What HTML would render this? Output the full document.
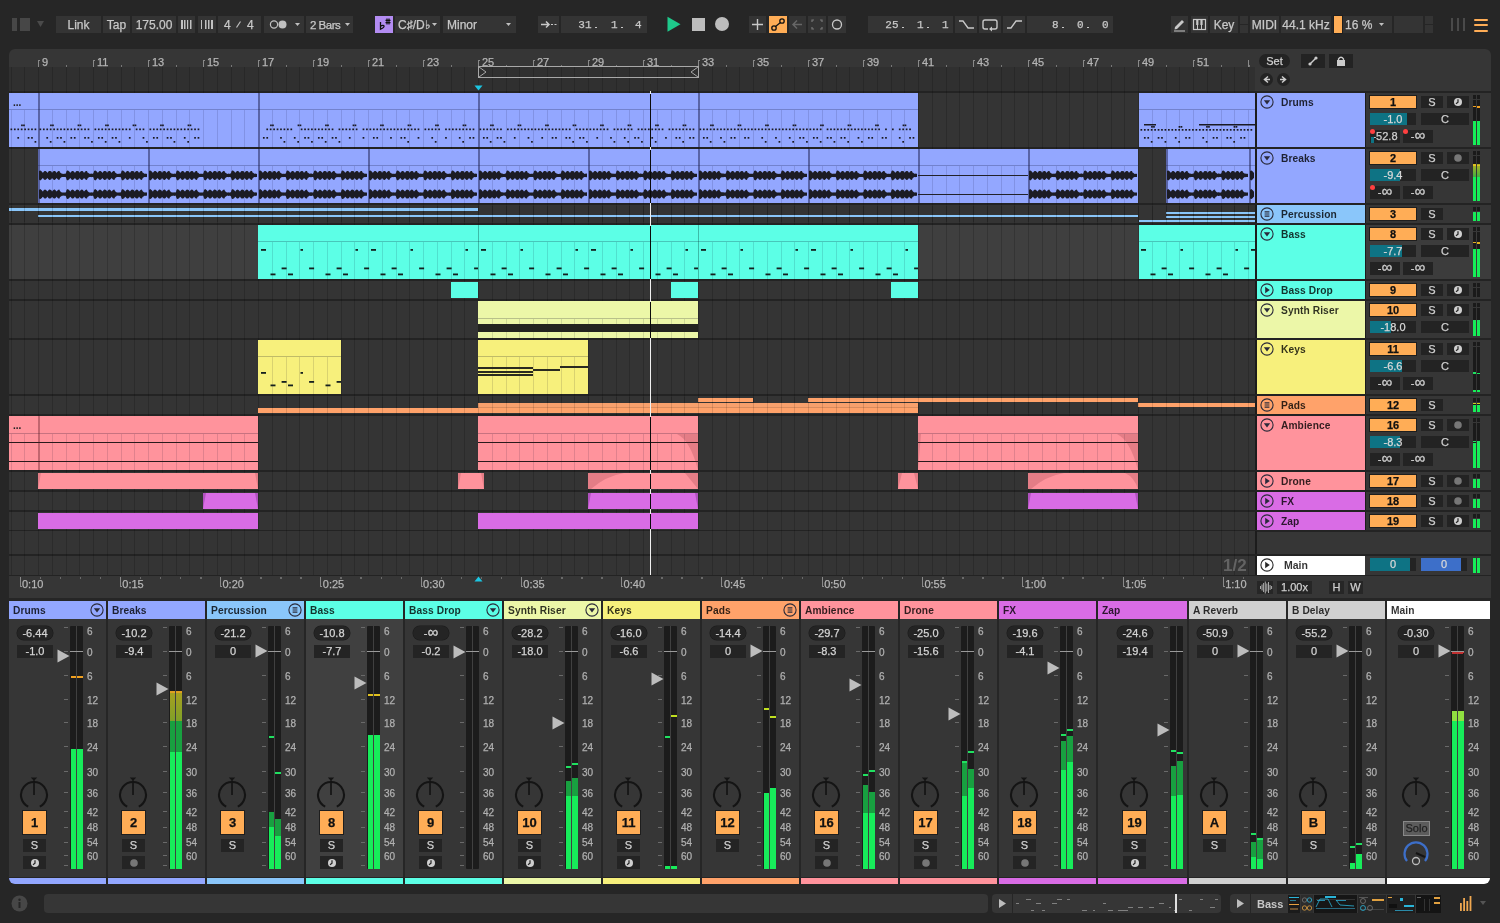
<!DOCTYPE html>
<html><head><meta charset="utf-8"><style>
html,body{margin:0;padding:0;}
body{width:1500px;height:923px;overflow:hidden;background:#262626;position:relative;font-family:"Liberation Sans",sans-serif;}
div{position:absolute;box-sizing:border-box;}
.t{white-space:nowrap;-webkit-text-stroke:0.25px currentColor;}
.b{-webkit-text-stroke:0;}
sup{vertical-align:top;}
#root{left:0;top:0;width:1500px;height:923px;will-change:transform;}
</style></head><body><div id="root">
<div style="left:12px;top:18px;width:5px;height:13px;background:#474747;"></div><div style="left:20px;top:18px;width:10px;height:13px;background:#474747;"></div><svg style="position:absolute;left:36px;top:20px;" width="9" height="8" viewBox="0 0 9 8"><path d="M1 1 L8 1 L4.5 7 Z" fill="#4a4a4a"/></svg><div style="left:56px;top:16px;width:45px;height:17px;background:#343434;"></div><div class="t" style="left:56px;top:17px;width:45px;height:17px;line-height:17px;text-align:center;font-size:12px;color:#c8c8c8;">Link</div><div style="left:103px;top:16px;width:27px;height:17px;background:#343434;"></div><div class="t" style="left:103px;top:17px;width:27px;height:17px;line-height:17px;text-align:center;font-size:12px;color:#c8c8c8;">Tap</div><div style="left:132px;top:16px;width:44px;height:17px;background:#343434;"></div><div class="t" style="left:132px;top:17px;width:44px;height:17px;line-height:17px;text-align:center;font-size:12px;color:#c8c8c8;">175.00</div><div style="left:178px;top:16px;width:17px;height:17px;background:#343434;"></div><svg style="position:absolute;left:178px;top:16px;" width="17" height="17" viewBox="0 0 17 17"><rect x="3" y="4" width="2" height="9" fill="#c0c0c0"/><rect x="6" y="4" width="1.5" height="9" fill="#c0c0c0"/><rect x="9" y="4" width="1.2" height="9" fill="#c0c0c0"/><rect x="12" y="4" width="1.5" height="9" fill="#c0c0c0"/></svg><div style="left:198px;top:16px;width:18px;height:17px;background:#343434;"></div><svg style="position:absolute;left:198px;top:16px;" width="18" height="17" viewBox="0 0 18 17"><rect x="3" y="4" width="1" height="9" fill="#c0c0c0"/><rect x="7" y="4" width="1.5" height="9" fill="#c0c0c0"/><rect x="10" y="4" width="1.5" height="9" fill="#c0c0c0"/><rect x="13" y="4" width="2" height="9" fill="#c0c0c0"/></svg><div style="left:218px;top:16px;width:43px;height:17px;background:#343434;"></div><div class="t" style="left:224px;top:17px;font-size:12px;line-height:17px;color:#c8c8c8;">4</div><div class="t" style="left:247px;top:17px;font-size:12px;line-height:17px;color:#c8c8c8;">4</div><svg style="position:absolute;left:218px;top:16px;" width="43" height="17" viewBox="0 0 43 17"><path d="M18.5 11.5 L22.5 5.5" stroke="#c0c0c0" stroke-width="1.2"/></svg><div style="left:264px;top:16px;width:40px;height:17px;background:#343434;"></div><svg style="position:absolute;left:264px;top:16px;" width="40" height="17" viewBox="0 0 40 17"><circle cx="10" cy="8.5" r="3.6" fill="none" stroke="#c0c0c0" stroke-width="1.2"/><circle cx="18.5" cy="8.5" r="4" fill="#c0c0c0"/><path d="M31 7 L36 7 L33.5 10 Z" fill="#c0c0c0"/></svg><div style="left:306px;top:16px;width:47px;height:17px;background:#343434;"></div><div class="t" style="left:310px;top:17px;width:43px;height:17px;line-height:17px;text-align:left;font-size:11.5px;color:#c8c8c8;"><span style="letter-spacing:-0.5px">2 Bars</span></div><svg style="position:absolute;left:306px;top:16px;" width="47" height="17" viewBox="0 0 47 17"><path d="M39 7 L44 7 L41.5 10 Z" fill="#c0c0c0"/></svg><div style="left:375px;top:16px;width:18px;height:17px;background:#b38cf2;"></div><svg style="position:absolute;left:375px;top:16px;" width="18" height="17" viewBox="0 0 18 17"><path d="M5.5 6 V13.2 Q9.5 11.5 9 10 Q8.5 8.6 5.5 10.2" stroke="#111" stroke-width="1.3" fill="none"/><path d="M10.5 4.3 H15.5 M10.5 6.6 H15.5 M12 2.5 V8.5 M14 2.5 V8.5" stroke="#111" stroke-width="1.2"/></svg><div style="left:395px;top:16px;width:45px;height:17px;background:#343434;"></div><div class="t" style="left:398px;top:17px;width:42px;height:17px;line-height:17px;text-align:left;font-size:12px;color:#c8c8c8;">C&#9839;/D&#9837;</div><svg style="position:absolute;left:395px;top:16px;" width="45" height="17" viewBox="0 0 45 17"><path d="M37 7 L42 7 L39.5 10 Z" fill="#c0c0c0"/></svg><div style="left:443px;top:16px;width:73px;height:17px;background:#343434;"></div><div class="t" style="left:447px;top:17px;width:69px;height:17px;line-height:17px;text-align:left;font-size:12px;color:#c8c8c8;">Minor</div><svg style="position:absolute;left:443px;top:16px;" width="73" height="17" viewBox="0 0 73 17"><path d="M63 7 L68 7 L65.5 10 Z" fill="#c0c0c0"/></svg><div style="left:538px;top:16px;width:21px;height:17px;background:#343434;"></div><svg style="position:absolute;left:538px;top:16px;" width="21" height="17" viewBox="0 0 21 17"><path d="M3 8.5 L11 8.5 M8 5.5 L11 8.5 L8 11.5" stroke="#c8c8c8" stroke-width="1.5" fill="none"/><path d="M13 8.5 L15 8.5 M16.5 8.5 L18.5 8.5" stroke="#c8c8c8" stroke-width="1.2"/></svg><div style="left:561px;top:16px;width:86px;height:17px;background:#343434;"></div><div class="t" style="left:531.5px;top:17px;width:60px;text-align:right;font-family:&quot;Liberation Mono&quot;,monospace;font-size:11px;line-height:17px;color:#c8c8c8;">31</div><div style="left:595.0px;top:26.5px;width:1.6px;height:1.6px;background:#c8c8c8;"></div><div class="t" style="left:557.5px;top:17px;width:60px;text-align:right;font-family:&quot;Liberation Mono&quot;,monospace;font-size:11px;line-height:17px;color:#c8c8c8;">1</div><div style="left:621.0px;top:26.5px;width:1.6px;height:1.6px;background:#c8c8c8;"></div><div class="t" style="left:581.5px;top:17px;width:60px;text-align:right;font-family:&quot;Liberation Mono&quot;,monospace;font-size:11px;line-height:17px;color:#c8c8c8;">4</div><div style="left:749px;top:16px;width:17px;height:17px;background:#343434;"></div><svg style="position:absolute;left:749px;top:16px;" width="17" height="17" viewBox="0 0 17 17"><path d="M8.5 3 V14 M3 8.5 H14" stroke="#c8c8c8" stroke-width="1.4"/></svg><div style="left:769px;top:16px;width:18px;height:17px;background:#ffad56;"></div><svg style="position:absolute;left:769px;top:16px;" width="18" height="17" viewBox="0 0 18 17"><circle cx="5" cy="12" r="2.2" fill="none" stroke="#111" stroke-width="1.3"/><circle cx="13" cy="5" r="2.2" fill="none" stroke="#111" stroke-width="1.3"/><path d="M6.5 10.5 L11.5 6.5" stroke="#111" stroke-width="1.3"/></svg><div style="left:789px;top:16px;width:17px;height:17px;background:#343434;"></div><svg style="position:absolute;left:789px;top:16px;" width="17" height="17" viewBox="0 0 17 17"><path d="M4 8.5 H13 M8 4.5 L4 8.5 L8 12.5" stroke="#666" stroke-width="1.5" fill="none"/></svg><div style="left:808px;top:16px;width:18px;height:17px;background:#343434;"></div><svg style="position:absolute;left:808px;top:16px;" width="18" height="17" viewBox="0 0 18 17"><path d="M4 6 V4 H6 M12 4 H14 V6 M14 11 V13 H12 M6 13 H4 V11" stroke="#777" stroke-width="1.2" fill="none"/></svg><div style="left:828px;top:16px;width:18px;height:17px;background:#343434;"></div><svg style="position:absolute;left:828px;top:16px;" width="18" height="17" viewBox="0 0 18 17"><circle cx="9" cy="8.5" r="4.5" fill="none" stroke="#c8c8c8" stroke-width="1.3"/></svg><div style="left:868px;top:16px;width:85px;height:17px;background:#343434;"></div><div class="t" style="left:838.5px;top:17px;width:60px;text-align:right;font-family:&quot;Liberation Mono&quot;,monospace;font-size:11px;line-height:17px;color:#c8c8c8;">25</div><div style="left:902.0px;top:26.5px;width:1.6px;height:1.6px;background:#c8c8c8;"></div><div class="t" style="left:863.5px;top:17px;width:60px;text-align:right;font-family:&quot;Liberation Mono&quot;,monospace;font-size:11px;line-height:17px;color:#c8c8c8;">1</div><div style="left:927.0px;top:26.5px;width:1.6px;height:1.6px;background:#c8c8c8;"></div><div class="t" style="left:888.5px;top:17px;width:60px;text-align:right;font-family:&quot;Liberation Mono&quot;,monospace;font-size:11px;line-height:17px;color:#c8c8c8;">1</div><div style="left:955px;top:16px;width:22px;height:17px;background:#343434;"></div><svg style="position:absolute;left:955px;top:16px;" width="22" height="17" viewBox="0 0 22 17"><path d="M4 5 H8 L13 12 H19" stroke="#c8c8c8" stroke-width="1.3" fill="none"/></svg><div style="left:979px;top:16px;width:22px;height:17px;background:#343434;"></div><svg style="position:absolute;left:979px;top:16px;" width="22" height="17" viewBox="0 0 22 17"><path d="M9 13 H6 Q4 13 4 11 V6 Q4 4 6 4 H16 Q18 4 18 6 V11 Q18 13 16 13 H11" stroke="#c8c8c8" stroke-width="1.4" fill="none"/><path d="M13 10.5 L10 13 L13 15.5 Z" fill="#c8c8c8"/></svg><div style="left:1003px;top:16px;width:22px;height:17px;background:#343434;"></div><svg style="position:absolute;left:1003px;top:16px;" width="22" height="17" viewBox="0 0 22 17"><path d="M4 12 H8 L13 5 H19" stroke="#c8c8c8" stroke-width="1.3" fill="none"/></svg><div style="left:1027px;top:16px;width:86px;height:17px;background:#343434;"></div><div class="t" style="left:998.5px;top:17px;width:60px;text-align:right;font-family:&quot;Liberation Mono&quot;,monospace;font-size:11px;line-height:17px;color:#c8c8c8;">8</div><div style="left:1062.0px;top:26.5px;width:1.6px;height:1.6px;background:#c8c8c8;"></div><div class="t" style="left:1023.5px;top:17px;width:60px;text-align:right;font-family:&quot;Liberation Mono&quot;,monospace;font-size:11px;line-height:17px;color:#c8c8c8;">0</div><div style="left:1087.0px;top:26.5px;width:1.6px;height:1.6px;background:#c8c8c8;"></div><div class="t" style="left:1048.5px;top:17px;width:60px;text-align:right;font-family:&quot;Liberation Mono&quot;,monospace;font-size:11px;line-height:17px;color:#c8c8c8;">0</div><div style="left:1171px;top:16px;width:17px;height:17px;background:#343434;"></div><svg style="position:absolute;left:1171px;top:16px;" width="17" height="17" viewBox="0 0 17 17"><path d="M4 11 L11 4 L13 6 L6 13 L3.5 13.5 Z" fill="#c8c8c8"/><path d="M3 15 H14" stroke="#c8c8c8" stroke-width="1"/></svg><div style="left:1191px;top:16px;width:17px;height:17px;background:#343434;"></div><svg style="position:absolute;left:1191px;top:16px;" width="17" height="17" viewBox="0 0 17 17"><rect x="2.5" y="3.5" width="12" height="10" fill="none" stroke="#c8c8c8" stroke-width="1.2"/><path d="M6.5 3.5 V13.5 M10.5 3.5 V13.5" stroke="#c8c8c8" stroke-width="1"/><rect x="5.2" y="3.5" width="2.2" height="5.5" fill="#c8c8c8"/><rect x="9.4" y="3.5" width="2.2" height="5.5" fill="#c8c8c8"/></svg><div style="left:1210px;top:16px;width:28px;height:17px;background:#343434;"></div><div class="t" style="left:1210px;top:17px;width:28px;height:17px;line-height:17px;text-align:center;font-size:12px;color:#c8c8c8;">Key</div><div style="left:1240px;top:16px;width:8px;height:8px;background:#343434;"></div><div style="left:1240px;top:25px;width:8px;height:8px;background:#343434;"></div><div style="left:1250px;top:16px;width:29px;height:17px;background:#343434;"></div><div class="t" style="left:1250px;top:17px;width:29px;height:17px;line-height:17px;text-align:center;font-size:12px;color:#c8c8c8;">MIDI</div><div style="left:1281px;top:16px;width:50px;height:17px;background:#343434;"></div><div class="t" style="left:1281px;top:17px;width:50px;height:17px;line-height:17px;text-align:center;font-size:12px;color:#c8c8c8;">44.1 kHz</div><div style="left:1334px;top:16px;width:58px;height:17px;background:#343434;"></div><div style="left:1334px;top:16px;width:8px;height:17px;background:#ffad56;box-shadow:0 0 0 1px #1e1e1e;"></div><div class="t" style="left:1345px;top:17px;font-size:12px;color:#c8c8c8;line-height:17px;">16 %</div><svg style="position:absolute;left:1334px;top:16px;" width="58" height="17" viewBox="0 0 58 17"><path d="M45 7 L50 7 L47.5 10 Z" fill="#c0c0c0"/></svg><div style="left:1394px;top:16px;width:29px;height:17px;background:#343434;"></div><div style="left:1425px;top:16px;width:8px;height:8px;background:#343434;"></div><div style="left:1425px;top:25px;width:8px;height:8px;background:#343434;"></div><div style="left:1451px;top:18px;width:1.6px;height:13px;background:#4a4a4a;"></div><div style="left:1457px;top:18px;width:1.6px;height:13px;background:#4a4a4a;"></div><div style="left:1463px;top:18px;width:1.6px;height:13px;background:#4a4a4a;"></div><div style="left:1474px;top:18.5px;width:14px;height:2.2px;background:#ffad56;border-radius:1px;"></div><div style="left:1474px;top:24px;width:14px;height:2.2px;background:#ffad56;border-radius:1px;"></div><div style="left:1474px;top:29.5px;width:14px;height:2.2px;background:#ffad56;border-radius:1px;"></div><svg style="position:absolute;left:666px;top:16px;" width="16" height="17" viewBox="0 0 16 17"><path d="M1.5 0.8 L14.5 8.2 L1.5 15.8 Z" fill="#1ec98b"/></svg><div style="left:692px;top:18px;width:13px;height:13px;background:#bdbdbd;"></div><div style="left:715px;top:17px;width:14px;height:14px;background:#bdbdbd;border-radius:50%;"></div><div style="left:9px;top:49px;width:1482px;height:549px;background:#363636;border-radius:6px 6px 0 0;"></div><div style="left:9px;top:67px;width:1246px;height:24px;background:#303030;"></div><div style="left:9px;top:91px;width:1482px;height:2px;background:#232323;"></div><div style="left:9px;top:93px;width:1246px;height:54px;background:#343434;"></div><div style="left:9px;top:147px;width:1482px;height:2px;background:#232323;"></div><div style="left:9px;top:149px;width:1246px;height:54px;background:#343434;"></div><div style="left:9px;top:203px;width:1482px;height:2px;background:#232323;"></div><div style="left:9px;top:205px;width:1246px;height:18px;background:#343434;"></div><div style="left:9px;top:223px;width:1482px;height:2px;background:#232323;"></div><div style="left:9px;top:225px;width:1246px;height:54px;background:#3f3f3f;"></div><div style="left:9px;top:279px;width:1482px;height:2px;background:#232323;"></div><div style="left:9px;top:281px;width:1246px;height:18px;background:#343434;"></div><div style="left:9px;top:299px;width:1482px;height:2px;background:#232323;"></div><div style="left:9px;top:301px;width:1246px;height:37px;background:#343434;"></div><div style="left:9px;top:338px;width:1482px;height:2px;background:#232323;"></div><div style="left:9px;top:340px;width:1246px;height:54px;background:#343434;"></div><div style="left:9px;top:394px;width:1482px;height:2px;background:#232323;"></div><div style="left:9px;top:396px;width:1246px;height:18px;background:#343434;"></div><div style="left:9px;top:414px;width:1482px;height:2px;background:#232323;"></div><div style="left:9px;top:416px;width:1246px;height:54px;background:#343434;"></div><div style="left:9px;top:470px;width:1482px;height:2px;background:#232323;"></div><div style="left:9px;top:472px;width:1246px;height:18px;background:#343434;"></div><div style="left:9px;top:490px;width:1482px;height:2px;background:#232323;"></div><div style="left:9px;top:492px;width:1246px;height:18px;background:#343434;"></div><div style="left:9px;top:510px;width:1482px;height:2px;background:#232323;"></div><div style="left:9px;top:512px;width:1246px;height:18px;background:#343434;"></div><div style="left:9px;top:530px;width:1482px;height:2px;background:#232323;"></div><div style="left:9px;top:531px;width:1246px;height:23px;background:#343434;"></div><div style="left:1255px;top:531px;width:2px;height:23px;background:#1c1c1c;"></div><div style="left:9px;top:554px;width:1482px;height:2px;background:#232323;"></div><div style="left:9px;top:556px;width:1246px;height:19px;background:#343434;"></div><div style="left:9px;top:575px;width:1482px;height:1px;background:#232323;"></div><div style="left:10.50px;top:67px;width:1px;height:508px;background:rgba(0,0,0,0.16);"></div><div style="left:24.25px;top:67px;width:1px;height:508px;background:rgba(0,0,0,0.16);"></div><div style="left:38.00px;top:67px;width:1px;height:508px;background:rgba(0,0,0,0.16);"></div><div style="left:51.75px;top:67px;width:1px;height:508px;background:rgba(0,0,0,0.16);"></div><div style="left:65.50px;top:67px;width:1px;height:508px;background:rgba(0,0,0,0.16);"></div><div style="left:79.25px;top:67px;width:1px;height:508px;background:rgba(0,0,0,0.16);"></div><div style="left:93.00px;top:67px;width:1px;height:508px;background:rgba(0,0,0,0.16);"></div><div style="left:106.75px;top:67px;width:1px;height:508px;background:rgba(0,0,0,0.16);"></div><div style="left:120.50px;top:67px;width:1px;height:508px;background:rgba(0,0,0,0.16);"></div><div style="left:134.25px;top:67px;width:1px;height:508px;background:rgba(0,0,0,0.16);"></div><div style="left:148.00px;top:67px;width:1px;height:508px;background:rgba(0,0,0,0.16);"></div><div style="left:161.75px;top:67px;width:1px;height:508px;background:rgba(0,0,0,0.16);"></div><div style="left:175.50px;top:67px;width:1px;height:508px;background:rgba(0,0,0,0.16);"></div><div style="left:189.25px;top:67px;width:1px;height:508px;background:rgba(0,0,0,0.16);"></div><div style="left:203.00px;top:67px;width:1px;height:508px;background:rgba(0,0,0,0.16);"></div><div style="left:216.75px;top:67px;width:1px;height:508px;background:rgba(0,0,0,0.16);"></div><div style="left:230.50px;top:67px;width:1px;height:508px;background:rgba(0,0,0,0.16);"></div><div style="left:244.25px;top:67px;width:1px;height:508px;background:rgba(0,0,0,0.16);"></div><div style="left:258.00px;top:67px;width:1px;height:508px;background:rgba(0,0,0,0.16);"></div><div style="left:271.75px;top:67px;width:1px;height:508px;background:rgba(0,0,0,0.16);"></div><div style="left:285.50px;top:67px;width:1px;height:508px;background:rgba(0,0,0,0.16);"></div><div style="left:299.25px;top:67px;width:1px;height:508px;background:rgba(0,0,0,0.16);"></div><div style="left:313.00px;top:67px;width:1px;height:508px;background:rgba(0,0,0,0.16);"></div><div style="left:326.75px;top:67px;width:1px;height:508px;background:rgba(0,0,0,0.16);"></div><div style="left:340.50px;top:67px;width:1px;height:508px;background:rgba(0,0,0,0.16);"></div><div style="left:354.25px;top:67px;width:1px;height:508px;background:rgba(0,0,0,0.16);"></div><div style="left:368.00px;top:67px;width:1px;height:508px;background:rgba(0,0,0,0.16);"></div><div style="left:381.75px;top:67px;width:1px;height:508px;background:rgba(0,0,0,0.16);"></div><div style="left:395.50px;top:67px;width:1px;height:508px;background:rgba(0,0,0,0.16);"></div><div style="left:409.25px;top:67px;width:1px;height:508px;background:rgba(0,0,0,0.16);"></div><div style="left:423.00px;top:67px;width:1px;height:508px;background:rgba(0,0,0,0.16);"></div><div style="left:436.75px;top:67px;width:1px;height:508px;background:rgba(0,0,0,0.16);"></div><div style="left:450.50px;top:67px;width:1px;height:508px;background:rgba(0,0,0,0.16);"></div><div style="left:464.25px;top:67px;width:1px;height:508px;background:rgba(0,0,0,0.16);"></div><div style="left:478.00px;top:67px;width:1px;height:508px;background:rgba(0,0,0,0.16);"></div><div style="left:491.75px;top:67px;width:1px;height:508px;background:rgba(0,0,0,0.16);"></div><div style="left:505.50px;top:67px;width:1px;height:508px;background:rgba(0,0,0,0.16);"></div><div style="left:519.25px;top:67px;width:1px;height:508px;background:rgba(0,0,0,0.16);"></div><div style="left:533.00px;top:67px;width:1px;height:508px;background:rgba(0,0,0,0.16);"></div><div style="left:546.75px;top:67px;width:1px;height:508px;background:rgba(0,0,0,0.16);"></div><div style="left:560.50px;top:67px;width:1px;height:508px;background:rgba(0,0,0,0.16);"></div><div style="left:574.25px;top:67px;width:1px;height:508px;background:rgba(0,0,0,0.16);"></div><div style="left:588.00px;top:67px;width:1px;height:508px;background:rgba(0,0,0,0.16);"></div><div style="left:601.75px;top:67px;width:1px;height:508px;background:rgba(0,0,0,0.16);"></div><div style="left:615.50px;top:67px;width:1px;height:508px;background:rgba(0,0,0,0.16);"></div><div style="left:629.25px;top:67px;width:1px;height:508px;background:rgba(0,0,0,0.16);"></div><div style="left:643.00px;top:67px;width:1px;height:508px;background:rgba(0,0,0,0.16);"></div><div style="left:656.75px;top:67px;width:1px;height:508px;background:rgba(0,0,0,0.16);"></div><div style="left:670.50px;top:67px;width:1px;height:508px;background:rgba(0,0,0,0.16);"></div><div style="left:684.25px;top:67px;width:1px;height:508px;background:rgba(0,0,0,0.16);"></div><div style="left:698.00px;top:67px;width:1px;height:508px;background:rgba(0,0,0,0.16);"></div><div style="left:711.75px;top:67px;width:1px;height:508px;background:rgba(0,0,0,0.16);"></div><div style="left:725.50px;top:67px;width:1px;height:508px;background:rgba(0,0,0,0.16);"></div><div style="left:739.25px;top:67px;width:1px;height:508px;background:rgba(0,0,0,0.16);"></div><div style="left:753.00px;top:67px;width:1px;height:508px;background:rgba(0,0,0,0.16);"></div><div style="left:766.75px;top:67px;width:1px;height:508px;background:rgba(0,0,0,0.16);"></div><div style="left:780.50px;top:67px;width:1px;height:508px;background:rgba(0,0,0,0.16);"></div><div style="left:794.25px;top:67px;width:1px;height:508px;background:rgba(0,0,0,0.16);"></div><div style="left:808.00px;top:67px;width:1px;height:508px;background:rgba(0,0,0,0.16);"></div><div style="left:821.75px;top:67px;width:1px;height:508px;background:rgba(0,0,0,0.16);"></div><div style="left:835.50px;top:67px;width:1px;height:508px;background:rgba(0,0,0,0.16);"></div><div style="left:849.25px;top:67px;width:1px;height:508px;background:rgba(0,0,0,0.16);"></div><div style="left:863.00px;top:67px;width:1px;height:508px;background:rgba(0,0,0,0.16);"></div><div style="left:876.75px;top:67px;width:1px;height:508px;background:rgba(0,0,0,0.16);"></div><div style="left:890.50px;top:67px;width:1px;height:508px;background:rgba(0,0,0,0.16);"></div><div style="left:904.25px;top:67px;width:1px;height:508px;background:rgba(0,0,0,0.16);"></div><div style="left:918.00px;top:67px;width:1px;height:508px;background:rgba(0,0,0,0.16);"></div><div style="left:931.75px;top:67px;width:1px;height:508px;background:rgba(0,0,0,0.16);"></div><div style="left:945.50px;top:67px;width:1px;height:508px;background:rgba(0,0,0,0.16);"></div><div style="left:959.25px;top:67px;width:1px;height:508px;background:rgba(0,0,0,0.16);"></div><div style="left:973.00px;top:67px;width:1px;height:508px;background:rgba(0,0,0,0.16);"></div><div style="left:986.75px;top:67px;width:1px;height:508px;background:rgba(0,0,0,0.16);"></div><div style="left:1000.50px;top:67px;width:1px;height:508px;background:rgba(0,0,0,0.16);"></div><div style="left:1014.25px;top:67px;width:1px;height:508px;background:rgba(0,0,0,0.16);"></div><div style="left:1028.00px;top:67px;width:1px;height:508px;background:rgba(0,0,0,0.16);"></div><div style="left:1041.75px;top:67px;width:1px;height:508px;background:rgba(0,0,0,0.16);"></div><div style="left:1055.50px;top:67px;width:1px;height:508px;background:rgba(0,0,0,0.16);"></div><div style="left:1069.25px;top:67px;width:1px;height:508px;background:rgba(0,0,0,0.16);"></div><div style="left:1083.00px;top:67px;width:1px;height:508px;background:rgba(0,0,0,0.16);"></div><div style="left:1096.75px;top:67px;width:1px;height:508px;background:rgba(0,0,0,0.16);"></div><div style="left:1110.50px;top:67px;width:1px;height:508px;background:rgba(0,0,0,0.16);"></div><div style="left:1124.25px;top:67px;width:1px;height:508px;background:rgba(0,0,0,0.16);"></div><div style="left:1138.00px;top:67px;width:1px;height:508px;background:rgba(0,0,0,0.16);"></div><div style="left:1151.75px;top:67px;width:1px;height:508px;background:rgba(0,0,0,0.16);"></div><div style="left:1165.50px;top:67px;width:1px;height:508px;background:rgba(0,0,0,0.16);"></div><div style="left:1179.25px;top:67px;width:1px;height:508px;background:rgba(0,0,0,0.16);"></div><div style="left:1193.00px;top:67px;width:1px;height:508px;background:rgba(0,0,0,0.16);"></div><div style="left:1206.75px;top:67px;width:1px;height:508px;background:rgba(0,0,0,0.16);"></div><div style="left:1220.50px;top:67px;width:1px;height:508px;background:rgba(0,0,0,0.16);"></div><div style="left:1234.25px;top:67px;width:1px;height:508px;background:rgba(0,0,0,0.16);"></div><div style="left:1248.00px;top:67px;width:1px;height:508px;background:rgba(0,0,0,0.16);"></div><div style="left:9px;top:93px;width:29px;height:54px;background:#93a7ff;"></div><div style="left:9px;top:109px;width:29px;height:1px;background:rgba(0,0,30,0.22);"></div><div style="left:10.50px;top:110px;width:1px;height:37px;background:rgba(0,0,30,0.12);"></div><div style="left:24.25px;top:110px;width:1px;height:37px;background:rgba(0,0,30,0.12);"></div><div style="left:38px;top:93px;width:220px;height:54px;background:#93a7ff;"></div><div style="left:38px;top:109px;width:220px;height:1px;background:rgba(0,0,30,0.22);"></div><div style="left:51.75px;top:110px;width:1px;height:37px;background:rgba(0,0,30,0.12);"></div><div style="left:65.50px;top:110px;width:1px;height:37px;background:rgba(0,0,30,0.12);"></div><div style="left:79.25px;top:110px;width:1px;height:37px;background:rgba(0,0,30,0.12);"></div><div style="left:93.00px;top:110px;width:1px;height:37px;background:rgba(0,0,30,0.12);"></div><div style="left:106.75px;top:110px;width:1px;height:37px;background:rgba(0,0,30,0.12);"></div><div style="left:120.50px;top:110px;width:1px;height:37px;background:rgba(0,0,30,0.12);"></div><div style="left:134.25px;top:110px;width:1px;height:37px;background:rgba(0,0,30,0.12);"></div><div style="left:148.00px;top:110px;width:1px;height:37px;background:rgba(0,0,30,0.12);"></div><div style="left:161.75px;top:110px;width:1px;height:37px;background:rgba(0,0,30,0.12);"></div><div style="left:175.50px;top:110px;width:1px;height:37px;background:rgba(0,0,30,0.12);"></div><div style="left:189.25px;top:110px;width:1px;height:37px;background:rgba(0,0,30,0.12);"></div><div style="left:203.00px;top:110px;width:1px;height:37px;background:rgba(0,0,30,0.12);"></div><div style="left:216.75px;top:110px;width:1px;height:37px;background:rgba(0,0,30,0.12);"></div><div style="left:230.50px;top:110px;width:1px;height:37px;background:rgba(0,0,30,0.12);"></div><div style="left:244.25px;top:110px;width:1px;height:37px;background:rgba(0,0,30,0.12);"></div><div style="left:258px;top:93px;width:220px;height:54px;background:#93a7ff;"></div><div style="left:258px;top:109px;width:220px;height:1px;background:rgba(0,0,30,0.22);"></div><div style="left:271.75px;top:110px;width:1px;height:37px;background:rgba(0,0,30,0.12);"></div><div style="left:285.50px;top:110px;width:1px;height:37px;background:rgba(0,0,30,0.12);"></div><div style="left:299.25px;top:110px;width:1px;height:37px;background:rgba(0,0,30,0.12);"></div><div style="left:313.00px;top:110px;width:1px;height:37px;background:rgba(0,0,30,0.12);"></div><div style="left:326.75px;top:110px;width:1px;height:37px;background:rgba(0,0,30,0.12);"></div><div style="left:340.50px;top:110px;width:1px;height:37px;background:rgba(0,0,30,0.12);"></div><div style="left:354.25px;top:110px;width:1px;height:37px;background:rgba(0,0,30,0.12);"></div><div style="left:368.00px;top:110px;width:1px;height:37px;background:rgba(0,0,30,0.12);"></div><div style="left:381.75px;top:110px;width:1px;height:37px;background:rgba(0,0,30,0.12);"></div><div style="left:395.50px;top:110px;width:1px;height:37px;background:rgba(0,0,30,0.12);"></div><div style="left:409.25px;top:110px;width:1px;height:37px;background:rgba(0,0,30,0.12);"></div><div style="left:423.00px;top:110px;width:1px;height:37px;background:rgba(0,0,30,0.12);"></div><div style="left:436.75px;top:110px;width:1px;height:37px;background:rgba(0,0,30,0.12);"></div><div style="left:450.50px;top:110px;width:1px;height:37px;background:rgba(0,0,30,0.12);"></div><div style="left:464.25px;top:110px;width:1px;height:37px;background:rgba(0,0,30,0.12);"></div><div style="left:478px;top:93px;width:220px;height:54px;background:#93a7ff;"></div><div style="left:478px;top:109px;width:220px;height:1px;background:rgba(0,0,30,0.22);"></div><div style="left:491.75px;top:110px;width:1px;height:37px;background:rgba(0,0,30,0.12);"></div><div style="left:505.50px;top:110px;width:1px;height:37px;background:rgba(0,0,30,0.12);"></div><div style="left:519.25px;top:110px;width:1px;height:37px;background:rgba(0,0,30,0.12);"></div><div style="left:533.00px;top:110px;width:1px;height:37px;background:rgba(0,0,30,0.12);"></div><div style="left:546.75px;top:110px;width:1px;height:37px;background:rgba(0,0,30,0.12);"></div><div style="left:560.50px;top:110px;width:1px;height:37px;background:rgba(0,0,30,0.12);"></div><div style="left:574.25px;top:110px;width:1px;height:37px;background:rgba(0,0,30,0.12);"></div><div style="left:588.00px;top:110px;width:1px;height:37px;background:rgba(0,0,30,0.12);"></div><div style="left:601.75px;top:110px;width:1px;height:37px;background:rgba(0,0,30,0.12);"></div><div style="left:615.50px;top:110px;width:1px;height:37px;background:rgba(0,0,30,0.12);"></div><div style="left:629.25px;top:110px;width:1px;height:37px;background:rgba(0,0,30,0.12);"></div><div style="left:643.00px;top:110px;width:1px;height:37px;background:rgba(0,0,30,0.12);"></div><div style="left:656.75px;top:110px;width:1px;height:37px;background:rgba(0,0,30,0.12);"></div><div style="left:670.50px;top:110px;width:1px;height:37px;background:rgba(0,0,30,0.12);"></div><div style="left:684.25px;top:110px;width:1px;height:37px;background:rgba(0,0,30,0.12);"></div><div style="left:698px;top:93px;width:220px;height:54px;background:#93a7ff;"></div><div style="left:698px;top:109px;width:220px;height:1px;background:rgba(0,0,30,0.22);"></div><div style="left:711.75px;top:110px;width:1px;height:37px;background:rgba(0,0,30,0.12);"></div><div style="left:725.50px;top:110px;width:1px;height:37px;background:rgba(0,0,30,0.12);"></div><div style="left:739.25px;top:110px;width:1px;height:37px;background:rgba(0,0,30,0.12);"></div><div style="left:753.00px;top:110px;width:1px;height:37px;background:rgba(0,0,30,0.12);"></div><div style="left:766.75px;top:110px;width:1px;height:37px;background:rgba(0,0,30,0.12);"></div><div style="left:780.50px;top:110px;width:1px;height:37px;background:rgba(0,0,30,0.12);"></div><div style="left:794.25px;top:110px;width:1px;height:37px;background:rgba(0,0,30,0.12);"></div><div style="left:808.00px;top:110px;width:1px;height:37px;background:rgba(0,0,30,0.12);"></div><div style="left:821.75px;top:110px;width:1px;height:37px;background:rgba(0,0,30,0.12);"></div><div style="left:835.50px;top:110px;width:1px;height:37px;background:rgba(0,0,30,0.12);"></div><div style="left:849.25px;top:110px;width:1px;height:37px;background:rgba(0,0,30,0.12);"></div><div style="left:863.00px;top:110px;width:1px;height:37px;background:rgba(0,0,30,0.12);"></div><div style="left:876.75px;top:110px;width:1px;height:37px;background:rgba(0,0,30,0.12);"></div><div style="left:890.50px;top:110px;width:1px;height:37px;background:rgba(0,0,30,0.12);"></div><div style="left:904.25px;top:110px;width:1px;height:37px;background:rgba(0,0,30,0.12);"></div><div style="left:1139px;top:93px;width:116px;height:54px;background:#93a7ff;"></div><div style="left:1139px;top:109px;width:116px;height:1px;background:rgba(0,0,30,0.22);"></div><div style="left:1151.75px;top:110px;width:1px;height:37px;background:rgba(0,0,30,0.12);"></div><div style="left:1165.50px;top:110px;width:1px;height:37px;background:rgba(0,0,30,0.12);"></div><div style="left:1179.25px;top:110px;width:1px;height:37px;background:rgba(0,0,30,0.12);"></div><div style="left:1193.00px;top:110px;width:1px;height:37px;background:rgba(0,0,30,0.12);"></div><div style="left:1206.75px;top:110px;width:1px;height:37px;background:rgba(0,0,30,0.12);"></div><div style="left:1220.50px;top:110px;width:1px;height:37px;background:rgba(0,0,30,0.12);"></div><div style="left:1234.25px;top:110px;width:1px;height:37px;background:rgba(0,0,30,0.12);"></div><div style="left:1248.00px;top:110px;width:1px;height:37px;background:rgba(0,0,30,0.12);"></div><div style="left:38px;top:93px;width:1.5px;height:54px;background:rgba(20,20,60,0.45);"></div><div style="left:258px;top:93px;width:1.5px;height:54px;background:rgba(20,20,60,0.45);"></div><div style="left:478px;top:93px;width:1.5px;height:54px;background:rgba(20,20,60,0.45);"></div><div style="left:698px;top:93px;width:1.5px;height:54px;background:rgba(20,20,60,0.45);"></div><div class="t b" style="left:13px;top:97.5px;font-size:10px;color:#222;line-height:10px;font-weight:bold;letter-spacing:0px;">...</div><svg style="position:absolute;left:38px;top:93px;" width="220" height="54" viewBox="0 0 220 54"><rect x="1.50" y="35.5" width="1.7" height="1.7" fill="#1a1a22"/><rect x="4.94" y="35.5" width="1.7" height="1.7" fill="#1a1a22"/><rect x="8.38" y="35.5" width="1.7" height="1.7" fill="#1a1a22"/><rect x="8.38" y="44.0" width="1.7" height="1.7" fill="#1a1a22"/><rect x="11.81" y="35.5" width="1.7" height="1.7" fill="#1a1a22"/><rect x="12.11" y="31.5" width="1.7" height="1.7" fill="#1a1a22"/><rect x="14.11" y="31.5" width="1.7" height="1.7" fill="#1a1a22"/><rect x="11.81" y="48.0" width="1.7" height="1.7" fill="#1a1a22"/><rect x="15.25" y="35.5" width="1.7" height="1.7" fill="#1a1a22"/><rect x="18.69" y="35.5" width="1.7" height="1.7" fill="#1a1a22"/><rect x="18.69" y="44.0" width="1.7" height="1.7" fill="#1a1a22"/><rect x="22.12" y="35.5" width="1.7" height="1.7" fill="#1a1a22"/><rect x="22.12" y="44.0" width="1.7" height="1.7" fill="#1a1a22"/><rect x="25.56" y="35.5" width="1.7" height="1.7" fill="#1a1a22"/><rect x="25.56" y="48.0" width="1.7" height="1.7" fill="#1a1a22"/><rect x="29.00" y="35.5" width="1.7" height="1.7" fill="#1a1a22"/><rect x="32.44" y="35.5" width="1.7" height="1.7" fill="#1a1a22"/><rect x="32.44" y="44.0" width="1.7" height="1.7" fill="#1a1a22"/><rect x="35.88" y="35.5" width="1.7" height="1.7" fill="#1a1a22"/><rect x="35.88" y="44.0" width="1.7" height="1.7" fill="#1a1a22"/><rect x="39.31" y="35.5" width="1.7" height="1.7" fill="#1a1a22"/><rect x="39.61" y="31.5" width="1.7" height="1.7" fill="#1a1a22"/><rect x="41.61" y="31.5" width="1.7" height="1.7" fill="#1a1a22"/><rect x="42.75" y="35.5" width="1.7" height="1.7" fill="#1a1a22"/><rect x="46.19" y="35.5" width="1.7" height="1.7" fill="#1a1a22"/><rect x="46.19" y="44.0" width="1.7" height="1.7" fill="#1a1a22"/><rect x="49.62" y="35.5" width="1.7" height="1.7" fill="#1a1a22"/><rect x="49.62" y="44.0" width="1.7" height="1.7" fill="#1a1a22"/><rect x="53.06" y="48.0" width="1.7" height="1.7" fill="#1a1a22"/><rect x="56.50" y="35.5" width="1.7" height="1.7" fill="#1a1a22"/><rect x="59.94" y="35.5" width="1.7" height="1.7" fill="#1a1a22"/><rect x="59.94" y="44.0" width="1.7" height="1.7" fill="#1a1a22"/><rect x="63.38" y="35.5" width="1.7" height="1.7" fill="#1a1a22"/><rect x="63.38" y="44.0" width="1.7" height="1.7" fill="#1a1a22"/><rect x="66.81" y="35.5" width="1.7" height="1.7" fill="#1a1a22"/><rect x="67.11" y="31.5" width="1.7" height="1.7" fill="#1a1a22"/><rect x="69.11" y="31.5" width="1.7" height="1.7" fill="#1a1a22"/><rect x="66.81" y="48.0" width="1.7" height="1.7" fill="#1a1a22"/><rect x="70.25" y="35.5" width="1.7" height="1.7" fill="#1a1a22"/><rect x="73.69" y="35.5" width="1.7" height="1.7" fill="#1a1a22"/><rect x="73.69" y="44.0" width="1.7" height="1.7" fill="#1a1a22"/><rect x="77.12" y="35.5" width="1.7" height="1.7" fill="#1a1a22"/><rect x="77.12" y="44.0" width="1.7" height="1.7" fill="#1a1a22"/><rect x="80.56" y="35.5" width="1.7" height="1.7" fill="#1a1a22"/><rect x="80.56" y="48.0" width="1.7" height="1.7" fill="#1a1a22"/><rect x="84.00" y="35.5" width="1.7" height="1.7" fill="#1a1a22"/><rect x="87.44" y="35.5" width="1.7" height="1.7" fill="#1a1a22"/><rect x="90.88" y="35.5" width="1.7" height="1.7" fill="#1a1a22"/><rect x="90.88" y="44.0" width="1.7" height="1.7" fill="#1a1a22"/><rect x="94.61" y="31.5" width="1.7" height="1.7" fill="#1a1a22"/><rect x="96.61" y="31.5" width="1.7" height="1.7" fill="#1a1a22"/><rect x="97.75" y="35.5" width="1.7" height="1.7" fill="#1a1a22"/><rect x="101.19" y="35.5" width="1.7" height="1.7" fill="#1a1a22"/><rect x="104.62" y="35.5" width="1.7" height="1.7" fill="#1a1a22"/><rect x="104.62" y="44.0" width="1.7" height="1.7" fill="#1a1a22"/><rect x="108.06" y="48.0" width="1.7" height="1.7" fill="#1a1a22"/><rect x="111.50" y="35.5" width="1.7" height="1.7" fill="#1a1a22"/><rect x="114.94" y="35.5" width="1.7" height="1.7" fill="#1a1a22"/><rect x="114.94" y="44.0" width="1.7" height="1.7" fill="#1a1a22"/><rect x="118.38" y="35.5" width="1.7" height="1.7" fill="#1a1a22"/><rect x="118.38" y="44.0" width="1.7" height="1.7" fill="#1a1a22"/><rect x="121.81" y="35.5" width="1.7" height="1.7" fill="#1a1a22"/><rect x="122.11" y="31.5" width="1.7" height="1.7" fill="#1a1a22"/><rect x="124.11" y="31.5" width="1.7" height="1.7" fill="#1a1a22"/><rect x="125.25" y="35.5" width="1.7" height="1.7" fill="#1a1a22"/><rect x="128.69" y="35.5" width="1.7" height="1.7" fill="#1a1a22"/><rect x="128.69" y="44.0" width="1.7" height="1.7" fill="#1a1a22"/><rect x="132.12" y="35.5" width="1.7" height="1.7" fill="#1a1a22"/><rect x="132.12" y="44.0" width="1.7" height="1.7" fill="#1a1a22"/><rect x="135.56" y="35.5" width="1.7" height="1.7" fill="#1a1a22"/><rect x="135.56" y="48.0" width="1.7" height="1.7" fill="#1a1a22"/><rect x="139.00" y="35.5" width="1.7" height="1.7" fill="#1a1a22"/><rect x="142.44" y="35.5" width="1.7" height="1.7" fill="#1a1a22"/><rect x="145.88" y="35.5" width="1.7" height="1.7" fill="#1a1a22"/><rect x="145.88" y="44.0" width="1.7" height="1.7" fill="#1a1a22"/><rect x="149.31" y="35.5" width="1.7" height="1.7" fill="#1a1a22"/><rect x="149.61" y="31.5" width="1.7" height="1.7" fill="#1a1a22"/><rect x="151.61" y="31.5" width="1.7" height="1.7" fill="#1a1a22"/><rect x="149.31" y="48.0" width="1.7" height="1.7" fill="#1a1a22"/><rect x="152.75" y="35.5" width="1.7" height="1.7" fill="#1a1a22"/><rect x="156.19" y="35.5" width="1.7" height="1.7" fill="#1a1a22"/><rect x="156.19" y="44.0" width="1.7" height="1.7" fill="#1a1a22"/><rect x="159.62" y="35.5" width="1.7" height="1.7" fill="#1a1a22"/><rect x="159.62" y="44.0" width="1.7" height="1.7" fill="#1a1a22"/></svg><svg style="position:absolute;left:258px;top:93px;" width="220" height="54" viewBox="0 0 220 54"><rect x="4.94" y="44.0" width="1.7" height="1.7" fill="#1a1a22"/><rect x="8.38" y="35.5" width="1.7" height="1.7" fill="#1a1a22"/><rect x="8.38" y="44.0" width="1.7" height="1.7" fill="#1a1a22"/><rect x="11.81" y="35.5" width="1.7" height="1.7" fill="#1a1a22"/><rect x="12.11" y="31.5" width="1.7" height="1.7" fill="#1a1a22"/><rect x="14.11" y="31.5" width="1.7" height="1.7" fill="#1a1a22"/><rect x="15.25" y="35.5" width="1.7" height="1.7" fill="#1a1a22"/><rect x="18.69" y="35.5" width="1.7" height="1.7" fill="#1a1a22"/><rect x="22.12" y="35.5" width="1.7" height="1.7" fill="#1a1a22"/><rect x="22.12" y="44.0" width="1.7" height="1.7" fill="#1a1a22"/><rect x="25.56" y="35.5" width="1.7" height="1.7" fill="#1a1a22"/><rect x="25.56" y="48.0" width="1.7" height="1.7" fill="#1a1a22"/><rect x="29.00" y="35.5" width="1.7" height="1.7" fill="#1a1a22"/><rect x="32.44" y="35.5" width="1.7" height="1.7" fill="#1a1a22"/><rect x="35.88" y="44.0" width="1.7" height="1.7" fill="#1a1a22"/><rect x="39.61" y="31.5" width="1.7" height="1.7" fill="#1a1a22"/><rect x="41.61" y="31.5" width="1.7" height="1.7" fill="#1a1a22"/><rect x="39.31" y="48.0" width="1.7" height="1.7" fill="#1a1a22"/><rect x="42.75" y="35.5" width="1.7" height="1.7" fill="#1a1a22"/><rect x="46.19" y="35.5" width="1.7" height="1.7" fill="#1a1a22"/><rect x="46.19" y="44.0" width="1.7" height="1.7" fill="#1a1a22"/><rect x="49.62" y="35.5" width="1.7" height="1.7" fill="#1a1a22"/><rect x="49.62" y="44.0" width="1.7" height="1.7" fill="#1a1a22"/><rect x="53.06" y="35.5" width="1.7" height="1.7" fill="#1a1a22"/><rect x="53.06" y="48.0" width="1.7" height="1.7" fill="#1a1a22"/><rect x="56.50" y="35.5" width="1.7" height="1.7" fill="#1a1a22"/><rect x="59.94" y="35.5" width="1.7" height="1.7" fill="#1a1a22"/><rect x="59.94" y="44.0" width="1.7" height="1.7" fill="#1a1a22"/><rect x="63.38" y="35.5" width="1.7" height="1.7" fill="#1a1a22"/><rect x="63.38" y="44.0" width="1.7" height="1.7" fill="#1a1a22"/><rect x="66.81" y="35.5" width="1.7" height="1.7" fill="#1a1a22"/><rect x="67.11" y="31.5" width="1.7" height="1.7" fill="#1a1a22"/><rect x="69.11" y="31.5" width="1.7" height="1.7" fill="#1a1a22"/><rect x="66.81" y="48.0" width="1.7" height="1.7" fill="#1a1a22"/><rect x="70.25" y="35.5" width="1.7" height="1.7" fill="#1a1a22"/><rect x="73.69" y="35.5" width="1.7" height="1.7" fill="#1a1a22"/><rect x="73.69" y="44.0" width="1.7" height="1.7" fill="#1a1a22"/><rect x="77.12" y="44.0" width="1.7" height="1.7" fill="#1a1a22"/><rect x="80.56" y="35.5" width="1.7" height="1.7" fill="#1a1a22"/><rect x="80.56" y="48.0" width="1.7" height="1.7" fill="#1a1a22"/><rect x="84.00" y="35.5" width="1.7" height="1.7" fill="#1a1a22"/><rect x="87.44" y="35.5" width="1.7" height="1.7" fill="#1a1a22"/><rect x="90.88" y="35.5" width="1.7" height="1.7" fill="#1a1a22"/><rect x="90.88" y="44.0" width="1.7" height="1.7" fill="#1a1a22"/><rect x="94.31" y="35.5" width="1.7" height="1.7" fill="#1a1a22"/><rect x="94.61" y="31.5" width="1.7" height="1.7" fill="#1a1a22"/><rect x="96.61" y="31.5" width="1.7" height="1.7" fill="#1a1a22"/><rect x="97.75" y="35.5" width="1.7" height="1.7" fill="#1a1a22"/><rect x="104.62" y="35.5" width="1.7" height="1.7" fill="#1a1a22"/><rect x="104.62" y="44.0" width="1.7" height="1.7" fill="#1a1a22"/><rect x="108.06" y="35.5" width="1.7" height="1.7" fill="#1a1a22"/><rect x="111.50" y="35.5" width="1.7" height="1.7" fill="#1a1a22"/><rect x="114.94" y="35.5" width="1.7" height="1.7" fill="#1a1a22"/><rect x="114.94" y="44.0" width="1.7" height="1.7" fill="#1a1a22"/><rect x="118.38" y="35.5" width="1.7" height="1.7" fill="#1a1a22"/><rect x="118.38" y="44.0" width="1.7" height="1.7" fill="#1a1a22"/><rect x="121.81" y="35.5" width="1.7" height="1.7" fill="#1a1a22"/><rect x="122.11" y="31.5" width="1.7" height="1.7" fill="#1a1a22"/><rect x="124.11" y="31.5" width="1.7" height="1.7" fill="#1a1a22"/><rect x="125.25" y="35.5" width="1.7" height="1.7" fill="#1a1a22"/><rect x="128.69" y="35.5" width="1.7" height="1.7" fill="#1a1a22"/><rect x="132.12" y="35.5" width="1.7" height="1.7" fill="#1a1a22"/><rect x="132.12" y="44.0" width="1.7" height="1.7" fill="#1a1a22"/><rect x="135.56" y="35.5" width="1.7" height="1.7" fill="#1a1a22"/><rect x="139.00" y="35.5" width="1.7" height="1.7" fill="#1a1a22"/><rect x="142.44" y="35.5" width="1.7" height="1.7" fill="#1a1a22"/><rect x="142.44" y="44.0" width="1.7" height="1.7" fill="#1a1a22"/><rect x="145.88" y="35.5" width="1.7" height="1.7" fill="#1a1a22"/><rect x="145.88" y="44.0" width="1.7" height="1.7" fill="#1a1a22"/><rect x="149.31" y="35.5" width="1.7" height="1.7" fill="#1a1a22"/><rect x="149.61" y="31.5" width="1.7" height="1.7" fill="#1a1a22"/><rect x="151.61" y="31.5" width="1.7" height="1.7" fill="#1a1a22"/><rect x="149.31" y="48.0" width="1.7" height="1.7" fill="#1a1a22"/><rect x="152.75" y="35.5" width="1.7" height="1.7" fill="#1a1a22"/><rect x="156.19" y="35.5" width="1.7" height="1.7" fill="#1a1a22"/><rect x="159.62" y="35.5" width="1.7" height="1.7" fill="#1a1a22"/><rect x="159.62" y="44.0" width="1.7" height="1.7" fill="#1a1a22"/><rect x="166.50" y="35.5" width="1.7" height="1.7" fill="#1a1a22"/><rect x="169.94" y="35.5" width="1.7" height="1.7" fill="#1a1a22"/><rect x="173.38" y="35.5" width="1.7" height="1.7" fill="#1a1a22"/><rect x="173.38" y="44.0" width="1.7" height="1.7" fill="#1a1a22"/><rect x="176.81" y="35.5" width="1.7" height="1.7" fill="#1a1a22"/><rect x="177.11" y="31.5" width="1.7" height="1.7" fill="#1a1a22"/><rect x="179.11" y="31.5" width="1.7" height="1.7" fill="#1a1a22"/><rect x="176.81" y="48.0" width="1.7" height="1.7" fill="#1a1a22"/><rect x="180.25" y="35.5" width="1.7" height="1.7" fill="#1a1a22"/><rect x="187.12" y="35.5" width="1.7" height="1.7" fill="#1a1a22"/><rect x="187.12" y="44.0" width="1.7" height="1.7" fill="#1a1a22"/><rect x="190.56" y="35.5" width="1.7" height="1.7" fill="#1a1a22"/><rect x="194.00" y="35.5" width="1.7" height="1.7" fill="#1a1a22"/><rect x="197.44" y="35.5" width="1.7" height="1.7" fill="#1a1a22"/><rect x="200.88" y="35.5" width="1.7" height="1.7" fill="#1a1a22"/><rect x="200.88" y="44.0" width="1.7" height="1.7" fill="#1a1a22"/><rect x="204.31" y="35.5" width="1.7" height="1.7" fill="#1a1a22"/><rect x="204.61" y="31.5" width="1.7" height="1.7" fill="#1a1a22"/><rect x="206.61" y="31.5" width="1.7" height="1.7" fill="#1a1a22"/><rect x="204.31" y="48.0" width="1.7" height="1.7" fill="#1a1a22"/><rect x="207.75" y="35.5" width="1.7" height="1.7" fill="#1a1a22"/><rect x="211.19" y="35.5" width="1.7" height="1.7" fill="#1a1a22"/><rect x="211.19" y="44.0" width="1.7" height="1.7" fill="#1a1a22"/><rect x="214.62" y="35.5" width="1.7" height="1.7" fill="#1a1a22"/><rect x="214.62" y="44.0" width="1.7" height="1.7" fill="#1a1a22"/></svg><svg style="position:absolute;left:478px;top:93px;" width="220" height="54" viewBox="0 0 220 54"><rect x="1.50" y="35.5" width="1.7" height="1.7" fill="#1a1a22"/><rect x="4.94" y="35.5" width="1.7" height="1.7" fill="#1a1a22"/><rect x="4.94" y="44.0" width="1.7" height="1.7" fill="#1a1a22"/><rect x="8.38" y="35.5" width="1.7" height="1.7" fill="#1a1a22"/><rect x="8.38" y="44.0" width="1.7" height="1.7" fill="#1a1a22"/><rect x="11.81" y="35.5" width="1.7" height="1.7" fill="#1a1a22"/><rect x="12.11" y="31.5" width="1.7" height="1.7" fill="#1a1a22"/><rect x="14.11" y="31.5" width="1.7" height="1.7" fill="#1a1a22"/><rect x="11.81" y="48.0" width="1.7" height="1.7" fill="#1a1a22"/><rect x="15.25" y="35.5" width="1.7" height="1.7" fill="#1a1a22"/><rect x="18.69" y="35.5" width="1.7" height="1.7" fill="#1a1a22"/><rect x="18.69" y="44.0" width="1.7" height="1.7" fill="#1a1a22"/><rect x="22.12" y="35.5" width="1.7" height="1.7" fill="#1a1a22"/><rect x="22.12" y="44.0" width="1.7" height="1.7" fill="#1a1a22"/><rect x="25.56" y="48.0" width="1.7" height="1.7" fill="#1a1a22"/><rect x="29.00" y="35.5" width="1.7" height="1.7" fill="#1a1a22"/><rect x="32.44" y="35.5" width="1.7" height="1.7" fill="#1a1a22"/><rect x="35.88" y="35.5" width="1.7" height="1.7" fill="#1a1a22"/><rect x="35.88" y="44.0" width="1.7" height="1.7" fill="#1a1a22"/><rect x="39.31" y="35.5" width="1.7" height="1.7" fill="#1a1a22"/><rect x="39.61" y="31.5" width="1.7" height="1.7" fill="#1a1a22"/><rect x="41.61" y="31.5" width="1.7" height="1.7" fill="#1a1a22"/><rect x="42.75" y="35.5" width="1.7" height="1.7" fill="#1a1a22"/><rect x="46.19" y="35.5" width="1.7" height="1.7" fill="#1a1a22"/><rect x="49.62" y="35.5" width="1.7" height="1.7" fill="#1a1a22"/><rect x="49.62" y="44.0" width="1.7" height="1.7" fill="#1a1a22"/><rect x="53.06" y="35.5" width="1.7" height="1.7" fill="#1a1a22"/><rect x="53.06" y="48.0" width="1.7" height="1.7" fill="#1a1a22"/><rect x="56.50" y="35.5" width="1.7" height="1.7" fill="#1a1a22"/><rect x="59.94" y="35.5" width="1.7" height="1.7" fill="#1a1a22"/><rect x="63.38" y="35.5" width="1.7" height="1.7" fill="#1a1a22"/><rect x="63.38" y="44.0" width="1.7" height="1.7" fill="#1a1a22"/><rect x="66.81" y="35.5" width="1.7" height="1.7" fill="#1a1a22"/><rect x="67.11" y="31.5" width="1.7" height="1.7" fill="#1a1a22"/><rect x="69.11" y="31.5" width="1.7" height="1.7" fill="#1a1a22"/><rect x="70.25" y="35.5" width="1.7" height="1.7" fill="#1a1a22"/><rect x="73.69" y="35.5" width="1.7" height="1.7" fill="#1a1a22"/><rect x="73.69" y="44.0" width="1.7" height="1.7" fill="#1a1a22"/><rect x="77.12" y="35.5" width="1.7" height="1.7" fill="#1a1a22"/><rect x="77.12" y="44.0" width="1.7" height="1.7" fill="#1a1a22"/><rect x="80.56" y="35.5" width="1.7" height="1.7" fill="#1a1a22"/><rect x="84.00" y="35.5" width="1.7" height="1.7" fill="#1a1a22"/><rect x="87.44" y="35.5" width="1.7" height="1.7" fill="#1a1a22"/><rect x="87.44" y="44.0" width="1.7" height="1.7" fill="#1a1a22"/><rect x="90.88" y="35.5" width="1.7" height="1.7" fill="#1a1a22"/><rect x="90.88" y="44.0" width="1.7" height="1.7" fill="#1a1a22"/><rect x="94.61" y="31.5" width="1.7" height="1.7" fill="#1a1a22"/><rect x="96.61" y="31.5" width="1.7" height="1.7" fill="#1a1a22"/><rect x="94.31" y="48.0" width="1.7" height="1.7" fill="#1a1a22"/><rect x="97.75" y="35.5" width="1.7" height="1.7" fill="#1a1a22"/><rect x="101.19" y="35.5" width="1.7" height="1.7" fill="#1a1a22"/><rect x="101.19" y="44.0" width="1.7" height="1.7" fill="#1a1a22"/><rect x="104.62" y="35.5" width="1.7" height="1.7" fill="#1a1a22"/><rect x="104.62" y="44.0" width="1.7" height="1.7" fill="#1a1a22"/><rect x="108.06" y="35.5" width="1.7" height="1.7" fill="#1a1a22"/><rect x="108.06" y="48.0" width="1.7" height="1.7" fill="#1a1a22"/><rect x="111.50" y="35.5" width="1.7" height="1.7" fill="#1a1a22"/><rect x="114.94" y="35.5" width="1.7" height="1.7" fill="#1a1a22"/><rect x="118.38" y="35.5" width="1.7" height="1.7" fill="#1a1a22"/><rect x="118.38" y="44.0" width="1.7" height="1.7" fill="#1a1a22"/><rect x="121.81" y="35.5" width="1.7" height="1.7" fill="#1a1a22"/><rect x="122.11" y="31.5" width="1.7" height="1.7" fill="#1a1a22"/><rect x="124.11" y="31.5" width="1.7" height="1.7" fill="#1a1a22"/><rect x="125.25" y="35.5" width="1.7" height="1.7" fill="#1a1a22"/><rect x="128.69" y="35.5" width="1.7" height="1.7" fill="#1a1a22"/><rect x="132.12" y="44.0" width="1.7" height="1.7" fill="#1a1a22"/><rect x="135.56" y="35.5" width="1.7" height="1.7" fill="#1a1a22"/><rect x="135.56" y="48.0" width="1.7" height="1.7" fill="#1a1a22"/><rect x="139.00" y="35.5" width="1.7" height="1.7" fill="#1a1a22"/><rect x="142.44" y="35.5" width="1.7" height="1.7" fill="#1a1a22"/><rect x="145.88" y="35.5" width="1.7" height="1.7" fill="#1a1a22"/><rect x="145.88" y="44.0" width="1.7" height="1.7" fill="#1a1a22"/><rect x="149.31" y="35.5" width="1.7" height="1.7" fill="#1a1a22"/><rect x="149.61" y="31.5" width="1.7" height="1.7" fill="#1a1a22"/><rect x="151.61" y="31.5" width="1.7" height="1.7" fill="#1a1a22"/><rect x="149.31" y="48.0" width="1.7" height="1.7" fill="#1a1a22"/><rect x="152.75" y="35.5" width="1.7" height="1.7" fill="#1a1a22"/><rect x="156.19" y="44.0" width="1.7" height="1.7" fill="#1a1a22"/><rect x="159.62" y="35.5" width="1.7" height="1.7" fill="#1a1a22"/><rect x="159.62" y="44.0" width="1.7" height="1.7" fill="#1a1a22"/><rect x="163.06" y="35.5" width="1.7" height="1.7" fill="#1a1a22"/><rect x="163.06" y="48.0" width="1.7" height="1.7" fill="#1a1a22"/><rect x="166.50" y="35.5" width="1.7" height="1.7" fill="#1a1a22"/><rect x="169.94" y="35.5" width="1.7" height="1.7" fill="#1a1a22"/><rect x="173.38" y="35.5" width="1.7" height="1.7" fill="#1a1a22"/><rect x="173.38" y="44.0" width="1.7" height="1.7" fill="#1a1a22"/><rect x="176.81" y="35.5" width="1.7" height="1.7" fill="#1a1a22"/><rect x="177.11" y="31.5" width="1.7" height="1.7" fill="#1a1a22"/><rect x="179.11" y="31.5" width="1.7" height="1.7" fill="#1a1a22"/><rect x="176.81" y="48.0" width="1.7" height="1.7" fill="#1a1a22"/><rect x="180.25" y="35.5" width="1.7" height="1.7" fill="#1a1a22"/><rect x="183.69" y="35.5" width="1.7" height="1.7" fill="#1a1a22"/><rect x="187.12" y="44.0" width="1.7" height="1.7" fill="#1a1a22"/><rect x="190.56" y="35.5" width="1.7" height="1.7" fill="#1a1a22"/><rect x="194.00" y="35.5" width="1.7" height="1.7" fill="#1a1a22"/><rect x="197.44" y="35.5" width="1.7" height="1.7" fill="#1a1a22"/><rect x="197.44" y="44.0" width="1.7" height="1.7" fill="#1a1a22"/><rect x="200.88" y="35.5" width="1.7" height="1.7" fill="#1a1a22"/><rect x="200.88" y="44.0" width="1.7" height="1.7" fill="#1a1a22"/><rect x="204.31" y="35.5" width="1.7" height="1.7" fill="#1a1a22"/><rect x="204.61" y="31.5" width="1.7" height="1.7" fill="#1a1a22"/><rect x="206.61" y="31.5" width="1.7" height="1.7" fill="#1a1a22"/><rect x="204.31" y="48.0" width="1.7" height="1.7" fill="#1a1a22"/><rect x="207.75" y="35.5" width="1.7" height="1.7" fill="#1a1a22"/><rect x="211.19" y="35.5" width="1.7" height="1.7" fill="#1a1a22"/><rect x="211.19" y="44.0" width="1.7" height="1.7" fill="#1a1a22"/><rect x="214.62" y="35.5" width="1.7" height="1.7" fill="#1a1a22"/><rect x="214.62" y="44.0" width="1.7" height="1.7" fill="#1a1a22"/></svg><svg style="position:absolute;left:698px;top:93px;" width="220" height="54" viewBox="0 0 220 54"><rect x="1.50" y="35.5" width="1.7" height="1.7" fill="#1a1a22"/><rect x="4.94" y="35.5" width="1.7" height="1.7" fill="#1a1a22"/><rect x="4.94" y="44.0" width="1.7" height="1.7" fill="#1a1a22"/><rect x="8.38" y="35.5" width="1.7" height="1.7" fill="#1a1a22"/><rect x="8.38" y="44.0" width="1.7" height="1.7" fill="#1a1a22"/><rect x="11.81" y="35.5" width="1.7" height="1.7" fill="#1a1a22"/><rect x="12.11" y="31.5" width="1.7" height="1.7" fill="#1a1a22"/><rect x="14.11" y="31.5" width="1.7" height="1.7" fill="#1a1a22"/><rect x="11.81" y="48.0" width="1.7" height="1.7" fill="#1a1a22"/><rect x="15.25" y="35.5" width="1.7" height="1.7" fill="#1a1a22"/><rect x="18.69" y="35.5" width="1.7" height="1.7" fill="#1a1a22"/><rect x="22.12" y="35.5" width="1.7" height="1.7" fill="#1a1a22"/><rect x="22.12" y="44.0" width="1.7" height="1.7" fill="#1a1a22"/><rect x="25.56" y="35.5" width="1.7" height="1.7" fill="#1a1a22"/><rect x="25.56" y="48.0" width="1.7" height="1.7" fill="#1a1a22"/><rect x="29.00" y="35.5" width="1.7" height="1.7" fill="#1a1a22"/><rect x="32.44" y="35.5" width="1.7" height="1.7" fill="#1a1a22"/><rect x="32.44" y="44.0" width="1.7" height="1.7" fill="#1a1a22"/><rect x="35.88" y="35.5" width="1.7" height="1.7" fill="#1a1a22"/><rect x="35.88" y="44.0" width="1.7" height="1.7" fill="#1a1a22"/><rect x="39.31" y="35.5" width="1.7" height="1.7" fill="#1a1a22"/><rect x="39.61" y="31.5" width="1.7" height="1.7" fill="#1a1a22"/><rect x="41.61" y="31.5" width="1.7" height="1.7" fill="#1a1a22"/><rect x="42.75" y="35.5" width="1.7" height="1.7" fill="#1a1a22"/><rect x="46.19" y="35.5" width="1.7" height="1.7" fill="#1a1a22"/><rect x="46.19" y="44.0" width="1.7" height="1.7" fill="#1a1a22"/><rect x="49.62" y="35.5" width="1.7" height="1.7" fill="#1a1a22"/><rect x="49.62" y="44.0" width="1.7" height="1.7" fill="#1a1a22"/><rect x="53.06" y="35.5" width="1.7" height="1.7" fill="#1a1a22"/><rect x="56.50" y="35.5" width="1.7" height="1.7" fill="#1a1a22"/><rect x="59.94" y="35.5" width="1.7" height="1.7" fill="#1a1a22"/><rect x="63.38" y="35.5" width="1.7" height="1.7" fill="#1a1a22"/><rect x="63.38" y="44.0" width="1.7" height="1.7" fill="#1a1a22"/><rect x="66.81" y="35.5" width="1.7" height="1.7" fill="#1a1a22"/><rect x="67.11" y="31.5" width="1.7" height="1.7" fill="#1a1a22"/><rect x="69.11" y="31.5" width="1.7" height="1.7" fill="#1a1a22"/><rect x="66.81" y="48.0" width="1.7" height="1.7" fill="#1a1a22"/><rect x="70.25" y="35.5" width="1.7" height="1.7" fill="#1a1a22"/><rect x="73.69" y="35.5" width="1.7" height="1.7" fill="#1a1a22"/><rect x="77.12" y="35.5" width="1.7" height="1.7" fill="#1a1a22"/><rect x="77.12" y="44.0" width="1.7" height="1.7" fill="#1a1a22"/><rect x="80.56" y="35.5" width="1.7" height="1.7" fill="#1a1a22"/><rect x="80.56" y="48.0" width="1.7" height="1.7" fill="#1a1a22"/><rect x="84.00" y="35.5" width="1.7" height="1.7" fill="#1a1a22"/><rect x="87.44" y="35.5" width="1.7" height="1.7" fill="#1a1a22"/><rect x="90.88" y="35.5" width="1.7" height="1.7" fill="#1a1a22"/><rect x="90.88" y="44.0" width="1.7" height="1.7" fill="#1a1a22"/><rect x="94.31" y="35.5" width="1.7" height="1.7" fill="#1a1a22"/><rect x="94.61" y="31.5" width="1.7" height="1.7" fill="#1a1a22"/><rect x="96.61" y="31.5" width="1.7" height="1.7" fill="#1a1a22"/><rect x="94.31" y="48.0" width="1.7" height="1.7" fill="#1a1a22"/><rect x="97.75" y="35.5" width="1.7" height="1.7" fill="#1a1a22"/><rect x="101.19" y="35.5" width="1.7" height="1.7" fill="#1a1a22"/><rect x="101.19" y="44.0" width="1.7" height="1.7" fill="#1a1a22"/><rect x="104.62" y="35.5" width="1.7" height="1.7" fill="#1a1a22"/><rect x="104.62" y="44.0" width="1.7" height="1.7" fill="#1a1a22"/><rect x="108.06" y="35.5" width="1.7" height="1.7" fill="#1a1a22"/><rect x="108.06" y="48.0" width="1.7" height="1.7" fill="#1a1a22"/><rect x="111.50" y="35.5" width="1.7" height="1.7" fill="#1a1a22"/><rect x="114.94" y="35.5" width="1.7" height="1.7" fill="#1a1a22"/><rect x="114.94" y="44.0" width="1.7" height="1.7" fill="#1a1a22"/><rect x="118.38" y="35.5" width="1.7" height="1.7" fill="#1a1a22"/><rect x="118.38" y="44.0" width="1.7" height="1.7" fill="#1a1a22"/><rect x="121.81" y="35.5" width="1.7" height="1.7" fill="#1a1a22"/><rect x="122.11" y="31.5" width="1.7" height="1.7" fill="#1a1a22"/><rect x="124.11" y="31.5" width="1.7" height="1.7" fill="#1a1a22"/><rect x="121.81" y="48.0" width="1.7" height="1.7" fill="#1a1a22"/><rect x="128.69" y="35.5" width="1.7" height="1.7" fill="#1a1a22"/><rect x="128.69" y="44.0" width="1.7" height="1.7" fill="#1a1a22"/><rect x="132.12" y="35.5" width="1.7" height="1.7" fill="#1a1a22"/><rect x="132.12" y="44.0" width="1.7" height="1.7" fill="#1a1a22"/><rect x="135.56" y="35.5" width="1.7" height="1.7" fill="#1a1a22"/><rect x="135.56" y="48.0" width="1.7" height="1.7" fill="#1a1a22"/><rect x="139.00" y="35.5" width="1.7" height="1.7" fill="#1a1a22"/><rect x="142.44" y="35.5" width="1.7" height="1.7" fill="#1a1a22"/><rect x="142.44" y="44.0" width="1.7" height="1.7" fill="#1a1a22"/><rect x="145.88" y="35.5" width="1.7" height="1.7" fill="#1a1a22"/><rect x="145.88" y="44.0" width="1.7" height="1.7" fill="#1a1a22"/><rect x="149.31" y="35.5" width="1.7" height="1.7" fill="#1a1a22"/><rect x="149.61" y="31.5" width="1.7" height="1.7" fill="#1a1a22"/><rect x="151.61" y="31.5" width="1.7" height="1.7" fill="#1a1a22"/><rect x="149.31" y="48.0" width="1.7" height="1.7" fill="#1a1a22"/><rect x="152.75" y="35.5" width="1.7" height="1.7" fill="#1a1a22"/><rect x="156.19" y="35.5" width="1.7" height="1.7" fill="#1a1a22"/><rect x="159.62" y="35.5" width="1.7" height="1.7" fill="#1a1a22"/><rect x="159.62" y="44.0" width="1.7" height="1.7" fill="#1a1a22"/><rect x="163.06" y="35.5" width="1.7" height="1.7" fill="#1a1a22"/><rect x="163.06" y="48.0" width="1.7" height="1.7" fill="#1a1a22"/><rect x="166.50" y="35.5" width="1.7" height="1.7" fill="#1a1a22"/><rect x="169.94" y="35.5" width="1.7" height="1.7" fill="#1a1a22"/><rect x="169.94" y="44.0" width="1.7" height="1.7" fill="#1a1a22"/><rect x="173.38" y="35.5" width="1.7" height="1.7" fill="#1a1a22"/><rect x="173.38" y="44.0" width="1.7" height="1.7" fill="#1a1a22"/><rect x="176.81" y="35.5" width="1.7" height="1.7" fill="#1a1a22"/><rect x="177.11" y="31.5" width="1.7" height="1.7" fill="#1a1a22"/><rect x="179.11" y="31.5" width="1.7" height="1.7" fill="#1a1a22"/><rect x="180.25" y="35.5" width="1.7" height="1.7" fill="#1a1a22"/><rect x="183.69" y="44.0" width="1.7" height="1.7" fill="#1a1a22"/><rect x="187.12" y="35.5" width="1.7" height="1.7" fill="#1a1a22"/><rect x="187.12" y="44.0" width="1.7" height="1.7" fill="#1a1a22"/><rect x="194.00" y="35.5" width="1.7" height="1.7" fill="#1a1a22"/><rect x="200.88" y="35.5" width="1.7" height="1.7" fill="#1a1a22"/><rect x="200.88" y="44.0" width="1.7" height="1.7" fill="#1a1a22"/><rect x="204.31" y="35.5" width="1.7" height="1.7" fill="#1a1a22"/><rect x="204.61" y="31.5" width="1.7" height="1.7" fill="#1a1a22"/><rect x="206.61" y="31.5" width="1.7" height="1.7" fill="#1a1a22"/><rect x="204.31" y="48.0" width="1.7" height="1.7" fill="#1a1a22"/><rect x="207.75" y="35.5" width="1.7" height="1.7" fill="#1a1a22"/><rect x="211.19" y="35.5" width="1.7" height="1.7" fill="#1a1a22"/><rect x="211.19" y="44.0" width="1.7" height="1.7" fill="#1a1a22"/><rect x="214.62" y="44.0" width="1.7" height="1.7" fill="#1a1a22"/></svg><svg style="position:absolute;left:9px;top:93px;" width="29" height="54" viewBox="0 0 29 54"><rect x="1.50" y="35.5" width="1.7" height="1.7" fill="#1a1a22"/><rect x="4.94" y="35.5" width="1.7" height="1.7" fill="#1a1a22"/><rect x="8.38" y="35.5" width="1.7" height="1.7" fill="#1a1a22"/><rect x="8.38" y="44.0" width="1.7" height="1.7" fill="#1a1a22"/><rect x="11.81" y="35.5" width="1.7" height="1.7" fill="#1a1a22"/><rect x="12.11" y="31.5" width="1.7" height="1.7" fill="#1a1a22"/><rect x="14.11" y="31.5" width="1.7" height="1.7" fill="#1a1a22"/><rect x="15.25" y="35.5" width="1.7" height="1.7" fill="#1a1a22"/><rect x="18.69" y="35.5" width="1.7" height="1.7" fill="#1a1a22"/><rect x="18.69" y="44.0" width="1.7" height="1.7" fill="#1a1a22"/><rect x="22.12" y="35.5" width="1.7" height="1.7" fill="#1a1a22"/><rect x="22.12" y="44.0" width="1.7" height="1.7" fill="#1a1a22"/><rect x="25.56" y="35.5" width="1.7" height="1.7" fill="#1a1a22"/><rect x="25.56" y="48.0" width="1.7" height="1.7" fill="#1a1a22"/></svg><svg style="position:absolute;left:1139px;top:93px;" width="116" height="54" viewBox="0 0 116 54"><rect x="1.50" y="36.0" width="1.7" height="1.7" fill="#1a1a22"/><rect x="4.94" y="36.0" width="1.7" height="1.7" fill="#1a1a22"/><rect x="4.94" y="44.0" width="1.7" height="1.7" fill="#1a1a22"/><rect x="8.38" y="36.0" width="1.7" height="1.7" fill="#1a1a22"/><rect x="8.38" y="44.0" width="1.7" height="1.7" fill="#1a1a22"/><rect x="11.81" y="36.0" width="1.7" height="1.7" fill="#1a1a22"/><rect x="12.11" y="33.0" width="1.7" height="1.7" fill="#1a1a22"/><rect x="14.11" y="33.0" width="1.7" height="1.7" fill="#1a1a22"/><rect x="11.81" y="48.0" width="1.7" height="1.7" fill="#1a1a22"/><rect x="15.25" y="36.0" width="1.7" height="1.7" fill="#1a1a22"/><rect x="18.69" y="36.0" width="1.7" height="1.7" fill="#1a1a22"/><rect x="18.69" y="44.0" width="1.7" height="1.7" fill="#1a1a22"/><rect x="22.12" y="36.0" width="1.7" height="1.7" fill="#1a1a22"/><rect x="22.12" y="44.0" width="1.7" height="1.7" fill="#1a1a22"/><rect x="25.56" y="36.0" width="1.7" height="1.7" fill="#1a1a22"/><rect x="25.56" y="48.0" width="1.7" height="1.7" fill="#1a1a22"/><rect x="29.00" y="36.0" width="1.7" height="1.7" fill="#1a1a22"/><rect x="32.44" y="36.0" width="1.7" height="1.7" fill="#1a1a22"/><rect x="35.88" y="36.0" width="1.7" height="1.7" fill="#1a1a22"/><rect x="35.88" y="44.0" width="1.7" height="1.7" fill="#1a1a22"/><rect x="39.31" y="36.0" width="1.7" height="1.7" fill="#1a1a22"/><rect x="39.61" y="33.0" width="1.7" height="1.7" fill="#1a1a22"/><rect x="41.61" y="33.0" width="1.7" height="1.7" fill="#1a1a22"/><rect x="39.31" y="48.0" width="1.7" height="1.7" fill="#1a1a22"/><rect x="42.75" y="36.0" width="1.7" height="1.7" fill="#1a1a22"/><rect x="46.19" y="36.0" width="1.7" height="1.7" fill="#1a1a22"/><rect x="46.19" y="44.0" width="1.7" height="1.7" fill="#1a1a22"/><rect x="49.62" y="36.0" width="1.7" height="1.7" fill="#1a1a22"/><rect x="49.62" y="44.0" width="1.7" height="1.7" fill="#1a1a22"/><rect x="53.06" y="36.0" width="1.7" height="1.7" fill="#1a1a22"/><rect x="56.50" y="36.0" width="1.7" height="1.7" fill="#1a1a22"/><rect x="59.94" y="36.0" width="1.7" height="1.7" fill="#1a1a22"/><rect x="63.38" y="36.0" width="1.7" height="1.7" fill="#1a1a22"/><rect x="63.38" y="44.0" width="1.7" height="1.7" fill="#1a1a22"/><rect x="66.81" y="36.0" width="1.7" height="1.7" fill="#1a1a22"/><rect x="67.11" y="33.0" width="1.7" height="1.7" fill="#1a1a22"/><rect x="69.11" y="33.0" width="1.7" height="1.7" fill="#1a1a22"/><rect x="66.81" y="48.0" width="1.7" height="1.7" fill="#1a1a22"/><rect x="70.25" y="36.0" width="1.7" height="1.7" fill="#1a1a22"/><rect x="73.69" y="36.0" width="1.7" height="1.7" fill="#1a1a22"/><rect x="73.69" y="44.0" width="1.7" height="1.7" fill="#1a1a22"/><rect x="77.12" y="36.0" width="1.7" height="1.7" fill="#1a1a22"/><rect x="77.12" y="44.0" width="1.7" height="1.7" fill="#1a1a22"/><rect x="80.56" y="36.0" width="1.7" height="1.7" fill="#1a1a22"/><rect x="84.00" y="36.0" width="1.7" height="1.7" fill="#1a1a22"/><rect x="87.44" y="36.0" width="1.7" height="1.7" fill="#1a1a22"/><rect x="87.44" y="44.0" width="1.7" height="1.7" fill="#1a1a22"/><rect x="90.88" y="36.0" width="1.7" height="1.7" fill="#1a1a22"/><rect x="90.88" y="44.0" width="1.7" height="1.7" fill="#1a1a22"/><rect x="94.31" y="36.0" width="1.7" height="1.7" fill="#1a1a22"/><rect x="94.61" y="33.0" width="1.7" height="1.7" fill="#1a1a22"/><rect x="96.61" y="33.0" width="1.7" height="1.7" fill="#1a1a22"/><rect x="94.31" y="48.0" width="1.7" height="1.7" fill="#1a1a22"/><rect x="97.75" y="36.0" width="1.7" height="1.7" fill="#1a1a22"/><rect x="101.19" y="36.0" width="1.7" height="1.7" fill="#1a1a22"/><rect x="101.19" y="44.0" width="1.7" height="1.7" fill="#1a1a22"/><rect x="104.62" y="36.0" width="1.7" height="1.7" fill="#1a1a22"/><rect x="104.62" y="44.0" width="1.7" height="1.7" fill="#1a1a22"/><rect x="108.06" y="36.0" width="1.7" height="1.7" fill="#1a1a22"/><rect x="111.50" y="36.0" width="1.7" height="1.7" fill="#1a1a22"/><rect x="5" y="31" width="12" height="1.5" fill="#1a1a22"/><rect x="60" y="31" width="56" height="1.5" fill="#1a1a22"/></svg><div style="left:38px;top:149px;width:110px;height:54px;background:#93a7ff;"></div><div style="left:38px;top:165px;width:110px;height:1px;background:rgba(0,0,30,0.22);"></div><div style="left:51.75px;top:166px;width:1px;height:37px;background:rgba(0,0,30,0.12);"></div><div style="left:65.50px;top:166px;width:1px;height:37px;background:rgba(0,0,30,0.12);"></div><div style="left:79.25px;top:166px;width:1px;height:37px;background:rgba(0,0,30,0.12);"></div><div style="left:93.00px;top:166px;width:1px;height:37px;background:rgba(0,0,30,0.12);"></div><div style="left:106.75px;top:166px;width:1px;height:37px;background:rgba(0,0,30,0.12);"></div><div style="left:120.50px;top:166px;width:1px;height:37px;background:rgba(0,0,30,0.12);"></div><div style="left:134.25px;top:166px;width:1px;height:37px;background:rgba(0,0,30,0.12);"></div><div style="left:38px;top:149px;width:1.5px;height:54px;background:rgba(20,20,60,0.45);"></div><svg style="position:absolute;left:39px;top:149px;" width="109" height="54" viewBox="0 0 109 54"><polygon points="0.0,22.3 0.5,21.8 1.0,21.5 1.5,21.4 2.0,22.0 2.5,22.3 3.0,22.8 3.5,23.5 4.0,23.7 4.5,22.9 5.0,22.4 5.5,22.0 6.0,21.9 6.5,22.0 7.0,22.2 7.5,22.7 8.0,23.3 8.5,23.9 9.0,23.0 9.5,22.5 10.0,22.1 10.5,21.9 11.0,21.9 11.5,22.2 12.0,22.1 12.5,22.7 13.0,23.8 13.5,23.2 14.0,22.6 14.5,22.2 15.0,21.9 15.5,21.9 16.0,22.1 16.5,22.5 17.0,23.0 17.5,23.9 18.0,23.3 18.5,22.7 19.0,22.2 19.5,22.0 20.0,21.9 20.5,22.0 21.0,23.4 21.5,23.8 22.0,24.1 22.5,24.5 23.0,24.7 23.5,24.8 24.0,24.7 24.5,24.9 25.0,24.7 25.5,24.8 26.0,24.7 26.5,24.8 27.0,24.1 27.5,22.3 28.0,21.8 28.5,21.5 29.0,21.4 29.5,22.0 30.0,22.3 30.5,22.8 31.0,23.5 31.5,23.7 32.0,22.9 32.5,22.4 33.0,22.0 33.5,21.9 34.0,22.0 34.5,22.2 35.0,22.7 35.5,23.3 36.0,23.9 36.5,23.0 37.0,22.5 37.5,22.1 38.0,21.9 38.5,21.9 39.0,22.2 39.5,22.1 40.0,22.7 40.5,23.8 41.0,23.2 41.5,22.6 42.0,22.2 42.5,21.9 43.0,21.9 43.5,22.1 44.0,22.5 44.5,23.0 45.0,23.9 45.5,23.3 46.0,22.7 46.5,22.2 47.0,22.0 47.5,21.9 48.0,22.0 48.5,23.4 49.0,23.8 49.5,24.1 50.0,24.5 50.5,24.8 51.0,24.8 51.5,24.7 52.0,24.8 52.5,24.6 53.0,24.7 53.5,24.8 54.0,24.7 54.5,24.1 55.0,22.3 55.5,21.8 56.0,21.5 56.5,21.4 57.0,22.0 57.5,22.3 58.0,22.8 58.5,23.5 59.0,23.7 59.5,22.9 60.0,22.4 60.5,22.0 61.0,21.9 61.5,22.0 62.0,22.2 62.5,22.7 63.0,23.3 63.5,23.9 64.0,23.0 64.5,22.5 65.0,22.1 65.5,21.9 66.0,21.9 66.5,22.2 67.0,22.1 67.5,22.7 68.0,23.8 68.5,23.2 69.0,22.6 69.5,22.2 70.0,21.9 70.5,21.9 71.0,22.1 71.5,22.5 72.0,23.0 72.5,23.9 73.0,23.3 73.5,22.7 74.0,22.2 74.5,22.0 75.0,21.9 75.5,22.0 76.0,23.4 76.5,23.8 77.0,24.1 77.5,24.5 78.0,24.9 78.5,24.7 79.0,24.9 79.5,24.8 80.0,24.7 80.5,24.7 81.0,24.6 81.5,24.7 82.0,24.1 82.5,22.3 83.0,21.8 83.5,21.5 84.0,21.4 84.5,22.0 85.0,22.3 85.5,22.8 86.0,23.5 86.5,23.7 87.0,22.9 87.5,22.4 88.0,22.0 88.5,21.9 89.0,22.0 89.5,22.2 90.0,22.7 90.5,23.3 91.0,23.9 91.5,23.0 92.0,22.5 92.5,22.1 93.0,21.9 93.5,21.9 94.0,22.2 94.5,22.1 95.0,22.7 95.5,23.8 96.0,23.2 96.5,22.6 97.0,22.2 97.5,21.9 98.0,21.9 98.5,22.1 99.0,22.5 99.5,23.0 100.0,23.9 100.5,23.3 101.0,22.7 101.5,22.2 102.0,22.0 102.5,21.9 103.0,22.0 103.5,23.4 104.0,23.8 104.5,24.1 105.0,24.5 105.5,24.8 106.0,24.8 106.5,24.7 107.0,24.6 107.5,24.9 108.0,24.7 108.0,28.1 107.5,27.9 107.0,28.2 106.5,28.1 106.0,28.0 105.5,28.0 105.0,28.3 104.5,28.6 104.0,29.0 103.5,29.4 103.0,30.8 102.5,30.9 102.0,30.8 101.5,30.6 101.0,30.1 100.5,29.5 100.0,28.9 99.5,29.8 99.0,30.3 98.5,30.7 98.0,30.9 97.5,30.9 97.0,30.6 96.5,30.2 96.0,29.6 95.5,29.0 95.0,30.1 94.5,30.7 94.0,30.6 93.5,30.9 93.0,30.9 92.5,30.7 92.0,30.3 91.5,29.8 91.0,28.9 90.5,29.5 90.0,30.1 89.5,30.6 89.0,30.8 88.5,30.9 88.0,30.8 87.5,30.4 87.0,29.9 86.5,29.1 86.0,29.3 85.5,30.0 85.0,30.5 84.5,30.8 84.0,31.4 83.5,31.3 83.0,31.0 82.5,30.5 82.0,28.6 81.5,28.1 81.0,28.2 80.5,28.1 80.0,28.1 79.5,28.0 79.0,27.9 78.5,28.1 78.0,27.9 77.5,28.3 77.0,28.6 76.5,29.0 76.0,29.4 75.5,30.8 75.0,30.9 74.5,30.8 74.0,30.6 73.5,30.1 73.0,29.5 72.5,28.9 72.0,29.8 71.5,30.3 71.0,30.7 70.5,30.9 70.0,30.9 69.5,30.6 69.0,30.2 68.5,29.6 68.0,29.0 67.5,30.1 67.0,30.7 66.5,30.6 66.0,30.9 65.5,30.9 65.0,30.7 64.5,30.3 64.0,29.8 63.5,28.9 63.0,29.5 62.5,30.1 62.0,30.6 61.5,30.8 61.0,30.9 60.5,30.8 60.0,30.4 59.5,29.9 59.0,29.1 58.5,29.3 58.0,30.0 57.5,30.5 57.0,30.8 56.5,31.4 56.0,31.3 55.5,31.0 55.0,30.5 54.5,28.6 54.0,28.1 53.5,28.0 53.0,28.1 52.5,28.2 52.0,28.0 51.5,28.1 51.0,28.0 50.5,28.0 50.0,28.3 49.5,28.6 49.0,29.0 48.5,29.4 48.0,30.8 47.5,30.9 47.0,30.8 46.5,30.6 46.0,30.1 45.5,29.5 45.0,28.9 44.5,29.8 44.0,30.3 43.5,30.7 43.0,30.9 42.5,30.9 42.0,30.6 41.5,30.2 41.0,29.6 40.5,29.0 40.0,30.1 39.5,30.7 39.0,30.6 38.5,30.9 38.0,30.9 37.5,30.7 37.0,30.3 36.5,29.8 36.0,28.9 35.5,29.5 35.0,30.1 34.5,30.6 34.0,30.8 33.5,30.9 33.0,30.8 32.5,30.4 32.0,29.9 31.5,29.1 31.0,29.3 30.5,30.0 30.0,30.5 29.5,30.8 29.0,31.4 28.5,31.3 28.0,31.0 27.5,30.5 27.0,28.6 26.5,28.0 26.0,28.1 25.5,28.0 25.0,28.1 24.5,27.9 24.0,28.1 23.5,28.0 23.0,28.1 22.5,28.3 22.0,28.6 21.5,29.0 21.0,29.4 20.5,30.8 20.0,30.9 19.5,30.8 19.0,30.6 18.5,30.1 18.0,29.5 17.5,28.9 17.0,29.8 16.5,30.3 16.0,30.7 15.5,30.9 15.0,30.9 14.5,30.6 14.0,30.2 13.5,29.6 13.0,29.0 12.5,30.1 12.0,30.7 11.5,30.6 11.0,30.9 10.5,30.9 10.0,30.7 9.5,30.3 9.0,29.8 8.5,28.9 8.0,29.5 7.5,30.1 7.0,30.6 6.5,30.8 6.0,30.9 5.5,30.8 5.0,30.4 4.5,29.9 4.0,29.1 3.5,29.3 3.0,30.0 2.5,30.5 2.0,30.8 1.5,31.4 1.0,31.3 0.5,31.0 0.0,30.5" fill="#1c1c24"/><polygon points="0.0,41.0 0.5,40.5 1.0,40.2 1.5,40.1 2.0,40.7 2.5,41.0 3.0,41.5 3.5,42.2 4.0,42.4 4.5,41.6 5.0,41.1 5.5,40.7 6.0,40.6 6.5,40.7 7.0,40.9 7.5,41.4 8.0,42.0 8.5,42.6 9.0,41.7 9.5,41.2 10.0,40.8 10.5,40.6 11.0,40.6 11.5,40.9 12.0,40.8 12.5,41.4 13.0,42.5 13.5,41.9 14.0,41.3 14.5,40.9 15.0,40.6 15.5,40.6 16.0,40.8 16.5,41.2 17.0,41.7 17.5,42.6 18.0,42.0 18.5,41.4 19.0,40.9 19.5,40.7 20.0,40.6 20.5,40.7 21.0,42.1 21.5,42.5 22.0,42.9 22.5,43.2 23.0,43.4 23.5,43.5 24.0,43.4 24.5,43.6 25.0,43.4 25.5,43.5 26.0,43.4 26.5,43.5 27.0,42.9 27.5,41.0 28.0,40.5 28.5,40.2 29.0,40.1 29.5,40.7 30.0,41.0 30.5,41.5 31.0,42.2 31.5,42.4 32.0,41.6 32.5,41.1 33.0,40.7 33.5,40.6 34.0,40.7 34.5,40.9 35.0,41.4 35.5,42.0 36.0,42.6 36.5,41.7 37.0,41.2 37.5,40.8 38.0,40.6 38.5,40.6 39.0,40.9 39.5,40.8 40.0,41.4 40.5,42.5 41.0,41.9 41.5,41.3 42.0,40.9 42.5,40.6 43.0,40.6 43.5,40.8 44.0,41.2 44.5,41.7 45.0,42.6 45.5,42.0 46.0,41.4 46.5,40.9 47.0,40.7 47.5,40.6 48.0,40.7 48.5,42.1 49.0,42.5 49.5,42.9 50.0,43.2 50.5,43.5 51.0,43.5 51.5,43.4 52.0,43.5 52.5,43.3 53.0,43.4 53.5,43.5 54.0,43.4 54.5,42.9 55.0,41.0 55.5,40.5 56.0,40.2 56.5,40.1 57.0,40.7 57.5,41.0 58.0,41.5 58.5,42.2 59.0,42.4 59.5,41.6 60.0,41.1 60.5,40.7 61.0,40.6 61.5,40.7 62.0,40.9 62.5,41.4 63.0,42.0 63.5,42.6 64.0,41.7 64.5,41.2 65.0,40.8 65.5,40.6 66.0,40.6 66.5,40.9 67.0,40.8 67.5,41.4 68.0,42.5 68.5,41.9 69.0,41.3 69.5,40.9 70.0,40.6 70.5,40.6 71.0,40.8 71.5,41.2 72.0,41.7 72.5,42.6 73.0,42.0 73.5,41.4 74.0,40.9 74.5,40.7 75.0,40.6 75.5,40.7 76.0,42.1 76.5,42.5 77.0,42.9 77.5,43.2 78.0,43.6 78.5,43.4 79.0,43.6 79.5,43.5 80.0,43.4 80.5,43.4 81.0,43.3 81.5,43.4 82.0,42.9 82.5,41.0 83.0,40.5 83.5,40.2 84.0,40.1 84.5,40.7 85.0,41.0 85.5,41.5 86.0,42.2 86.5,42.4 87.0,41.6 87.5,41.1 88.0,40.7 88.5,40.6 89.0,40.7 89.5,40.9 90.0,41.4 90.5,42.0 91.0,42.6 91.5,41.7 92.0,41.2 92.5,40.8 93.0,40.6 93.5,40.6 94.0,40.9 94.5,40.8 95.0,41.4 95.5,42.5 96.0,41.9 96.5,41.3 97.0,40.9 97.5,40.6 98.0,40.6 98.5,40.8 99.0,41.2 99.5,41.7 100.0,42.6 100.5,42.0 101.0,41.4 101.5,40.9 102.0,40.7 102.5,40.6 103.0,40.7 103.5,42.1 104.0,42.5 104.5,42.9 105.0,43.2 105.5,43.5 106.0,43.5 106.5,43.4 107.0,43.3 107.5,43.6 108.0,43.4 108.0,46.8 107.5,46.6 107.0,46.9 106.5,46.8 106.0,46.7 105.5,46.7 105.0,47.0 104.5,47.4 104.0,47.7 103.5,48.1 103.0,49.5 102.5,49.6 102.0,49.5 101.5,49.3 101.0,48.8 100.5,48.2 100.0,47.6 99.5,48.5 99.0,49.0 98.5,49.4 98.0,49.6 97.5,49.6 97.0,49.3 96.5,48.9 96.0,48.3 95.5,47.7 95.0,48.8 94.5,49.4 94.0,49.3 93.5,49.6 93.0,49.6 92.5,49.4 92.0,49.0 91.5,48.5 91.0,47.6 90.5,48.2 90.0,48.8 89.5,49.3 89.0,49.5 88.5,49.6 88.0,49.5 87.5,49.1 87.0,48.6 86.5,47.8 86.0,48.0 85.5,48.7 85.0,49.2 84.5,49.5 84.0,50.1 83.5,50.0 83.0,49.7 82.5,49.2 82.0,47.4 81.5,46.8 81.0,46.9 80.5,46.8 80.0,46.8 79.5,46.7 79.0,46.6 78.5,46.8 78.0,46.6 77.5,47.0 77.0,47.4 76.5,47.7 76.0,48.1 75.5,49.5 75.0,49.6 74.5,49.5 74.0,49.3 73.5,48.8 73.0,48.2 72.5,47.6 72.0,48.5 71.5,49.0 71.0,49.4 70.5,49.6 70.0,49.6 69.5,49.3 69.0,48.9 68.5,48.3 68.0,47.7 67.5,48.8 67.0,49.4 66.5,49.3 66.0,49.6 65.5,49.6 65.0,49.4 64.5,49.0 64.0,48.5 63.5,47.6 63.0,48.2 62.5,48.8 62.0,49.3 61.5,49.5 61.0,49.6 60.5,49.5 60.0,49.1 59.5,48.6 59.0,47.8 58.5,48.0 58.0,48.7 57.5,49.2 57.0,49.5 56.5,50.1 56.0,50.0 55.5,49.7 55.0,49.2 54.5,47.4 54.0,46.8 53.5,46.7 53.0,46.8 52.5,46.9 52.0,46.7 51.5,46.8 51.0,46.7 50.5,46.7 50.0,47.0 49.5,47.4 49.0,47.7 48.5,48.1 48.0,49.5 47.5,49.6 47.0,49.5 46.5,49.3 46.0,48.8 45.5,48.2 45.0,47.6 44.5,48.5 44.0,49.0 43.5,49.4 43.0,49.6 42.5,49.6 42.0,49.3 41.5,48.9 41.0,48.3 40.5,47.7 40.0,48.8 39.5,49.4 39.0,49.3 38.5,49.6 38.0,49.6 37.5,49.4 37.0,49.0 36.5,48.5 36.0,47.6 35.5,48.2 35.0,48.8 34.5,49.3 34.0,49.5 33.5,49.6 33.0,49.5 32.5,49.1 32.0,48.6 31.5,47.8 31.0,48.0 30.5,48.7 30.0,49.2 29.5,49.5 29.0,50.1 28.5,50.0 28.0,49.7 27.5,49.2 27.0,47.4 26.5,46.7 26.0,46.8 25.5,46.7 25.0,46.8 24.5,46.6 24.0,46.8 23.5,46.7 23.0,46.8 22.5,47.0 22.0,47.4 21.5,47.7 21.0,48.1 20.5,49.5 20.0,49.6 19.5,49.5 19.0,49.3 18.5,48.8 18.0,48.2 17.5,47.6 17.0,48.5 16.5,49.0 16.0,49.4 15.5,49.6 15.0,49.6 14.5,49.3 14.0,48.9 13.5,48.3 13.0,47.7 12.5,48.8 12.0,49.4 11.5,49.3 11.0,49.6 10.5,49.6 10.0,49.4 9.5,49.0 9.0,48.5 8.5,47.6 8.0,48.2 7.5,48.8 7.0,49.3 6.5,49.5 6.0,49.6 5.5,49.5 5.0,49.1 4.5,48.6 4.0,47.8 3.5,48.0 3.0,48.7 2.5,49.2 2.0,49.5 1.5,50.1 1.0,50.0 0.5,49.7 0.0,49.2" fill="#1c1c24"/></svg><div style="left:148px;top:149px;width:110px;height:54px;background:#93a7ff;"></div><div style="left:148px;top:165px;width:110px;height:1px;background:rgba(0,0,30,0.22);"></div><div style="left:161.75px;top:166px;width:1px;height:37px;background:rgba(0,0,30,0.12);"></div><div style="left:175.50px;top:166px;width:1px;height:37px;background:rgba(0,0,30,0.12);"></div><div style="left:189.25px;top:166px;width:1px;height:37px;background:rgba(0,0,30,0.12);"></div><div style="left:203.00px;top:166px;width:1px;height:37px;background:rgba(0,0,30,0.12);"></div><div style="left:216.75px;top:166px;width:1px;height:37px;background:rgba(0,0,30,0.12);"></div><div style="left:230.50px;top:166px;width:1px;height:37px;background:rgba(0,0,30,0.12);"></div><div style="left:244.25px;top:166px;width:1px;height:37px;background:rgba(0,0,30,0.12);"></div><div style="left:148px;top:149px;width:1.5px;height:54px;background:rgba(20,20,60,0.45);"></div><svg style="position:absolute;left:149px;top:149px;" width="109" height="54" viewBox="0 0 109 54"><polygon points="0.0,22.3 0.5,21.8 1.0,21.5 1.5,21.4 2.0,22.0 2.5,22.3 3.0,22.8 3.5,23.5 4.0,23.7 4.5,22.9 5.0,22.4 5.5,22.0 6.0,21.9 6.5,22.0 7.0,22.2 7.5,22.7 8.0,23.3 8.5,23.9 9.0,23.0 9.5,22.5 10.0,22.1 10.5,21.9 11.0,21.9 11.5,22.2 12.0,22.1 12.5,22.7 13.0,23.8 13.5,23.2 14.0,22.6 14.5,22.2 15.0,21.9 15.5,21.9 16.0,22.1 16.5,22.5 17.0,23.0 17.5,23.9 18.0,23.3 18.5,22.7 19.0,22.2 19.5,22.0 20.0,21.9 20.5,22.0 21.0,23.4 21.5,23.8 22.0,24.1 22.5,24.5 23.0,24.8 23.5,24.7 24.0,24.6 24.5,24.9 25.0,24.7 25.5,24.6 26.0,24.8 26.5,24.9 27.0,24.1 27.5,22.3 28.0,21.8 28.5,21.5 29.0,21.4 29.5,22.0 30.0,22.3 30.5,22.8 31.0,23.5 31.5,23.7 32.0,22.9 32.5,22.4 33.0,22.0 33.5,21.9 34.0,22.0 34.5,22.2 35.0,22.7 35.5,23.3 36.0,23.9 36.5,23.0 37.0,22.5 37.5,22.1 38.0,21.9 38.5,21.9 39.0,22.2 39.5,22.1 40.0,22.7 40.5,23.8 41.0,23.2 41.5,22.6 42.0,22.2 42.5,21.9 43.0,21.9 43.5,22.1 44.0,22.5 44.5,23.0 45.0,23.9 45.5,23.3 46.0,22.7 46.5,22.2 47.0,22.0 47.5,21.9 48.0,22.0 48.5,23.4 49.0,23.8 49.5,24.1 50.0,24.5 50.5,24.9 51.0,24.8 51.5,24.7 52.0,24.7 52.5,24.7 53.0,24.8 53.5,24.8 54.0,24.9 54.5,24.1 55.0,22.3 55.5,21.8 56.0,21.5 56.5,21.4 57.0,22.0 57.5,22.3 58.0,22.8 58.5,23.5 59.0,23.7 59.5,22.9 60.0,22.4 60.5,22.0 61.0,21.9 61.5,22.0 62.0,22.2 62.5,22.7 63.0,23.3 63.5,23.9 64.0,23.0 64.5,22.5 65.0,22.1 65.5,21.9 66.0,21.9 66.5,22.2 67.0,22.1 67.5,22.7 68.0,23.8 68.5,23.2 69.0,22.6 69.5,22.2 70.0,21.9 70.5,21.9 71.0,22.1 71.5,22.5 72.0,23.0 72.5,23.9 73.0,23.3 73.5,22.7 74.0,22.2 74.5,22.0 75.0,21.9 75.5,22.0 76.0,23.4 76.5,23.8 77.0,24.1 77.5,24.5 78.0,24.7 78.5,24.9 79.0,24.7 79.5,24.6 80.0,24.7 80.5,24.7 81.0,24.7 81.5,24.6 82.0,24.1 82.5,22.3 83.0,21.8 83.5,21.5 84.0,21.4 84.5,22.0 85.0,22.3 85.5,22.8 86.0,23.5 86.5,23.7 87.0,22.9 87.5,22.4 88.0,22.0 88.5,21.9 89.0,22.0 89.5,22.2 90.0,22.7 90.5,23.3 91.0,23.9 91.5,23.0 92.0,22.5 92.5,22.1 93.0,21.9 93.5,21.9 94.0,22.2 94.5,22.1 95.0,22.7 95.5,23.8 96.0,23.2 96.5,22.6 97.0,22.2 97.5,21.9 98.0,21.9 98.5,22.1 99.0,22.5 99.5,23.0 100.0,23.9 100.5,23.3 101.0,22.7 101.5,22.2 102.0,22.0 102.5,21.9 103.0,22.0 103.5,23.4 104.0,23.8 104.5,24.1 105.0,24.5 105.5,24.8 106.0,24.8 106.5,24.6 107.0,24.8 107.5,24.9 108.0,24.7 108.0,28.1 107.5,27.9 107.0,28.0 106.5,28.2 106.0,28.0 105.5,28.0 105.0,28.3 104.5,28.6 104.0,29.0 103.5,29.4 103.0,30.8 102.5,30.9 102.0,30.8 101.5,30.6 101.0,30.1 100.5,29.5 100.0,28.9 99.5,29.8 99.0,30.3 98.5,30.7 98.0,30.9 97.5,30.9 97.0,30.6 96.5,30.2 96.0,29.6 95.5,29.0 95.0,30.1 94.5,30.7 94.0,30.6 93.5,30.9 93.0,30.9 92.5,30.7 92.0,30.3 91.5,29.8 91.0,28.9 90.5,29.5 90.0,30.1 89.5,30.6 89.0,30.8 88.5,30.9 88.0,30.8 87.5,30.4 87.0,29.9 86.5,29.1 86.0,29.3 85.5,30.0 85.0,30.5 84.5,30.8 84.0,31.4 83.5,31.3 83.0,31.0 82.5,30.5 82.0,28.6 81.5,28.2 81.0,28.1 80.5,28.1 80.0,28.1 79.5,28.2 79.0,28.1 78.5,27.9 78.0,28.1 77.5,28.3 77.0,28.6 76.5,29.0 76.0,29.4 75.5,30.8 75.0,30.9 74.5,30.8 74.0,30.6 73.5,30.1 73.0,29.5 72.5,28.9 72.0,29.8 71.5,30.3 71.0,30.7 70.5,30.9 70.0,30.9 69.5,30.6 69.0,30.2 68.5,29.6 68.0,29.0 67.5,30.1 67.0,30.7 66.5,30.6 66.0,30.9 65.5,30.9 65.0,30.7 64.5,30.3 64.0,29.8 63.5,28.9 63.0,29.5 62.5,30.1 62.0,30.6 61.5,30.8 61.0,30.9 60.5,30.8 60.0,30.4 59.5,29.9 59.0,29.1 58.5,29.3 58.0,30.0 57.5,30.5 57.0,30.8 56.5,31.4 56.0,31.3 55.5,31.0 55.0,30.5 54.5,28.6 54.0,27.9 53.5,28.0 53.0,28.0 52.5,28.1 52.0,28.1 51.5,28.1 51.0,28.0 50.5,27.9 50.0,28.3 49.5,28.6 49.0,29.0 48.5,29.4 48.0,30.8 47.5,30.9 47.0,30.8 46.5,30.6 46.0,30.1 45.5,29.5 45.0,28.9 44.5,29.8 44.0,30.3 43.5,30.7 43.0,30.9 42.5,30.9 42.0,30.6 41.5,30.2 41.0,29.6 40.5,29.0 40.0,30.1 39.5,30.7 39.0,30.6 38.5,30.9 38.0,30.9 37.5,30.7 37.0,30.3 36.5,29.8 36.0,28.9 35.5,29.5 35.0,30.1 34.5,30.6 34.0,30.8 33.5,30.9 33.0,30.8 32.5,30.4 32.0,29.9 31.5,29.1 31.0,29.3 30.5,30.0 30.0,30.5 29.5,30.8 29.0,31.4 28.5,31.3 28.0,31.0 27.5,30.5 27.0,28.6 26.5,27.9 26.0,28.0 25.5,28.2 25.0,28.1 24.5,27.9 24.0,28.2 23.5,28.1 23.0,28.0 22.5,28.3 22.0,28.6 21.5,29.0 21.0,29.4 20.5,30.8 20.0,30.9 19.5,30.8 19.0,30.6 18.5,30.1 18.0,29.5 17.5,28.9 17.0,29.8 16.5,30.3 16.0,30.7 15.5,30.9 15.0,30.9 14.5,30.6 14.0,30.2 13.5,29.6 13.0,29.0 12.5,30.1 12.0,30.7 11.5,30.6 11.0,30.9 10.5,30.9 10.0,30.7 9.5,30.3 9.0,29.8 8.5,28.9 8.0,29.5 7.5,30.1 7.0,30.6 6.5,30.8 6.0,30.9 5.5,30.8 5.0,30.4 4.5,29.9 4.0,29.1 3.5,29.3 3.0,30.0 2.5,30.5 2.0,30.8 1.5,31.4 1.0,31.3 0.5,31.0 0.0,30.5" fill="#1c1c24"/><polygon points="0.0,41.0 0.5,40.5 1.0,40.2 1.5,40.1 2.0,40.7 2.5,41.0 3.0,41.5 3.5,42.2 4.0,42.4 4.5,41.6 5.0,41.1 5.5,40.7 6.0,40.6 6.5,40.7 7.0,40.9 7.5,41.4 8.0,42.0 8.5,42.6 9.0,41.7 9.5,41.2 10.0,40.8 10.5,40.6 11.0,40.6 11.5,40.9 12.0,40.8 12.5,41.4 13.0,42.5 13.5,41.9 14.0,41.3 14.5,40.9 15.0,40.6 15.5,40.6 16.0,40.8 16.5,41.2 17.0,41.7 17.5,42.6 18.0,42.0 18.5,41.4 19.0,40.9 19.5,40.7 20.0,40.6 20.5,40.7 21.0,42.1 21.5,42.5 22.0,42.9 22.5,43.2 23.0,43.5 23.5,43.4 24.0,43.3 24.5,43.6 25.0,43.4 25.5,43.3 26.0,43.5 26.5,43.6 27.0,42.9 27.5,41.0 28.0,40.5 28.5,40.2 29.0,40.1 29.5,40.7 30.0,41.0 30.5,41.5 31.0,42.2 31.5,42.4 32.0,41.6 32.5,41.1 33.0,40.7 33.5,40.6 34.0,40.7 34.5,40.9 35.0,41.4 35.5,42.0 36.0,42.6 36.5,41.7 37.0,41.2 37.5,40.8 38.0,40.6 38.5,40.6 39.0,40.9 39.5,40.8 40.0,41.4 40.5,42.5 41.0,41.9 41.5,41.3 42.0,40.9 42.5,40.6 43.0,40.6 43.5,40.8 44.0,41.2 44.5,41.7 45.0,42.6 45.5,42.0 46.0,41.4 46.5,40.9 47.0,40.7 47.5,40.6 48.0,40.7 48.5,42.1 49.0,42.5 49.5,42.9 50.0,43.2 50.5,43.6 51.0,43.5 51.5,43.4 52.0,43.4 52.5,43.4 53.0,43.5 53.5,43.5 54.0,43.6 54.5,42.9 55.0,41.0 55.5,40.5 56.0,40.2 56.5,40.1 57.0,40.7 57.5,41.0 58.0,41.5 58.5,42.2 59.0,42.4 59.5,41.6 60.0,41.1 60.5,40.7 61.0,40.6 61.5,40.7 62.0,40.9 62.5,41.4 63.0,42.0 63.5,42.6 64.0,41.7 64.5,41.2 65.0,40.8 65.5,40.6 66.0,40.6 66.5,40.9 67.0,40.8 67.5,41.4 68.0,42.5 68.5,41.9 69.0,41.3 69.5,40.9 70.0,40.6 70.5,40.6 71.0,40.8 71.5,41.2 72.0,41.7 72.5,42.6 73.0,42.0 73.5,41.4 74.0,40.9 74.5,40.7 75.0,40.6 75.5,40.7 76.0,42.1 76.5,42.5 77.0,42.9 77.5,43.2 78.0,43.4 78.5,43.6 79.0,43.4 79.5,43.3 80.0,43.4 80.5,43.4 81.0,43.4 81.5,43.3 82.0,42.9 82.5,41.0 83.0,40.5 83.5,40.2 84.0,40.1 84.5,40.7 85.0,41.0 85.5,41.5 86.0,42.2 86.5,42.4 87.0,41.6 87.5,41.1 88.0,40.7 88.5,40.6 89.0,40.7 89.5,40.9 90.0,41.4 90.5,42.0 91.0,42.6 91.5,41.7 92.0,41.2 92.5,40.8 93.0,40.6 93.5,40.6 94.0,40.9 94.5,40.8 95.0,41.4 95.5,42.5 96.0,41.9 96.5,41.3 97.0,40.9 97.5,40.6 98.0,40.6 98.5,40.8 99.0,41.2 99.5,41.7 100.0,42.6 100.5,42.0 101.0,41.4 101.5,40.9 102.0,40.7 102.5,40.6 103.0,40.7 103.5,42.1 104.0,42.5 104.5,42.9 105.0,43.2 105.5,43.5 106.0,43.5 106.5,43.3 107.0,43.5 107.5,43.6 108.0,43.4 108.0,46.8 107.5,46.6 107.0,46.7 106.5,46.9 106.0,46.7 105.5,46.7 105.0,47.0 104.5,47.4 104.0,47.7 103.5,48.1 103.0,49.5 102.5,49.6 102.0,49.5 101.5,49.3 101.0,48.8 100.5,48.2 100.0,47.6 99.5,48.5 99.0,49.0 98.5,49.4 98.0,49.6 97.5,49.6 97.0,49.3 96.5,48.9 96.0,48.3 95.5,47.7 95.0,48.8 94.5,49.4 94.0,49.3 93.5,49.6 93.0,49.6 92.5,49.4 92.0,49.0 91.5,48.5 91.0,47.6 90.5,48.2 90.0,48.8 89.5,49.3 89.0,49.5 88.5,49.6 88.0,49.5 87.5,49.1 87.0,48.6 86.5,47.8 86.0,48.0 85.5,48.7 85.0,49.2 84.5,49.5 84.0,50.1 83.5,50.0 83.0,49.7 82.5,49.2 82.0,47.4 81.5,46.9 81.0,46.8 80.5,46.8 80.0,46.8 79.5,46.9 79.0,46.8 78.5,46.6 78.0,46.8 77.5,47.0 77.0,47.4 76.5,47.7 76.0,48.1 75.5,49.5 75.0,49.6 74.5,49.5 74.0,49.3 73.5,48.8 73.0,48.2 72.5,47.6 72.0,48.5 71.5,49.0 71.0,49.4 70.5,49.6 70.0,49.6 69.5,49.3 69.0,48.9 68.5,48.3 68.0,47.7 67.5,48.8 67.0,49.4 66.5,49.3 66.0,49.6 65.5,49.6 65.0,49.4 64.5,49.0 64.0,48.5 63.5,47.6 63.0,48.2 62.5,48.8 62.0,49.3 61.5,49.5 61.0,49.6 60.5,49.5 60.0,49.1 59.5,48.6 59.0,47.8 58.5,48.0 58.0,48.7 57.5,49.2 57.0,49.5 56.5,50.1 56.0,50.0 55.5,49.7 55.0,49.2 54.5,47.4 54.0,46.6 53.5,46.7 53.0,46.7 52.5,46.8 52.0,46.8 51.5,46.8 51.0,46.7 50.5,46.6 50.0,47.0 49.5,47.4 49.0,47.7 48.5,48.1 48.0,49.5 47.5,49.6 47.0,49.5 46.5,49.3 46.0,48.8 45.5,48.2 45.0,47.6 44.5,48.5 44.0,49.0 43.5,49.4 43.0,49.6 42.5,49.6 42.0,49.3 41.5,48.9 41.0,48.3 40.5,47.7 40.0,48.8 39.5,49.4 39.0,49.3 38.5,49.6 38.0,49.6 37.5,49.4 37.0,49.0 36.5,48.5 36.0,47.6 35.5,48.2 35.0,48.8 34.5,49.3 34.0,49.5 33.5,49.6 33.0,49.5 32.5,49.1 32.0,48.6 31.5,47.8 31.0,48.0 30.5,48.7 30.0,49.2 29.5,49.5 29.0,50.1 28.5,50.0 28.0,49.7 27.5,49.2 27.0,47.4 26.5,46.6 26.0,46.7 25.5,46.9 25.0,46.8 24.5,46.6 24.0,46.9 23.5,46.8 23.0,46.7 22.5,47.0 22.0,47.4 21.5,47.7 21.0,48.1 20.5,49.5 20.0,49.6 19.5,49.5 19.0,49.3 18.5,48.8 18.0,48.2 17.5,47.6 17.0,48.5 16.5,49.0 16.0,49.4 15.5,49.6 15.0,49.6 14.5,49.3 14.0,48.9 13.5,48.3 13.0,47.7 12.5,48.8 12.0,49.4 11.5,49.3 11.0,49.6 10.5,49.6 10.0,49.4 9.5,49.0 9.0,48.5 8.5,47.6 8.0,48.2 7.5,48.8 7.0,49.3 6.5,49.5 6.0,49.6 5.5,49.5 5.0,49.1 4.5,48.6 4.0,47.8 3.5,48.0 3.0,48.7 2.5,49.2 2.0,49.5 1.5,50.1 1.0,50.0 0.5,49.7 0.0,49.2" fill="#1c1c24"/></svg><div style="left:258px;top:149px;width:110px;height:54px;background:#93a7ff;"></div><div style="left:258px;top:165px;width:110px;height:1px;background:rgba(0,0,30,0.22);"></div><div style="left:271.75px;top:166px;width:1px;height:37px;background:rgba(0,0,30,0.12);"></div><div style="left:285.50px;top:166px;width:1px;height:37px;background:rgba(0,0,30,0.12);"></div><div style="left:299.25px;top:166px;width:1px;height:37px;background:rgba(0,0,30,0.12);"></div><div style="left:313.00px;top:166px;width:1px;height:37px;background:rgba(0,0,30,0.12);"></div><div style="left:326.75px;top:166px;width:1px;height:37px;background:rgba(0,0,30,0.12);"></div><div style="left:340.50px;top:166px;width:1px;height:37px;background:rgba(0,0,30,0.12);"></div><div style="left:354.25px;top:166px;width:1px;height:37px;background:rgba(0,0,30,0.12);"></div><div style="left:258px;top:149px;width:1.5px;height:54px;background:rgba(20,20,60,0.45);"></div><svg style="position:absolute;left:259px;top:149px;" width="109" height="54" viewBox="0 0 109 54"><polygon points="0.0,22.3 0.5,21.8 1.0,21.5 1.5,21.4 2.0,22.0 2.5,22.3 3.0,22.8 3.5,23.5 4.0,23.7 4.5,22.9 5.0,22.4 5.5,22.0 6.0,21.9 6.5,22.0 7.0,22.2 7.5,22.7 8.0,23.3 8.5,23.9 9.0,23.0 9.5,22.5 10.0,22.1 10.5,21.9 11.0,21.9 11.5,22.2 12.0,22.1 12.5,22.7 13.0,23.8 13.5,23.2 14.0,22.6 14.5,22.2 15.0,21.9 15.5,21.9 16.0,22.1 16.5,22.5 17.0,23.0 17.5,23.9 18.0,23.3 18.5,22.7 19.0,22.2 19.5,22.0 20.0,21.9 20.5,22.0 21.0,23.4 21.5,23.8 22.0,24.1 22.5,24.5 23.0,24.7 23.5,24.9 24.0,24.6 24.5,24.8 25.0,24.9 25.5,24.8 26.0,24.7 26.5,24.8 27.0,24.1 27.5,22.3 28.0,21.8 28.5,21.5 29.0,21.4 29.5,22.0 30.0,22.3 30.5,22.8 31.0,23.5 31.5,23.7 32.0,22.9 32.5,22.4 33.0,22.0 33.5,21.9 34.0,22.0 34.5,22.2 35.0,22.7 35.5,23.3 36.0,23.9 36.5,23.0 37.0,22.5 37.5,22.1 38.0,21.9 38.5,21.9 39.0,22.2 39.5,22.1 40.0,22.7 40.5,23.8 41.0,23.2 41.5,22.6 42.0,22.2 42.5,21.9 43.0,21.9 43.5,22.1 44.0,22.5 44.5,23.0 45.0,23.9 45.5,23.3 46.0,22.7 46.5,22.2 47.0,22.0 47.5,21.9 48.0,22.0 48.5,23.4 49.0,23.8 49.5,24.1 50.0,24.5 50.5,24.8 51.0,24.8 51.5,24.6 52.0,24.6 52.5,24.6 53.0,24.7 53.5,24.9 54.0,24.7 54.5,24.1 55.0,22.3 55.5,21.8 56.0,21.5 56.5,21.4 57.0,22.0 57.5,22.3 58.0,22.8 58.5,23.5 59.0,23.7 59.5,22.9 60.0,22.4 60.5,22.0 61.0,21.9 61.5,22.0 62.0,22.2 62.5,22.7 63.0,23.3 63.5,23.9 64.0,23.0 64.5,22.5 65.0,22.1 65.5,21.9 66.0,21.9 66.5,22.2 67.0,22.1 67.5,22.7 68.0,23.8 68.5,23.2 69.0,22.6 69.5,22.2 70.0,21.9 70.5,21.9 71.0,22.1 71.5,22.5 72.0,23.0 72.5,23.9 73.0,23.3 73.5,22.7 74.0,22.2 74.5,22.0 75.0,21.9 75.5,22.0 76.0,23.4 76.5,23.8 77.0,24.1 77.5,24.5 78.0,24.7 78.5,24.6 79.0,24.7 79.5,24.6 80.0,24.7 80.5,24.6 81.0,24.6 81.5,24.7 82.0,24.1 82.5,22.3 83.0,21.8 83.5,21.5 84.0,21.4 84.5,22.0 85.0,22.3 85.5,22.8 86.0,23.5 86.5,23.7 87.0,22.9 87.5,22.4 88.0,22.0 88.5,21.9 89.0,22.0 89.5,22.2 90.0,22.7 90.5,23.3 91.0,23.9 91.5,23.0 92.0,22.5 92.5,22.1 93.0,21.9 93.5,21.9 94.0,22.2 94.5,22.1 95.0,22.7 95.5,23.8 96.0,23.2 96.5,22.6 97.0,22.2 97.5,21.9 98.0,21.9 98.5,22.1 99.0,22.5 99.5,23.0 100.0,23.9 100.5,23.3 101.0,22.7 101.5,22.2 102.0,22.0 102.5,21.9 103.0,22.0 103.5,23.4 104.0,23.8 104.5,24.1 105.0,24.5 105.5,24.7 106.0,24.6 106.5,24.8 107.0,24.7 107.5,24.7 108.0,24.8 108.0,28.0 107.5,28.1 107.0,28.1 106.5,28.0 106.0,28.2 105.5,28.1 105.0,28.3 104.5,28.6 104.0,29.0 103.5,29.4 103.0,30.8 102.5,30.9 102.0,30.8 101.5,30.6 101.0,30.1 100.5,29.5 100.0,28.9 99.5,29.8 99.0,30.3 98.5,30.7 98.0,30.9 97.5,30.9 97.0,30.6 96.5,30.2 96.0,29.6 95.5,29.0 95.0,30.1 94.5,30.7 94.0,30.6 93.5,30.9 93.0,30.9 92.5,30.7 92.0,30.3 91.5,29.8 91.0,28.9 90.5,29.5 90.0,30.1 89.5,30.6 89.0,30.8 88.5,30.9 88.0,30.8 87.5,30.4 87.0,29.9 86.5,29.1 86.0,29.3 85.5,30.0 85.0,30.5 84.5,30.8 84.0,31.4 83.5,31.3 83.0,31.0 82.5,30.5 82.0,28.6 81.5,28.1 81.0,28.2 80.5,28.2 80.0,28.1 79.5,28.2 79.0,28.1 78.5,28.2 78.0,28.1 77.5,28.3 77.0,28.6 76.5,29.0 76.0,29.4 75.5,30.8 75.0,30.9 74.5,30.8 74.0,30.6 73.5,30.1 73.0,29.5 72.5,28.9 72.0,29.8 71.5,30.3 71.0,30.7 70.5,30.9 70.0,30.9 69.5,30.6 69.0,30.2 68.5,29.6 68.0,29.0 67.5,30.1 67.0,30.7 66.5,30.6 66.0,30.9 65.5,30.9 65.0,30.7 64.5,30.3 64.0,29.8 63.5,28.9 63.0,29.5 62.5,30.1 62.0,30.6 61.5,30.8 61.0,30.9 60.5,30.8 60.0,30.4 59.5,29.9 59.0,29.1 58.5,29.3 58.0,30.0 57.5,30.5 57.0,30.8 56.5,31.4 56.0,31.3 55.5,31.0 55.0,30.5 54.5,28.6 54.0,28.1 53.5,27.9 53.0,28.1 52.5,28.2 52.0,28.2 51.5,28.2 51.0,28.0 50.5,28.0 50.0,28.3 49.5,28.6 49.0,29.0 48.5,29.4 48.0,30.8 47.5,30.9 47.0,30.8 46.5,30.6 46.0,30.1 45.5,29.5 45.0,28.9 44.5,29.8 44.0,30.3 43.5,30.7 43.0,30.9 42.5,30.9 42.0,30.6 41.5,30.2 41.0,29.6 40.5,29.0 40.0,30.1 39.5,30.7 39.0,30.6 38.5,30.9 38.0,30.9 37.5,30.7 37.0,30.3 36.5,29.8 36.0,28.9 35.5,29.5 35.0,30.1 34.5,30.6 34.0,30.8 33.5,30.9 33.0,30.8 32.5,30.4 32.0,29.9 31.5,29.1 31.0,29.3 30.5,30.0 30.0,30.5 29.5,30.8 29.0,31.4 28.5,31.3 28.0,31.0 27.5,30.5 27.0,28.6 26.5,28.0 26.0,28.1 25.5,28.0 25.0,27.9 24.5,28.0 24.0,28.2 23.5,27.9 23.0,28.1 22.5,28.3 22.0,28.6 21.5,29.0 21.0,29.4 20.5,30.8 20.0,30.9 19.5,30.8 19.0,30.6 18.5,30.1 18.0,29.5 17.5,28.9 17.0,29.8 16.5,30.3 16.0,30.7 15.5,30.9 15.0,30.9 14.5,30.6 14.0,30.2 13.5,29.6 13.0,29.0 12.5,30.1 12.0,30.7 11.5,30.6 11.0,30.9 10.5,30.9 10.0,30.7 9.5,30.3 9.0,29.8 8.5,28.9 8.0,29.5 7.5,30.1 7.0,30.6 6.5,30.8 6.0,30.9 5.5,30.8 5.0,30.4 4.5,29.9 4.0,29.1 3.5,29.3 3.0,30.0 2.5,30.5 2.0,30.8 1.5,31.4 1.0,31.3 0.5,31.0 0.0,30.5" fill="#1c1c24"/><polygon points="0.0,41.0 0.5,40.5 1.0,40.2 1.5,40.1 2.0,40.7 2.5,41.0 3.0,41.5 3.5,42.2 4.0,42.4 4.5,41.6 5.0,41.1 5.5,40.7 6.0,40.6 6.5,40.7 7.0,40.9 7.5,41.4 8.0,42.0 8.5,42.6 9.0,41.7 9.5,41.2 10.0,40.8 10.5,40.6 11.0,40.6 11.5,40.9 12.0,40.8 12.5,41.4 13.0,42.5 13.5,41.9 14.0,41.3 14.5,40.9 15.0,40.6 15.5,40.6 16.0,40.8 16.5,41.2 17.0,41.7 17.5,42.6 18.0,42.0 18.5,41.4 19.0,40.9 19.5,40.7 20.0,40.6 20.5,40.7 21.0,42.1 21.5,42.5 22.0,42.9 22.5,43.2 23.0,43.4 23.5,43.6 24.0,43.3 24.5,43.5 25.0,43.6 25.5,43.5 26.0,43.4 26.5,43.5 27.0,42.9 27.5,41.0 28.0,40.5 28.5,40.2 29.0,40.1 29.5,40.7 30.0,41.0 30.5,41.5 31.0,42.2 31.5,42.4 32.0,41.6 32.5,41.1 33.0,40.7 33.5,40.6 34.0,40.7 34.5,40.9 35.0,41.4 35.5,42.0 36.0,42.6 36.5,41.7 37.0,41.2 37.5,40.8 38.0,40.6 38.5,40.6 39.0,40.9 39.5,40.8 40.0,41.4 40.5,42.5 41.0,41.9 41.5,41.3 42.0,40.9 42.5,40.6 43.0,40.6 43.5,40.8 44.0,41.2 44.5,41.7 45.0,42.6 45.5,42.0 46.0,41.4 46.5,40.9 47.0,40.7 47.5,40.6 48.0,40.7 48.5,42.1 49.0,42.5 49.5,42.9 50.0,43.2 50.5,43.5 51.0,43.5 51.5,43.3 52.0,43.3 52.5,43.3 53.0,43.4 53.5,43.6 54.0,43.4 54.5,42.9 55.0,41.0 55.5,40.5 56.0,40.2 56.5,40.1 57.0,40.7 57.5,41.0 58.0,41.5 58.5,42.2 59.0,42.4 59.5,41.6 60.0,41.1 60.5,40.7 61.0,40.6 61.5,40.7 62.0,40.9 62.5,41.4 63.0,42.0 63.5,42.6 64.0,41.7 64.5,41.2 65.0,40.8 65.5,40.6 66.0,40.6 66.5,40.9 67.0,40.8 67.5,41.4 68.0,42.5 68.5,41.9 69.0,41.3 69.5,40.9 70.0,40.6 70.5,40.6 71.0,40.8 71.5,41.2 72.0,41.7 72.5,42.6 73.0,42.0 73.5,41.4 74.0,40.9 74.5,40.7 75.0,40.6 75.5,40.7 76.0,42.1 76.5,42.5 77.0,42.9 77.5,43.2 78.0,43.4 78.5,43.3 79.0,43.4 79.5,43.3 80.0,43.4 80.5,43.3 81.0,43.3 81.5,43.4 82.0,42.9 82.5,41.0 83.0,40.5 83.5,40.2 84.0,40.1 84.5,40.7 85.0,41.0 85.5,41.5 86.0,42.2 86.5,42.4 87.0,41.6 87.5,41.1 88.0,40.7 88.5,40.6 89.0,40.7 89.5,40.9 90.0,41.4 90.5,42.0 91.0,42.6 91.5,41.7 92.0,41.2 92.5,40.8 93.0,40.6 93.5,40.6 94.0,40.9 94.5,40.8 95.0,41.4 95.5,42.5 96.0,41.9 96.5,41.3 97.0,40.9 97.5,40.6 98.0,40.6 98.5,40.8 99.0,41.2 99.5,41.7 100.0,42.6 100.5,42.0 101.0,41.4 101.5,40.9 102.0,40.7 102.5,40.6 103.0,40.7 103.5,42.1 104.0,42.5 104.5,42.9 105.0,43.2 105.5,43.4 106.0,43.3 106.5,43.5 107.0,43.4 107.5,43.4 108.0,43.5 108.0,46.7 107.5,46.8 107.0,46.8 106.5,46.7 106.0,46.9 105.5,46.8 105.0,47.0 104.5,47.4 104.0,47.7 103.5,48.1 103.0,49.5 102.5,49.6 102.0,49.5 101.5,49.3 101.0,48.8 100.5,48.2 100.0,47.6 99.5,48.5 99.0,49.0 98.5,49.4 98.0,49.6 97.5,49.6 97.0,49.3 96.5,48.9 96.0,48.3 95.5,47.7 95.0,48.8 94.5,49.4 94.0,49.3 93.5,49.6 93.0,49.6 92.5,49.4 92.0,49.0 91.5,48.5 91.0,47.6 90.5,48.2 90.0,48.8 89.5,49.3 89.0,49.5 88.5,49.6 88.0,49.5 87.5,49.1 87.0,48.6 86.5,47.8 86.0,48.0 85.5,48.7 85.0,49.2 84.5,49.5 84.0,50.1 83.5,50.0 83.0,49.7 82.5,49.2 82.0,47.4 81.5,46.8 81.0,46.9 80.5,46.9 80.0,46.8 79.5,46.9 79.0,46.8 78.5,46.9 78.0,46.8 77.5,47.0 77.0,47.4 76.5,47.7 76.0,48.1 75.5,49.5 75.0,49.6 74.5,49.5 74.0,49.3 73.5,48.8 73.0,48.2 72.5,47.6 72.0,48.5 71.5,49.0 71.0,49.4 70.5,49.6 70.0,49.6 69.5,49.3 69.0,48.9 68.5,48.3 68.0,47.7 67.5,48.8 67.0,49.4 66.5,49.3 66.0,49.6 65.5,49.6 65.0,49.4 64.5,49.0 64.0,48.5 63.5,47.6 63.0,48.2 62.5,48.8 62.0,49.3 61.5,49.5 61.0,49.6 60.5,49.5 60.0,49.1 59.5,48.6 59.0,47.8 58.5,48.0 58.0,48.7 57.5,49.2 57.0,49.5 56.5,50.1 56.0,50.0 55.5,49.7 55.0,49.2 54.5,47.4 54.0,46.8 53.5,46.6 53.0,46.8 52.5,46.9 52.0,46.9 51.5,46.9 51.0,46.7 50.5,46.7 50.0,47.0 49.5,47.4 49.0,47.7 48.5,48.1 48.0,49.5 47.5,49.6 47.0,49.5 46.5,49.3 46.0,48.8 45.5,48.2 45.0,47.6 44.5,48.5 44.0,49.0 43.5,49.4 43.0,49.6 42.5,49.6 42.0,49.3 41.5,48.9 41.0,48.3 40.5,47.7 40.0,48.8 39.5,49.4 39.0,49.3 38.5,49.6 38.0,49.6 37.5,49.4 37.0,49.0 36.5,48.5 36.0,47.6 35.5,48.2 35.0,48.8 34.5,49.3 34.0,49.5 33.5,49.6 33.0,49.5 32.5,49.1 32.0,48.6 31.5,47.8 31.0,48.0 30.5,48.7 30.0,49.2 29.5,49.5 29.0,50.1 28.5,50.0 28.0,49.7 27.5,49.2 27.0,47.4 26.5,46.7 26.0,46.8 25.5,46.7 25.0,46.6 24.5,46.7 24.0,46.9 23.5,46.6 23.0,46.8 22.5,47.0 22.0,47.4 21.5,47.7 21.0,48.1 20.5,49.5 20.0,49.6 19.5,49.5 19.0,49.3 18.5,48.8 18.0,48.2 17.5,47.6 17.0,48.5 16.5,49.0 16.0,49.4 15.5,49.6 15.0,49.6 14.5,49.3 14.0,48.9 13.5,48.3 13.0,47.7 12.5,48.8 12.0,49.4 11.5,49.3 11.0,49.6 10.5,49.6 10.0,49.4 9.5,49.0 9.0,48.5 8.5,47.6 8.0,48.2 7.5,48.8 7.0,49.3 6.5,49.5 6.0,49.6 5.5,49.5 5.0,49.1 4.5,48.6 4.0,47.8 3.5,48.0 3.0,48.7 2.5,49.2 2.0,49.5 1.5,50.1 1.0,50.0 0.5,49.7 0.0,49.2" fill="#1c1c24"/></svg><div style="left:368px;top:149px;width:110px;height:54px;background:#93a7ff;"></div><div style="left:368px;top:165px;width:110px;height:1px;background:rgba(0,0,30,0.22);"></div><div style="left:381.75px;top:166px;width:1px;height:37px;background:rgba(0,0,30,0.12);"></div><div style="left:395.50px;top:166px;width:1px;height:37px;background:rgba(0,0,30,0.12);"></div><div style="left:409.25px;top:166px;width:1px;height:37px;background:rgba(0,0,30,0.12);"></div><div style="left:423.00px;top:166px;width:1px;height:37px;background:rgba(0,0,30,0.12);"></div><div style="left:436.75px;top:166px;width:1px;height:37px;background:rgba(0,0,30,0.12);"></div><div style="left:450.50px;top:166px;width:1px;height:37px;background:rgba(0,0,30,0.12);"></div><div style="left:464.25px;top:166px;width:1px;height:37px;background:rgba(0,0,30,0.12);"></div><div style="left:368px;top:149px;width:1.5px;height:54px;background:rgba(20,20,60,0.45);"></div><svg style="position:absolute;left:369px;top:149px;" width="109" height="54" viewBox="0 0 109 54"><polygon points="0.0,22.3 0.5,21.8 1.0,21.5 1.5,21.4 2.0,22.0 2.5,22.3 3.0,22.8 3.5,23.5 4.0,23.7 4.5,22.9 5.0,22.4 5.5,22.0 6.0,21.9 6.5,22.0 7.0,22.2 7.5,22.7 8.0,23.3 8.5,23.9 9.0,23.0 9.5,22.5 10.0,22.1 10.5,21.9 11.0,21.9 11.5,22.2 12.0,22.1 12.5,22.7 13.0,23.8 13.5,23.2 14.0,22.6 14.5,22.2 15.0,21.9 15.5,21.9 16.0,22.1 16.5,22.5 17.0,23.0 17.5,23.9 18.0,23.3 18.5,22.7 19.0,22.2 19.5,22.0 20.0,21.9 20.5,22.0 21.0,23.4 21.5,23.8 22.0,24.1 22.5,24.5 23.0,24.6 23.5,24.7 24.0,24.9 24.5,24.6 25.0,24.9 25.5,24.7 26.0,24.7 26.5,24.8 27.0,24.1 27.5,22.3 28.0,21.8 28.5,21.5 29.0,21.4 29.5,22.0 30.0,22.3 30.5,22.8 31.0,23.5 31.5,23.7 32.0,22.9 32.5,22.4 33.0,22.0 33.5,21.9 34.0,22.0 34.5,22.2 35.0,22.7 35.5,23.3 36.0,23.9 36.5,23.0 37.0,22.5 37.5,22.1 38.0,21.9 38.5,21.9 39.0,22.2 39.5,22.1 40.0,22.7 40.5,23.8 41.0,23.2 41.5,22.6 42.0,22.2 42.5,21.9 43.0,21.9 43.5,22.1 44.0,22.5 44.5,23.0 45.0,23.9 45.5,23.3 46.0,22.7 46.5,22.2 47.0,22.0 47.5,21.9 48.0,22.0 48.5,23.4 49.0,23.8 49.5,24.1 50.0,24.5 50.5,24.8 51.0,24.8 51.5,24.6 52.0,24.7 52.5,24.8 53.0,24.7 53.5,24.7 54.0,24.8 54.5,24.1 55.0,22.3 55.5,21.8 56.0,21.5 56.5,21.4 57.0,22.0 57.5,22.3 58.0,22.8 58.5,23.5 59.0,23.7 59.5,22.9 60.0,22.4 60.5,22.0 61.0,21.9 61.5,22.0 62.0,22.2 62.5,22.7 63.0,23.3 63.5,23.9 64.0,23.0 64.5,22.5 65.0,22.1 65.5,21.9 66.0,21.9 66.5,22.2 67.0,22.1 67.5,22.7 68.0,23.8 68.5,23.2 69.0,22.6 69.5,22.2 70.0,21.9 70.5,21.9 71.0,22.1 71.5,22.5 72.0,23.0 72.5,23.9 73.0,23.3 73.5,22.7 74.0,22.2 74.5,22.0 75.0,21.9 75.5,22.0 76.0,23.4 76.5,23.8 77.0,24.1 77.5,24.5 78.0,24.8 78.5,24.8 79.0,24.9 79.5,24.8 80.0,24.7 80.5,24.6 81.0,24.8 81.5,24.8 82.0,24.1 82.5,22.3 83.0,21.8 83.5,21.5 84.0,21.4 84.5,22.0 85.0,22.3 85.5,22.8 86.0,23.5 86.5,23.7 87.0,22.9 87.5,22.4 88.0,22.0 88.5,21.9 89.0,22.0 89.5,22.2 90.0,22.7 90.5,23.3 91.0,23.9 91.5,23.0 92.0,22.5 92.5,22.1 93.0,21.9 93.5,21.9 94.0,22.2 94.5,22.1 95.0,22.7 95.5,23.8 96.0,23.2 96.5,22.6 97.0,22.2 97.5,21.9 98.0,21.9 98.5,22.1 99.0,22.5 99.5,23.0 100.0,23.9 100.5,23.3 101.0,22.7 101.5,22.2 102.0,22.0 102.5,21.9 103.0,22.0 103.5,23.4 104.0,23.8 104.5,24.1 105.0,24.5 105.5,24.7 106.0,24.8 106.5,24.6 107.0,24.7 107.5,24.7 108.0,24.7 108.0,28.1 107.5,28.1 107.0,28.1 106.5,28.2 106.0,28.0 105.5,28.1 105.0,28.3 104.5,28.6 104.0,29.0 103.5,29.4 103.0,30.8 102.5,30.9 102.0,30.8 101.5,30.6 101.0,30.1 100.5,29.5 100.0,28.9 99.5,29.8 99.0,30.3 98.5,30.7 98.0,30.9 97.5,30.9 97.0,30.6 96.5,30.2 96.0,29.6 95.5,29.0 95.0,30.1 94.5,30.7 94.0,30.6 93.5,30.9 93.0,30.9 92.5,30.7 92.0,30.3 91.5,29.8 91.0,28.9 90.5,29.5 90.0,30.1 89.5,30.6 89.0,30.8 88.5,30.9 88.0,30.8 87.5,30.4 87.0,29.9 86.5,29.1 86.0,29.3 85.5,30.0 85.0,30.5 84.5,30.8 84.0,31.4 83.5,31.3 83.0,31.0 82.5,30.5 82.0,28.6 81.5,28.0 81.0,28.0 80.5,28.2 80.0,28.1 79.5,28.0 79.0,27.9 78.5,28.0 78.0,28.0 77.5,28.3 77.0,28.6 76.5,29.0 76.0,29.4 75.5,30.8 75.0,30.9 74.5,30.8 74.0,30.6 73.5,30.1 73.0,29.5 72.5,28.9 72.0,29.8 71.5,30.3 71.0,30.7 70.5,30.9 70.0,30.9 69.5,30.6 69.0,30.2 68.5,29.6 68.0,29.0 67.5,30.1 67.0,30.7 66.5,30.6 66.0,30.9 65.5,30.9 65.0,30.7 64.5,30.3 64.0,29.8 63.5,28.9 63.0,29.5 62.5,30.1 62.0,30.6 61.5,30.8 61.0,30.9 60.5,30.8 60.0,30.4 59.5,29.9 59.0,29.1 58.5,29.3 58.0,30.0 57.5,30.5 57.0,30.8 56.5,31.4 56.0,31.3 55.5,31.0 55.0,30.5 54.5,28.6 54.0,28.0 53.5,28.1 53.0,28.1 52.5,28.0 52.0,28.1 51.5,28.2 51.0,28.0 50.5,28.0 50.0,28.3 49.5,28.6 49.0,29.0 48.5,29.4 48.0,30.8 47.5,30.9 47.0,30.8 46.5,30.6 46.0,30.1 45.5,29.5 45.0,28.9 44.5,29.8 44.0,30.3 43.5,30.7 43.0,30.9 42.5,30.9 42.0,30.6 41.5,30.2 41.0,29.6 40.5,29.0 40.0,30.1 39.5,30.7 39.0,30.6 38.5,30.9 38.0,30.9 37.5,30.7 37.0,30.3 36.5,29.8 36.0,28.9 35.5,29.5 35.0,30.1 34.5,30.6 34.0,30.8 33.5,30.9 33.0,30.8 32.5,30.4 32.0,29.9 31.5,29.1 31.0,29.3 30.5,30.0 30.0,30.5 29.5,30.8 29.0,31.4 28.5,31.3 28.0,31.0 27.5,30.5 27.0,28.6 26.5,28.0 26.0,28.1 25.5,28.1 25.0,27.9 24.5,28.2 24.0,27.9 23.5,28.1 23.0,28.2 22.5,28.3 22.0,28.6 21.5,29.0 21.0,29.4 20.5,30.8 20.0,30.9 19.5,30.8 19.0,30.6 18.5,30.1 18.0,29.5 17.5,28.9 17.0,29.8 16.5,30.3 16.0,30.7 15.5,30.9 15.0,30.9 14.5,30.6 14.0,30.2 13.5,29.6 13.0,29.0 12.5,30.1 12.0,30.7 11.5,30.6 11.0,30.9 10.5,30.9 10.0,30.7 9.5,30.3 9.0,29.8 8.5,28.9 8.0,29.5 7.5,30.1 7.0,30.6 6.5,30.8 6.0,30.9 5.5,30.8 5.0,30.4 4.5,29.9 4.0,29.1 3.5,29.3 3.0,30.0 2.5,30.5 2.0,30.8 1.5,31.4 1.0,31.3 0.5,31.0 0.0,30.5" fill="#1c1c24"/><polygon points="0.0,41.0 0.5,40.5 1.0,40.2 1.5,40.1 2.0,40.7 2.5,41.0 3.0,41.5 3.5,42.2 4.0,42.4 4.5,41.6 5.0,41.1 5.5,40.7 6.0,40.6 6.5,40.7 7.0,40.9 7.5,41.4 8.0,42.0 8.5,42.6 9.0,41.7 9.5,41.2 10.0,40.8 10.5,40.6 11.0,40.6 11.5,40.9 12.0,40.8 12.5,41.4 13.0,42.5 13.5,41.9 14.0,41.3 14.5,40.9 15.0,40.6 15.5,40.6 16.0,40.8 16.5,41.2 17.0,41.7 17.5,42.6 18.0,42.0 18.5,41.4 19.0,40.9 19.5,40.7 20.0,40.6 20.5,40.7 21.0,42.1 21.5,42.5 22.0,42.9 22.5,43.2 23.0,43.3 23.5,43.4 24.0,43.6 24.5,43.3 25.0,43.6 25.5,43.4 26.0,43.4 26.5,43.5 27.0,42.9 27.5,41.0 28.0,40.5 28.5,40.2 29.0,40.1 29.5,40.7 30.0,41.0 30.5,41.5 31.0,42.2 31.5,42.4 32.0,41.6 32.5,41.1 33.0,40.7 33.5,40.6 34.0,40.7 34.5,40.9 35.0,41.4 35.5,42.0 36.0,42.6 36.5,41.7 37.0,41.2 37.5,40.8 38.0,40.6 38.5,40.6 39.0,40.9 39.5,40.8 40.0,41.4 40.5,42.5 41.0,41.9 41.5,41.3 42.0,40.9 42.5,40.6 43.0,40.6 43.5,40.8 44.0,41.2 44.5,41.7 45.0,42.6 45.5,42.0 46.0,41.4 46.5,40.9 47.0,40.7 47.5,40.6 48.0,40.7 48.5,42.1 49.0,42.5 49.5,42.9 50.0,43.2 50.5,43.5 51.0,43.5 51.5,43.3 52.0,43.4 52.5,43.5 53.0,43.4 53.5,43.4 54.0,43.5 54.5,42.9 55.0,41.0 55.5,40.5 56.0,40.2 56.5,40.1 57.0,40.7 57.5,41.0 58.0,41.5 58.5,42.2 59.0,42.4 59.5,41.6 60.0,41.1 60.5,40.7 61.0,40.6 61.5,40.7 62.0,40.9 62.5,41.4 63.0,42.0 63.5,42.6 64.0,41.7 64.5,41.2 65.0,40.8 65.5,40.6 66.0,40.6 66.5,40.9 67.0,40.8 67.5,41.4 68.0,42.5 68.5,41.9 69.0,41.3 69.5,40.9 70.0,40.6 70.5,40.6 71.0,40.8 71.5,41.2 72.0,41.7 72.5,42.6 73.0,42.0 73.5,41.4 74.0,40.9 74.5,40.7 75.0,40.6 75.5,40.7 76.0,42.1 76.5,42.5 77.0,42.9 77.5,43.2 78.0,43.5 78.5,43.5 79.0,43.6 79.5,43.5 80.0,43.4 80.5,43.3 81.0,43.5 81.5,43.5 82.0,42.9 82.5,41.0 83.0,40.5 83.5,40.2 84.0,40.1 84.5,40.7 85.0,41.0 85.5,41.5 86.0,42.2 86.5,42.4 87.0,41.6 87.5,41.1 88.0,40.7 88.5,40.6 89.0,40.7 89.5,40.9 90.0,41.4 90.5,42.0 91.0,42.6 91.5,41.7 92.0,41.2 92.5,40.8 93.0,40.6 93.5,40.6 94.0,40.9 94.5,40.8 95.0,41.4 95.5,42.5 96.0,41.9 96.5,41.3 97.0,40.9 97.5,40.6 98.0,40.6 98.5,40.8 99.0,41.2 99.5,41.7 100.0,42.6 100.5,42.0 101.0,41.4 101.5,40.9 102.0,40.7 102.5,40.6 103.0,40.7 103.5,42.1 104.0,42.5 104.5,42.9 105.0,43.2 105.5,43.4 106.0,43.5 106.5,43.3 107.0,43.4 107.5,43.4 108.0,43.4 108.0,46.8 107.5,46.8 107.0,46.8 106.5,46.9 106.0,46.7 105.5,46.8 105.0,47.0 104.5,47.4 104.0,47.7 103.5,48.1 103.0,49.5 102.5,49.6 102.0,49.5 101.5,49.3 101.0,48.8 100.5,48.2 100.0,47.6 99.5,48.5 99.0,49.0 98.5,49.4 98.0,49.6 97.5,49.6 97.0,49.3 96.5,48.9 96.0,48.3 95.5,47.7 95.0,48.8 94.5,49.4 94.0,49.3 93.5,49.6 93.0,49.6 92.5,49.4 92.0,49.0 91.5,48.5 91.0,47.6 90.5,48.2 90.0,48.8 89.5,49.3 89.0,49.5 88.5,49.6 88.0,49.5 87.5,49.1 87.0,48.6 86.5,47.8 86.0,48.0 85.5,48.7 85.0,49.2 84.5,49.5 84.0,50.1 83.5,50.0 83.0,49.7 82.5,49.2 82.0,47.4 81.5,46.7 81.0,46.7 80.5,46.9 80.0,46.8 79.5,46.7 79.0,46.6 78.5,46.7 78.0,46.7 77.5,47.0 77.0,47.4 76.5,47.7 76.0,48.1 75.5,49.5 75.0,49.6 74.5,49.5 74.0,49.3 73.5,48.8 73.0,48.2 72.5,47.6 72.0,48.5 71.5,49.0 71.0,49.4 70.5,49.6 70.0,49.6 69.5,49.3 69.0,48.9 68.5,48.3 68.0,47.7 67.5,48.8 67.0,49.4 66.5,49.3 66.0,49.6 65.5,49.6 65.0,49.4 64.5,49.0 64.0,48.5 63.5,47.6 63.0,48.2 62.5,48.8 62.0,49.3 61.5,49.5 61.0,49.6 60.5,49.5 60.0,49.1 59.5,48.6 59.0,47.8 58.5,48.0 58.0,48.7 57.5,49.2 57.0,49.5 56.5,50.1 56.0,50.0 55.5,49.7 55.0,49.2 54.5,47.4 54.0,46.7 53.5,46.8 53.0,46.8 52.5,46.7 52.0,46.8 51.5,46.9 51.0,46.7 50.5,46.7 50.0,47.0 49.5,47.4 49.0,47.7 48.5,48.1 48.0,49.5 47.5,49.6 47.0,49.5 46.5,49.3 46.0,48.8 45.5,48.2 45.0,47.6 44.5,48.5 44.0,49.0 43.5,49.4 43.0,49.6 42.5,49.6 42.0,49.3 41.5,48.9 41.0,48.3 40.5,47.7 40.0,48.8 39.5,49.4 39.0,49.3 38.5,49.6 38.0,49.6 37.5,49.4 37.0,49.0 36.5,48.5 36.0,47.6 35.5,48.2 35.0,48.8 34.5,49.3 34.0,49.5 33.5,49.6 33.0,49.5 32.5,49.1 32.0,48.6 31.5,47.8 31.0,48.0 30.5,48.7 30.0,49.2 29.5,49.5 29.0,50.1 28.5,50.0 28.0,49.7 27.5,49.2 27.0,47.4 26.5,46.7 26.0,46.8 25.5,46.8 25.0,46.6 24.5,46.9 24.0,46.6 23.5,46.8 23.0,46.9 22.5,47.0 22.0,47.4 21.5,47.7 21.0,48.1 20.5,49.5 20.0,49.6 19.5,49.5 19.0,49.3 18.5,48.8 18.0,48.2 17.5,47.6 17.0,48.5 16.5,49.0 16.0,49.4 15.5,49.6 15.0,49.6 14.5,49.3 14.0,48.9 13.5,48.3 13.0,47.7 12.5,48.8 12.0,49.4 11.5,49.3 11.0,49.6 10.5,49.6 10.0,49.4 9.5,49.0 9.0,48.5 8.5,47.6 8.0,48.2 7.5,48.8 7.0,49.3 6.5,49.5 6.0,49.6 5.5,49.5 5.0,49.1 4.5,48.6 4.0,47.8 3.5,48.0 3.0,48.7 2.5,49.2 2.0,49.5 1.5,50.1 1.0,50.0 0.5,49.7 0.0,49.2" fill="#1c1c24"/></svg><div style="left:478px;top:149px;width:110px;height:54px;background:#93a7ff;"></div><div style="left:478px;top:165px;width:110px;height:1px;background:rgba(0,0,30,0.22);"></div><div style="left:491.75px;top:166px;width:1px;height:37px;background:rgba(0,0,30,0.12);"></div><div style="left:505.50px;top:166px;width:1px;height:37px;background:rgba(0,0,30,0.12);"></div><div style="left:519.25px;top:166px;width:1px;height:37px;background:rgba(0,0,30,0.12);"></div><div style="left:533.00px;top:166px;width:1px;height:37px;background:rgba(0,0,30,0.12);"></div><div style="left:546.75px;top:166px;width:1px;height:37px;background:rgba(0,0,30,0.12);"></div><div style="left:560.50px;top:166px;width:1px;height:37px;background:rgba(0,0,30,0.12);"></div><div style="left:574.25px;top:166px;width:1px;height:37px;background:rgba(0,0,30,0.12);"></div><div style="left:478px;top:149px;width:1.5px;height:54px;background:rgba(20,20,60,0.45);"></div><svg style="position:absolute;left:479px;top:149px;" width="109" height="54" viewBox="0 0 109 54"><polygon points="0.0,22.3 0.5,21.8 1.0,21.5 1.5,21.4 2.0,22.0 2.5,22.3 3.0,22.8 3.5,23.5 4.0,23.7 4.5,22.9 5.0,22.4 5.5,22.0 6.0,21.9 6.5,22.0 7.0,22.2 7.5,22.7 8.0,23.3 8.5,23.9 9.0,23.0 9.5,22.5 10.0,22.1 10.5,21.9 11.0,21.9 11.5,22.2 12.0,22.1 12.5,22.7 13.0,23.8 13.5,23.2 14.0,22.6 14.5,22.2 15.0,21.9 15.5,21.9 16.0,22.1 16.5,22.5 17.0,23.0 17.5,23.9 18.0,23.3 18.5,22.7 19.0,22.2 19.5,22.0 20.0,21.9 20.5,22.0 21.0,23.4 21.5,23.8 22.0,24.1 22.5,24.5 23.0,24.6 23.5,24.6 24.0,24.9 24.5,24.9 25.0,24.8 25.5,24.9 26.0,24.7 26.5,24.6 27.0,24.1 27.5,22.3 28.0,21.8 28.5,21.5 29.0,21.4 29.5,22.0 30.0,22.3 30.5,22.8 31.0,23.5 31.5,23.7 32.0,22.9 32.5,22.4 33.0,22.0 33.5,21.9 34.0,22.0 34.5,22.2 35.0,22.7 35.5,23.3 36.0,23.9 36.5,23.0 37.0,22.5 37.5,22.1 38.0,21.9 38.5,21.9 39.0,22.2 39.5,22.1 40.0,22.7 40.5,23.8 41.0,23.2 41.5,22.6 42.0,22.2 42.5,21.9 43.0,21.9 43.5,22.1 44.0,22.5 44.5,23.0 45.0,23.9 45.5,23.3 46.0,22.7 46.5,22.2 47.0,22.0 47.5,21.9 48.0,22.0 48.5,23.4 49.0,23.8 49.5,24.1 50.0,24.5 50.5,24.7 51.0,24.7 51.5,24.9 52.0,24.8 52.5,24.8 53.0,24.7 53.5,24.8 54.0,24.8 54.5,24.1 55.0,22.3 55.5,21.8 56.0,21.5 56.5,21.4 57.0,22.0 57.5,22.3 58.0,22.8 58.5,23.5 59.0,23.7 59.5,22.9 60.0,22.4 60.5,22.0 61.0,21.9 61.5,22.0 62.0,22.2 62.5,22.7 63.0,23.3 63.5,23.9 64.0,23.0 64.5,22.5 65.0,22.1 65.5,21.9 66.0,21.9 66.5,22.2 67.0,22.1 67.5,22.7 68.0,23.8 68.5,23.2 69.0,22.6 69.5,22.2 70.0,21.9 70.5,21.9 71.0,22.1 71.5,22.5 72.0,23.0 72.5,23.9 73.0,23.3 73.5,22.7 74.0,22.2 74.5,22.0 75.0,21.9 75.5,22.0 76.0,23.4 76.5,23.8 77.0,24.1 77.5,24.5 78.0,24.7 78.5,24.7 79.0,24.9 79.5,24.9 80.0,24.9 80.5,24.7 81.0,24.8 81.5,24.7 82.0,24.1 82.5,22.3 83.0,21.8 83.5,21.5 84.0,21.4 84.5,22.0 85.0,22.3 85.5,22.8 86.0,23.5 86.5,23.7 87.0,22.9 87.5,22.4 88.0,22.0 88.5,21.9 89.0,22.0 89.5,22.2 90.0,22.7 90.5,23.3 91.0,23.9 91.5,23.0 92.0,22.5 92.5,22.1 93.0,21.9 93.5,21.9 94.0,22.2 94.5,22.1 95.0,22.7 95.5,23.8 96.0,23.2 96.5,22.6 97.0,22.2 97.5,21.9 98.0,21.9 98.5,22.1 99.0,22.5 99.5,23.0 100.0,23.9 100.5,23.3 101.0,22.7 101.5,22.2 102.0,22.0 102.5,21.9 103.0,22.0 103.5,23.4 104.0,23.8 104.5,24.1 105.0,24.5 105.5,24.9 106.0,24.8 106.5,24.8 107.0,24.6 107.5,24.6 108.0,24.8 108.0,28.0 107.5,28.2 107.0,28.2 106.5,28.0 106.0,28.0 105.5,27.9 105.0,28.3 104.5,28.6 104.0,29.0 103.5,29.4 103.0,30.8 102.5,30.9 102.0,30.8 101.5,30.6 101.0,30.1 100.5,29.5 100.0,28.9 99.5,29.8 99.0,30.3 98.5,30.7 98.0,30.9 97.5,30.9 97.0,30.6 96.5,30.2 96.0,29.6 95.5,29.0 95.0,30.1 94.5,30.7 94.0,30.6 93.5,30.9 93.0,30.9 92.5,30.7 92.0,30.3 91.5,29.8 91.0,28.9 90.5,29.5 90.0,30.1 89.5,30.6 89.0,30.8 88.5,30.9 88.0,30.8 87.5,30.4 87.0,29.9 86.5,29.1 86.0,29.3 85.5,30.0 85.0,30.5 84.5,30.8 84.0,31.4 83.5,31.3 83.0,31.0 82.5,30.5 82.0,28.6 81.5,28.1 81.0,28.0 80.5,28.1 80.0,27.9 79.5,27.9 79.0,27.9 78.5,28.1 78.0,28.1 77.5,28.3 77.0,28.6 76.5,29.0 76.0,29.4 75.5,30.8 75.0,30.9 74.5,30.8 74.0,30.6 73.5,30.1 73.0,29.5 72.5,28.9 72.0,29.8 71.5,30.3 71.0,30.7 70.5,30.9 70.0,30.9 69.5,30.6 69.0,30.2 68.5,29.6 68.0,29.0 67.5,30.1 67.0,30.7 66.5,30.6 66.0,30.9 65.5,30.9 65.0,30.7 64.5,30.3 64.0,29.8 63.5,28.9 63.0,29.5 62.5,30.1 62.0,30.6 61.5,30.8 61.0,30.9 60.5,30.8 60.0,30.4 59.5,29.9 59.0,29.1 58.5,29.3 58.0,30.0 57.5,30.5 57.0,30.8 56.5,31.4 56.0,31.3 55.5,31.0 55.0,30.5 54.5,28.6 54.0,28.0 53.5,28.0 53.0,28.1 52.5,28.0 52.0,28.0 51.5,27.9 51.0,28.1 50.5,28.1 50.0,28.3 49.5,28.6 49.0,29.0 48.5,29.4 48.0,30.8 47.5,30.9 47.0,30.8 46.5,30.6 46.0,30.1 45.5,29.5 45.0,28.9 44.5,29.8 44.0,30.3 43.5,30.7 43.0,30.9 42.5,30.9 42.0,30.6 41.5,30.2 41.0,29.6 40.5,29.0 40.0,30.1 39.5,30.7 39.0,30.6 38.5,30.9 38.0,30.9 37.5,30.7 37.0,30.3 36.5,29.8 36.0,28.9 35.5,29.5 35.0,30.1 34.5,30.6 34.0,30.8 33.5,30.9 33.0,30.8 32.5,30.4 32.0,29.9 31.5,29.1 31.0,29.3 30.5,30.0 30.0,30.5 29.5,30.8 29.0,31.4 28.5,31.3 28.0,31.0 27.5,30.5 27.0,28.6 26.5,28.2 26.0,28.1 25.5,27.9 25.0,28.0 24.5,27.9 24.0,27.9 23.5,28.2 23.0,28.2 22.5,28.3 22.0,28.6 21.5,29.0 21.0,29.4 20.5,30.8 20.0,30.9 19.5,30.8 19.0,30.6 18.5,30.1 18.0,29.5 17.5,28.9 17.0,29.8 16.5,30.3 16.0,30.7 15.5,30.9 15.0,30.9 14.5,30.6 14.0,30.2 13.5,29.6 13.0,29.0 12.5,30.1 12.0,30.7 11.5,30.6 11.0,30.9 10.5,30.9 10.0,30.7 9.5,30.3 9.0,29.8 8.5,28.9 8.0,29.5 7.5,30.1 7.0,30.6 6.5,30.8 6.0,30.9 5.5,30.8 5.0,30.4 4.5,29.9 4.0,29.1 3.5,29.3 3.0,30.0 2.5,30.5 2.0,30.8 1.5,31.4 1.0,31.3 0.5,31.0 0.0,30.5" fill="#1c1c24"/><polygon points="0.0,41.0 0.5,40.5 1.0,40.2 1.5,40.1 2.0,40.7 2.5,41.0 3.0,41.5 3.5,42.2 4.0,42.4 4.5,41.6 5.0,41.1 5.5,40.7 6.0,40.6 6.5,40.7 7.0,40.9 7.5,41.4 8.0,42.0 8.5,42.6 9.0,41.7 9.5,41.2 10.0,40.8 10.5,40.6 11.0,40.6 11.5,40.9 12.0,40.8 12.5,41.4 13.0,42.5 13.5,41.9 14.0,41.3 14.5,40.9 15.0,40.6 15.5,40.6 16.0,40.8 16.5,41.2 17.0,41.7 17.5,42.6 18.0,42.0 18.5,41.4 19.0,40.9 19.5,40.7 20.0,40.6 20.5,40.7 21.0,42.1 21.5,42.5 22.0,42.9 22.5,43.2 23.0,43.3 23.5,43.3 24.0,43.6 24.5,43.6 25.0,43.5 25.5,43.6 26.0,43.4 26.5,43.3 27.0,42.9 27.5,41.0 28.0,40.5 28.5,40.2 29.0,40.1 29.5,40.7 30.0,41.0 30.5,41.5 31.0,42.2 31.5,42.4 32.0,41.6 32.5,41.1 33.0,40.7 33.5,40.6 34.0,40.7 34.5,40.9 35.0,41.4 35.5,42.0 36.0,42.6 36.5,41.7 37.0,41.2 37.5,40.8 38.0,40.6 38.5,40.6 39.0,40.9 39.5,40.8 40.0,41.4 40.5,42.5 41.0,41.9 41.5,41.3 42.0,40.9 42.5,40.6 43.0,40.6 43.5,40.8 44.0,41.2 44.5,41.7 45.0,42.6 45.5,42.0 46.0,41.4 46.5,40.9 47.0,40.7 47.5,40.6 48.0,40.7 48.5,42.1 49.0,42.5 49.5,42.9 50.0,43.2 50.5,43.4 51.0,43.4 51.5,43.6 52.0,43.5 52.5,43.5 53.0,43.4 53.5,43.5 54.0,43.5 54.5,42.9 55.0,41.0 55.5,40.5 56.0,40.2 56.5,40.1 57.0,40.7 57.5,41.0 58.0,41.5 58.5,42.2 59.0,42.4 59.5,41.6 60.0,41.1 60.5,40.7 61.0,40.6 61.5,40.7 62.0,40.9 62.5,41.4 63.0,42.0 63.5,42.6 64.0,41.7 64.5,41.2 65.0,40.8 65.5,40.6 66.0,40.6 66.5,40.9 67.0,40.8 67.5,41.4 68.0,42.5 68.5,41.9 69.0,41.3 69.5,40.9 70.0,40.6 70.5,40.6 71.0,40.8 71.5,41.2 72.0,41.7 72.5,42.6 73.0,42.0 73.5,41.4 74.0,40.9 74.5,40.7 75.0,40.6 75.5,40.7 76.0,42.1 76.5,42.5 77.0,42.9 77.5,43.2 78.0,43.4 78.5,43.4 79.0,43.6 79.5,43.6 80.0,43.6 80.5,43.4 81.0,43.5 81.5,43.4 82.0,42.9 82.5,41.0 83.0,40.5 83.5,40.2 84.0,40.1 84.5,40.7 85.0,41.0 85.5,41.5 86.0,42.2 86.5,42.4 87.0,41.6 87.5,41.1 88.0,40.7 88.5,40.6 89.0,40.7 89.5,40.9 90.0,41.4 90.5,42.0 91.0,42.6 91.5,41.7 92.0,41.2 92.5,40.8 93.0,40.6 93.5,40.6 94.0,40.9 94.5,40.8 95.0,41.4 95.5,42.5 96.0,41.9 96.5,41.3 97.0,40.9 97.5,40.6 98.0,40.6 98.5,40.8 99.0,41.2 99.5,41.7 100.0,42.6 100.5,42.0 101.0,41.4 101.5,40.9 102.0,40.7 102.5,40.6 103.0,40.7 103.5,42.1 104.0,42.5 104.5,42.9 105.0,43.2 105.5,43.6 106.0,43.5 106.5,43.5 107.0,43.3 107.5,43.3 108.0,43.5 108.0,46.7 107.5,46.9 107.0,46.9 106.5,46.7 106.0,46.7 105.5,46.6 105.0,47.0 104.5,47.4 104.0,47.7 103.5,48.1 103.0,49.5 102.5,49.6 102.0,49.5 101.5,49.3 101.0,48.8 100.5,48.2 100.0,47.6 99.5,48.5 99.0,49.0 98.5,49.4 98.0,49.6 97.5,49.6 97.0,49.3 96.5,48.9 96.0,48.3 95.5,47.7 95.0,48.8 94.5,49.4 94.0,49.3 93.5,49.6 93.0,49.6 92.5,49.4 92.0,49.0 91.5,48.5 91.0,47.6 90.5,48.2 90.0,48.8 89.5,49.3 89.0,49.5 88.5,49.6 88.0,49.5 87.5,49.1 87.0,48.6 86.5,47.8 86.0,48.0 85.5,48.7 85.0,49.2 84.5,49.5 84.0,50.1 83.5,50.0 83.0,49.7 82.5,49.2 82.0,47.4 81.5,46.8 81.0,46.7 80.5,46.8 80.0,46.6 79.5,46.6 79.0,46.6 78.5,46.8 78.0,46.8 77.5,47.0 77.0,47.4 76.5,47.7 76.0,48.1 75.5,49.5 75.0,49.6 74.5,49.5 74.0,49.3 73.5,48.8 73.0,48.2 72.5,47.6 72.0,48.5 71.5,49.0 71.0,49.4 70.5,49.6 70.0,49.6 69.5,49.3 69.0,48.9 68.5,48.3 68.0,47.7 67.5,48.8 67.0,49.4 66.5,49.3 66.0,49.6 65.5,49.6 65.0,49.4 64.5,49.0 64.0,48.5 63.5,47.6 63.0,48.2 62.5,48.8 62.0,49.3 61.5,49.5 61.0,49.6 60.5,49.5 60.0,49.1 59.5,48.6 59.0,47.8 58.5,48.0 58.0,48.7 57.5,49.2 57.0,49.5 56.5,50.1 56.0,50.0 55.5,49.7 55.0,49.2 54.5,47.4 54.0,46.7 53.5,46.7 53.0,46.8 52.5,46.7 52.0,46.7 51.5,46.6 51.0,46.8 50.5,46.8 50.0,47.0 49.5,47.4 49.0,47.7 48.5,48.1 48.0,49.5 47.5,49.6 47.0,49.5 46.5,49.3 46.0,48.8 45.5,48.2 45.0,47.6 44.5,48.5 44.0,49.0 43.5,49.4 43.0,49.6 42.5,49.6 42.0,49.3 41.5,48.9 41.0,48.3 40.5,47.7 40.0,48.8 39.5,49.4 39.0,49.3 38.5,49.6 38.0,49.6 37.5,49.4 37.0,49.0 36.5,48.5 36.0,47.6 35.5,48.2 35.0,48.8 34.5,49.3 34.0,49.5 33.5,49.6 33.0,49.5 32.5,49.1 32.0,48.6 31.5,47.8 31.0,48.0 30.5,48.7 30.0,49.2 29.5,49.5 29.0,50.1 28.5,50.0 28.0,49.7 27.5,49.2 27.0,47.4 26.5,46.9 26.0,46.8 25.5,46.6 25.0,46.7 24.5,46.6 24.0,46.6 23.5,46.9 23.0,46.9 22.5,47.0 22.0,47.4 21.5,47.7 21.0,48.1 20.5,49.5 20.0,49.6 19.5,49.5 19.0,49.3 18.5,48.8 18.0,48.2 17.5,47.6 17.0,48.5 16.5,49.0 16.0,49.4 15.5,49.6 15.0,49.6 14.5,49.3 14.0,48.9 13.5,48.3 13.0,47.7 12.5,48.8 12.0,49.4 11.5,49.3 11.0,49.6 10.5,49.6 10.0,49.4 9.5,49.0 9.0,48.5 8.5,47.6 8.0,48.2 7.5,48.8 7.0,49.3 6.5,49.5 6.0,49.6 5.5,49.5 5.0,49.1 4.5,48.6 4.0,47.8 3.5,48.0 3.0,48.7 2.5,49.2 2.0,49.5 1.5,50.1 1.0,50.0 0.5,49.7 0.0,49.2" fill="#1c1c24"/></svg><div style="left:588px;top:149px;width:110px;height:54px;background:#93a7ff;"></div><div style="left:588px;top:165px;width:110px;height:1px;background:rgba(0,0,30,0.22);"></div><div style="left:601.75px;top:166px;width:1px;height:37px;background:rgba(0,0,30,0.12);"></div><div style="left:615.50px;top:166px;width:1px;height:37px;background:rgba(0,0,30,0.12);"></div><div style="left:629.25px;top:166px;width:1px;height:37px;background:rgba(0,0,30,0.12);"></div><div style="left:643.00px;top:166px;width:1px;height:37px;background:rgba(0,0,30,0.12);"></div><div style="left:656.75px;top:166px;width:1px;height:37px;background:rgba(0,0,30,0.12);"></div><div style="left:670.50px;top:166px;width:1px;height:37px;background:rgba(0,0,30,0.12);"></div><div style="left:684.25px;top:166px;width:1px;height:37px;background:rgba(0,0,30,0.12);"></div><div style="left:588px;top:149px;width:1.5px;height:54px;background:rgba(20,20,60,0.45);"></div><svg style="position:absolute;left:589px;top:149px;" width="109" height="54" viewBox="0 0 109 54"><polygon points="0.0,22.3 0.5,21.8 1.0,21.5 1.5,21.4 2.0,22.0 2.5,22.3 3.0,22.8 3.5,23.5 4.0,23.7 4.5,22.9 5.0,22.4 5.5,22.0 6.0,21.9 6.5,22.0 7.0,22.2 7.5,22.7 8.0,23.3 8.5,23.9 9.0,23.0 9.5,22.5 10.0,22.1 10.5,21.9 11.0,21.9 11.5,22.2 12.0,22.1 12.5,22.7 13.0,23.8 13.5,23.2 14.0,22.6 14.5,22.2 15.0,21.9 15.5,21.9 16.0,22.1 16.5,22.5 17.0,23.0 17.5,23.9 18.0,23.3 18.5,22.7 19.0,22.2 19.5,22.0 20.0,21.9 20.5,22.0 21.0,23.4 21.5,23.8 22.0,24.1 22.5,24.5 23.0,24.7 23.5,24.6 24.0,24.8 24.5,24.8 25.0,24.6 25.5,24.8 26.0,24.9 26.5,24.8 27.0,24.1 27.5,22.3 28.0,21.8 28.5,21.5 29.0,21.4 29.5,22.0 30.0,22.3 30.5,22.8 31.0,23.5 31.5,23.7 32.0,22.9 32.5,22.4 33.0,22.0 33.5,21.9 34.0,22.0 34.5,22.2 35.0,22.7 35.5,23.3 36.0,23.9 36.5,23.0 37.0,22.5 37.5,22.1 38.0,21.9 38.5,21.9 39.0,22.2 39.5,22.1 40.0,22.7 40.5,23.8 41.0,23.2 41.5,22.6 42.0,22.2 42.5,21.9 43.0,21.9 43.5,22.1 44.0,22.5 44.5,23.0 45.0,23.9 45.5,23.3 46.0,22.7 46.5,22.2 47.0,22.0 47.5,21.9 48.0,22.0 48.5,23.4 49.0,23.8 49.5,24.1 50.0,24.5 50.5,24.9 51.0,24.6 51.5,24.6 52.0,24.8 52.5,24.8 53.0,24.7 53.5,24.9 54.0,24.6 54.5,24.1 55.0,22.3 55.5,21.8 56.0,21.5 56.5,21.4 57.0,22.0 57.5,22.3 58.0,22.8 58.5,23.5 59.0,23.7 59.5,22.9 60.0,22.4 60.5,22.0 61.0,21.9 61.5,22.0 62.0,22.2 62.5,22.7 63.0,23.3 63.5,23.9 64.0,23.0 64.5,22.5 65.0,22.1 65.5,21.9 66.0,21.9 66.5,22.2 67.0,22.1 67.5,22.7 68.0,23.8 68.5,23.2 69.0,22.6 69.5,22.2 70.0,21.9 70.5,21.9 71.0,22.1 71.5,22.5 72.0,23.0 72.5,23.9 73.0,23.3 73.5,22.7 74.0,22.2 74.5,22.0 75.0,21.9 75.5,22.0 76.0,23.4 76.5,23.8 77.0,24.1 77.5,24.5 78.0,24.8 78.5,24.6 79.0,24.9 79.5,24.9 80.0,24.8 80.5,24.8 81.0,24.9 81.5,24.9 82.0,24.1 82.5,22.3 83.0,21.8 83.5,21.5 84.0,21.4 84.5,22.0 85.0,22.3 85.5,22.8 86.0,23.5 86.5,23.7 87.0,22.9 87.5,22.4 88.0,22.0 88.5,21.9 89.0,22.0 89.5,22.2 90.0,22.7 90.5,23.3 91.0,23.9 91.5,23.0 92.0,22.5 92.5,22.1 93.0,21.9 93.5,21.9 94.0,22.2 94.5,22.1 95.0,22.7 95.5,23.8 96.0,23.2 96.5,22.6 97.0,22.2 97.5,21.9 98.0,21.9 98.5,22.1 99.0,22.5 99.5,23.0 100.0,23.9 100.5,23.3 101.0,22.7 101.5,22.2 102.0,22.0 102.5,21.9 103.0,22.0 103.5,23.4 104.0,23.8 104.5,24.1 105.0,24.5 105.5,24.7 106.0,24.8 106.5,24.8 107.0,24.8 107.5,24.7 108.0,24.7 108.0,28.1 107.5,28.1 107.0,28.0 106.5,28.0 106.0,28.0 105.5,28.1 105.0,28.3 104.5,28.6 104.0,29.0 103.5,29.4 103.0,30.8 102.5,30.9 102.0,30.8 101.5,30.6 101.0,30.1 100.5,29.5 100.0,28.9 99.5,29.8 99.0,30.3 98.5,30.7 98.0,30.9 97.5,30.9 97.0,30.6 96.5,30.2 96.0,29.6 95.5,29.0 95.0,30.1 94.5,30.7 94.0,30.6 93.5,30.9 93.0,30.9 92.5,30.7 92.0,30.3 91.5,29.8 91.0,28.9 90.5,29.5 90.0,30.1 89.5,30.6 89.0,30.8 88.5,30.9 88.0,30.8 87.5,30.4 87.0,29.9 86.5,29.1 86.0,29.3 85.5,30.0 85.0,30.5 84.5,30.8 84.0,31.4 83.5,31.3 83.0,31.0 82.5,30.5 82.0,28.6 81.5,27.9 81.0,27.9 80.5,28.0 80.0,28.0 79.5,27.9 79.0,27.9 78.5,28.2 78.0,28.0 77.5,28.3 77.0,28.6 76.5,29.0 76.0,29.4 75.5,30.8 75.0,30.9 74.5,30.8 74.0,30.6 73.5,30.1 73.0,29.5 72.5,28.9 72.0,29.8 71.5,30.3 71.0,30.7 70.5,30.9 70.0,30.9 69.5,30.6 69.0,30.2 68.5,29.6 68.0,29.0 67.5,30.1 67.0,30.7 66.5,30.6 66.0,30.9 65.5,30.9 65.0,30.7 64.5,30.3 64.0,29.8 63.5,28.9 63.0,29.5 62.5,30.1 62.0,30.6 61.5,30.8 61.0,30.9 60.5,30.8 60.0,30.4 59.5,29.9 59.0,29.1 58.5,29.3 58.0,30.0 57.5,30.5 57.0,30.8 56.5,31.4 56.0,31.3 55.5,31.0 55.0,30.5 54.5,28.6 54.0,28.2 53.5,27.9 53.0,28.1 52.5,28.0 52.0,28.0 51.5,28.2 51.0,28.2 50.5,27.9 50.0,28.3 49.5,28.6 49.0,29.0 48.5,29.4 48.0,30.8 47.5,30.9 47.0,30.8 46.5,30.6 46.0,30.1 45.5,29.5 45.0,28.9 44.5,29.8 44.0,30.3 43.5,30.7 43.0,30.9 42.5,30.9 42.0,30.6 41.5,30.2 41.0,29.6 40.5,29.0 40.0,30.1 39.5,30.7 39.0,30.6 38.5,30.9 38.0,30.9 37.5,30.7 37.0,30.3 36.5,29.8 36.0,28.9 35.5,29.5 35.0,30.1 34.5,30.6 34.0,30.8 33.5,30.9 33.0,30.8 32.5,30.4 32.0,29.9 31.5,29.1 31.0,29.3 30.5,30.0 30.0,30.5 29.5,30.8 29.0,31.4 28.5,31.3 28.0,31.0 27.5,30.5 27.0,28.6 26.5,28.0 26.0,27.9 25.5,28.0 25.0,28.2 24.5,28.0 24.0,28.0 23.5,28.2 23.0,28.1 22.5,28.3 22.0,28.6 21.5,29.0 21.0,29.4 20.5,30.8 20.0,30.9 19.5,30.8 19.0,30.6 18.5,30.1 18.0,29.5 17.5,28.9 17.0,29.8 16.5,30.3 16.0,30.7 15.5,30.9 15.0,30.9 14.5,30.6 14.0,30.2 13.5,29.6 13.0,29.0 12.5,30.1 12.0,30.7 11.5,30.6 11.0,30.9 10.5,30.9 10.0,30.7 9.5,30.3 9.0,29.8 8.5,28.9 8.0,29.5 7.5,30.1 7.0,30.6 6.5,30.8 6.0,30.9 5.5,30.8 5.0,30.4 4.5,29.9 4.0,29.1 3.5,29.3 3.0,30.0 2.5,30.5 2.0,30.8 1.5,31.4 1.0,31.3 0.5,31.0 0.0,30.5" fill="#1c1c24"/><polygon points="0.0,41.0 0.5,40.5 1.0,40.2 1.5,40.1 2.0,40.7 2.5,41.0 3.0,41.5 3.5,42.2 4.0,42.4 4.5,41.6 5.0,41.1 5.5,40.7 6.0,40.6 6.5,40.7 7.0,40.9 7.5,41.4 8.0,42.0 8.5,42.6 9.0,41.7 9.5,41.2 10.0,40.8 10.5,40.6 11.0,40.6 11.5,40.9 12.0,40.8 12.5,41.4 13.0,42.5 13.5,41.9 14.0,41.3 14.5,40.9 15.0,40.6 15.5,40.6 16.0,40.8 16.5,41.2 17.0,41.7 17.5,42.6 18.0,42.0 18.5,41.4 19.0,40.9 19.5,40.7 20.0,40.6 20.5,40.7 21.0,42.1 21.5,42.5 22.0,42.9 22.5,43.2 23.0,43.4 23.5,43.3 24.0,43.5 24.5,43.5 25.0,43.3 25.5,43.5 26.0,43.6 26.5,43.5 27.0,42.9 27.5,41.0 28.0,40.5 28.5,40.2 29.0,40.1 29.5,40.7 30.0,41.0 30.5,41.5 31.0,42.2 31.5,42.4 32.0,41.6 32.5,41.1 33.0,40.7 33.5,40.6 34.0,40.7 34.5,40.9 35.0,41.4 35.5,42.0 36.0,42.6 36.5,41.7 37.0,41.2 37.5,40.8 38.0,40.6 38.5,40.6 39.0,40.9 39.5,40.8 40.0,41.4 40.5,42.5 41.0,41.9 41.5,41.3 42.0,40.9 42.5,40.6 43.0,40.6 43.5,40.8 44.0,41.2 44.5,41.7 45.0,42.6 45.5,42.0 46.0,41.4 46.5,40.9 47.0,40.7 47.5,40.6 48.0,40.7 48.5,42.1 49.0,42.5 49.5,42.9 50.0,43.2 50.5,43.6 51.0,43.3 51.5,43.3 52.0,43.5 52.5,43.5 53.0,43.4 53.5,43.6 54.0,43.3 54.5,42.9 55.0,41.0 55.5,40.5 56.0,40.2 56.5,40.1 57.0,40.7 57.5,41.0 58.0,41.5 58.5,42.2 59.0,42.4 59.5,41.6 60.0,41.1 60.5,40.7 61.0,40.6 61.5,40.7 62.0,40.9 62.5,41.4 63.0,42.0 63.5,42.6 64.0,41.7 64.5,41.2 65.0,40.8 65.5,40.6 66.0,40.6 66.5,40.9 67.0,40.8 67.5,41.4 68.0,42.5 68.5,41.9 69.0,41.3 69.5,40.9 70.0,40.6 70.5,40.6 71.0,40.8 71.5,41.2 72.0,41.7 72.5,42.6 73.0,42.0 73.5,41.4 74.0,40.9 74.5,40.7 75.0,40.6 75.5,40.7 76.0,42.1 76.5,42.5 77.0,42.9 77.5,43.2 78.0,43.5 78.5,43.3 79.0,43.6 79.5,43.6 80.0,43.5 80.5,43.5 81.0,43.6 81.5,43.6 82.0,42.9 82.5,41.0 83.0,40.5 83.5,40.2 84.0,40.1 84.5,40.7 85.0,41.0 85.5,41.5 86.0,42.2 86.5,42.4 87.0,41.6 87.5,41.1 88.0,40.7 88.5,40.6 89.0,40.7 89.5,40.9 90.0,41.4 90.5,42.0 91.0,42.6 91.5,41.7 92.0,41.2 92.5,40.8 93.0,40.6 93.5,40.6 94.0,40.9 94.5,40.8 95.0,41.4 95.5,42.5 96.0,41.9 96.5,41.3 97.0,40.9 97.5,40.6 98.0,40.6 98.5,40.8 99.0,41.2 99.5,41.7 100.0,42.6 100.5,42.0 101.0,41.4 101.5,40.9 102.0,40.7 102.5,40.6 103.0,40.7 103.5,42.1 104.0,42.5 104.5,42.9 105.0,43.2 105.5,43.4 106.0,43.5 106.5,43.5 107.0,43.5 107.5,43.4 108.0,43.4 108.0,46.8 107.5,46.8 107.0,46.7 106.5,46.7 106.0,46.7 105.5,46.8 105.0,47.0 104.5,47.4 104.0,47.7 103.5,48.1 103.0,49.5 102.5,49.6 102.0,49.5 101.5,49.3 101.0,48.8 100.5,48.2 100.0,47.6 99.5,48.5 99.0,49.0 98.5,49.4 98.0,49.6 97.5,49.6 97.0,49.3 96.5,48.9 96.0,48.3 95.5,47.7 95.0,48.8 94.5,49.4 94.0,49.3 93.5,49.6 93.0,49.6 92.5,49.4 92.0,49.0 91.5,48.5 91.0,47.6 90.5,48.2 90.0,48.8 89.5,49.3 89.0,49.5 88.5,49.6 88.0,49.5 87.5,49.1 87.0,48.6 86.5,47.8 86.0,48.0 85.5,48.7 85.0,49.2 84.5,49.5 84.0,50.1 83.5,50.0 83.0,49.7 82.5,49.2 82.0,47.4 81.5,46.6 81.0,46.6 80.5,46.7 80.0,46.7 79.5,46.6 79.0,46.6 78.5,46.9 78.0,46.7 77.5,47.0 77.0,47.4 76.5,47.7 76.0,48.1 75.5,49.5 75.0,49.6 74.5,49.5 74.0,49.3 73.5,48.8 73.0,48.2 72.5,47.6 72.0,48.5 71.5,49.0 71.0,49.4 70.5,49.6 70.0,49.6 69.5,49.3 69.0,48.9 68.5,48.3 68.0,47.7 67.5,48.8 67.0,49.4 66.5,49.3 66.0,49.6 65.5,49.6 65.0,49.4 64.5,49.0 64.0,48.5 63.5,47.6 63.0,48.2 62.5,48.8 62.0,49.3 61.5,49.5 61.0,49.6 60.5,49.5 60.0,49.1 59.5,48.6 59.0,47.8 58.5,48.0 58.0,48.7 57.5,49.2 57.0,49.5 56.5,50.1 56.0,50.0 55.5,49.7 55.0,49.2 54.5,47.4 54.0,46.9 53.5,46.6 53.0,46.8 52.5,46.7 52.0,46.7 51.5,46.9 51.0,46.9 50.5,46.6 50.0,47.0 49.5,47.4 49.0,47.7 48.5,48.1 48.0,49.5 47.5,49.6 47.0,49.5 46.5,49.3 46.0,48.8 45.5,48.2 45.0,47.6 44.5,48.5 44.0,49.0 43.5,49.4 43.0,49.6 42.5,49.6 42.0,49.3 41.5,48.9 41.0,48.3 40.5,47.7 40.0,48.8 39.5,49.4 39.0,49.3 38.5,49.6 38.0,49.6 37.5,49.4 37.0,49.0 36.5,48.5 36.0,47.6 35.5,48.2 35.0,48.8 34.5,49.3 34.0,49.5 33.5,49.6 33.0,49.5 32.5,49.1 32.0,48.6 31.5,47.8 31.0,48.0 30.5,48.7 30.0,49.2 29.5,49.5 29.0,50.1 28.5,50.0 28.0,49.7 27.5,49.2 27.0,47.4 26.5,46.7 26.0,46.6 25.5,46.7 25.0,46.9 24.5,46.7 24.0,46.7 23.5,46.9 23.0,46.8 22.5,47.0 22.0,47.4 21.5,47.7 21.0,48.1 20.5,49.5 20.0,49.6 19.5,49.5 19.0,49.3 18.5,48.8 18.0,48.2 17.5,47.6 17.0,48.5 16.5,49.0 16.0,49.4 15.5,49.6 15.0,49.6 14.5,49.3 14.0,48.9 13.5,48.3 13.0,47.7 12.5,48.8 12.0,49.4 11.5,49.3 11.0,49.6 10.5,49.6 10.0,49.4 9.5,49.0 9.0,48.5 8.5,47.6 8.0,48.2 7.5,48.8 7.0,49.3 6.5,49.5 6.0,49.6 5.5,49.5 5.0,49.1 4.5,48.6 4.0,47.8 3.5,48.0 3.0,48.7 2.5,49.2 2.0,49.5 1.5,50.1 1.0,50.0 0.5,49.7 0.0,49.2" fill="#1c1c24"/></svg><div style="left:698px;top:149px;width:110px;height:54px;background:#93a7ff;"></div><div style="left:698px;top:165px;width:110px;height:1px;background:rgba(0,0,30,0.22);"></div><div style="left:711.75px;top:166px;width:1px;height:37px;background:rgba(0,0,30,0.12);"></div><div style="left:725.50px;top:166px;width:1px;height:37px;background:rgba(0,0,30,0.12);"></div><div style="left:739.25px;top:166px;width:1px;height:37px;background:rgba(0,0,30,0.12);"></div><div style="left:753.00px;top:166px;width:1px;height:37px;background:rgba(0,0,30,0.12);"></div><div style="left:766.75px;top:166px;width:1px;height:37px;background:rgba(0,0,30,0.12);"></div><div style="left:780.50px;top:166px;width:1px;height:37px;background:rgba(0,0,30,0.12);"></div><div style="left:794.25px;top:166px;width:1px;height:37px;background:rgba(0,0,30,0.12);"></div><div style="left:698px;top:149px;width:1.5px;height:54px;background:rgba(20,20,60,0.45);"></div><svg style="position:absolute;left:699px;top:149px;" width="109" height="54" viewBox="0 0 109 54"><polygon points="0.0,22.3 0.5,21.8 1.0,21.5 1.5,21.4 2.0,22.0 2.5,22.3 3.0,22.8 3.5,23.5 4.0,23.7 4.5,22.9 5.0,22.4 5.5,22.0 6.0,21.9 6.5,22.0 7.0,22.2 7.5,22.7 8.0,23.3 8.5,23.9 9.0,23.0 9.5,22.5 10.0,22.1 10.5,21.9 11.0,21.9 11.5,22.2 12.0,22.1 12.5,22.7 13.0,23.8 13.5,23.2 14.0,22.6 14.5,22.2 15.0,21.9 15.5,21.9 16.0,22.1 16.5,22.5 17.0,23.0 17.5,23.9 18.0,23.3 18.5,22.7 19.0,22.2 19.5,22.0 20.0,21.9 20.5,22.0 21.0,23.4 21.5,23.8 22.0,24.1 22.5,24.5 23.0,24.6 23.5,24.6 24.0,24.6 24.5,24.6 25.0,24.8 25.5,24.7 26.0,24.8 26.5,24.8 27.0,24.1 27.5,22.3 28.0,21.8 28.5,21.5 29.0,21.4 29.5,22.0 30.0,22.3 30.5,22.8 31.0,23.5 31.5,23.7 32.0,22.9 32.5,22.4 33.0,22.0 33.5,21.9 34.0,22.0 34.5,22.2 35.0,22.7 35.5,23.3 36.0,23.9 36.5,23.0 37.0,22.5 37.5,22.1 38.0,21.9 38.5,21.9 39.0,22.2 39.5,22.1 40.0,22.7 40.5,23.8 41.0,23.2 41.5,22.6 42.0,22.2 42.5,21.9 43.0,21.9 43.5,22.1 44.0,22.5 44.5,23.0 45.0,23.9 45.5,23.3 46.0,22.7 46.5,22.2 47.0,22.0 47.5,21.9 48.0,22.0 48.5,23.4 49.0,23.8 49.5,24.1 50.0,24.5 50.5,24.7 51.0,24.8 51.5,24.7 52.0,24.8 52.5,24.7 53.0,24.8 53.5,24.8 54.0,24.7 54.5,24.1 55.0,22.3 55.5,21.8 56.0,21.5 56.5,21.4 57.0,22.0 57.5,22.3 58.0,22.8 58.5,23.5 59.0,23.7 59.5,22.9 60.0,22.4 60.5,22.0 61.0,21.9 61.5,22.0 62.0,22.2 62.5,22.7 63.0,23.3 63.5,23.9 64.0,23.0 64.5,22.5 65.0,22.1 65.5,21.9 66.0,21.9 66.5,22.2 67.0,22.1 67.5,22.7 68.0,23.8 68.5,23.2 69.0,22.6 69.5,22.2 70.0,21.9 70.5,21.9 71.0,22.1 71.5,22.5 72.0,23.0 72.5,23.9 73.0,23.3 73.5,22.7 74.0,22.2 74.5,22.0 75.0,21.9 75.5,22.0 76.0,23.4 76.5,23.8 77.0,24.1 77.5,24.5 78.0,24.8 78.5,24.8 79.0,24.7 79.5,24.9 80.0,24.8 80.5,24.8 81.0,24.9 81.5,24.8 82.0,24.1 82.5,22.3 83.0,21.8 83.5,21.5 84.0,21.4 84.5,22.0 85.0,22.3 85.5,22.8 86.0,23.5 86.5,23.7 87.0,22.9 87.5,22.4 88.0,22.0 88.5,21.9 89.0,22.0 89.5,22.2 90.0,22.7 90.5,23.3 91.0,23.9 91.5,23.0 92.0,22.5 92.5,22.1 93.0,21.9 93.5,21.9 94.0,22.2 94.5,22.1 95.0,22.7 95.5,23.8 96.0,23.2 96.5,22.6 97.0,22.2 97.5,21.9 98.0,21.9 98.5,22.1 99.0,22.5 99.5,23.0 100.0,23.9 100.5,23.3 101.0,22.7 101.5,22.2 102.0,22.0 102.5,21.9 103.0,22.0 103.5,23.4 104.0,23.8 104.5,24.1 105.0,24.5 105.5,24.8 106.0,24.8 106.5,24.7 107.0,24.7 107.5,24.8 108.0,24.7 108.0,28.1 107.5,28.0 107.0,28.1 106.5,28.1 106.0,28.0 105.5,28.0 105.0,28.3 104.5,28.6 104.0,29.0 103.5,29.4 103.0,30.8 102.5,30.9 102.0,30.8 101.5,30.6 101.0,30.1 100.5,29.5 100.0,28.9 99.5,29.8 99.0,30.3 98.5,30.7 98.0,30.9 97.5,30.9 97.0,30.6 96.5,30.2 96.0,29.6 95.5,29.0 95.0,30.1 94.5,30.7 94.0,30.6 93.5,30.9 93.0,30.9 92.5,30.7 92.0,30.3 91.5,29.8 91.0,28.9 90.5,29.5 90.0,30.1 89.5,30.6 89.0,30.8 88.5,30.9 88.0,30.8 87.5,30.4 87.0,29.9 86.5,29.1 86.0,29.3 85.5,30.0 85.0,30.5 84.5,30.8 84.0,31.4 83.5,31.3 83.0,31.0 82.5,30.5 82.0,28.6 81.5,28.0 81.0,27.9 80.5,28.0 80.0,28.0 79.5,27.9 79.0,28.1 78.5,28.0 78.0,28.0 77.5,28.3 77.0,28.6 76.5,29.0 76.0,29.4 75.5,30.8 75.0,30.9 74.5,30.8 74.0,30.6 73.5,30.1 73.0,29.5 72.5,28.9 72.0,29.8 71.5,30.3 71.0,30.7 70.5,30.9 70.0,30.9 69.5,30.6 69.0,30.2 68.5,29.6 68.0,29.0 67.5,30.1 67.0,30.7 66.5,30.6 66.0,30.9 65.5,30.9 65.0,30.7 64.5,30.3 64.0,29.8 63.5,28.9 63.0,29.5 62.5,30.1 62.0,30.6 61.5,30.8 61.0,30.9 60.5,30.8 60.0,30.4 59.5,29.9 59.0,29.1 58.5,29.3 58.0,30.0 57.5,30.5 57.0,30.8 56.5,31.4 56.0,31.3 55.5,31.0 55.0,30.5 54.5,28.6 54.0,28.1 53.5,28.0 53.0,28.0 52.5,28.1 52.0,28.0 51.5,28.1 51.0,28.0 50.5,28.1 50.0,28.3 49.5,28.6 49.0,29.0 48.5,29.4 48.0,30.8 47.5,30.9 47.0,30.8 46.5,30.6 46.0,30.1 45.5,29.5 45.0,28.9 44.5,29.8 44.0,30.3 43.5,30.7 43.0,30.9 42.5,30.9 42.0,30.6 41.5,30.2 41.0,29.6 40.5,29.0 40.0,30.1 39.5,30.7 39.0,30.6 38.5,30.9 38.0,30.9 37.5,30.7 37.0,30.3 36.5,29.8 36.0,28.9 35.5,29.5 35.0,30.1 34.5,30.6 34.0,30.8 33.5,30.9 33.0,30.8 32.5,30.4 32.0,29.9 31.5,29.1 31.0,29.3 30.5,30.0 30.0,30.5 29.5,30.8 29.0,31.4 28.5,31.3 28.0,31.0 27.5,30.5 27.0,28.6 26.5,28.0 26.0,28.0 25.5,28.1 25.0,28.0 24.5,28.2 24.0,28.2 23.5,28.2 23.0,28.2 22.5,28.3 22.0,28.6 21.5,29.0 21.0,29.4 20.5,30.8 20.0,30.9 19.5,30.8 19.0,30.6 18.5,30.1 18.0,29.5 17.5,28.9 17.0,29.8 16.5,30.3 16.0,30.7 15.5,30.9 15.0,30.9 14.5,30.6 14.0,30.2 13.5,29.6 13.0,29.0 12.5,30.1 12.0,30.7 11.5,30.6 11.0,30.9 10.5,30.9 10.0,30.7 9.5,30.3 9.0,29.8 8.5,28.9 8.0,29.5 7.5,30.1 7.0,30.6 6.5,30.8 6.0,30.9 5.5,30.8 5.0,30.4 4.5,29.9 4.0,29.1 3.5,29.3 3.0,30.0 2.5,30.5 2.0,30.8 1.5,31.4 1.0,31.3 0.5,31.0 0.0,30.5" fill="#1c1c24"/><polygon points="0.0,41.0 0.5,40.5 1.0,40.2 1.5,40.1 2.0,40.7 2.5,41.0 3.0,41.5 3.5,42.2 4.0,42.4 4.5,41.6 5.0,41.1 5.5,40.7 6.0,40.6 6.5,40.7 7.0,40.9 7.5,41.4 8.0,42.0 8.5,42.6 9.0,41.7 9.5,41.2 10.0,40.8 10.5,40.6 11.0,40.6 11.5,40.9 12.0,40.8 12.5,41.4 13.0,42.5 13.5,41.9 14.0,41.3 14.5,40.9 15.0,40.6 15.5,40.6 16.0,40.8 16.5,41.2 17.0,41.7 17.5,42.6 18.0,42.0 18.5,41.4 19.0,40.9 19.5,40.7 20.0,40.6 20.5,40.7 21.0,42.1 21.5,42.5 22.0,42.9 22.5,43.2 23.0,43.3 23.5,43.3 24.0,43.3 24.5,43.3 25.0,43.5 25.5,43.4 26.0,43.5 26.5,43.5 27.0,42.9 27.5,41.0 28.0,40.5 28.5,40.2 29.0,40.1 29.5,40.7 30.0,41.0 30.5,41.5 31.0,42.2 31.5,42.4 32.0,41.6 32.5,41.1 33.0,40.7 33.5,40.6 34.0,40.7 34.5,40.9 35.0,41.4 35.5,42.0 36.0,42.6 36.5,41.7 37.0,41.2 37.5,40.8 38.0,40.6 38.5,40.6 39.0,40.9 39.5,40.8 40.0,41.4 40.5,42.5 41.0,41.9 41.5,41.3 42.0,40.9 42.5,40.6 43.0,40.6 43.5,40.8 44.0,41.2 44.5,41.7 45.0,42.6 45.5,42.0 46.0,41.4 46.5,40.9 47.0,40.7 47.5,40.6 48.0,40.7 48.5,42.1 49.0,42.5 49.5,42.9 50.0,43.2 50.5,43.4 51.0,43.5 51.5,43.4 52.0,43.5 52.5,43.4 53.0,43.5 53.5,43.5 54.0,43.4 54.5,42.9 55.0,41.0 55.5,40.5 56.0,40.2 56.5,40.1 57.0,40.7 57.5,41.0 58.0,41.5 58.5,42.2 59.0,42.4 59.5,41.6 60.0,41.1 60.5,40.7 61.0,40.6 61.5,40.7 62.0,40.9 62.5,41.4 63.0,42.0 63.5,42.6 64.0,41.7 64.5,41.2 65.0,40.8 65.5,40.6 66.0,40.6 66.5,40.9 67.0,40.8 67.5,41.4 68.0,42.5 68.5,41.9 69.0,41.3 69.5,40.9 70.0,40.6 70.5,40.6 71.0,40.8 71.5,41.2 72.0,41.7 72.5,42.6 73.0,42.0 73.5,41.4 74.0,40.9 74.5,40.7 75.0,40.6 75.5,40.7 76.0,42.1 76.5,42.5 77.0,42.9 77.5,43.2 78.0,43.5 78.5,43.5 79.0,43.4 79.5,43.6 80.0,43.5 80.5,43.5 81.0,43.6 81.5,43.5 82.0,42.9 82.5,41.0 83.0,40.5 83.5,40.2 84.0,40.1 84.5,40.7 85.0,41.0 85.5,41.5 86.0,42.2 86.5,42.4 87.0,41.6 87.5,41.1 88.0,40.7 88.5,40.6 89.0,40.7 89.5,40.9 90.0,41.4 90.5,42.0 91.0,42.6 91.5,41.7 92.0,41.2 92.5,40.8 93.0,40.6 93.5,40.6 94.0,40.9 94.5,40.8 95.0,41.4 95.5,42.5 96.0,41.9 96.5,41.3 97.0,40.9 97.5,40.6 98.0,40.6 98.5,40.8 99.0,41.2 99.5,41.7 100.0,42.6 100.5,42.0 101.0,41.4 101.5,40.9 102.0,40.7 102.5,40.6 103.0,40.7 103.5,42.1 104.0,42.5 104.5,42.9 105.0,43.2 105.5,43.5 106.0,43.5 106.5,43.4 107.0,43.4 107.5,43.5 108.0,43.4 108.0,46.8 107.5,46.7 107.0,46.8 106.5,46.8 106.0,46.7 105.5,46.7 105.0,47.0 104.5,47.4 104.0,47.7 103.5,48.1 103.0,49.5 102.5,49.6 102.0,49.5 101.5,49.3 101.0,48.8 100.5,48.2 100.0,47.6 99.5,48.5 99.0,49.0 98.5,49.4 98.0,49.6 97.5,49.6 97.0,49.3 96.5,48.9 96.0,48.3 95.5,47.7 95.0,48.8 94.5,49.4 94.0,49.3 93.5,49.6 93.0,49.6 92.5,49.4 92.0,49.0 91.5,48.5 91.0,47.6 90.5,48.2 90.0,48.8 89.5,49.3 89.0,49.5 88.5,49.6 88.0,49.5 87.5,49.1 87.0,48.6 86.5,47.8 86.0,48.0 85.5,48.7 85.0,49.2 84.5,49.5 84.0,50.1 83.5,50.0 83.0,49.7 82.5,49.2 82.0,47.4 81.5,46.7 81.0,46.6 80.5,46.7 80.0,46.7 79.5,46.6 79.0,46.8 78.5,46.7 78.0,46.7 77.5,47.0 77.0,47.4 76.5,47.7 76.0,48.1 75.5,49.5 75.0,49.6 74.5,49.5 74.0,49.3 73.5,48.8 73.0,48.2 72.5,47.6 72.0,48.5 71.5,49.0 71.0,49.4 70.5,49.6 70.0,49.6 69.5,49.3 69.0,48.9 68.5,48.3 68.0,47.7 67.5,48.8 67.0,49.4 66.5,49.3 66.0,49.6 65.5,49.6 65.0,49.4 64.5,49.0 64.0,48.5 63.5,47.6 63.0,48.2 62.5,48.8 62.0,49.3 61.5,49.5 61.0,49.6 60.5,49.5 60.0,49.1 59.5,48.6 59.0,47.8 58.5,48.0 58.0,48.7 57.5,49.2 57.0,49.5 56.5,50.1 56.0,50.0 55.5,49.7 55.0,49.2 54.5,47.4 54.0,46.8 53.5,46.7 53.0,46.7 52.5,46.8 52.0,46.7 51.5,46.8 51.0,46.7 50.5,46.8 50.0,47.0 49.5,47.4 49.0,47.7 48.5,48.1 48.0,49.5 47.5,49.6 47.0,49.5 46.5,49.3 46.0,48.8 45.5,48.2 45.0,47.6 44.5,48.5 44.0,49.0 43.5,49.4 43.0,49.6 42.5,49.6 42.0,49.3 41.5,48.9 41.0,48.3 40.5,47.7 40.0,48.8 39.5,49.4 39.0,49.3 38.5,49.6 38.0,49.6 37.5,49.4 37.0,49.0 36.5,48.5 36.0,47.6 35.5,48.2 35.0,48.8 34.5,49.3 34.0,49.5 33.5,49.6 33.0,49.5 32.5,49.1 32.0,48.6 31.5,47.8 31.0,48.0 30.5,48.7 30.0,49.2 29.5,49.5 29.0,50.1 28.5,50.0 28.0,49.7 27.5,49.2 27.0,47.4 26.5,46.7 26.0,46.7 25.5,46.8 25.0,46.7 24.5,46.9 24.0,46.9 23.5,46.9 23.0,46.9 22.5,47.0 22.0,47.4 21.5,47.7 21.0,48.1 20.5,49.5 20.0,49.6 19.5,49.5 19.0,49.3 18.5,48.8 18.0,48.2 17.5,47.6 17.0,48.5 16.5,49.0 16.0,49.4 15.5,49.6 15.0,49.6 14.5,49.3 14.0,48.9 13.5,48.3 13.0,47.7 12.5,48.8 12.0,49.4 11.5,49.3 11.0,49.6 10.5,49.6 10.0,49.4 9.5,49.0 9.0,48.5 8.5,47.6 8.0,48.2 7.5,48.8 7.0,49.3 6.5,49.5 6.0,49.6 5.5,49.5 5.0,49.1 4.5,48.6 4.0,47.8 3.5,48.0 3.0,48.7 2.5,49.2 2.0,49.5 1.5,50.1 1.0,50.0 0.5,49.7 0.0,49.2" fill="#1c1c24"/></svg><div style="left:808px;top:149px;width:110px;height:54px;background:#93a7ff;"></div><div style="left:808px;top:165px;width:110px;height:1px;background:rgba(0,0,30,0.22);"></div><div style="left:821.75px;top:166px;width:1px;height:37px;background:rgba(0,0,30,0.12);"></div><div style="left:835.50px;top:166px;width:1px;height:37px;background:rgba(0,0,30,0.12);"></div><div style="left:849.25px;top:166px;width:1px;height:37px;background:rgba(0,0,30,0.12);"></div><div style="left:863.00px;top:166px;width:1px;height:37px;background:rgba(0,0,30,0.12);"></div><div style="left:876.75px;top:166px;width:1px;height:37px;background:rgba(0,0,30,0.12);"></div><div style="left:890.50px;top:166px;width:1px;height:37px;background:rgba(0,0,30,0.12);"></div><div style="left:904.25px;top:166px;width:1px;height:37px;background:rgba(0,0,30,0.12);"></div><div style="left:808px;top:149px;width:1.5px;height:54px;background:rgba(20,20,60,0.45);"></div><svg style="position:absolute;left:809px;top:149px;" width="109" height="54" viewBox="0 0 109 54"><polygon points="0.0,22.3 0.5,21.8 1.0,21.5 1.5,21.4 2.0,22.0 2.5,22.3 3.0,22.8 3.5,23.5 4.0,23.7 4.5,22.9 5.0,22.4 5.5,22.0 6.0,21.9 6.5,22.0 7.0,22.2 7.5,22.7 8.0,23.3 8.5,23.9 9.0,23.0 9.5,22.5 10.0,22.1 10.5,21.9 11.0,21.9 11.5,22.2 12.0,22.1 12.5,22.7 13.0,23.8 13.5,23.2 14.0,22.6 14.5,22.2 15.0,21.9 15.5,21.9 16.0,22.1 16.5,22.5 17.0,23.0 17.5,23.9 18.0,23.3 18.5,22.7 19.0,22.2 19.5,22.0 20.0,21.9 20.5,22.0 21.0,23.4 21.5,23.8 22.0,24.1 22.5,24.5 23.0,24.8 23.5,24.7 24.0,24.7 24.5,24.8 25.0,24.6 25.5,24.8 26.0,24.8 26.5,24.8 27.0,24.1 27.5,22.3 28.0,21.8 28.5,21.5 29.0,21.4 29.5,22.0 30.0,22.3 30.5,22.8 31.0,23.5 31.5,23.7 32.0,22.9 32.5,22.4 33.0,22.0 33.5,21.9 34.0,22.0 34.5,22.2 35.0,22.7 35.5,23.3 36.0,23.9 36.5,23.0 37.0,22.5 37.5,22.1 38.0,21.9 38.5,21.9 39.0,22.2 39.5,22.1 40.0,22.7 40.5,23.8 41.0,23.2 41.5,22.6 42.0,22.2 42.5,21.9 43.0,21.9 43.5,22.1 44.0,22.5 44.5,23.0 45.0,23.9 45.5,23.3 46.0,22.7 46.5,22.2 47.0,22.0 47.5,21.9 48.0,22.0 48.5,23.4 49.0,23.8 49.5,24.1 50.0,24.5 50.5,24.7 51.0,24.7 51.5,24.9 52.0,24.9 52.5,24.7 53.0,24.9 53.5,24.9 54.0,24.6 54.5,24.1 55.0,22.3 55.5,21.8 56.0,21.5 56.5,21.4 57.0,22.0 57.5,22.3 58.0,22.8 58.5,23.5 59.0,23.7 59.5,22.9 60.0,22.4 60.5,22.0 61.0,21.9 61.5,22.0 62.0,22.2 62.5,22.7 63.0,23.3 63.5,23.9 64.0,23.0 64.5,22.5 65.0,22.1 65.5,21.9 66.0,21.9 66.5,22.2 67.0,22.1 67.5,22.7 68.0,23.8 68.5,23.2 69.0,22.6 69.5,22.2 70.0,21.9 70.5,21.9 71.0,22.1 71.5,22.5 72.0,23.0 72.5,23.9 73.0,23.3 73.5,22.7 74.0,22.2 74.5,22.0 75.0,21.9 75.5,22.0 76.0,23.4 76.5,23.8 77.0,24.1 77.5,24.5 78.0,24.8 78.5,24.7 79.0,24.9 79.5,24.7 80.0,24.6 80.5,24.9 81.0,24.7 81.5,24.7 82.0,24.1 82.5,22.3 83.0,21.8 83.5,21.5 84.0,21.4 84.5,22.0 85.0,22.3 85.5,22.8 86.0,23.5 86.5,23.7 87.0,22.9 87.5,22.4 88.0,22.0 88.5,21.9 89.0,22.0 89.5,22.2 90.0,22.7 90.5,23.3 91.0,23.9 91.5,23.0 92.0,22.5 92.5,22.1 93.0,21.9 93.5,21.9 94.0,22.2 94.5,22.1 95.0,22.7 95.5,23.8 96.0,23.2 96.5,22.6 97.0,22.2 97.5,21.9 98.0,21.9 98.5,22.1 99.0,22.5 99.5,23.0 100.0,23.9 100.5,23.3 101.0,22.7 101.5,22.2 102.0,22.0 102.5,21.9 103.0,22.0 103.5,23.4 104.0,23.8 104.5,24.1 105.0,24.5 105.5,24.7 106.0,24.7 106.5,24.6 107.0,24.7 107.5,24.7 108.0,24.8 108.0,28.0 107.5,28.1 107.0,28.1 106.5,28.2 106.0,28.1 105.5,28.1 105.0,28.3 104.5,28.6 104.0,29.0 103.5,29.4 103.0,30.8 102.5,30.9 102.0,30.8 101.5,30.6 101.0,30.1 100.5,29.5 100.0,28.9 99.5,29.8 99.0,30.3 98.5,30.7 98.0,30.9 97.5,30.9 97.0,30.6 96.5,30.2 96.0,29.6 95.5,29.0 95.0,30.1 94.5,30.7 94.0,30.6 93.5,30.9 93.0,30.9 92.5,30.7 92.0,30.3 91.5,29.8 91.0,28.9 90.5,29.5 90.0,30.1 89.5,30.6 89.0,30.8 88.5,30.9 88.0,30.8 87.5,30.4 87.0,29.9 86.5,29.1 86.0,29.3 85.5,30.0 85.0,30.5 84.5,30.8 84.0,31.4 83.5,31.3 83.0,31.0 82.5,30.5 82.0,28.6 81.5,28.1 81.0,28.1 80.5,27.9 80.0,28.2 79.5,28.1 79.0,27.9 78.5,28.1 78.0,28.0 77.5,28.3 77.0,28.6 76.5,29.0 76.0,29.4 75.5,30.8 75.0,30.9 74.5,30.8 74.0,30.6 73.5,30.1 73.0,29.5 72.5,28.9 72.0,29.8 71.5,30.3 71.0,30.7 70.5,30.9 70.0,30.9 69.5,30.6 69.0,30.2 68.5,29.6 68.0,29.0 67.5,30.1 67.0,30.7 66.5,30.6 66.0,30.9 65.5,30.9 65.0,30.7 64.5,30.3 64.0,29.8 63.5,28.9 63.0,29.5 62.5,30.1 62.0,30.6 61.5,30.8 61.0,30.9 60.5,30.8 60.0,30.4 59.5,29.9 59.0,29.1 58.5,29.3 58.0,30.0 57.5,30.5 57.0,30.8 56.5,31.4 56.0,31.3 55.5,31.0 55.0,30.5 54.5,28.6 54.0,28.2 53.5,27.9 53.0,27.9 52.5,28.1 52.0,27.9 51.5,27.9 51.0,28.1 50.5,28.1 50.0,28.3 49.5,28.6 49.0,29.0 48.5,29.4 48.0,30.8 47.5,30.9 47.0,30.8 46.5,30.6 46.0,30.1 45.5,29.5 45.0,28.9 44.5,29.8 44.0,30.3 43.5,30.7 43.0,30.9 42.5,30.9 42.0,30.6 41.5,30.2 41.0,29.6 40.5,29.0 40.0,30.1 39.5,30.7 39.0,30.6 38.5,30.9 38.0,30.9 37.5,30.7 37.0,30.3 36.5,29.8 36.0,28.9 35.5,29.5 35.0,30.1 34.5,30.6 34.0,30.8 33.5,30.9 33.0,30.8 32.5,30.4 32.0,29.9 31.5,29.1 31.0,29.3 30.5,30.0 30.0,30.5 29.5,30.8 29.0,31.4 28.5,31.3 28.0,31.0 27.5,30.5 27.0,28.6 26.5,28.0 26.0,28.0 25.5,28.0 25.0,28.2 24.5,28.0 24.0,28.1 23.5,28.1 23.0,28.0 22.5,28.3 22.0,28.6 21.5,29.0 21.0,29.4 20.5,30.8 20.0,30.9 19.5,30.8 19.0,30.6 18.5,30.1 18.0,29.5 17.5,28.9 17.0,29.8 16.5,30.3 16.0,30.7 15.5,30.9 15.0,30.9 14.5,30.6 14.0,30.2 13.5,29.6 13.0,29.0 12.5,30.1 12.0,30.7 11.5,30.6 11.0,30.9 10.5,30.9 10.0,30.7 9.5,30.3 9.0,29.8 8.5,28.9 8.0,29.5 7.5,30.1 7.0,30.6 6.5,30.8 6.0,30.9 5.5,30.8 5.0,30.4 4.5,29.9 4.0,29.1 3.5,29.3 3.0,30.0 2.5,30.5 2.0,30.8 1.5,31.4 1.0,31.3 0.5,31.0 0.0,30.5" fill="#1c1c24"/><polygon points="0.0,41.0 0.5,40.5 1.0,40.2 1.5,40.1 2.0,40.7 2.5,41.0 3.0,41.5 3.5,42.2 4.0,42.4 4.5,41.6 5.0,41.1 5.5,40.7 6.0,40.6 6.5,40.7 7.0,40.9 7.5,41.4 8.0,42.0 8.5,42.6 9.0,41.7 9.5,41.2 10.0,40.8 10.5,40.6 11.0,40.6 11.5,40.9 12.0,40.8 12.5,41.4 13.0,42.5 13.5,41.9 14.0,41.3 14.5,40.9 15.0,40.6 15.5,40.6 16.0,40.8 16.5,41.2 17.0,41.7 17.5,42.6 18.0,42.0 18.5,41.4 19.0,40.9 19.5,40.7 20.0,40.6 20.5,40.7 21.0,42.1 21.5,42.5 22.0,42.9 22.5,43.2 23.0,43.5 23.5,43.4 24.0,43.4 24.5,43.5 25.0,43.3 25.5,43.5 26.0,43.5 26.5,43.5 27.0,42.9 27.5,41.0 28.0,40.5 28.5,40.2 29.0,40.1 29.5,40.7 30.0,41.0 30.5,41.5 31.0,42.2 31.5,42.4 32.0,41.6 32.5,41.1 33.0,40.7 33.5,40.6 34.0,40.7 34.5,40.9 35.0,41.4 35.5,42.0 36.0,42.6 36.5,41.7 37.0,41.2 37.5,40.8 38.0,40.6 38.5,40.6 39.0,40.9 39.5,40.8 40.0,41.4 40.5,42.5 41.0,41.9 41.5,41.3 42.0,40.9 42.5,40.6 43.0,40.6 43.5,40.8 44.0,41.2 44.5,41.7 45.0,42.6 45.5,42.0 46.0,41.4 46.5,40.9 47.0,40.7 47.5,40.6 48.0,40.7 48.5,42.1 49.0,42.5 49.5,42.9 50.0,43.2 50.5,43.4 51.0,43.4 51.5,43.6 52.0,43.6 52.5,43.4 53.0,43.6 53.5,43.6 54.0,43.3 54.5,42.9 55.0,41.0 55.5,40.5 56.0,40.2 56.5,40.1 57.0,40.7 57.5,41.0 58.0,41.5 58.5,42.2 59.0,42.4 59.5,41.6 60.0,41.1 60.5,40.7 61.0,40.6 61.5,40.7 62.0,40.9 62.5,41.4 63.0,42.0 63.5,42.6 64.0,41.7 64.5,41.2 65.0,40.8 65.5,40.6 66.0,40.6 66.5,40.9 67.0,40.8 67.5,41.4 68.0,42.5 68.5,41.9 69.0,41.3 69.5,40.9 70.0,40.6 70.5,40.6 71.0,40.8 71.5,41.2 72.0,41.7 72.5,42.6 73.0,42.0 73.5,41.4 74.0,40.9 74.5,40.7 75.0,40.6 75.5,40.7 76.0,42.1 76.5,42.5 77.0,42.9 77.5,43.2 78.0,43.5 78.5,43.4 79.0,43.6 79.5,43.4 80.0,43.3 80.5,43.6 81.0,43.4 81.5,43.4 82.0,42.9 82.5,41.0 83.0,40.5 83.5,40.2 84.0,40.1 84.5,40.7 85.0,41.0 85.5,41.5 86.0,42.2 86.5,42.4 87.0,41.6 87.5,41.1 88.0,40.7 88.5,40.6 89.0,40.7 89.5,40.9 90.0,41.4 90.5,42.0 91.0,42.6 91.5,41.7 92.0,41.2 92.5,40.8 93.0,40.6 93.5,40.6 94.0,40.9 94.5,40.8 95.0,41.4 95.5,42.5 96.0,41.9 96.5,41.3 97.0,40.9 97.5,40.6 98.0,40.6 98.5,40.8 99.0,41.2 99.5,41.7 100.0,42.6 100.5,42.0 101.0,41.4 101.5,40.9 102.0,40.7 102.5,40.6 103.0,40.7 103.5,42.1 104.0,42.5 104.5,42.9 105.0,43.2 105.5,43.4 106.0,43.4 106.5,43.3 107.0,43.4 107.5,43.4 108.0,43.5 108.0,46.7 107.5,46.8 107.0,46.8 106.5,46.9 106.0,46.8 105.5,46.8 105.0,47.0 104.5,47.4 104.0,47.7 103.5,48.1 103.0,49.5 102.5,49.6 102.0,49.5 101.5,49.3 101.0,48.8 100.5,48.2 100.0,47.6 99.5,48.5 99.0,49.0 98.5,49.4 98.0,49.6 97.5,49.6 97.0,49.3 96.5,48.9 96.0,48.3 95.5,47.7 95.0,48.8 94.5,49.4 94.0,49.3 93.5,49.6 93.0,49.6 92.5,49.4 92.0,49.0 91.5,48.5 91.0,47.6 90.5,48.2 90.0,48.8 89.5,49.3 89.0,49.5 88.5,49.6 88.0,49.5 87.5,49.1 87.0,48.6 86.5,47.8 86.0,48.0 85.5,48.7 85.0,49.2 84.5,49.5 84.0,50.1 83.5,50.0 83.0,49.7 82.5,49.2 82.0,47.4 81.5,46.8 81.0,46.8 80.5,46.6 80.0,46.9 79.5,46.8 79.0,46.6 78.5,46.8 78.0,46.7 77.5,47.0 77.0,47.4 76.5,47.7 76.0,48.1 75.5,49.5 75.0,49.6 74.5,49.5 74.0,49.3 73.5,48.8 73.0,48.2 72.5,47.6 72.0,48.5 71.5,49.0 71.0,49.4 70.5,49.6 70.0,49.6 69.5,49.3 69.0,48.9 68.5,48.3 68.0,47.7 67.5,48.8 67.0,49.4 66.5,49.3 66.0,49.6 65.5,49.6 65.0,49.4 64.5,49.0 64.0,48.5 63.5,47.6 63.0,48.2 62.5,48.8 62.0,49.3 61.5,49.5 61.0,49.6 60.5,49.5 60.0,49.1 59.5,48.6 59.0,47.8 58.5,48.0 58.0,48.7 57.5,49.2 57.0,49.5 56.5,50.1 56.0,50.0 55.5,49.7 55.0,49.2 54.5,47.4 54.0,46.9 53.5,46.6 53.0,46.6 52.5,46.8 52.0,46.6 51.5,46.6 51.0,46.8 50.5,46.8 50.0,47.0 49.5,47.4 49.0,47.7 48.5,48.1 48.0,49.5 47.5,49.6 47.0,49.5 46.5,49.3 46.0,48.8 45.5,48.2 45.0,47.6 44.5,48.5 44.0,49.0 43.5,49.4 43.0,49.6 42.5,49.6 42.0,49.3 41.5,48.9 41.0,48.3 40.5,47.7 40.0,48.8 39.5,49.4 39.0,49.3 38.5,49.6 38.0,49.6 37.5,49.4 37.0,49.0 36.5,48.5 36.0,47.6 35.5,48.2 35.0,48.8 34.5,49.3 34.0,49.5 33.5,49.6 33.0,49.5 32.5,49.1 32.0,48.6 31.5,47.8 31.0,48.0 30.5,48.7 30.0,49.2 29.5,49.5 29.0,50.1 28.5,50.0 28.0,49.7 27.5,49.2 27.0,47.4 26.5,46.7 26.0,46.7 25.5,46.7 25.0,46.9 24.5,46.7 24.0,46.8 23.5,46.8 23.0,46.7 22.5,47.0 22.0,47.4 21.5,47.7 21.0,48.1 20.5,49.5 20.0,49.6 19.5,49.5 19.0,49.3 18.5,48.8 18.0,48.2 17.5,47.6 17.0,48.5 16.5,49.0 16.0,49.4 15.5,49.6 15.0,49.6 14.5,49.3 14.0,48.9 13.5,48.3 13.0,47.7 12.5,48.8 12.0,49.4 11.5,49.3 11.0,49.6 10.5,49.6 10.0,49.4 9.5,49.0 9.0,48.5 8.5,47.6 8.0,48.2 7.5,48.8 7.0,49.3 6.5,49.5 6.0,49.6 5.5,49.5 5.0,49.1 4.5,48.6 4.0,47.8 3.5,48.0 3.0,48.7 2.5,49.2 2.0,49.5 1.5,50.1 1.0,50.0 0.5,49.7 0.0,49.2" fill="#1c1c24"/></svg><div style="left:1028px;top:149px;width:110px;height:54px;background:#93a7ff;"></div><div style="left:1028px;top:165px;width:110px;height:1px;background:rgba(0,0,30,0.22);"></div><div style="left:1041.75px;top:166px;width:1px;height:37px;background:rgba(0,0,30,0.12);"></div><div style="left:1055.50px;top:166px;width:1px;height:37px;background:rgba(0,0,30,0.12);"></div><div style="left:1069.25px;top:166px;width:1px;height:37px;background:rgba(0,0,30,0.12);"></div><div style="left:1083.00px;top:166px;width:1px;height:37px;background:rgba(0,0,30,0.12);"></div><div style="left:1096.75px;top:166px;width:1px;height:37px;background:rgba(0,0,30,0.12);"></div><div style="left:1110.50px;top:166px;width:1px;height:37px;background:rgba(0,0,30,0.12);"></div><div style="left:1124.25px;top:166px;width:1px;height:37px;background:rgba(0,0,30,0.12);"></div><div style="left:1028px;top:149px;width:1.5px;height:54px;background:rgba(20,20,60,0.45);"></div><svg style="position:absolute;left:1029px;top:149px;" width="109" height="54" viewBox="0 0 109 54"><polygon points="0.0,22.3 0.5,21.8 1.0,21.5 1.5,21.4 2.0,22.0 2.5,22.3 3.0,22.8 3.5,23.5 4.0,23.7 4.5,22.9 5.0,22.4 5.5,22.0 6.0,21.9 6.5,22.0 7.0,22.2 7.5,22.7 8.0,23.3 8.5,23.9 9.0,23.0 9.5,22.5 10.0,22.1 10.5,21.9 11.0,21.9 11.5,22.2 12.0,22.1 12.5,22.7 13.0,23.8 13.5,23.2 14.0,22.6 14.5,22.2 15.0,21.9 15.5,21.9 16.0,22.1 16.5,22.5 17.0,23.0 17.5,23.9 18.0,23.3 18.5,22.7 19.0,22.2 19.5,22.0 20.0,21.9 20.5,22.0 21.0,23.4 21.5,23.8 22.0,24.1 22.5,24.5 23.0,24.8 23.5,24.8 24.0,24.7 24.5,24.8 25.0,24.6 25.5,24.8 26.0,24.7 26.5,24.6 27.0,24.1 27.5,22.3 28.0,21.8 28.5,21.5 29.0,21.4 29.5,22.0 30.0,22.3 30.5,22.8 31.0,23.5 31.5,23.7 32.0,22.9 32.5,22.4 33.0,22.0 33.5,21.9 34.0,22.0 34.5,22.2 35.0,22.7 35.5,23.3 36.0,23.9 36.5,23.0 37.0,22.5 37.5,22.1 38.0,21.9 38.5,21.9 39.0,22.2 39.5,22.1 40.0,22.7 40.5,23.8 41.0,23.2 41.5,22.6 42.0,22.2 42.5,21.9 43.0,21.9 43.5,22.1 44.0,22.5 44.5,23.0 45.0,23.9 45.5,23.3 46.0,22.7 46.5,22.2 47.0,22.0 47.5,21.9 48.0,22.0 48.5,23.4 49.0,23.8 49.5,24.1 50.0,24.5 50.5,24.9 51.0,24.7 51.5,24.7 52.0,24.6 52.5,24.6 53.0,24.6 53.5,24.7 54.0,24.9 54.5,24.1 55.0,22.3 55.5,21.8 56.0,21.5 56.5,21.4 57.0,22.0 57.5,22.3 58.0,22.8 58.5,23.5 59.0,23.7 59.5,22.9 60.0,22.4 60.5,22.0 61.0,21.9 61.5,22.0 62.0,22.2 62.5,22.7 63.0,23.3 63.5,23.9 64.0,23.0 64.5,22.5 65.0,22.1 65.5,21.9 66.0,21.9 66.5,22.2 67.0,22.1 67.5,22.7 68.0,23.8 68.5,23.2 69.0,22.6 69.5,22.2 70.0,21.9 70.5,21.9 71.0,22.1 71.5,22.5 72.0,23.0 72.5,23.9 73.0,23.3 73.5,22.7 74.0,22.2 74.5,22.0 75.0,21.9 75.5,22.0 76.0,23.4 76.5,23.8 77.0,24.1 77.5,24.5 78.0,24.8 78.5,24.6 79.0,24.9 79.5,24.8 80.0,24.7 80.5,24.8 81.0,24.7 81.5,24.7 82.0,24.1 82.5,22.3 83.0,21.8 83.5,21.5 84.0,21.4 84.5,22.0 85.0,22.3 85.5,22.8 86.0,23.5 86.5,23.7 87.0,22.9 87.5,22.4 88.0,22.0 88.5,21.9 89.0,22.0 89.5,22.2 90.0,22.7 90.5,23.3 91.0,23.9 91.5,23.0 92.0,22.5 92.5,22.1 93.0,21.9 93.5,21.9 94.0,22.2 94.5,22.1 95.0,22.7 95.5,23.8 96.0,23.2 96.5,22.6 97.0,22.2 97.5,21.9 98.0,21.9 98.5,22.1 99.0,22.5 99.5,23.0 100.0,23.9 100.5,23.3 101.0,22.7 101.5,22.2 102.0,22.0 102.5,21.9 103.0,22.0 103.5,23.4 104.0,23.8 104.5,24.1 105.0,24.5 105.5,24.9 106.0,24.8 106.5,24.7 107.0,24.9 107.5,24.8 108.0,24.8 108.0,28.0 107.5,28.0 107.0,27.9 106.5,28.1 106.0,28.0 105.5,27.9 105.0,28.3 104.5,28.6 104.0,29.0 103.5,29.4 103.0,30.8 102.5,30.9 102.0,30.8 101.5,30.6 101.0,30.1 100.5,29.5 100.0,28.9 99.5,29.8 99.0,30.3 98.5,30.7 98.0,30.9 97.5,30.9 97.0,30.6 96.5,30.2 96.0,29.6 95.5,29.0 95.0,30.1 94.5,30.7 94.0,30.6 93.5,30.9 93.0,30.9 92.5,30.7 92.0,30.3 91.5,29.8 91.0,28.9 90.5,29.5 90.0,30.1 89.5,30.6 89.0,30.8 88.5,30.9 88.0,30.8 87.5,30.4 87.0,29.9 86.5,29.1 86.0,29.3 85.5,30.0 85.0,30.5 84.5,30.8 84.0,31.4 83.5,31.3 83.0,31.0 82.5,30.5 82.0,28.6 81.5,28.1 81.0,28.1 80.5,28.0 80.0,28.1 79.5,28.0 79.0,27.9 78.5,28.2 78.0,28.0 77.5,28.3 77.0,28.6 76.5,29.0 76.0,29.4 75.5,30.8 75.0,30.9 74.5,30.8 74.0,30.6 73.5,30.1 73.0,29.5 72.5,28.9 72.0,29.8 71.5,30.3 71.0,30.7 70.5,30.9 70.0,30.9 69.5,30.6 69.0,30.2 68.5,29.6 68.0,29.0 67.5,30.1 67.0,30.7 66.5,30.6 66.0,30.9 65.5,30.9 65.0,30.7 64.5,30.3 64.0,29.8 63.5,28.9 63.0,29.5 62.5,30.1 62.0,30.6 61.5,30.8 61.0,30.9 60.5,30.8 60.0,30.4 59.5,29.9 59.0,29.1 58.5,29.3 58.0,30.0 57.5,30.5 57.0,30.8 56.5,31.4 56.0,31.3 55.5,31.0 55.0,30.5 54.5,28.6 54.0,27.9 53.5,28.1 53.0,28.2 52.5,28.2 52.0,28.2 51.5,28.1 51.0,28.1 50.5,27.9 50.0,28.3 49.5,28.6 49.0,29.0 48.5,29.4 48.0,30.8 47.5,30.9 47.0,30.8 46.5,30.6 46.0,30.1 45.5,29.5 45.0,28.9 44.5,29.8 44.0,30.3 43.5,30.7 43.0,30.9 42.5,30.9 42.0,30.6 41.5,30.2 41.0,29.6 40.5,29.0 40.0,30.1 39.5,30.7 39.0,30.6 38.5,30.9 38.0,30.9 37.5,30.7 37.0,30.3 36.5,29.8 36.0,28.9 35.5,29.5 35.0,30.1 34.5,30.6 34.0,30.8 33.5,30.9 33.0,30.8 32.5,30.4 32.0,29.9 31.5,29.1 31.0,29.3 30.5,30.0 30.0,30.5 29.5,30.8 29.0,31.4 28.5,31.3 28.0,31.0 27.5,30.5 27.0,28.6 26.5,28.2 26.0,28.1 25.5,28.0 25.0,28.2 24.5,28.0 24.0,28.1 23.5,28.0 23.0,28.0 22.5,28.3 22.0,28.6 21.5,29.0 21.0,29.4 20.5,30.8 20.0,30.9 19.5,30.8 19.0,30.6 18.5,30.1 18.0,29.5 17.5,28.9 17.0,29.8 16.5,30.3 16.0,30.7 15.5,30.9 15.0,30.9 14.5,30.6 14.0,30.2 13.5,29.6 13.0,29.0 12.5,30.1 12.0,30.7 11.5,30.6 11.0,30.9 10.5,30.9 10.0,30.7 9.5,30.3 9.0,29.8 8.5,28.9 8.0,29.5 7.5,30.1 7.0,30.6 6.5,30.8 6.0,30.9 5.5,30.8 5.0,30.4 4.5,29.9 4.0,29.1 3.5,29.3 3.0,30.0 2.5,30.5 2.0,30.8 1.5,31.4 1.0,31.3 0.5,31.0 0.0,30.5" fill="#1c1c24"/><polygon points="0.0,41.0 0.5,40.5 1.0,40.2 1.5,40.1 2.0,40.7 2.5,41.0 3.0,41.5 3.5,42.2 4.0,42.4 4.5,41.6 5.0,41.1 5.5,40.7 6.0,40.6 6.5,40.7 7.0,40.9 7.5,41.4 8.0,42.0 8.5,42.6 9.0,41.7 9.5,41.2 10.0,40.8 10.5,40.6 11.0,40.6 11.5,40.9 12.0,40.8 12.5,41.4 13.0,42.5 13.5,41.9 14.0,41.3 14.5,40.9 15.0,40.6 15.5,40.6 16.0,40.8 16.5,41.2 17.0,41.7 17.5,42.6 18.0,42.0 18.5,41.4 19.0,40.9 19.5,40.7 20.0,40.6 20.5,40.7 21.0,42.1 21.5,42.5 22.0,42.9 22.5,43.2 23.0,43.5 23.5,43.5 24.0,43.4 24.5,43.5 25.0,43.3 25.5,43.5 26.0,43.4 26.5,43.3 27.0,42.9 27.5,41.0 28.0,40.5 28.5,40.2 29.0,40.1 29.5,40.7 30.0,41.0 30.5,41.5 31.0,42.2 31.5,42.4 32.0,41.6 32.5,41.1 33.0,40.7 33.5,40.6 34.0,40.7 34.5,40.9 35.0,41.4 35.5,42.0 36.0,42.6 36.5,41.7 37.0,41.2 37.5,40.8 38.0,40.6 38.5,40.6 39.0,40.9 39.5,40.8 40.0,41.4 40.5,42.5 41.0,41.9 41.5,41.3 42.0,40.9 42.5,40.6 43.0,40.6 43.5,40.8 44.0,41.2 44.5,41.7 45.0,42.6 45.5,42.0 46.0,41.4 46.5,40.9 47.0,40.7 47.5,40.6 48.0,40.7 48.5,42.1 49.0,42.5 49.5,42.9 50.0,43.2 50.5,43.6 51.0,43.4 51.5,43.4 52.0,43.3 52.5,43.3 53.0,43.3 53.5,43.4 54.0,43.6 54.5,42.9 55.0,41.0 55.5,40.5 56.0,40.2 56.5,40.1 57.0,40.7 57.5,41.0 58.0,41.5 58.5,42.2 59.0,42.4 59.5,41.6 60.0,41.1 60.5,40.7 61.0,40.6 61.5,40.7 62.0,40.9 62.5,41.4 63.0,42.0 63.5,42.6 64.0,41.7 64.5,41.2 65.0,40.8 65.5,40.6 66.0,40.6 66.5,40.9 67.0,40.8 67.5,41.4 68.0,42.5 68.5,41.9 69.0,41.3 69.5,40.9 70.0,40.6 70.5,40.6 71.0,40.8 71.5,41.2 72.0,41.7 72.5,42.6 73.0,42.0 73.5,41.4 74.0,40.9 74.5,40.7 75.0,40.6 75.5,40.7 76.0,42.1 76.5,42.5 77.0,42.9 77.5,43.2 78.0,43.5 78.5,43.3 79.0,43.6 79.5,43.5 80.0,43.4 80.5,43.5 81.0,43.4 81.5,43.4 82.0,42.9 82.5,41.0 83.0,40.5 83.5,40.2 84.0,40.1 84.5,40.7 85.0,41.0 85.5,41.5 86.0,42.2 86.5,42.4 87.0,41.6 87.5,41.1 88.0,40.7 88.5,40.6 89.0,40.7 89.5,40.9 90.0,41.4 90.5,42.0 91.0,42.6 91.5,41.7 92.0,41.2 92.5,40.8 93.0,40.6 93.5,40.6 94.0,40.9 94.5,40.8 95.0,41.4 95.5,42.5 96.0,41.9 96.5,41.3 97.0,40.9 97.5,40.6 98.0,40.6 98.5,40.8 99.0,41.2 99.5,41.7 100.0,42.6 100.5,42.0 101.0,41.4 101.5,40.9 102.0,40.7 102.5,40.6 103.0,40.7 103.5,42.1 104.0,42.5 104.5,42.9 105.0,43.2 105.5,43.6 106.0,43.5 106.5,43.4 107.0,43.6 107.5,43.5 108.0,43.5 108.0,46.7 107.5,46.7 107.0,46.6 106.5,46.8 106.0,46.7 105.5,46.6 105.0,47.0 104.5,47.4 104.0,47.7 103.5,48.1 103.0,49.5 102.5,49.6 102.0,49.5 101.5,49.3 101.0,48.8 100.5,48.2 100.0,47.6 99.5,48.5 99.0,49.0 98.5,49.4 98.0,49.6 97.5,49.6 97.0,49.3 96.5,48.9 96.0,48.3 95.5,47.7 95.0,48.8 94.5,49.4 94.0,49.3 93.5,49.6 93.0,49.6 92.5,49.4 92.0,49.0 91.5,48.5 91.0,47.6 90.5,48.2 90.0,48.8 89.5,49.3 89.0,49.5 88.5,49.6 88.0,49.5 87.5,49.1 87.0,48.6 86.5,47.8 86.0,48.0 85.5,48.7 85.0,49.2 84.5,49.5 84.0,50.1 83.5,50.0 83.0,49.7 82.5,49.2 82.0,47.4 81.5,46.8 81.0,46.8 80.5,46.7 80.0,46.8 79.5,46.7 79.0,46.6 78.5,46.9 78.0,46.7 77.5,47.0 77.0,47.4 76.5,47.7 76.0,48.1 75.5,49.5 75.0,49.6 74.5,49.5 74.0,49.3 73.5,48.8 73.0,48.2 72.5,47.6 72.0,48.5 71.5,49.0 71.0,49.4 70.5,49.6 70.0,49.6 69.5,49.3 69.0,48.9 68.5,48.3 68.0,47.7 67.5,48.8 67.0,49.4 66.5,49.3 66.0,49.6 65.5,49.6 65.0,49.4 64.5,49.0 64.0,48.5 63.5,47.6 63.0,48.2 62.5,48.8 62.0,49.3 61.5,49.5 61.0,49.6 60.5,49.5 60.0,49.1 59.5,48.6 59.0,47.8 58.5,48.0 58.0,48.7 57.5,49.2 57.0,49.5 56.5,50.1 56.0,50.0 55.5,49.7 55.0,49.2 54.5,47.4 54.0,46.6 53.5,46.8 53.0,46.9 52.5,46.9 52.0,46.9 51.5,46.8 51.0,46.8 50.5,46.6 50.0,47.0 49.5,47.4 49.0,47.7 48.5,48.1 48.0,49.5 47.5,49.6 47.0,49.5 46.5,49.3 46.0,48.8 45.5,48.2 45.0,47.6 44.5,48.5 44.0,49.0 43.5,49.4 43.0,49.6 42.5,49.6 42.0,49.3 41.5,48.9 41.0,48.3 40.5,47.7 40.0,48.8 39.5,49.4 39.0,49.3 38.5,49.6 38.0,49.6 37.5,49.4 37.0,49.0 36.5,48.5 36.0,47.6 35.5,48.2 35.0,48.8 34.5,49.3 34.0,49.5 33.5,49.6 33.0,49.5 32.5,49.1 32.0,48.6 31.5,47.8 31.0,48.0 30.5,48.7 30.0,49.2 29.5,49.5 29.0,50.1 28.5,50.0 28.0,49.7 27.5,49.2 27.0,47.4 26.5,46.9 26.0,46.8 25.5,46.7 25.0,46.9 24.5,46.7 24.0,46.8 23.5,46.7 23.0,46.7 22.5,47.0 22.0,47.4 21.5,47.7 21.0,48.1 20.5,49.5 20.0,49.6 19.5,49.5 19.0,49.3 18.5,48.8 18.0,48.2 17.5,47.6 17.0,48.5 16.5,49.0 16.0,49.4 15.5,49.6 15.0,49.6 14.5,49.3 14.0,48.9 13.5,48.3 13.0,47.7 12.5,48.8 12.0,49.4 11.5,49.3 11.0,49.6 10.5,49.6 10.0,49.4 9.5,49.0 9.0,48.5 8.5,47.6 8.0,48.2 7.5,48.8 7.0,49.3 6.5,49.5 6.0,49.6 5.5,49.5 5.0,49.1 4.5,48.6 4.0,47.8 3.5,48.0 3.0,48.7 2.5,49.2 2.0,49.5 1.5,50.1 1.0,50.0 0.5,49.7 0.0,49.2" fill="#1c1c24"/></svg><div style="left:1166px;top:149px;width:83px;height:54px;background:#93a7ff;"></div><div style="left:1166px;top:165px;width:83px;height:1px;background:rgba(0,0,30,0.22);"></div><div style="left:1179.25px;top:166px;width:1px;height:37px;background:rgba(0,0,30,0.12);"></div><div style="left:1193.00px;top:166px;width:1px;height:37px;background:rgba(0,0,30,0.12);"></div><div style="left:1206.75px;top:166px;width:1px;height:37px;background:rgba(0,0,30,0.12);"></div><div style="left:1220.50px;top:166px;width:1px;height:37px;background:rgba(0,0,30,0.12);"></div><div style="left:1234.25px;top:166px;width:1px;height:37px;background:rgba(0,0,30,0.12);"></div><div style="left:1166px;top:149px;width:1.5px;height:54px;background:rgba(20,20,60,0.45);"></div><svg style="position:absolute;left:1167px;top:149px;" width="82" height="54" viewBox="0 0 82 54"><polygon points="0.0,22.3 0.5,21.8 1.0,21.5 1.5,21.4 2.0,22.0 2.5,22.3 3.0,22.8 3.5,23.5 4.0,23.7 4.5,22.9 5.0,22.4 5.5,22.0 6.0,21.9 6.5,22.0 7.0,22.2 7.5,22.7 8.0,23.3 8.5,23.9 9.0,23.0 9.5,22.5 10.0,22.1 10.5,21.9 11.0,21.9 11.5,22.2 12.0,22.1 12.5,22.7 13.0,23.8 13.5,23.2 14.0,22.6 14.5,22.2 15.0,21.9 15.5,21.9 16.0,22.1 16.5,22.5 17.0,23.0 17.5,23.9 18.0,23.3 18.5,22.7 19.0,22.2 19.5,22.0 20.0,21.9 20.5,22.0 21.0,23.4 21.5,23.8 22.0,24.1 22.5,24.5 23.0,24.7 23.5,24.6 24.0,24.7 24.5,24.9 25.0,24.8 25.5,24.8 26.0,24.7 26.5,24.6 27.0,24.1 27.5,22.3 28.0,21.8 28.5,21.5 29.0,21.4 29.5,22.0 30.0,22.3 30.5,22.8 31.0,23.5 31.5,23.7 32.0,22.9 32.5,22.4 33.0,22.0 33.5,21.9 34.0,22.0 34.5,22.2 35.0,22.7 35.5,23.3 36.0,23.9 36.5,23.0 37.0,22.5 37.5,22.1 38.0,21.9 38.5,21.9 39.0,22.2 39.5,22.1 40.0,22.7 40.5,23.8 41.0,23.2 41.5,22.6 42.0,22.2 42.5,21.9 43.0,21.9 43.5,22.1 44.0,22.5 44.5,23.0 45.0,23.9 45.5,23.3 46.0,22.7 46.5,22.2 47.0,22.0 47.5,21.9 48.0,22.0 48.5,23.4 49.0,23.8 49.5,24.1 50.0,24.5 50.5,24.9 51.0,24.6 51.5,24.6 52.0,24.6 52.5,24.8 53.0,24.8 53.5,24.7 54.0,24.8 54.5,24.1 55.0,22.3 55.5,21.8 56.0,21.5 56.5,21.4 57.0,22.0 57.5,22.3 58.0,22.8 58.5,23.5 59.0,23.7 59.5,22.9 60.0,22.4 60.5,22.0 61.0,21.9 61.5,22.0 62.0,22.2 62.5,22.7 63.0,23.3 63.5,23.9 64.0,23.0 64.5,22.5 65.0,22.1 65.5,21.9 66.0,21.9 66.5,22.2 67.0,22.1 67.5,22.7 68.0,23.8 68.5,23.2 69.0,22.6 69.5,22.2 70.0,21.9 70.5,21.9 71.0,22.1 71.5,22.5 72.0,23.0 72.5,23.9 73.0,23.3 73.5,22.7 74.0,22.2 74.5,22.0 75.0,21.9 75.5,22.0 76.0,23.4 76.5,23.8 77.0,24.1 77.5,24.5 78.0,24.8 78.5,24.6 79.0,24.7 79.5,24.7 80.0,24.8 80.5,24.8 81.0,24.9 81.0,27.9 80.5,28.0 80.0,28.0 79.5,28.1 79.0,28.1 78.5,28.2 78.0,28.0 77.5,28.3 77.0,28.6 76.5,29.0 76.0,29.4 75.5,30.8 75.0,30.9 74.5,30.8 74.0,30.6 73.5,30.1 73.0,29.5 72.5,28.9 72.0,29.8 71.5,30.3 71.0,30.7 70.5,30.9 70.0,30.9 69.5,30.6 69.0,30.2 68.5,29.6 68.0,29.0 67.5,30.1 67.0,30.7 66.5,30.6 66.0,30.9 65.5,30.9 65.0,30.7 64.5,30.3 64.0,29.8 63.5,28.9 63.0,29.5 62.5,30.1 62.0,30.6 61.5,30.8 61.0,30.9 60.5,30.8 60.0,30.4 59.5,29.9 59.0,29.1 58.5,29.3 58.0,30.0 57.5,30.5 57.0,30.8 56.5,31.4 56.0,31.3 55.5,31.0 55.0,30.5 54.5,28.6 54.0,28.0 53.5,28.1 53.0,28.0 52.5,28.0 52.0,28.2 51.5,28.2 51.0,28.2 50.5,27.9 50.0,28.3 49.5,28.6 49.0,29.0 48.5,29.4 48.0,30.8 47.5,30.9 47.0,30.8 46.5,30.6 46.0,30.1 45.5,29.5 45.0,28.9 44.5,29.8 44.0,30.3 43.5,30.7 43.0,30.9 42.5,30.9 42.0,30.6 41.5,30.2 41.0,29.6 40.5,29.0 40.0,30.1 39.5,30.7 39.0,30.6 38.5,30.9 38.0,30.9 37.5,30.7 37.0,30.3 36.5,29.8 36.0,28.9 35.5,29.5 35.0,30.1 34.5,30.6 34.0,30.8 33.5,30.9 33.0,30.8 32.5,30.4 32.0,29.9 31.5,29.1 31.0,29.3 30.5,30.0 30.0,30.5 29.5,30.8 29.0,31.4 28.5,31.3 28.0,31.0 27.5,30.5 27.0,28.6 26.5,28.2 26.0,28.1 25.5,28.0 25.0,28.0 24.5,27.9 24.0,28.1 23.5,28.2 23.0,28.1 22.5,28.3 22.0,28.6 21.5,29.0 21.0,29.4 20.5,30.8 20.0,30.9 19.5,30.8 19.0,30.6 18.5,30.1 18.0,29.5 17.5,28.9 17.0,29.8 16.5,30.3 16.0,30.7 15.5,30.9 15.0,30.9 14.5,30.6 14.0,30.2 13.5,29.6 13.0,29.0 12.5,30.1 12.0,30.7 11.5,30.6 11.0,30.9 10.5,30.9 10.0,30.7 9.5,30.3 9.0,29.8 8.5,28.9 8.0,29.5 7.5,30.1 7.0,30.6 6.5,30.8 6.0,30.9 5.5,30.8 5.0,30.4 4.5,29.9 4.0,29.1 3.5,29.3 3.0,30.0 2.5,30.5 2.0,30.8 1.5,31.4 1.0,31.3 0.5,31.0 0.0,30.5" fill="#1c1c24"/><polygon points="0.0,41.0 0.5,40.5 1.0,40.2 1.5,40.1 2.0,40.7 2.5,41.0 3.0,41.5 3.5,42.2 4.0,42.4 4.5,41.6 5.0,41.1 5.5,40.7 6.0,40.6 6.5,40.7 7.0,40.9 7.5,41.4 8.0,42.0 8.5,42.6 9.0,41.7 9.5,41.2 10.0,40.8 10.5,40.6 11.0,40.6 11.5,40.9 12.0,40.8 12.5,41.4 13.0,42.5 13.5,41.9 14.0,41.3 14.5,40.9 15.0,40.6 15.5,40.6 16.0,40.8 16.5,41.2 17.0,41.7 17.5,42.6 18.0,42.0 18.5,41.4 19.0,40.9 19.5,40.7 20.0,40.6 20.5,40.7 21.0,42.1 21.5,42.5 22.0,42.9 22.5,43.2 23.0,43.4 23.5,43.3 24.0,43.4 24.5,43.6 25.0,43.5 25.5,43.5 26.0,43.4 26.5,43.3 27.0,42.9 27.5,41.0 28.0,40.5 28.5,40.2 29.0,40.1 29.5,40.7 30.0,41.0 30.5,41.5 31.0,42.2 31.5,42.4 32.0,41.6 32.5,41.1 33.0,40.7 33.5,40.6 34.0,40.7 34.5,40.9 35.0,41.4 35.5,42.0 36.0,42.6 36.5,41.7 37.0,41.2 37.5,40.8 38.0,40.6 38.5,40.6 39.0,40.9 39.5,40.8 40.0,41.4 40.5,42.5 41.0,41.9 41.5,41.3 42.0,40.9 42.5,40.6 43.0,40.6 43.5,40.8 44.0,41.2 44.5,41.7 45.0,42.6 45.5,42.0 46.0,41.4 46.5,40.9 47.0,40.7 47.5,40.6 48.0,40.7 48.5,42.1 49.0,42.5 49.5,42.9 50.0,43.2 50.5,43.6 51.0,43.3 51.5,43.3 52.0,43.3 52.5,43.5 53.0,43.5 53.5,43.4 54.0,43.5 54.5,42.9 55.0,41.0 55.5,40.5 56.0,40.2 56.5,40.1 57.0,40.7 57.5,41.0 58.0,41.5 58.5,42.2 59.0,42.4 59.5,41.6 60.0,41.1 60.5,40.7 61.0,40.6 61.5,40.7 62.0,40.9 62.5,41.4 63.0,42.0 63.5,42.6 64.0,41.7 64.5,41.2 65.0,40.8 65.5,40.6 66.0,40.6 66.5,40.9 67.0,40.8 67.5,41.4 68.0,42.5 68.5,41.9 69.0,41.3 69.5,40.9 70.0,40.6 70.5,40.6 71.0,40.8 71.5,41.2 72.0,41.7 72.5,42.6 73.0,42.0 73.5,41.4 74.0,40.9 74.5,40.7 75.0,40.6 75.5,40.7 76.0,42.1 76.5,42.5 77.0,42.9 77.5,43.2 78.0,43.5 78.5,43.3 79.0,43.4 79.5,43.4 80.0,43.5 80.5,43.5 81.0,43.6 81.0,46.6 80.5,46.7 80.0,46.7 79.5,46.8 79.0,46.8 78.5,46.9 78.0,46.7 77.5,47.0 77.0,47.4 76.5,47.7 76.0,48.1 75.5,49.5 75.0,49.6 74.5,49.5 74.0,49.3 73.5,48.8 73.0,48.2 72.5,47.6 72.0,48.5 71.5,49.0 71.0,49.4 70.5,49.6 70.0,49.6 69.5,49.3 69.0,48.9 68.5,48.3 68.0,47.7 67.5,48.8 67.0,49.4 66.5,49.3 66.0,49.6 65.5,49.6 65.0,49.4 64.5,49.0 64.0,48.5 63.5,47.6 63.0,48.2 62.5,48.8 62.0,49.3 61.5,49.5 61.0,49.6 60.5,49.5 60.0,49.1 59.5,48.6 59.0,47.8 58.5,48.0 58.0,48.7 57.5,49.2 57.0,49.5 56.5,50.1 56.0,50.0 55.5,49.7 55.0,49.2 54.5,47.4 54.0,46.7 53.5,46.8 53.0,46.7 52.5,46.7 52.0,46.9 51.5,46.9 51.0,46.9 50.5,46.6 50.0,47.0 49.5,47.4 49.0,47.7 48.5,48.1 48.0,49.5 47.5,49.6 47.0,49.5 46.5,49.3 46.0,48.8 45.5,48.2 45.0,47.6 44.5,48.5 44.0,49.0 43.5,49.4 43.0,49.6 42.5,49.6 42.0,49.3 41.5,48.9 41.0,48.3 40.5,47.7 40.0,48.8 39.5,49.4 39.0,49.3 38.5,49.6 38.0,49.6 37.5,49.4 37.0,49.0 36.5,48.5 36.0,47.6 35.5,48.2 35.0,48.8 34.5,49.3 34.0,49.5 33.5,49.6 33.0,49.5 32.5,49.1 32.0,48.6 31.5,47.8 31.0,48.0 30.5,48.7 30.0,49.2 29.5,49.5 29.0,50.1 28.5,50.0 28.0,49.7 27.5,49.2 27.0,47.4 26.5,46.9 26.0,46.8 25.5,46.7 25.0,46.7 24.5,46.6 24.0,46.8 23.5,46.9 23.0,46.8 22.5,47.0 22.0,47.4 21.5,47.7 21.0,48.1 20.5,49.5 20.0,49.6 19.5,49.5 19.0,49.3 18.5,48.8 18.0,48.2 17.5,47.6 17.0,48.5 16.5,49.0 16.0,49.4 15.5,49.6 15.0,49.6 14.5,49.3 14.0,48.9 13.5,48.3 13.0,47.7 12.5,48.8 12.0,49.4 11.5,49.3 11.0,49.6 10.5,49.6 10.0,49.4 9.5,49.0 9.0,48.5 8.5,47.6 8.0,48.2 7.5,48.8 7.0,49.3 6.5,49.5 6.0,49.6 5.5,49.5 5.0,49.1 4.5,48.6 4.0,47.8 3.5,48.0 3.0,48.7 2.5,49.2 2.0,49.5 1.5,50.1 1.0,50.0 0.5,49.7 0.0,49.2" fill="#1c1c24"/></svg><div style="left:1249px;top:149px;width:6px;height:54px;background:#93a7ff;"></div><div style="left:1249px;top:165px;width:6px;height:1px;background:rgba(0,0,30,0.22);"></div><div style="left:1249px;top:149px;width:1.5px;height:54px;background:rgba(20,20,60,0.45);"></div><svg style="position:absolute;left:1250px;top:149px;" width="5" height="54" viewBox="0 0 5 54"><polygon points="0.0,22.3 0.5,21.8 1.0,21.5 1.5,21.4 2.0,22.0 2.5,22.3 3.0,22.8 3.5,23.5 4.0,23.7 4.0,29.1 3.5,29.3 3.0,30.0 2.5,30.5 2.0,30.8 1.5,31.4 1.0,31.3 0.5,31.0 0.0,30.5" fill="#1c1c24"/><polygon points="0.0,41.0 0.5,40.5 1.0,40.2 1.5,40.1 2.0,40.7 2.5,41.0 3.0,41.5 3.5,42.2 4.0,42.4 4.0,47.8 3.5,48.0 3.0,48.7 2.5,49.2 2.0,49.5 1.5,50.1 1.0,50.0 0.5,49.7 0.0,49.2" fill="#1c1c24"/></svg><div style="left:918px;top:149px;width:110px;height:54px;background:#93a7ff;"></div><div style="left:918px;top:165px;width:110px;height:1px;background:rgba(0,0,30,0.22);"></div><div style="left:931.75px;top:166px;width:1px;height:37px;background:rgba(0,0,30,0.12);"></div><div style="left:945.50px;top:166px;width:1px;height:37px;background:rgba(0,0,30,0.12);"></div><div style="left:959.25px;top:166px;width:1px;height:37px;background:rgba(0,0,30,0.12);"></div><div style="left:973.00px;top:166px;width:1px;height:37px;background:rgba(0,0,30,0.12);"></div><div style="left:986.75px;top:166px;width:1px;height:37px;background:rgba(0,0,30,0.12);"></div><div style="left:1000.50px;top:166px;width:1px;height:37px;background:rgba(0,0,30,0.12);"></div><div style="left:1014.25px;top:166px;width:1px;height:37px;background:rgba(0,0,30,0.12);"></div><div style="left:918px;top:149px;width:1.5px;height:54px;background:rgba(20,20,60,0.45);"></div><div style="left:918px;top:175px;width:110px;height:1px;background:#22222a;"></div><div style="left:918px;top:194px;width:110px;height:1px;background:#22222a;"></div><div style="left:9px;top:207.5px;width:469px;height:3px;background:#8ac6fa;"></div><div style="left:38px;top:215px;width:1100px;height:2px;background:#8ac6fa;"></div><div style="left:1166px;top:212px;width:89px;height:2px;background:#8ac6fa;"></div><div style="left:1166px;top:216px;width:89px;height:2px;background:#8ac6fa;"></div><div style="left:1139px;top:220px;width:116px;height:2px;background:#8ac6fa;"></div><div style="left:10.50px;top:206px;width:1px;height:16px;background:rgba(0,0,0,0.16);"></div><div style="left:24.25px;top:206px;width:1px;height:16px;background:rgba(0,0,0,0.16);"></div><div style="left:38.00px;top:206px;width:1px;height:16px;background:rgba(0,0,0,0.16);"></div><div style="left:51.75px;top:206px;width:1px;height:16px;background:rgba(0,0,0,0.16);"></div><div style="left:65.50px;top:206px;width:1px;height:16px;background:rgba(0,0,0,0.16);"></div><div style="left:79.25px;top:206px;width:1px;height:16px;background:rgba(0,0,0,0.16);"></div><div style="left:93.00px;top:206px;width:1px;height:16px;background:rgba(0,0,0,0.16);"></div><div style="left:106.75px;top:206px;width:1px;height:16px;background:rgba(0,0,0,0.16);"></div><div style="left:120.50px;top:206px;width:1px;height:16px;background:rgba(0,0,0,0.16);"></div><div style="left:134.25px;top:206px;width:1px;height:16px;background:rgba(0,0,0,0.16);"></div><div style="left:148.00px;top:206px;width:1px;height:16px;background:rgba(0,0,0,0.16);"></div><div style="left:161.75px;top:206px;width:1px;height:16px;background:rgba(0,0,0,0.16);"></div><div style="left:175.50px;top:206px;width:1px;height:16px;background:rgba(0,0,0,0.16);"></div><div style="left:189.25px;top:206px;width:1px;height:16px;background:rgba(0,0,0,0.16);"></div><div style="left:203.00px;top:206px;width:1px;height:16px;background:rgba(0,0,0,0.16);"></div><div style="left:216.75px;top:206px;width:1px;height:16px;background:rgba(0,0,0,0.16);"></div><div style="left:230.50px;top:206px;width:1px;height:16px;background:rgba(0,0,0,0.16);"></div><div style="left:244.25px;top:206px;width:1px;height:16px;background:rgba(0,0,0,0.16);"></div><div style="left:258.00px;top:206px;width:1px;height:16px;background:rgba(0,0,0,0.16);"></div><div style="left:271.75px;top:206px;width:1px;height:16px;background:rgba(0,0,0,0.16);"></div><div style="left:285.50px;top:206px;width:1px;height:16px;background:rgba(0,0,0,0.16);"></div><div style="left:299.25px;top:206px;width:1px;height:16px;background:rgba(0,0,0,0.16);"></div><div style="left:313.00px;top:206px;width:1px;height:16px;background:rgba(0,0,0,0.16);"></div><div style="left:326.75px;top:206px;width:1px;height:16px;background:rgba(0,0,0,0.16);"></div><div style="left:340.50px;top:206px;width:1px;height:16px;background:rgba(0,0,0,0.16);"></div><div style="left:354.25px;top:206px;width:1px;height:16px;background:rgba(0,0,0,0.16);"></div><div style="left:368.00px;top:206px;width:1px;height:16px;background:rgba(0,0,0,0.16);"></div><div style="left:381.75px;top:206px;width:1px;height:16px;background:rgba(0,0,0,0.16);"></div><div style="left:395.50px;top:206px;width:1px;height:16px;background:rgba(0,0,0,0.16);"></div><div style="left:409.25px;top:206px;width:1px;height:16px;background:rgba(0,0,0,0.16);"></div><div style="left:423.00px;top:206px;width:1px;height:16px;background:rgba(0,0,0,0.16);"></div><div style="left:436.75px;top:206px;width:1px;height:16px;background:rgba(0,0,0,0.16);"></div><div style="left:450.50px;top:206px;width:1px;height:16px;background:rgba(0,0,0,0.16);"></div><div style="left:464.25px;top:206px;width:1px;height:16px;background:rgba(0,0,0,0.16);"></div><div style="left:478.00px;top:206px;width:1px;height:16px;background:rgba(0,0,0,0.16);"></div><div style="left:491.75px;top:206px;width:1px;height:16px;background:rgba(0,0,0,0.16);"></div><div style="left:505.50px;top:206px;width:1px;height:16px;background:rgba(0,0,0,0.16);"></div><div style="left:519.25px;top:206px;width:1px;height:16px;background:rgba(0,0,0,0.16);"></div><div style="left:533.00px;top:206px;width:1px;height:16px;background:rgba(0,0,0,0.16);"></div><div style="left:546.75px;top:206px;width:1px;height:16px;background:rgba(0,0,0,0.16);"></div><div style="left:560.50px;top:206px;width:1px;height:16px;background:rgba(0,0,0,0.16);"></div><div style="left:574.25px;top:206px;width:1px;height:16px;background:rgba(0,0,0,0.16);"></div><div style="left:588.00px;top:206px;width:1px;height:16px;background:rgba(0,0,0,0.16);"></div><div style="left:601.75px;top:206px;width:1px;height:16px;background:rgba(0,0,0,0.16);"></div><div style="left:615.50px;top:206px;width:1px;height:16px;background:rgba(0,0,0,0.16);"></div><div style="left:629.25px;top:206px;width:1px;height:16px;background:rgba(0,0,0,0.16);"></div><div style="left:643.00px;top:206px;width:1px;height:16px;background:rgba(0,0,0,0.16);"></div><div style="left:656.75px;top:206px;width:1px;height:16px;background:rgba(0,0,0,0.16);"></div><div style="left:670.50px;top:206px;width:1px;height:16px;background:rgba(0,0,0,0.16);"></div><div style="left:684.25px;top:206px;width:1px;height:16px;background:rgba(0,0,0,0.16);"></div><div style="left:698.00px;top:206px;width:1px;height:16px;background:rgba(0,0,0,0.16);"></div><div style="left:711.75px;top:206px;width:1px;height:16px;background:rgba(0,0,0,0.16);"></div><div style="left:725.50px;top:206px;width:1px;height:16px;background:rgba(0,0,0,0.16);"></div><div style="left:739.25px;top:206px;width:1px;height:16px;background:rgba(0,0,0,0.16);"></div><div style="left:753.00px;top:206px;width:1px;height:16px;background:rgba(0,0,0,0.16);"></div><div style="left:766.75px;top:206px;width:1px;height:16px;background:rgba(0,0,0,0.16);"></div><div style="left:780.50px;top:206px;width:1px;height:16px;background:rgba(0,0,0,0.16);"></div><div style="left:794.25px;top:206px;width:1px;height:16px;background:rgba(0,0,0,0.16);"></div><div style="left:808.00px;top:206px;width:1px;height:16px;background:rgba(0,0,0,0.16);"></div><div style="left:821.75px;top:206px;width:1px;height:16px;background:rgba(0,0,0,0.16);"></div><div style="left:835.50px;top:206px;width:1px;height:16px;background:rgba(0,0,0,0.16);"></div><div style="left:849.25px;top:206px;width:1px;height:16px;background:rgba(0,0,0,0.16);"></div><div style="left:863.00px;top:206px;width:1px;height:16px;background:rgba(0,0,0,0.16);"></div><div style="left:876.75px;top:206px;width:1px;height:16px;background:rgba(0,0,0,0.16);"></div><div style="left:890.50px;top:206px;width:1px;height:16px;background:rgba(0,0,0,0.16);"></div><div style="left:904.25px;top:206px;width:1px;height:16px;background:rgba(0,0,0,0.16);"></div><div style="left:918.00px;top:206px;width:1px;height:16px;background:rgba(0,0,0,0.16);"></div><div style="left:931.75px;top:206px;width:1px;height:16px;background:rgba(0,0,0,0.16);"></div><div style="left:945.50px;top:206px;width:1px;height:16px;background:rgba(0,0,0,0.16);"></div><div style="left:959.25px;top:206px;width:1px;height:16px;background:rgba(0,0,0,0.16);"></div><div style="left:973.00px;top:206px;width:1px;height:16px;background:rgba(0,0,0,0.16);"></div><div style="left:986.75px;top:206px;width:1px;height:16px;background:rgba(0,0,0,0.16);"></div><div style="left:1000.50px;top:206px;width:1px;height:16px;background:rgba(0,0,0,0.16);"></div><div style="left:1014.25px;top:206px;width:1px;height:16px;background:rgba(0,0,0,0.16);"></div><div style="left:1028.00px;top:206px;width:1px;height:16px;background:rgba(0,0,0,0.16);"></div><div style="left:1041.75px;top:206px;width:1px;height:16px;background:rgba(0,0,0,0.16);"></div><div style="left:1055.50px;top:206px;width:1px;height:16px;background:rgba(0,0,0,0.16);"></div><div style="left:1069.25px;top:206px;width:1px;height:16px;background:rgba(0,0,0,0.16);"></div><div style="left:1083.00px;top:206px;width:1px;height:16px;background:rgba(0,0,0,0.16);"></div><div style="left:1096.75px;top:206px;width:1px;height:16px;background:rgba(0,0,0,0.16);"></div><div style="left:1110.50px;top:206px;width:1px;height:16px;background:rgba(0,0,0,0.16);"></div><div style="left:1124.25px;top:206px;width:1px;height:16px;background:rgba(0,0,0,0.16);"></div><div style="left:1138.00px;top:206px;width:1px;height:16px;background:rgba(0,0,0,0.16);"></div><div style="left:1151.75px;top:206px;width:1px;height:16px;background:rgba(0,0,0,0.16);"></div><div style="left:1165.50px;top:206px;width:1px;height:16px;background:rgba(0,0,0,0.16);"></div><div style="left:1179.25px;top:206px;width:1px;height:16px;background:rgba(0,0,0,0.16);"></div><div style="left:1193.00px;top:206px;width:1px;height:16px;background:rgba(0,0,0,0.16);"></div><div style="left:1206.75px;top:206px;width:1px;height:16px;background:rgba(0,0,0,0.16);"></div><div style="left:1220.50px;top:206px;width:1px;height:16px;background:rgba(0,0,0,0.16);"></div><div style="left:1234.25px;top:206px;width:1px;height:16px;background:rgba(0,0,0,0.16);"></div><div style="left:1248.00px;top:206px;width:1px;height:16px;background:rgba(0,0,0,0.16);"></div><div style="left:258px;top:225px;width:220px;height:54px;background:#5cffe6;"></div><div style="left:258px;top:241px;width:220px;height:1px;background:rgba(0,0,30,0.22);"></div><div style="left:271.75px;top:242px;width:1px;height:37px;background:rgba(0,0,30,0.12);"></div><div style="left:285.50px;top:242px;width:1px;height:37px;background:rgba(0,0,30,0.12);"></div><div style="left:299.25px;top:242px;width:1px;height:37px;background:rgba(0,0,30,0.12);"></div><div style="left:313.00px;top:242px;width:1px;height:37px;background:rgba(0,0,30,0.12);"></div><div style="left:326.75px;top:242px;width:1px;height:37px;background:rgba(0,0,30,0.12);"></div><div style="left:340.50px;top:242px;width:1px;height:37px;background:rgba(0,0,30,0.12);"></div><div style="left:354.25px;top:242px;width:1px;height:37px;background:rgba(0,0,30,0.12);"></div><div style="left:368.00px;top:242px;width:1px;height:37px;background:rgba(0,0,30,0.12);"></div><div style="left:381.75px;top:242px;width:1px;height:37px;background:rgba(0,0,30,0.12);"></div><div style="left:395.50px;top:242px;width:1px;height:37px;background:rgba(0,0,30,0.12);"></div><div style="left:409.25px;top:242px;width:1px;height:37px;background:rgba(0,0,30,0.12);"></div><div style="left:423.00px;top:242px;width:1px;height:37px;background:rgba(0,0,30,0.12);"></div><div style="left:436.75px;top:242px;width:1px;height:37px;background:rgba(0,0,30,0.12);"></div><div style="left:450.50px;top:242px;width:1px;height:37px;background:rgba(0,0,30,0.12);"></div><div style="left:464.25px;top:242px;width:1px;height:37px;background:rgba(0,0,30,0.12);"></div><svg style="position:absolute;left:258px;top:225px;" width="220" height="54" viewBox="0 0 220 54"><rect x="12.5" y="48.5" width="5" height="1.8" fill="#15201e"/><rect x="30.0" y="48.5" width="5" height="1.8" fill="#15201e"/><rect x="23.6" y="42.5" width="5" height="1.8" fill="#15201e"/><rect x="51.1" y="42.5" width="5" height="1.8" fill="#15201e"/><rect x="42.5" y="24" width="2.5" height="1.8" fill="#15201e"/><rect x="3.0" y="24" width="5" height="1.8" fill="#15201e"/><rect x="67.5" y="48.5" width="5" height="1.8" fill="#15201e"/><rect x="85.0" y="48.5" width="5" height="1.8" fill="#15201e"/><rect x="78.6" y="42.5" width="5" height="1.8" fill="#15201e"/><rect x="106.1" y="42.5" width="5" height="1.8" fill="#15201e"/><rect x="97.5" y="24" width="2.5" height="1.8" fill="#15201e"/><rect x="122.5" y="48.5" width="5" height="1.8" fill="#15201e"/><rect x="140.0" y="48.5" width="5" height="1.8" fill="#15201e"/><rect x="133.6" y="42.5" width="5" height="1.8" fill="#15201e"/><rect x="161.1" y="42.5" width="5" height="1.8" fill="#15201e"/><rect x="152.5" y="24" width="2.5" height="1.8" fill="#15201e"/><rect x="113.0" y="24" width="5" height="1.8" fill="#15201e"/><rect x="177.5" y="48.5" width="5" height="1.8" fill="#15201e"/><rect x="195.0" y="48.5" width="5" height="1.8" fill="#15201e"/><rect x="188.6" y="42.5" width="5" height="1.8" fill="#15201e"/><rect x="216.1" y="42.5" width="5" height="1.8" fill="#15201e"/><rect x="207.5" y="24" width="2.5" height="1.8" fill="#15201e"/></svg><div style="left:478px;top:225px;width:220px;height:54px;background:#5cffe6;"></div><div style="left:478px;top:241px;width:220px;height:1px;background:rgba(0,0,30,0.22);"></div><div style="left:491.75px;top:242px;width:1px;height:37px;background:rgba(0,0,30,0.12);"></div><div style="left:505.50px;top:242px;width:1px;height:37px;background:rgba(0,0,30,0.12);"></div><div style="left:519.25px;top:242px;width:1px;height:37px;background:rgba(0,0,30,0.12);"></div><div style="left:533.00px;top:242px;width:1px;height:37px;background:rgba(0,0,30,0.12);"></div><div style="left:546.75px;top:242px;width:1px;height:37px;background:rgba(0,0,30,0.12);"></div><div style="left:560.50px;top:242px;width:1px;height:37px;background:rgba(0,0,30,0.12);"></div><div style="left:574.25px;top:242px;width:1px;height:37px;background:rgba(0,0,30,0.12);"></div><div style="left:588.00px;top:242px;width:1px;height:37px;background:rgba(0,0,30,0.12);"></div><div style="left:601.75px;top:242px;width:1px;height:37px;background:rgba(0,0,30,0.12);"></div><div style="left:615.50px;top:242px;width:1px;height:37px;background:rgba(0,0,30,0.12);"></div><div style="left:629.25px;top:242px;width:1px;height:37px;background:rgba(0,0,30,0.12);"></div><div style="left:643.00px;top:242px;width:1px;height:37px;background:rgba(0,0,30,0.12);"></div><div style="left:656.75px;top:242px;width:1px;height:37px;background:rgba(0,0,30,0.12);"></div><div style="left:670.50px;top:242px;width:1px;height:37px;background:rgba(0,0,30,0.12);"></div><div style="left:684.25px;top:242px;width:1px;height:37px;background:rgba(0,0,30,0.12);"></div><svg style="position:absolute;left:478px;top:225px;" width="220" height="54" viewBox="0 0 220 54"><rect x="12.5" y="48.5" width="5" height="1.8" fill="#15201e"/><rect x="30.0" y="48.5" width="5" height="1.8" fill="#15201e"/><rect x="23.6" y="42.5" width="5" height="1.8" fill="#15201e"/><rect x="51.1" y="42.5" width="5" height="1.8" fill="#15201e"/><rect x="42.5" y="24" width="2.5" height="1.8" fill="#15201e"/><rect x="3.0" y="24" width="5" height="1.8" fill="#15201e"/><rect x="67.5" y="48.5" width="5" height="1.8" fill="#15201e"/><rect x="85.0" y="48.5" width="5" height="1.8" fill="#15201e"/><rect x="78.6" y="42.5" width="5" height="1.8" fill="#15201e"/><rect x="106.1" y="42.5" width="5" height="1.8" fill="#15201e"/><rect x="97.5" y="24" width="2.5" height="1.8" fill="#15201e"/><rect x="122.5" y="48.5" width="5" height="1.8" fill="#15201e"/><rect x="140.0" y="48.5" width="5" height="1.8" fill="#15201e"/><rect x="133.6" y="42.5" width="5" height="1.8" fill="#15201e"/><rect x="161.1" y="42.5" width="5" height="1.8" fill="#15201e"/><rect x="152.5" y="24" width="2.5" height="1.8" fill="#15201e"/><rect x="113.0" y="24" width="5" height="1.8" fill="#15201e"/><rect x="177.5" y="48.5" width="5" height="1.8" fill="#15201e"/><rect x="195.0" y="48.5" width="5" height="1.8" fill="#15201e"/><rect x="188.6" y="42.5" width="5" height="1.8" fill="#15201e"/><rect x="216.1" y="42.5" width="5" height="1.8" fill="#15201e"/><rect x="207.5" y="24" width="2.5" height="1.8" fill="#15201e"/></svg><div style="left:698px;top:225px;width:220px;height:54px;background:#5cffe6;"></div><div style="left:698px;top:241px;width:220px;height:1px;background:rgba(0,0,30,0.22);"></div><div style="left:711.75px;top:242px;width:1px;height:37px;background:rgba(0,0,30,0.12);"></div><div style="left:725.50px;top:242px;width:1px;height:37px;background:rgba(0,0,30,0.12);"></div><div style="left:739.25px;top:242px;width:1px;height:37px;background:rgba(0,0,30,0.12);"></div><div style="left:753.00px;top:242px;width:1px;height:37px;background:rgba(0,0,30,0.12);"></div><div style="left:766.75px;top:242px;width:1px;height:37px;background:rgba(0,0,30,0.12);"></div><div style="left:780.50px;top:242px;width:1px;height:37px;background:rgba(0,0,30,0.12);"></div><div style="left:794.25px;top:242px;width:1px;height:37px;background:rgba(0,0,30,0.12);"></div><div style="left:808.00px;top:242px;width:1px;height:37px;background:rgba(0,0,30,0.12);"></div><div style="left:821.75px;top:242px;width:1px;height:37px;background:rgba(0,0,30,0.12);"></div><div style="left:835.50px;top:242px;width:1px;height:37px;background:rgba(0,0,30,0.12);"></div><div style="left:849.25px;top:242px;width:1px;height:37px;background:rgba(0,0,30,0.12);"></div><div style="left:863.00px;top:242px;width:1px;height:37px;background:rgba(0,0,30,0.12);"></div><div style="left:876.75px;top:242px;width:1px;height:37px;background:rgba(0,0,30,0.12);"></div><div style="left:890.50px;top:242px;width:1px;height:37px;background:rgba(0,0,30,0.12);"></div><div style="left:904.25px;top:242px;width:1px;height:37px;background:rgba(0,0,30,0.12);"></div><svg style="position:absolute;left:698px;top:225px;" width="220" height="54" viewBox="0 0 220 54"><rect x="12.5" y="48.5" width="5" height="1.8" fill="#15201e"/><rect x="30.0" y="48.5" width="5" height="1.8" fill="#15201e"/><rect x="23.6" y="42.5" width="5" height="1.8" fill="#15201e"/><rect x="51.1" y="42.5" width="5" height="1.8" fill="#15201e"/><rect x="42.5" y="24" width="2.5" height="1.8" fill="#15201e"/><rect x="3.0" y="24" width="5" height="1.8" fill="#15201e"/><rect x="67.5" y="48.5" width="5" height="1.8" fill="#15201e"/><rect x="85.0" y="48.5" width="5" height="1.8" fill="#15201e"/><rect x="78.6" y="42.5" width="5" height="1.8" fill="#15201e"/><rect x="106.1" y="42.5" width="5" height="1.8" fill="#15201e"/><rect x="97.5" y="24" width="2.5" height="1.8" fill="#15201e"/><rect x="122.5" y="48.5" width="5" height="1.8" fill="#15201e"/><rect x="140.0" y="48.5" width="5" height="1.8" fill="#15201e"/><rect x="133.6" y="42.5" width="5" height="1.8" fill="#15201e"/><rect x="161.1" y="42.5" width="5" height="1.8" fill="#15201e"/><rect x="152.5" y="24" width="2.5" height="1.8" fill="#15201e"/><rect x="113.0" y="24" width="5" height="1.8" fill="#15201e"/><rect x="177.5" y="48.5" width="5" height="1.8" fill="#15201e"/><rect x="195.0" y="48.5" width="5" height="1.8" fill="#15201e"/><rect x="188.6" y="42.5" width="5" height="1.8" fill="#15201e"/><rect x="216.1" y="42.5" width="5" height="1.8" fill="#15201e"/><rect x="207.5" y="24" width="2.5" height="1.8" fill="#15201e"/></svg><div style="left:1139px;top:225px;width:116px;height:54px;background:#5cffe6;"></div><div style="left:1139px;top:241px;width:116px;height:1px;background:rgba(0,0,30,0.22);"></div><div style="left:1151.75px;top:242px;width:1px;height:37px;background:rgba(0,0,30,0.12);"></div><div style="left:1165.50px;top:242px;width:1px;height:37px;background:rgba(0,0,30,0.12);"></div><div style="left:1179.25px;top:242px;width:1px;height:37px;background:rgba(0,0,30,0.12);"></div><div style="left:1193.00px;top:242px;width:1px;height:37px;background:rgba(0,0,30,0.12);"></div><div style="left:1206.75px;top:242px;width:1px;height:37px;background:rgba(0,0,30,0.12);"></div><div style="left:1220.50px;top:242px;width:1px;height:37px;background:rgba(0,0,30,0.12);"></div><div style="left:1234.25px;top:242px;width:1px;height:37px;background:rgba(0,0,30,0.12);"></div><div style="left:1248.00px;top:242px;width:1px;height:37px;background:rgba(0,0,30,0.12);"></div><svg style="position:absolute;left:1139px;top:225px;" width="116" height="54" viewBox="0 0 116 54"><rect x="11.5" y="48.5" width="5" height="1.8" fill="#15201e"/><rect x="29.0" y="48.5" width="5" height="1.8" fill="#15201e"/><rect x="22.6" y="42.5" width="5" height="1.8" fill="#15201e"/><rect x="50.1" y="42.5" width="5" height="1.8" fill="#15201e"/><rect x="41.5" y="24" width="2.5" height="1.8" fill="#15201e"/><rect x="2.0" y="24" width="5" height="1.8" fill="#15201e"/><rect x="66.5" y="48.5" width="5" height="1.8" fill="#15201e"/><rect x="84.0" y="48.5" width="5" height="1.8" fill="#15201e"/><rect x="77.6" y="42.5" width="5" height="1.8" fill="#15201e"/><rect x="105.1" y="42.5" width="5" height="1.8" fill="#15201e"/><rect x="96.5" y="24" width="2.5" height="1.8" fill="#15201e"/><rect x="112.0" y="24" width="5" height="1.8" fill="#15201e"/></svg><div style="left:478px;top:225px;width:1px;height:54px;background:rgba(0,60,50,0.35);"></div><div style="left:698px;top:225px;width:1px;height:54px;background:rgba(0,60,50,0.35);"></div><div style="left:451px;top:282px;width:27px;height:16px;background:#5cffe6;"></div><div style="left:671px;top:282px;width:27px;height:16px;background:#5cffe6;"></div><div style="left:891px;top:282px;width:27px;height:16px;background:#5cffe6;"></div><div style="left:478px;top:301px;width:220px;height:37px;background:#ecf7a8;"></div><div style="left:478px;top:318px;width:220px;height:1px;background:rgba(0,0,30,0.22);"></div><div style="left:491.75px;top:319px;width:1px;height:19px;background:rgba(0,0,30,0.12);"></div><div style="left:505.50px;top:319px;width:1px;height:19px;background:rgba(0,0,30,0.12);"></div><div style="left:519.25px;top:319px;width:1px;height:19px;background:rgba(0,0,30,0.12);"></div><div style="left:533.00px;top:319px;width:1px;height:19px;background:rgba(0,0,30,0.12);"></div><div style="left:546.75px;top:319px;width:1px;height:19px;background:rgba(0,0,30,0.12);"></div><div style="left:560.50px;top:319px;width:1px;height:19px;background:rgba(0,0,30,0.12);"></div><div style="left:574.25px;top:319px;width:1px;height:19px;background:rgba(0,0,30,0.12);"></div><div style="left:588.00px;top:319px;width:1px;height:19px;background:rgba(0,0,30,0.12);"></div><div style="left:601.75px;top:319px;width:1px;height:19px;background:rgba(0,0,30,0.12);"></div><div style="left:615.50px;top:319px;width:1px;height:19px;background:rgba(0,0,30,0.12);"></div><div style="left:629.25px;top:319px;width:1px;height:19px;background:rgba(0,0,30,0.12);"></div><div style="left:643.00px;top:319px;width:1px;height:19px;background:rgba(0,0,30,0.12);"></div><div style="left:656.75px;top:319px;width:1px;height:19px;background:rgba(0,0,30,0.12);"></div><div style="left:670.50px;top:319px;width:1px;height:19px;background:rgba(0,0,30,0.12);"></div><div style="left:684.25px;top:319px;width:1px;height:19px;background:rgba(0,0,30,0.12);"></div><div style="left:478px;top:324px;width:220px;height:8px;background:#232420;"></div><div style="left:258px;top:340px;width:83px;height:54px;background:#f7f07c;"></div><div style="left:258px;top:356px;width:83px;height:1px;background:rgba(0,0,30,0.22);"></div><div style="left:271.75px;top:357px;width:1px;height:37px;background:rgba(0,0,30,0.12);"></div><div style="left:285.50px;top:357px;width:1px;height:37px;background:rgba(0,0,30,0.12);"></div><div style="left:299.25px;top:357px;width:1px;height:37px;background:rgba(0,0,30,0.12);"></div><div style="left:313.00px;top:357px;width:1px;height:37px;background:rgba(0,0,30,0.12);"></div><div style="left:326.75px;top:357px;width:1px;height:37px;background:rgba(0,0,30,0.12);"></div><svg style="position:absolute;left:258px;top:340px;" width="83" height="54" viewBox="0 0 83 54"><rect x="12.5" y="44.5" width="5" height="1.8" fill="#15201e"/><rect x="30.0" y="44.5" width="5" height="1.8" fill="#15201e"/><rect x="23.6" y="41" width="5" height="1.8" fill="#15201e"/><rect x="51.1" y="41" width="5" height="1.8" fill="#15201e"/><rect x="42.5" y="32" width="2.5" height="1.8" fill="#15201e"/><rect x="3.0" y="32" width="5" height="1.8" fill="#15201e"/><rect x="67.5" y="44.5" width="5" height="1.8" fill="#15201e"/><rect x="78.6" y="41" width="5" height="1.8" fill="#15201e"/></svg><div style="left:478px;top:340px;width:110px;height:54px;background:#f7f07c;"></div><div style="left:478px;top:356px;width:110px;height:1px;background:rgba(0,0,30,0.22);"></div><div style="left:491.75px;top:357px;width:1px;height:37px;background:rgba(0,0,30,0.12);"></div><div style="left:505.50px;top:357px;width:1px;height:37px;background:rgba(0,0,30,0.12);"></div><div style="left:519.25px;top:357px;width:1px;height:37px;background:rgba(0,0,30,0.12);"></div><div style="left:533.00px;top:357px;width:1px;height:37px;background:rgba(0,0,30,0.12);"></div><div style="left:546.75px;top:357px;width:1px;height:37px;background:rgba(0,0,30,0.12);"></div><div style="left:560.50px;top:357px;width:1px;height:37px;background:rgba(0,0,30,0.12);"></div><div style="left:574.25px;top:357px;width:1px;height:37px;background:rgba(0,0,30,0.12);"></div><div style="left:478px;top:367px;width:55px;height:1.6px;background:#2a2a20;"></div><div style="left:478px;top:371px;width:55px;height:1.6px;background:#2a2a20;"></div><div style="left:478px;top:374px;width:55px;height:1.6px;background:#2a2a20;"></div><div style="left:533px;top:369px;width:27px;height:1.6px;background:#2a2a20;"></div><div style="left:560px;top:366px;width:28px;height:1.6px;background:#2a2a20;"></div><div style="left:258px;top:408px;width:660px;height:4.5px;background:#ffa26a;"></div><div style="left:478px;top:403px;width:440px;height:5px;background:#f7a06c;"></div><div style="left:478px;top:407px;width:440px;height:1px;background:rgba(0,0,0,0.12);"></div><div style="left:698px;top:398px;width:55px;height:4px;background:#ffa26a;"></div><div style="left:808px;top:398px;width:330px;height:4px;background:#ffa26a;"></div><div style="left:1138px;top:403px;width:117px;height:4px;background:#ffa26a;"></div><div style="left:271.75px;top:397px;width:1px;height:16px;background:rgba(0,0,0,0.13);"></div><div style="left:285.50px;top:397px;width:1px;height:16px;background:rgba(0,0,0,0.13);"></div><div style="left:299.25px;top:397px;width:1px;height:16px;background:rgba(0,0,0,0.13);"></div><div style="left:313.00px;top:397px;width:1px;height:16px;background:rgba(0,0,0,0.13);"></div><div style="left:326.75px;top:397px;width:1px;height:16px;background:rgba(0,0,0,0.13);"></div><div style="left:340.50px;top:397px;width:1px;height:16px;background:rgba(0,0,0,0.13);"></div><div style="left:354.25px;top:397px;width:1px;height:16px;background:rgba(0,0,0,0.13);"></div><div style="left:368.00px;top:397px;width:1px;height:16px;background:rgba(0,0,0,0.13);"></div><div style="left:381.75px;top:397px;width:1px;height:16px;background:rgba(0,0,0,0.13);"></div><div style="left:395.50px;top:397px;width:1px;height:16px;background:rgba(0,0,0,0.13);"></div><div style="left:409.25px;top:397px;width:1px;height:16px;background:rgba(0,0,0,0.13);"></div><div style="left:423.00px;top:397px;width:1px;height:16px;background:rgba(0,0,0,0.13);"></div><div style="left:436.75px;top:397px;width:1px;height:16px;background:rgba(0,0,0,0.13);"></div><div style="left:450.50px;top:397px;width:1px;height:16px;background:rgba(0,0,0,0.13);"></div><div style="left:464.25px;top:397px;width:1px;height:16px;background:rgba(0,0,0,0.13);"></div><div style="left:478.00px;top:397px;width:1px;height:16px;background:rgba(0,0,0,0.13);"></div><div style="left:491.75px;top:397px;width:1px;height:16px;background:rgba(0,0,0,0.13);"></div><div style="left:505.50px;top:397px;width:1px;height:16px;background:rgba(0,0,0,0.13);"></div><div style="left:519.25px;top:397px;width:1px;height:16px;background:rgba(0,0,0,0.13);"></div><div style="left:533.00px;top:397px;width:1px;height:16px;background:rgba(0,0,0,0.13);"></div><div style="left:546.75px;top:397px;width:1px;height:16px;background:rgba(0,0,0,0.13);"></div><div style="left:560.50px;top:397px;width:1px;height:16px;background:rgba(0,0,0,0.13);"></div><div style="left:574.25px;top:397px;width:1px;height:16px;background:rgba(0,0,0,0.13);"></div><div style="left:588.00px;top:397px;width:1px;height:16px;background:rgba(0,0,0,0.13);"></div><div style="left:601.75px;top:397px;width:1px;height:16px;background:rgba(0,0,0,0.13);"></div><div style="left:615.50px;top:397px;width:1px;height:16px;background:rgba(0,0,0,0.13);"></div><div style="left:629.25px;top:397px;width:1px;height:16px;background:rgba(0,0,0,0.13);"></div><div style="left:643.00px;top:397px;width:1px;height:16px;background:rgba(0,0,0,0.13);"></div><div style="left:656.75px;top:397px;width:1px;height:16px;background:rgba(0,0,0,0.13);"></div><div style="left:670.50px;top:397px;width:1px;height:16px;background:rgba(0,0,0,0.13);"></div><div style="left:684.25px;top:397px;width:1px;height:16px;background:rgba(0,0,0,0.13);"></div><div style="left:698.00px;top:397px;width:1px;height:16px;background:rgba(0,0,0,0.13);"></div><div style="left:711.75px;top:397px;width:1px;height:16px;background:rgba(0,0,0,0.13);"></div><div style="left:725.50px;top:397px;width:1px;height:16px;background:rgba(0,0,0,0.13);"></div><div style="left:739.25px;top:397px;width:1px;height:16px;background:rgba(0,0,0,0.13);"></div><div style="left:753.00px;top:397px;width:1px;height:16px;background:rgba(0,0,0,0.13);"></div><div style="left:766.75px;top:397px;width:1px;height:16px;background:rgba(0,0,0,0.13);"></div><div style="left:780.50px;top:397px;width:1px;height:16px;background:rgba(0,0,0,0.13);"></div><div style="left:794.25px;top:397px;width:1px;height:16px;background:rgba(0,0,0,0.13);"></div><div style="left:808.00px;top:397px;width:1px;height:16px;background:rgba(0,0,0,0.13);"></div><div style="left:821.75px;top:397px;width:1px;height:16px;background:rgba(0,0,0,0.13);"></div><div style="left:835.50px;top:397px;width:1px;height:16px;background:rgba(0,0,0,0.13);"></div><div style="left:849.25px;top:397px;width:1px;height:16px;background:rgba(0,0,0,0.13);"></div><div style="left:863.00px;top:397px;width:1px;height:16px;background:rgba(0,0,0,0.13);"></div><div style="left:876.75px;top:397px;width:1px;height:16px;background:rgba(0,0,0,0.13);"></div><div style="left:890.50px;top:397px;width:1px;height:16px;background:rgba(0,0,0,0.13);"></div><div style="left:904.25px;top:397px;width:1px;height:16px;background:rgba(0,0,0,0.13);"></div><div style="left:918.00px;top:397px;width:1px;height:16px;background:rgba(0,0,0,0.13);"></div><div style="left:931.75px;top:397px;width:1px;height:16px;background:rgba(0,0,0,0.13);"></div><div style="left:945.50px;top:397px;width:1px;height:16px;background:rgba(0,0,0,0.13);"></div><div style="left:959.25px;top:397px;width:1px;height:16px;background:rgba(0,0,0,0.13);"></div><div style="left:973.00px;top:397px;width:1px;height:16px;background:rgba(0,0,0,0.13);"></div><div style="left:986.75px;top:397px;width:1px;height:16px;background:rgba(0,0,0,0.13);"></div><div style="left:1000.50px;top:397px;width:1px;height:16px;background:rgba(0,0,0,0.13);"></div><div style="left:1014.25px;top:397px;width:1px;height:16px;background:rgba(0,0,0,0.13);"></div><div style="left:1028.00px;top:397px;width:1px;height:16px;background:rgba(0,0,0,0.13);"></div><div style="left:1041.75px;top:397px;width:1px;height:16px;background:rgba(0,0,0,0.13);"></div><div style="left:1055.50px;top:397px;width:1px;height:16px;background:rgba(0,0,0,0.13);"></div><div style="left:1069.25px;top:397px;width:1px;height:16px;background:rgba(0,0,0,0.13);"></div><div style="left:1083.00px;top:397px;width:1px;height:16px;background:rgba(0,0,0,0.13);"></div><div style="left:1096.75px;top:397px;width:1px;height:16px;background:rgba(0,0,0,0.13);"></div><div style="left:1110.50px;top:397px;width:1px;height:16px;background:rgba(0,0,0,0.13);"></div><div style="left:1124.25px;top:397px;width:1px;height:16px;background:rgba(0,0,0,0.13);"></div><div style="left:1138.00px;top:397px;width:1px;height:16px;background:rgba(0,0,0,0.13);"></div><div style="left:1151.75px;top:397px;width:1px;height:16px;background:rgba(0,0,0,0.13);"></div><div style="left:1165.50px;top:397px;width:1px;height:16px;background:rgba(0,0,0,0.13);"></div><div style="left:1179.25px;top:397px;width:1px;height:16px;background:rgba(0,0,0,0.13);"></div><div style="left:1193.00px;top:397px;width:1px;height:16px;background:rgba(0,0,0,0.13);"></div><div style="left:1206.75px;top:397px;width:1px;height:16px;background:rgba(0,0,0,0.13);"></div><div style="left:1220.50px;top:397px;width:1px;height:16px;background:rgba(0,0,0,0.13);"></div><div style="left:1234.25px;top:397px;width:1px;height:16px;background:rgba(0,0,0,0.13);"></div><div style="left:1248.00px;top:397px;width:1px;height:16px;background:rgba(0,0,0,0.13);"></div><div style="left:9px;top:416px;width:29px;height:54px;background:#ff939c;"></div><div style="left:9px;top:433px;width:29px;height:1px;background:rgba(0,0,30,0.22);"></div><div style="left:10.50px;top:434px;width:1px;height:36px;background:rgba(0,0,30,0.12);"></div><div style="left:24.25px;top:434px;width:1px;height:36px;background:rgba(0,0,30,0.12);"></div><div style="left:9px;top:442px;width:29px;height:1.3px;background:#2a1a1c;"></div><div style="left:9px;top:460.5px;width:29px;height:1.3px;background:#2a1a1c;"></div><div style="left:38px;top:416px;width:220px;height:54px;background:#ff939c;"></div><div style="left:38px;top:433px;width:220px;height:1px;background:rgba(0,0,30,0.22);"></div><div style="left:51.75px;top:434px;width:1px;height:36px;background:rgba(0,0,30,0.12);"></div><div style="left:65.50px;top:434px;width:1px;height:36px;background:rgba(0,0,30,0.12);"></div><div style="left:79.25px;top:434px;width:1px;height:36px;background:rgba(0,0,30,0.12);"></div><div style="left:93.00px;top:434px;width:1px;height:36px;background:rgba(0,0,30,0.12);"></div><div style="left:106.75px;top:434px;width:1px;height:36px;background:rgba(0,0,30,0.12);"></div><div style="left:120.50px;top:434px;width:1px;height:36px;background:rgba(0,0,30,0.12);"></div><div style="left:134.25px;top:434px;width:1px;height:36px;background:rgba(0,0,30,0.12);"></div><div style="left:148.00px;top:434px;width:1px;height:36px;background:rgba(0,0,30,0.12);"></div><div style="left:161.75px;top:434px;width:1px;height:36px;background:rgba(0,0,30,0.12);"></div><div style="left:175.50px;top:434px;width:1px;height:36px;background:rgba(0,0,30,0.12);"></div><div style="left:189.25px;top:434px;width:1px;height:36px;background:rgba(0,0,30,0.12);"></div><div style="left:203.00px;top:434px;width:1px;height:36px;background:rgba(0,0,30,0.12);"></div><div style="left:216.75px;top:434px;width:1px;height:36px;background:rgba(0,0,30,0.12);"></div><div style="left:230.50px;top:434px;width:1px;height:36px;background:rgba(0,0,30,0.12);"></div><div style="left:244.25px;top:434px;width:1px;height:36px;background:rgba(0,0,30,0.12);"></div><div style="left:38px;top:442px;width:220px;height:1.3px;background:#2a1a1c;"></div><div style="left:38px;top:460.5px;width:220px;height:1.3px;background:#2a1a1c;"></div><div style="left:478px;top:416px;width:220px;height:54px;background:#ff939c;"></div><div style="left:478px;top:433px;width:220px;height:1px;background:rgba(0,0,30,0.22);"></div><div style="left:491.75px;top:434px;width:1px;height:36px;background:rgba(0,0,30,0.12);"></div><div style="left:505.50px;top:434px;width:1px;height:36px;background:rgba(0,0,30,0.12);"></div><div style="left:519.25px;top:434px;width:1px;height:36px;background:rgba(0,0,30,0.12);"></div><div style="left:533.00px;top:434px;width:1px;height:36px;background:rgba(0,0,30,0.12);"></div><div style="left:546.75px;top:434px;width:1px;height:36px;background:rgba(0,0,30,0.12);"></div><div style="left:560.50px;top:434px;width:1px;height:36px;background:rgba(0,0,30,0.12);"></div><div style="left:574.25px;top:434px;width:1px;height:36px;background:rgba(0,0,30,0.12);"></div><div style="left:588.00px;top:434px;width:1px;height:36px;background:rgba(0,0,30,0.12);"></div><div style="left:601.75px;top:434px;width:1px;height:36px;background:rgba(0,0,30,0.12);"></div><div style="left:615.50px;top:434px;width:1px;height:36px;background:rgba(0,0,30,0.12);"></div><div style="left:629.25px;top:434px;width:1px;height:36px;background:rgba(0,0,30,0.12);"></div><div style="left:643.00px;top:434px;width:1px;height:36px;background:rgba(0,0,30,0.12);"></div><div style="left:656.75px;top:434px;width:1px;height:36px;background:rgba(0,0,30,0.12);"></div><div style="left:670.50px;top:434px;width:1px;height:36px;background:rgba(0,0,30,0.12);"></div><div style="left:684.25px;top:434px;width:1px;height:36px;background:rgba(0,0,30,0.12);"></div><div style="left:478px;top:442px;width:220px;height:1.3px;background:#2a1a1c;"></div><div style="left:478px;top:460.5px;width:220px;height:1.3px;background:#2a1a1c;"></div><div style="left:918px;top:416px;width:220px;height:54px;background:#ff939c;"></div><div style="left:918px;top:433px;width:220px;height:1px;background:rgba(0,0,30,0.22);"></div><div style="left:931.75px;top:434px;width:1px;height:36px;background:rgba(0,0,30,0.12);"></div><div style="left:945.50px;top:434px;width:1px;height:36px;background:rgba(0,0,30,0.12);"></div><div style="left:959.25px;top:434px;width:1px;height:36px;background:rgba(0,0,30,0.12);"></div><div style="left:973.00px;top:434px;width:1px;height:36px;background:rgba(0,0,30,0.12);"></div><div style="left:986.75px;top:434px;width:1px;height:36px;background:rgba(0,0,30,0.12);"></div><div style="left:1000.50px;top:434px;width:1px;height:36px;background:rgba(0,0,30,0.12);"></div><div style="left:1014.25px;top:434px;width:1px;height:36px;background:rgba(0,0,30,0.12);"></div><div style="left:1028.00px;top:434px;width:1px;height:36px;background:rgba(0,0,30,0.12);"></div><div style="left:1041.75px;top:434px;width:1px;height:36px;background:rgba(0,0,30,0.12);"></div><div style="left:1055.50px;top:434px;width:1px;height:36px;background:rgba(0,0,30,0.12);"></div><div style="left:1069.25px;top:434px;width:1px;height:36px;background:rgba(0,0,30,0.12);"></div><div style="left:1083.00px;top:434px;width:1px;height:36px;background:rgba(0,0,30,0.12);"></div><div style="left:1096.75px;top:434px;width:1px;height:36px;background:rgba(0,0,30,0.12);"></div><div style="left:1110.50px;top:434px;width:1px;height:36px;background:rgba(0,0,30,0.12);"></div><div style="left:1124.25px;top:434px;width:1px;height:36px;background:rgba(0,0,30,0.12);"></div><div style="left:918px;top:442px;width:220px;height:1.3px;background:#2a1a1c;"></div><div style="left:918px;top:460.5px;width:220px;height:1.3px;background:#2a1a1c;"></div><div style="left:38px;top:416px;width:1.5px;height:54px;background:rgba(80,20,30,0.35);"></div><div class="t b" style="left:13px;top:421px;font-size:10px;color:#222;line-height:10px;font-weight:bold;">...</div><svg style="position:absolute;left:478px;top:434px;" width="220" height="36" viewBox="0 0 220 36"><path d="M199 0 Q212 6 220 36 L220 0 Z" fill="rgba(120,40,50,0.2)"/></svg><svg style="position:absolute;left:918px;top:434px;" width="220" height="36" viewBox="0 0 220 36"><path d="M199 0 Q212 6 220 36 L220 0 Z M0 36 L3 0 L0 0 Z" fill="rgba(120,40,50,0.2)"/></svg><div style="left:38px;top:473px;width:220px;height:16px;background:#ff939c;"></div><div style="left:458px;top:473px;width:26px;height:16px;background:#ff939c;"></div><div style="left:588px;top:473px;width:110px;height:16px;background:#ff939c;"></div><div style="left:898px;top:473px;width:20px;height:16px;background:#ff939c;"></div><div style="left:1028px;top:473px;width:110px;height:16px;background:#ff939c;"></div><svg style="position:absolute;left:588px;top:473px;" width="110" height="16" viewBox="0 0 110 16"><path d="M3 16 Q18 3 36 0 L0 0 L0 16 Z" fill="rgba(120,40,50,0.2)"/><path d="M97 0 L110 16 L110 0 Z" fill="rgba(120,40,50,0.2)"/></svg><svg style="position:absolute;left:1028px;top:473px;" width="110" height="16" viewBox="0 0 110 16"><path d="M3 16 Q18 3 36 0 L0 0 L0 16 Z" fill="rgba(120,40,50,0.2)"/><path d="M97 0 Q106 4 110 16 L110 0 Z" fill="rgba(120,40,50,0.2)"/></svg><svg style="position:absolute;left:898px;top:473px;" width="20" height="16" viewBox="0 0 20 16"><path d="M0 16 L0 0 L4 0 Z M16 0 L20 16 L20 0 Z" fill="rgba(120,40,50,0.2)"/></svg><svg style="position:absolute;left:38px;top:473px;" width="220" height="16" viewBox="0 0 220 16"><path d="M0 16 L3 0 L0 0 Z M217 0 L220 16 L220 0 Z" fill="rgba(120,40,50,0.2)"/></svg><svg style="position:absolute;left:458px;top:473px;" width="26" height="16" viewBox="0 0 26 16"><path d="M0 16 L3 0 L0 0 Z M23 0 L26 16 L26 0 Z" fill="rgba(120,40,50,0.2)"/></svg><div style="left:203px;top:493px;width:55px;height:16px;background:#d96ce5;"></div><svg style="position:absolute;left:203px;top:493px;" width="55" height="16" viewBox="0 0 55 16"><path d="M0 16 L3 0 L0 0 Z M52 0 L55 16 L55 0 Z" fill="rgba(60,0,80,0.25)"/></svg><div style="left:588px;top:493px;width:110px;height:16px;background:#d96ce5;"></div><svg style="position:absolute;left:588px;top:493px;" width="110" height="16" viewBox="0 0 110 16"><path d="M0 16 L3 0 L0 0 Z M107 0 L110 16 L110 0 Z" fill="rgba(60,0,80,0.25)"/></svg><div style="left:1028px;top:493px;width:110px;height:16px;background:#d96ce5;"></div><svg style="position:absolute;left:1028px;top:493px;" width="110" height="16" viewBox="0 0 110 16"><path d="M0 16 L3 0 L0 0 Z M107 0 L110 16 L110 0 Z" fill="rgba(60,0,80,0.25)"/></svg><div style="left:38px;top:513px;width:220px;height:16px;background:#d96ce5;"></div><div style="left:478px;top:513px;width:220px;height:16px;background:#d96ce5;"></div><div style="left:650px;top:91px;width:1px;height:484px;background:#f0f0f0;"></div><div style="left:650px;top:94px;width:1px;height:53px;background:#0a0a0a;"></div><div style="left:650px;top:150px;width:1px;height:53px;background:#0a0a0a;"></div><div style="left:650px;top:226px;width:1px;height:53px;background:#0a0a0a;"></div><div style="left:650px;top:302px;width:1px;height:36px;background:#0a0a0a;"></div><div style="left:650px;top:417px;width:1px;height:53px;background:#0a0a0a;"></div><div style="left:650px;top:474px;width:1px;height:15px;background:#0a0a0a;"></div><div style="left:650px;top:494px;width:1px;height:15px;background:#0a0a0a;"></div><div style="left:650px;top:514px;width:1px;height:15px;background:#0a0a0a;"></div><div style="left:38.0px;top:60px;width:1px;height:7px;background:#8a8a8a;"></div><div style="left:38.0px;top:60px;width:2px;height:1px;background:#8a8a8a;"></div><div class="t" style="left:42.0px;top:55.5px;font-size:11px;line-height:12px;color:#b4b4b4;">9</div><div style="left:65.5px;top:65px;width:1.5px;height:2px;background:#777;"></div><div style="left:93.0px;top:60px;width:1px;height:7px;background:#8a8a8a;"></div><div style="left:93.0px;top:60px;width:2px;height:1px;background:#8a8a8a;"></div><div class="t" style="left:97.0px;top:55.5px;font-size:11px;line-height:12px;color:#b4b4b4;">11</div><div style="left:120.5px;top:65px;width:1.5px;height:2px;background:#777;"></div><div style="left:148.0px;top:60px;width:1px;height:7px;background:#8a8a8a;"></div><div style="left:148.0px;top:60px;width:2px;height:1px;background:#8a8a8a;"></div><div class="t" style="left:152.0px;top:55.5px;font-size:11px;line-height:12px;color:#b4b4b4;">13</div><div style="left:175.5px;top:65px;width:1.5px;height:2px;background:#777;"></div><div style="left:203.0px;top:60px;width:1px;height:7px;background:#8a8a8a;"></div><div style="left:203.0px;top:60px;width:2px;height:1px;background:#8a8a8a;"></div><div class="t" style="left:207.0px;top:55.5px;font-size:11px;line-height:12px;color:#b4b4b4;">15</div><div style="left:230.5px;top:65px;width:1.5px;height:2px;background:#777;"></div><div style="left:258.0px;top:60px;width:1px;height:7px;background:#8a8a8a;"></div><div style="left:258.0px;top:60px;width:2px;height:1px;background:#8a8a8a;"></div><div class="t" style="left:262.0px;top:55.5px;font-size:11px;line-height:12px;color:#b4b4b4;">17</div><div style="left:285.5px;top:65px;width:1.5px;height:2px;background:#777;"></div><div style="left:313.0px;top:60px;width:1px;height:7px;background:#8a8a8a;"></div><div style="left:313.0px;top:60px;width:2px;height:1px;background:#8a8a8a;"></div><div class="t" style="left:317.0px;top:55.5px;font-size:11px;line-height:12px;color:#b4b4b4;">19</div><div style="left:340.5px;top:65px;width:1.5px;height:2px;background:#777;"></div><div style="left:368.0px;top:60px;width:1px;height:7px;background:#8a8a8a;"></div><div style="left:368.0px;top:60px;width:2px;height:1px;background:#8a8a8a;"></div><div class="t" style="left:372.0px;top:55.5px;font-size:11px;line-height:12px;color:#b4b4b4;">21</div><div style="left:395.5px;top:65px;width:1.5px;height:2px;background:#777;"></div><div style="left:423.0px;top:60px;width:1px;height:7px;background:#8a8a8a;"></div><div style="left:423.0px;top:60px;width:2px;height:1px;background:#8a8a8a;"></div><div class="t" style="left:427.0px;top:55.5px;font-size:11px;line-height:12px;color:#b4b4b4;">23</div><div style="left:450.5px;top:65px;width:1.5px;height:2px;background:#777;"></div><div style="left:478.0px;top:60px;width:1px;height:7px;background:#8a8a8a;"></div><div style="left:478.0px;top:60px;width:2px;height:1px;background:#8a8a8a;"></div><div class="t" style="left:482.0px;top:55.5px;font-size:11px;line-height:12px;color:#b4b4b4;">25</div><div style="left:505.5px;top:65px;width:1.5px;height:2px;background:#777;"></div><div style="left:533.0px;top:60px;width:1px;height:7px;background:#8a8a8a;"></div><div style="left:533.0px;top:60px;width:2px;height:1px;background:#8a8a8a;"></div><div class="t" style="left:537.0px;top:55.5px;font-size:11px;line-height:12px;color:#b4b4b4;">27</div><div style="left:560.5px;top:65px;width:1.5px;height:2px;background:#777;"></div><div style="left:588.0px;top:60px;width:1px;height:7px;background:#8a8a8a;"></div><div style="left:588.0px;top:60px;width:2px;height:1px;background:#8a8a8a;"></div><div class="t" style="left:592.0px;top:55.5px;font-size:11px;line-height:12px;color:#b4b4b4;">29</div><div style="left:615.5px;top:65px;width:1.5px;height:2px;background:#777;"></div><div style="left:643.0px;top:60px;width:1px;height:7px;background:#8a8a8a;"></div><div style="left:643.0px;top:60px;width:2px;height:1px;background:#8a8a8a;"></div><div class="t" style="left:647.0px;top:55.5px;font-size:11px;line-height:12px;color:#b4b4b4;">31</div><div style="left:670.5px;top:65px;width:1.5px;height:2px;background:#777;"></div><div style="left:698.0px;top:60px;width:1px;height:7px;background:#8a8a8a;"></div><div style="left:698.0px;top:60px;width:2px;height:1px;background:#8a8a8a;"></div><div class="t" style="left:702.0px;top:55.5px;font-size:11px;line-height:12px;color:#b4b4b4;">33</div><div style="left:725.5px;top:65px;width:1.5px;height:2px;background:#777;"></div><div style="left:753.0px;top:60px;width:1px;height:7px;background:#8a8a8a;"></div><div style="left:753.0px;top:60px;width:2px;height:1px;background:#8a8a8a;"></div><div class="t" style="left:757.0px;top:55.5px;font-size:11px;line-height:12px;color:#b4b4b4;">35</div><div style="left:780.5px;top:65px;width:1.5px;height:2px;background:#777;"></div><div style="left:808.0px;top:60px;width:1px;height:7px;background:#8a8a8a;"></div><div style="left:808.0px;top:60px;width:2px;height:1px;background:#8a8a8a;"></div><div class="t" style="left:812.0px;top:55.5px;font-size:11px;line-height:12px;color:#b4b4b4;">37</div><div style="left:835.5px;top:65px;width:1.5px;height:2px;background:#777;"></div><div style="left:863.0px;top:60px;width:1px;height:7px;background:#8a8a8a;"></div><div style="left:863.0px;top:60px;width:2px;height:1px;background:#8a8a8a;"></div><div class="t" style="left:867.0px;top:55.5px;font-size:11px;line-height:12px;color:#b4b4b4;">39</div><div style="left:890.5px;top:65px;width:1.5px;height:2px;background:#777;"></div><div style="left:918.0px;top:60px;width:1px;height:7px;background:#8a8a8a;"></div><div style="left:918.0px;top:60px;width:2px;height:1px;background:#8a8a8a;"></div><div class="t" style="left:922.0px;top:55.5px;font-size:11px;line-height:12px;color:#b4b4b4;">41</div><div style="left:945.5px;top:65px;width:1.5px;height:2px;background:#777;"></div><div style="left:973.0px;top:60px;width:1px;height:7px;background:#8a8a8a;"></div><div style="left:973.0px;top:60px;width:2px;height:1px;background:#8a8a8a;"></div><div class="t" style="left:977.0px;top:55.5px;font-size:11px;line-height:12px;color:#b4b4b4;">43</div><div style="left:1000.5px;top:65px;width:1.5px;height:2px;background:#777;"></div><div style="left:1028.0px;top:60px;width:1px;height:7px;background:#8a8a8a;"></div><div style="left:1028.0px;top:60px;width:2px;height:1px;background:#8a8a8a;"></div><div class="t" style="left:1032.0px;top:55.5px;font-size:11px;line-height:12px;color:#b4b4b4;">45</div><div style="left:1055.5px;top:65px;width:1.5px;height:2px;background:#777;"></div><div style="left:1083.0px;top:60px;width:1px;height:7px;background:#8a8a8a;"></div><div style="left:1083.0px;top:60px;width:2px;height:1px;background:#8a8a8a;"></div><div class="t" style="left:1087.0px;top:55.5px;font-size:11px;line-height:12px;color:#b4b4b4;">47</div><div style="left:1110.5px;top:65px;width:1.5px;height:2px;background:#777;"></div><div style="left:1138.0px;top:60px;width:1px;height:7px;background:#8a8a8a;"></div><div style="left:1138.0px;top:60px;width:2px;height:1px;background:#8a8a8a;"></div><div class="t" style="left:1142.0px;top:55.5px;font-size:11px;line-height:12px;color:#b4b4b4;">49</div><div style="left:1165.5px;top:65px;width:1.5px;height:2px;background:#777;"></div><div style="left:1193.0px;top:60px;width:1px;height:7px;background:#8a8a8a;"></div><div style="left:1193.0px;top:60px;width:2px;height:1px;background:#8a8a8a;"></div><div class="t" style="left:1197.0px;top:55.5px;font-size:11px;line-height:12px;color:#b4b4b4;">51</div><div style="left:1220.5px;top:65px;width:1.5px;height:2px;background:#777;"></div><div style="left:1248.0px;top:65px;width:1.5px;height:2px;background:#777;"></div><div style="left:1248px;top:60px;width:1px;height:7px;background:#8a8a8a;"></div><svg style="position:absolute;left:477px;top:66px;" width="224" height="13" viewBox="0 0 224 13"><rect x="1.5" y="0.5" width="220" height="11" fill="none" stroke="#a8a8a8" stroke-width="1"/><path d="M2 1 L9 6 L2 11" fill="none" stroke="#a8a8a8" stroke-width="1"/><path d="M221 1 L214 6 L221 11" fill="none" stroke="#a8a8a8" stroke-width="1"/></svg><svg style="position:absolute;left:474px;top:85px;" width="10" height="6" viewBox="0 0 10 6"><path d="M0.5 0.5 L8.5 0.5 L4.5 5.5 Z" fill="#1cc6e2"/></svg><div style="left:9px;top:576px;width:1246px;height:22px;background:#363636;"></div><div style="left:19.5px;top:577px;width:1px;height:9px;background:#8a8a8a;"></div><div style="left:19.5px;top:586px;width:2px;height:1px;background:#8a8a8a;"></div><div class="t" style="left:22.0px;top:578px;font-size:11px;line-height:12px;color:#b4b4b4;">0:10</div><div style="left:39.6px;top:577px;width:1.5px;height:2px;background:#6a6a6a;"></div><div style="left:59.6px;top:577px;width:1.5px;height:2px;background:#6a6a6a;"></div><div style="left:79.7px;top:577px;width:1.5px;height:2px;background:#6a6a6a;"></div><div style="left:99.7px;top:577px;width:1.5px;height:2px;background:#6a6a6a;"></div><div style="left:119.8px;top:577px;width:1px;height:9px;background:#8a8a8a;"></div><div style="left:119.8px;top:586px;width:2px;height:1px;background:#8a8a8a;"></div><div class="t" style="left:122.3px;top:578px;font-size:11px;line-height:12px;color:#b4b4b4;">0:15</div><div style="left:139.8px;top:577px;width:1.5px;height:2px;background:#6a6a6a;"></div><div style="left:159.9px;top:577px;width:1.5px;height:2px;background:#6a6a6a;"></div><div style="left:179.9px;top:577px;width:1.5px;height:2px;background:#6a6a6a;"></div><div style="left:200.0px;top:577px;width:1.5px;height:2px;background:#6a6a6a;"></div><div style="left:220.0px;top:577px;width:1px;height:9px;background:#8a8a8a;"></div><div style="left:220.0px;top:586px;width:2px;height:1px;background:#8a8a8a;"></div><div class="t" style="left:222.5px;top:578px;font-size:11px;line-height:12px;color:#b4b4b4;">0:20</div><div style="left:240.1px;top:577px;width:1.5px;height:2px;background:#6a6a6a;"></div><div style="left:260.1px;top:577px;width:1.5px;height:2px;background:#6a6a6a;"></div><div style="left:280.2px;top:577px;width:1.5px;height:2px;background:#6a6a6a;"></div><div style="left:300.3px;top:577px;width:1.5px;height:2px;background:#6a6a6a;"></div><div style="left:320.3px;top:577px;width:1px;height:9px;background:#8a8a8a;"></div><div style="left:320.3px;top:586px;width:2px;height:1px;background:#8a8a8a;"></div><div class="t" style="left:322.8px;top:578px;font-size:11px;line-height:12px;color:#b4b4b4;">0:25</div><div style="left:340.4px;top:577px;width:1.5px;height:2px;background:#6a6a6a;"></div><div style="left:360.4px;top:577px;width:1.5px;height:2px;background:#6a6a6a;"></div><div style="left:380.5px;top:577px;width:1.5px;height:2px;background:#6a6a6a;"></div><div style="left:400.5px;top:577px;width:1.5px;height:2px;background:#6a6a6a;"></div><div style="left:420.6px;top:577px;width:1px;height:9px;background:#8a8a8a;"></div><div style="left:420.6px;top:586px;width:2px;height:1px;background:#8a8a8a;"></div><div class="t" style="left:423.1px;top:578px;font-size:11px;line-height:12px;color:#b4b4b4;">0:30</div><div style="left:440.6px;top:577px;width:1.5px;height:2px;background:#6a6a6a;"></div><div style="left:460.7px;top:577px;width:1.5px;height:2px;background:#6a6a6a;"></div><div style="left:480.7px;top:577px;width:1.5px;height:2px;background:#6a6a6a;"></div><div style="left:500.8px;top:577px;width:1.5px;height:2px;background:#6a6a6a;"></div><div style="left:520.8px;top:577px;width:1px;height:9px;background:#8a8a8a;"></div><div style="left:520.8px;top:586px;width:2px;height:1px;background:#8a8a8a;"></div><div class="t" style="left:523.3px;top:578px;font-size:11px;line-height:12px;color:#b4b4b4;">0:35</div><div style="left:540.9px;top:577px;width:1.5px;height:2px;background:#6a6a6a;"></div><div style="left:561.0px;top:577px;width:1.5px;height:2px;background:#6a6a6a;"></div><div style="left:581.0px;top:577px;width:1.5px;height:2px;background:#6a6a6a;"></div><div style="left:601.1px;top:577px;width:1.5px;height:2px;background:#6a6a6a;"></div><div style="left:621.1px;top:577px;width:1px;height:9px;background:#8a8a8a;"></div><div style="left:621.1px;top:586px;width:2px;height:1px;background:#8a8a8a;"></div><div class="t" style="left:623.6px;top:578px;font-size:11px;line-height:12px;color:#b4b4b4;">0:40</div><div style="left:641.2px;top:577px;width:1.5px;height:2px;background:#6a6a6a;"></div><div style="left:661.2px;top:577px;width:1.5px;height:2px;background:#6a6a6a;"></div><div style="left:681.3px;top:577px;width:1.5px;height:2px;background:#6a6a6a;"></div><div style="left:701.3px;top:577px;width:1.5px;height:2px;background:#6a6a6a;"></div><div style="left:721.4px;top:577px;width:1px;height:9px;background:#8a8a8a;"></div><div style="left:721.4px;top:586px;width:2px;height:1px;background:#8a8a8a;"></div><div class="t" style="left:723.9px;top:578px;font-size:11px;line-height:12px;color:#b4b4b4;">0:45</div><div style="left:741.4px;top:577px;width:1.5px;height:2px;background:#6a6a6a;"></div><div style="left:761.5px;top:577px;width:1.5px;height:2px;background:#6a6a6a;"></div><div style="left:781.6px;top:577px;width:1.5px;height:2px;background:#6a6a6a;"></div><div style="left:801.6px;top:577px;width:1.5px;height:2px;background:#6a6a6a;"></div><div style="left:821.7px;top:577px;width:1px;height:9px;background:#8a8a8a;"></div><div style="left:821.7px;top:586px;width:2px;height:1px;background:#8a8a8a;"></div><div class="t" style="left:824.2px;top:578px;font-size:11px;line-height:12px;color:#b4b4b4;">0:50</div><div style="left:841.7px;top:577px;width:1.5px;height:2px;background:#6a6a6a;"></div><div style="left:861.8px;top:577px;width:1.5px;height:2px;background:#6a6a6a;"></div><div style="left:881.8px;top:577px;width:1.5px;height:2px;background:#6a6a6a;"></div><div style="left:901.9px;top:577px;width:1.5px;height:2px;background:#6a6a6a;"></div><div style="left:921.9px;top:577px;width:1px;height:9px;background:#8a8a8a;"></div><div style="left:921.9px;top:586px;width:2px;height:1px;background:#8a8a8a;"></div><div class="t" style="left:924.4px;top:578px;font-size:11px;line-height:12px;color:#b4b4b4;">0:55</div><div style="left:942.0px;top:577px;width:1.5px;height:2px;background:#6a6a6a;"></div><div style="left:962.0px;top:577px;width:1.5px;height:2px;background:#6a6a6a;"></div><div style="left:982.1px;top:577px;width:1.5px;height:2px;background:#6a6a6a;"></div><div style="left:1002.1px;top:577px;width:1.5px;height:2px;background:#6a6a6a;"></div><div style="left:1022.2px;top:577px;width:1px;height:9px;background:#8a8a8a;"></div><div style="left:1022.2px;top:586px;width:2px;height:1px;background:#8a8a8a;"></div><div class="t" style="left:1024.7px;top:578px;font-size:11px;line-height:12px;color:#b4b4b4;">1:00</div><div style="left:1042.3px;top:577px;width:1.5px;height:2px;background:#6a6a6a;"></div><div style="left:1062.3px;top:577px;width:1.5px;height:2px;background:#6a6a6a;"></div><div style="left:1082.4px;top:577px;width:1.5px;height:2px;background:#6a6a6a;"></div><div style="left:1102.4px;top:577px;width:1.5px;height:2px;background:#6a6a6a;"></div><div style="left:1122.5px;top:577px;width:1px;height:9px;background:#8a8a8a;"></div><div style="left:1122.5px;top:586px;width:2px;height:1px;background:#8a8a8a;"></div><div class="t" style="left:1125.0px;top:578px;font-size:11px;line-height:12px;color:#b4b4b4;">1:05</div><div style="left:1142.5px;top:577px;width:1.5px;height:2px;background:#6a6a6a;"></div><div style="left:1162.6px;top:577px;width:1.5px;height:2px;background:#6a6a6a;"></div><div style="left:1182.6px;top:577px;width:1.5px;height:2px;background:#6a6a6a;"></div><div style="left:1202.7px;top:577px;width:1.5px;height:2px;background:#6a6a6a;"></div><div style="left:1222.7px;top:577px;width:1px;height:9px;background:#8a8a8a;"></div><div style="left:1222.7px;top:586px;width:2px;height:1px;background:#8a8a8a;"></div><div class="t" style="left:1225.2px;top:578px;font-size:11px;line-height:12px;color:#b4b4b4;">1:10</div><div style="left:1242.8px;top:577px;width:1.5px;height:2px;background:#6a6a6a;"></div><svg style="position:absolute;left:474px;top:576px;" width="10" height="6" viewBox="0 0 10 6"><path d="M0.5 5.5 L8.5 5.5 L4.5 0.5 Z" fill="#1cc6e2"/></svg><div style="left:1259px;top:54px;width:31px;height:14px;background:#232323;border-radius:7px;"></div><div class="t" style="left:1259px;top:54px;font-size:11px;color:#cfcfcf;width:31px;text-align:center;line-height:14px;">Set</div><div style="left:1301px;top:54px;width:24px;height:14px;background:#232323;"></div><svg style="position:absolute;left:1301px;top:54px;" width="24" height="14" viewBox="0 0 24 14"><circle cx="9" cy="10" r="1.6" fill="#ccc"/><circle cx="15" cy="4" r="1.6" fill="#ccc"/><path d="M9 10 L15 4" stroke="#ccc" stroke-width="1.4"/></svg><div style="left:1329px;top:54px;width:24px;height:14px;background:#232323;"></div><svg style="position:absolute;left:1329px;top:54px;" width="24" height="14" viewBox="0 0 24 14"><rect x="8" y="6" width="8" height="6" fill="#ccc"/><path d="M9.5 6.5 V5 Q12 1.5 14.5 5 V6.5" stroke="#ccc" stroke-width="1.3" fill="none"/></svg><div style="left:1259.5px;top:73px;width:13px;height:13px;background:#232323;border-radius:50%;"></div><svg style="position:absolute;left:1259.5px;top:73px;" width="13" height="13" viewBox="0 0 13 13"><path d="M8 3.5 L4.5 6.5 L8 9.5 M4.5 6.5 H10" stroke="#ccc" stroke-width="1.5" fill="none"/></svg><div style="left:1276.5px;top:73px;width:13px;height:13px;background:#232323;border-radius:50%;"></div><svg style="position:absolute;left:1276.5px;top:73px;" width="13" height="13" viewBox="0 0 13 13"><path d="M5 3.5 L8.5 6.5 L5 9.5 M8.5 6.5 H3" stroke="#ccc" stroke-width="1.5" fill="none"/></svg><div style="left:1257px;top:93px;width:108px;height:54px;background:#93a7ff;"></div><div style="left:1255px;top:93px;width:2px;height:54px;background:#1c1c1c;"></div><div style="left:1365px;top:93px;width:1px;height:54px;background:#1c1c1c;"></div><div class="t b" style="left:1281px;top:95.5px;font-size:10.2px;line-height:14px;font-weight:bold;color:rgba(0,0,0,0.8);letter-spacing:0.1px;">Drums</div><svg style="position:absolute;left:1260px;top:95px;" width="14" height="14" viewBox="0 0 14 14"><circle cx="7" cy="7" r="6.1" fill="none" stroke="#2a2a3a" stroke-width="1.1"/><path d="M3.8 5.2 L10.2 5.2 L7 9.6 Z" fill="#2a2a3a"/></svg><div style="left:1370px;top:96px;width:46px;height:12px;background:#ffad56;box-shadow:0 0 0 1px #1e1e1e;"></div><div class="t" style="left:1370px;top:96px;width:46px;text-align:center;font-size:11px;line-height:12px;font-weight:bold;color:#111;">1</div><div style="left:1421px;top:96px;width:22px;height:12px;background:#232323;"></div><div class="t" style="left:1421px;top:96px;width:22px;text-align:center;font-size:11px;line-height:12px;color:#cfcfcf;">S</div><div style="left:1447px;top:96px;width:22px;height:12px;background:#232323;"></div><svg style="position:absolute;left:1447px;top:96px;" width="22" height="12" viewBox="0 0 22 12"><circle cx="11" cy="6" r="4" fill="#cfcfcf"/><path d="M11 3.2 V6.3 L9 7.8" stroke="#222" stroke-width="1.2" fill="none"/></svg><div style="left:1370px;top:113px;width:46px;height:12px;background:#232323;"></div><div style="left:1370px;top:113px;width:37px;height:12px;background:#0e7384;"></div><div class="t" style="left:1370px;top:113px;width:46px;text-align:center;font-size:11px;line-height:12px;color:#d8d8d8;">-1.0</div><div style="left:1421px;top:113px;width:48px;height:12px;background:#232323;"></div><div class="t" style="left:1421px;top:113px;width:48px;text-align:center;font-size:11px;line-height:12px;color:#cfcfcf;">C</div><div style="left:1370px;top:130px;width:30px;height:13px;background:#232323;"></div><div style="left:1403px;top:130px;width:30px;height:13px;background:#232323;"></div><div class="t" style="left:1370px;top:130px;width:30px;text-align:center;font-size:11px;line-height:13px;color:#cfcfcf;">-52.8</div><div class="t" style="left:1403px;top:130px;width:30px;text-align:center;font-size:11px;line-height:13px;color:#cfcfcf;">-<span style="font-size:15px;line-height:10px;">&infin;</span></div><div style="left:1473px;top:95px;width:3px;height:50px;background:#1a1a1a;"></div><div style="left:1477px;top:95px;width:3px;height:50px;background:#1a1a1a;"></div><div style="left:1473px;top:120.5px;width:3px;height:24.5px;background:#16ee58;"></div><div style="left:1477px;top:120.5px;width:3px;height:24.5px;background:#16ee58;"></div><div style="left:1473px;top:105.5px;width:3px;height:1.5px;background:#f0a020;"></div><div style="left:1477px;top:106.0px;width:3px;height:1.5px;background:#f0a020;"></div><div style="left:1473px;top:99px;width:7px;height:1px;background:#363636;"></div><div style="left:1257px;top:149px;width:108px;height:54px;background:#93a7ff;"></div><div style="left:1255px;top:149px;width:2px;height:54px;background:#1c1c1c;"></div><div style="left:1365px;top:149px;width:1px;height:54px;background:#1c1c1c;"></div><div class="t b" style="left:1281px;top:151.5px;font-size:10.2px;line-height:14px;font-weight:bold;color:rgba(0,0,0,0.8);letter-spacing:0.1px;">Breaks</div><svg style="position:absolute;left:1260px;top:151px;" width="14" height="14" viewBox="0 0 14 14"><circle cx="7" cy="7" r="6.1" fill="none" stroke="#2a2a3a" stroke-width="1.1"/><path d="M3.8 5.2 L10.2 5.2 L7 9.6 Z" fill="#2a2a3a"/></svg><div style="left:1370px;top:152px;width:46px;height:12px;background:#ffad56;box-shadow:0 0 0 1px #1e1e1e;"></div><div class="t" style="left:1370px;top:152px;width:46px;text-align:center;font-size:11px;line-height:12px;font-weight:bold;color:#111;">2</div><div style="left:1421px;top:152px;width:22px;height:12px;background:#232323;"></div><div class="t" style="left:1421px;top:152px;width:22px;text-align:center;font-size:11px;line-height:12px;color:#cfcfcf;">S</div><div style="left:1447px;top:152px;width:22px;height:12px;background:#232323;"></div><svg style="position:absolute;left:1447px;top:152px;" width="22" height="12" viewBox="0 0 22 12"><circle cx="11" cy="6" r="3.8" fill="#777"/></svg><div style="left:1370px;top:169px;width:46px;height:12px;background:#232323;"></div><div style="left:1370px;top:169px;width:30px;height:12px;background:#0e7384;"></div><div class="t" style="left:1370px;top:169px;width:46px;text-align:center;font-size:11px;line-height:12px;color:#d8d8d8;">-9.4</div><div style="left:1421px;top:169px;width:48px;height:12px;background:#232323;"></div><div class="t" style="left:1421px;top:169px;width:48px;text-align:center;font-size:11px;line-height:12px;color:#cfcfcf;">C</div><div style="left:1370px;top:186px;width:30px;height:13px;background:#232323;"></div><div style="left:1403px;top:186px;width:30px;height:13px;background:#232323;"></div><div class="t" style="left:1370px;top:186px;width:30px;text-align:center;font-size:11px;line-height:13px;color:#cfcfcf;">-<span style="font-size:15px;line-height:10px;">&infin;</span></div><div class="t" style="left:1403px;top:186px;width:30px;text-align:center;font-size:11px;line-height:13px;color:#cfcfcf;">-<span style="font-size:15px;line-height:10px;">&infin;</span></div><div style="left:1473px;top:151px;width:3px;height:50px;background:#1a1a1a;"></div><div style="left:1477px;top:151px;width:3px;height:50px;background:#1a1a1a;"></div><div style="left:1473px;top:177.0px;width:3px;height:24.0px;background:#16ee58;"></div><div style="left:1477px;top:177.0px;width:3px;height:24.0px;background:#16ee58;"></div><div style="left:1473px;top:164px;width:3px;height:13px;background:linear-gradient(#b0b020,#40b040);"></div><div style="left:1477px;top:164px;width:3px;height:13px;background:linear-gradient(#b0b020,#40b040);"></div><div style="left:1473px;top:164.0px;width:3px;height:1.5px;background:#e0c020;"></div><div style="left:1477px;top:164.5px;width:3px;height:1.5px;background:#e0c020;"></div><div style="left:1473px;top:155px;width:7px;height:1px;background:#363636;"></div><div style="left:1257px;top:205px;width:108px;height:18px;background:#8ac6fa;"></div><div style="left:1255px;top:205px;width:2px;height:18px;background:#1c1c1c;"></div><div style="left:1365px;top:205px;width:1px;height:18px;background:#1c1c1c;"></div><div class="t b" style="left:1281px;top:207.5px;font-size:10.2px;line-height:14px;font-weight:bold;color:rgba(0,0,0,0.8);letter-spacing:0.1px;">Percussion</div><svg style="position:absolute;left:1260px;top:207px;" width="14" height="14" viewBox="0 0 14 14"><circle cx="7" cy="7" r="6.1" fill="none" stroke="#2a2a3a" stroke-width="1.1"/><path d="M4.6 4.9 H9.4 M4.6 7 H9.4 M4.6 9.1 H9.4" stroke="#2a2a3a" stroke-width="1.1"/></svg><div style="left:1370px;top:208px;width:46px;height:12px;background:#ffad56;box-shadow:0 0 0 1px #1e1e1e;"></div><div class="t" style="left:1370px;top:208px;width:46px;text-align:center;font-size:11px;line-height:12px;font-weight:bold;color:#111;">3</div><div style="left:1421px;top:208px;width:22px;height:12px;background:#232323;"></div><div class="t" style="left:1421px;top:208px;width:22px;text-align:center;font-size:11px;line-height:12px;color:#cfcfcf;">S</div><div style="left:1473px;top:207px;width:3px;height:14px;background:#1a1a1a;"></div><div style="left:1477px;top:207px;width:3px;height:14px;background:#1a1a1a;"></div><div style="left:1473px;top:213.3px;width:3px;height:7.699999999999989px;background:#16ee58;"></div><div style="left:1477px;top:213.3px;width:3px;height:7.699999999999989px;background:#16ee58;"></div><div style="left:1473px;top:211.2px;width:3px;height:1.5px;background:#20e060;"></div><div style="left:1477px;top:211.7px;width:3px;height:1.5px;background:#20e060;"></div><div style="left:1473px;top:211px;width:7px;height:1px;background:#363636;"></div><div style="left:1257px;top:225px;width:108px;height:54px;background:#5cffe6;"></div><div style="left:1255px;top:225px;width:2px;height:54px;background:#1c1c1c;"></div><div style="left:1365px;top:225px;width:1px;height:54px;background:#1c1c1c;"></div><div class="t b" style="left:1281px;top:227.5px;font-size:10.2px;line-height:14px;font-weight:bold;color:rgba(0,0,0,0.8);letter-spacing:0.1px;">Bass</div><svg style="position:absolute;left:1260px;top:227px;" width="14" height="14" viewBox="0 0 14 14"><circle cx="7" cy="7" r="6.1" fill="none" stroke="#2a2a3a" stroke-width="1.1"/><path d="M3.8 5.2 L10.2 5.2 L7 9.6 Z" fill="#2a2a3a"/></svg><div style="left:1366px;top:225px;width:125px;height:54px;background:#3c3c3c;"></div><div style="left:1370px;top:228px;width:46px;height:12px;background:#ffad56;box-shadow:0 0 0 1px #1e1e1e;"></div><div class="t" style="left:1370px;top:228px;width:46px;text-align:center;font-size:11px;line-height:12px;font-weight:bold;color:#111;">8</div><div style="left:1421px;top:228px;width:22px;height:12px;background:#232323;"></div><div class="t" style="left:1421px;top:228px;width:22px;text-align:center;font-size:11px;line-height:12px;color:#cfcfcf;">S</div><div style="left:1447px;top:228px;width:22px;height:12px;background:#232323;"></div><svg style="position:absolute;left:1447px;top:228px;" width="22" height="12" viewBox="0 0 22 12"><circle cx="11" cy="6" r="4" fill="#cfcfcf"/><path d="M11 3.2 V6.3 L9 7.8" stroke="#222" stroke-width="1.2" fill="none"/></svg><div style="left:1370px;top:245px;width:46px;height:12px;background:#232323;"></div><div style="left:1370px;top:245px;width:32px;height:12px;background:#0e7384;"></div><div class="t" style="left:1370px;top:245px;width:46px;text-align:center;font-size:11px;line-height:12px;color:#d8d8d8;">-7.7</div><div style="left:1421px;top:245px;width:48px;height:12px;background:#232323;"></div><div class="t" style="left:1421px;top:245px;width:48px;text-align:center;font-size:11px;line-height:12px;color:#cfcfcf;">C</div><div style="left:1370px;top:262px;width:30px;height:13px;background:#232323;"></div><div style="left:1403px;top:262px;width:30px;height:13px;background:#232323;"></div><div class="t" style="left:1370px;top:262px;width:30px;text-align:center;font-size:11px;line-height:13px;color:#cfcfcf;">-<span style="font-size:15px;line-height:10px;">&infin;</span></div><div class="t" style="left:1403px;top:262px;width:30px;text-align:center;font-size:11px;line-height:13px;color:#cfcfcf;">-<span style="font-size:15px;line-height:10px;">&infin;</span></div><div style="left:1473px;top:227px;width:3px;height:50px;background:#1a1a1a;"></div><div style="left:1477px;top:227px;width:3px;height:50px;background:#1a1a1a;"></div><div style="left:1473px;top:249.0px;width:3px;height:28.0px;background:#16ee58;"></div><div style="left:1477px;top:249.0px;width:3px;height:28.0px;background:#16ee58;"></div><div style="left:1473px;top:241.5px;width:3px;height:1.5px;background:#e0b020;"></div><div style="left:1477px;top:242.0px;width:3px;height:1.5px;background:#e0b020;"></div><div style="left:1473px;top:231px;width:7px;height:1px;background:#363636;"></div><div style="left:1257px;top:281px;width:108px;height:18px;background:#5cffe6;"></div><div style="left:1255px;top:281px;width:2px;height:18px;background:#1c1c1c;"></div><div style="left:1365px;top:281px;width:1px;height:18px;background:#1c1c1c;"></div><div class="t b" style="left:1281px;top:283.5px;font-size:10.2px;line-height:14px;font-weight:bold;color:rgba(0,0,0,0.8);letter-spacing:0.1px;">Bass Drop</div><svg style="position:absolute;left:1260px;top:283px;" width="14" height="14" viewBox="0 0 14 14"><circle cx="7" cy="7" r="6.1" fill="none" stroke="#2a2a3a" stroke-width="1.1"/><path d="M5.2 3.8 L9.8 7 L5.2 10.2 Z" fill="#2a2a3a"/></svg><div style="left:1370px;top:284px;width:46px;height:12px;background:#ffad56;box-shadow:0 0 0 1px #1e1e1e;"></div><div class="t" style="left:1370px;top:284px;width:46px;text-align:center;font-size:11px;line-height:12px;font-weight:bold;color:#111;">9</div><div style="left:1421px;top:284px;width:22px;height:12px;background:#232323;"></div><div class="t" style="left:1421px;top:284px;width:22px;text-align:center;font-size:11px;line-height:12px;color:#cfcfcf;">S</div><div style="left:1447px;top:284px;width:22px;height:12px;background:#232323;"></div><svg style="position:absolute;left:1447px;top:284px;" width="22" height="12" viewBox="0 0 22 12"><circle cx="11" cy="6" r="4" fill="#cfcfcf"/><path d="M11 3.2 V6.3 L9 7.8" stroke="#222" stroke-width="1.2" fill="none"/></svg><div style="left:1473px;top:283px;width:3px;height:14px;background:#1a1a1a;"></div><div style="left:1477px;top:283px;width:3px;height:14px;background:#1a1a1a;"></div><div style="left:1473px;top:287px;width:7px;height:1px;background:#363636;"></div><div style="left:1257px;top:301px;width:108px;height:37px;background:#ecf7a8;"></div><div style="left:1255px;top:301px;width:2px;height:37px;background:#1c1c1c;"></div><div style="left:1365px;top:301px;width:1px;height:37px;background:#1c1c1c;"></div><div class="t b" style="left:1281px;top:303.5px;font-size:10.2px;line-height:14px;font-weight:bold;color:rgba(0,0,0,0.8);letter-spacing:0.1px;">Synth Riser</div><svg style="position:absolute;left:1260px;top:303px;" width="14" height="14" viewBox="0 0 14 14"><circle cx="7" cy="7" r="6.1" fill="none" stroke="#2a2a3a" stroke-width="1.1"/><path d="M3.8 5.2 L10.2 5.2 L7 9.6 Z" fill="#2a2a3a"/></svg><div style="left:1370px;top:304px;width:46px;height:12px;background:#ffad56;box-shadow:0 0 0 1px #1e1e1e;"></div><div class="t" style="left:1370px;top:304px;width:46px;text-align:center;font-size:11px;line-height:12px;font-weight:bold;color:#111;">10</div><div style="left:1421px;top:304px;width:22px;height:12px;background:#232323;"></div><div class="t" style="left:1421px;top:304px;width:22px;text-align:center;font-size:11px;line-height:12px;color:#cfcfcf;">S</div><div style="left:1447px;top:304px;width:22px;height:12px;background:#232323;"></div><svg style="position:absolute;left:1447px;top:304px;" width="22" height="12" viewBox="0 0 22 12"><circle cx="11" cy="6" r="4" fill="#cfcfcf"/><path d="M11 3.2 V6.3 L9 7.8" stroke="#222" stroke-width="1.2" fill="none"/></svg><div style="left:1370px;top:321px;width:46px;height:12px;background:#232323;"></div><div style="left:1370px;top:321px;width:21px;height:12px;background:#0e7384;"></div><div class="t" style="left:1370px;top:321px;width:46px;text-align:center;font-size:11px;line-height:12px;color:#d8d8d8;">-18.0</div><div style="left:1421px;top:321px;width:48px;height:12px;background:#232323;"></div><div class="t" style="left:1421px;top:321px;width:48px;text-align:center;font-size:11px;line-height:12px;color:#cfcfcf;">C</div><div style="left:1473px;top:303px;width:3px;height:33px;background:#1a1a1a;"></div><div style="left:1477px;top:303px;width:3px;height:33px;background:#1a1a1a;"></div><div style="left:1473px;top:321.15px;width:3px;height:14.850000000000023px;background:#16ee58;"></div><div style="left:1477px;top:321.15px;width:3px;height:14.850000000000023px;background:#16ee58;"></div><div style="left:1473px;top:319.5px;width:3px;height:1.5px;background:#20e060;"></div><div style="left:1477px;top:320.0px;width:3px;height:1.5px;background:#20e060;"></div><div style="left:1473px;top:307px;width:7px;height:1px;background:#363636;"></div><div style="left:1257px;top:340px;width:108px;height:54px;background:#f7f07c;"></div><div style="left:1255px;top:340px;width:2px;height:54px;background:#1c1c1c;"></div><div style="left:1365px;top:340px;width:1px;height:54px;background:#1c1c1c;"></div><div class="t b" style="left:1281px;top:342.5px;font-size:10.2px;line-height:14px;font-weight:bold;color:rgba(0,0,0,0.8);letter-spacing:0.1px;">Keys</div><svg style="position:absolute;left:1260px;top:342px;" width="14" height="14" viewBox="0 0 14 14"><circle cx="7" cy="7" r="6.1" fill="none" stroke="#2a2a3a" stroke-width="1.1"/><path d="M3.8 5.2 L10.2 5.2 L7 9.6 Z" fill="#2a2a3a"/></svg><div style="left:1370px;top:343px;width:46px;height:12px;background:#ffad56;box-shadow:0 0 0 1px #1e1e1e;"></div><div class="t" style="left:1370px;top:343px;width:46px;text-align:center;font-size:11px;line-height:12px;font-weight:bold;color:#111;">11</div><div style="left:1421px;top:343px;width:22px;height:12px;background:#232323;"></div><div class="t" style="left:1421px;top:343px;width:22px;text-align:center;font-size:11px;line-height:12px;color:#cfcfcf;">S</div><div style="left:1447px;top:343px;width:22px;height:12px;background:#232323;"></div><svg style="position:absolute;left:1447px;top:343px;" width="22" height="12" viewBox="0 0 22 12"><circle cx="11" cy="6" r="4" fill="#cfcfcf"/><path d="M11 3.2 V6.3 L9 7.8" stroke="#222" stroke-width="1.2" fill="none"/></svg><div style="left:1370px;top:360px;width:46px;height:12px;background:#232323;"></div><div style="left:1370px;top:360px;width:32px;height:12px;background:#0e7384;"></div><div class="t" style="left:1370px;top:360px;width:46px;text-align:center;font-size:11px;line-height:12px;color:#d8d8d8;">-6.6</div><div style="left:1421px;top:360px;width:48px;height:12px;background:#232323;"></div><div class="t" style="left:1421px;top:360px;width:48px;text-align:center;font-size:11px;line-height:12px;color:#cfcfcf;">C</div><div style="left:1370px;top:377px;width:30px;height:13px;background:#232323;"></div><div style="left:1403px;top:377px;width:30px;height:13px;background:#232323;"></div><div class="t" style="left:1370px;top:377px;width:30px;text-align:center;font-size:11px;line-height:13px;color:#cfcfcf;">-<span style="font-size:15px;line-height:10px;">&infin;</span></div><div class="t" style="left:1403px;top:377px;width:30px;text-align:center;font-size:11px;line-height:13px;color:#cfcfcf;">-<span style="font-size:15px;line-height:10px;">&infin;</span></div><div style="left:1473px;top:342px;width:3px;height:50px;background:#1a1a1a;"></div><div style="left:1477px;top:342px;width:3px;height:50px;background:#1a1a1a;"></div><div style="left:1473px;top:389.5px;width:3px;height:2.5px;background:#16ee58;"></div><div style="left:1477px;top:389.5px;width:3px;height:2.5px;background:#16ee58;"></div><div style="left:1473px;top:372.0px;width:3px;height:1.5px;background:#20e060;"></div><div style="left:1477px;top:372.5px;width:3px;height:1.5px;background:#20e060;"></div><div style="left:1473px;top:346px;width:7px;height:1px;background:#363636;"></div><div style="left:1257px;top:396px;width:108px;height:18px;background:#ffa26a;"></div><div style="left:1255px;top:396px;width:2px;height:18px;background:#1c1c1c;"></div><div style="left:1365px;top:396px;width:1px;height:18px;background:#1c1c1c;"></div><div class="t b" style="left:1281px;top:398.5px;font-size:10.2px;line-height:14px;font-weight:bold;color:rgba(0,0,0,0.8);letter-spacing:0.1px;">Pads</div><svg style="position:absolute;left:1260px;top:398px;" width="14" height="14" viewBox="0 0 14 14"><circle cx="7" cy="7" r="6.1" fill="none" stroke="#2a2a3a" stroke-width="1.1"/><path d="M4.6 4.9 H9.4 M4.6 7 H9.4 M4.6 9.1 H9.4" stroke="#2a2a3a" stroke-width="1.1"/></svg><div style="left:1370px;top:399px;width:46px;height:12px;background:#ffad56;box-shadow:0 0 0 1px #1e1e1e;"></div><div class="t" style="left:1370px;top:399px;width:46px;text-align:center;font-size:11px;line-height:12px;font-weight:bold;color:#111;">12</div><div style="left:1421px;top:399px;width:22px;height:12px;background:#232323;"></div><div class="t" style="left:1421px;top:399px;width:22px;text-align:center;font-size:11px;line-height:12px;color:#cfcfcf;">S</div><div style="left:1473px;top:398px;width:3px;height:14px;background:#1a1a1a;"></div><div style="left:1477px;top:398px;width:3px;height:14px;background:#1a1a1a;"></div><div style="left:1473px;top:405.0px;width:3px;height:7.0px;background:#16ee58;"></div><div style="left:1477px;top:405.0px;width:3px;height:7.0px;background:#16ee58;"></div><div style="left:1473px;top:402.2px;width:3px;height:1.5px;background:#d0d020;"></div><div style="left:1477px;top:402.7px;width:3px;height:1.5px;background:#d0d020;"></div><div style="left:1473px;top:402px;width:7px;height:1px;background:#363636;"></div><div style="left:1257px;top:416px;width:108px;height:54px;background:#ff939c;"></div><div style="left:1255px;top:416px;width:2px;height:54px;background:#1c1c1c;"></div><div style="left:1365px;top:416px;width:1px;height:54px;background:#1c1c1c;"></div><div class="t b" style="left:1281px;top:418.5px;font-size:10.2px;line-height:14px;font-weight:bold;color:rgba(0,0,0,0.8);letter-spacing:0.1px;">Ambience</div><svg style="position:absolute;left:1260px;top:418px;" width="14" height="14" viewBox="0 0 14 14"><circle cx="7" cy="7" r="6.1" fill="none" stroke="#2a2a3a" stroke-width="1.1"/><path d="M3.8 5.2 L10.2 5.2 L7 9.6 Z" fill="#2a2a3a"/></svg><div style="left:1370px;top:419px;width:46px;height:12px;background:#ffad56;box-shadow:0 0 0 1px #1e1e1e;"></div><div class="t" style="left:1370px;top:419px;width:46px;text-align:center;font-size:11px;line-height:12px;font-weight:bold;color:#111;">16</div><div style="left:1421px;top:419px;width:22px;height:12px;background:#232323;"></div><div class="t" style="left:1421px;top:419px;width:22px;text-align:center;font-size:11px;line-height:12px;color:#cfcfcf;">S</div><div style="left:1447px;top:419px;width:22px;height:12px;background:#232323;"></div><svg style="position:absolute;left:1447px;top:419px;" width="22" height="12" viewBox="0 0 22 12"><circle cx="11" cy="6" r="3.8" fill="#777"/></svg><div style="left:1370px;top:436px;width:46px;height:12px;background:#232323;"></div><div style="left:1370px;top:436px;width:30px;height:12px;background:#0e7384;"></div><div class="t" style="left:1370px;top:436px;width:46px;text-align:center;font-size:11px;line-height:12px;color:#d8d8d8;">-8.3</div><div style="left:1421px;top:436px;width:48px;height:12px;background:#232323;"></div><div class="t" style="left:1421px;top:436px;width:48px;text-align:center;font-size:11px;line-height:12px;color:#cfcfcf;">C</div><div style="left:1370px;top:453px;width:30px;height:13px;background:#232323;"></div><div style="left:1403px;top:453px;width:30px;height:13px;background:#232323;"></div><div class="t" style="left:1370px;top:453px;width:30px;text-align:center;font-size:11px;line-height:13px;color:#cfcfcf;">-<span style="font-size:15px;line-height:10px;">&infin;</span></div><div class="t" style="left:1403px;top:453px;width:30px;text-align:center;font-size:11px;line-height:13px;color:#cfcfcf;">-<span style="font-size:15px;line-height:10px;">&infin;</span></div><div style="left:1473px;top:418px;width:3px;height:50px;background:#1a1a1a;"></div><div style="left:1477px;top:418px;width:3px;height:50px;background:#1a1a1a;"></div><div style="left:1473px;top:443.0px;width:3px;height:25.0px;background:#16ee58;"></div><div style="left:1477px;top:443.0px;width:3px;height:25.0px;background:#16ee58;"></div><div style="left:1473px;top:440.5px;width:3px;height:1.5px;background:#20e060;"></div><div style="left:1477px;top:441.0px;width:3px;height:1.5px;background:#20e060;"></div><div style="left:1473px;top:422px;width:7px;height:1px;background:#363636;"></div><div style="left:1257px;top:472px;width:108px;height:18px;background:#ff939c;"></div><div style="left:1255px;top:472px;width:2px;height:18px;background:#1c1c1c;"></div><div style="left:1365px;top:472px;width:1px;height:18px;background:#1c1c1c;"></div><div class="t b" style="left:1281px;top:474.5px;font-size:10.2px;line-height:14px;font-weight:bold;color:rgba(0,0,0,0.8);letter-spacing:0.1px;">Drone</div><svg style="position:absolute;left:1260px;top:474px;" width="14" height="14" viewBox="0 0 14 14"><circle cx="7" cy="7" r="6.1" fill="none" stroke="#2a2a3a" stroke-width="1.1"/><path d="M5.2 3.8 L9.8 7 L5.2 10.2 Z" fill="#2a2a3a"/></svg><div style="left:1370px;top:475px;width:46px;height:12px;background:#ffad56;box-shadow:0 0 0 1px #1e1e1e;"></div><div class="t" style="left:1370px;top:475px;width:46px;text-align:center;font-size:11px;line-height:12px;font-weight:bold;color:#111;">17</div><div style="left:1421px;top:475px;width:22px;height:12px;background:#232323;"></div><div class="t" style="left:1421px;top:475px;width:22px;text-align:center;font-size:11px;line-height:12px;color:#cfcfcf;">S</div><div style="left:1447px;top:475px;width:22px;height:12px;background:#232323;"></div><svg style="position:absolute;left:1447px;top:475px;" width="22" height="12" viewBox="0 0 22 12"><circle cx="11" cy="6" r="3.8" fill="#777"/></svg><div style="left:1473px;top:474px;width:3px;height:14px;background:#1a1a1a;"></div><div style="left:1477px;top:474px;width:3px;height:14px;background:#1a1a1a;"></div><div style="left:1473px;top:479.6px;width:3px;height:8.399999999999977px;background:#16ee58;"></div><div style="left:1477px;top:479.6px;width:3px;height:8.399999999999977px;background:#16ee58;"></div><div style="left:1473px;top:478.2px;width:3px;height:1.5px;background:#20e060;"></div><div style="left:1477px;top:478.7px;width:3px;height:1.5px;background:#20e060;"></div><div style="left:1473px;top:478px;width:7px;height:1px;background:#363636;"></div><div style="left:1257px;top:492px;width:108px;height:18px;background:#d96ce5;"></div><div style="left:1255px;top:492px;width:2px;height:18px;background:#1c1c1c;"></div><div style="left:1365px;top:492px;width:1px;height:18px;background:#1c1c1c;"></div><div class="t b" style="left:1281px;top:494.5px;font-size:10.2px;line-height:14px;font-weight:bold;color:rgba(0,0,0,0.8);letter-spacing:0.1px;">FX</div><svg style="position:absolute;left:1260px;top:494px;" width="14" height="14" viewBox="0 0 14 14"><circle cx="7" cy="7" r="6.1" fill="none" stroke="#2a2a3a" stroke-width="1.1"/><path d="M5.2 3.8 L9.8 7 L5.2 10.2 Z" fill="#2a2a3a"/></svg><div style="left:1370px;top:495px;width:46px;height:12px;background:#ffad56;box-shadow:0 0 0 1px #1e1e1e;"></div><div class="t" style="left:1370px;top:495px;width:46px;text-align:center;font-size:11px;line-height:12px;font-weight:bold;color:#111;">18</div><div style="left:1421px;top:495px;width:22px;height:12px;background:#232323;"></div><div class="t" style="left:1421px;top:495px;width:22px;text-align:center;font-size:11px;line-height:12px;color:#cfcfcf;">S</div><div style="left:1447px;top:495px;width:22px;height:12px;background:#232323;"></div><svg style="position:absolute;left:1447px;top:495px;" width="22" height="12" viewBox="0 0 22 12"><circle cx="11" cy="6" r="3.8" fill="#777"/></svg><div style="left:1473px;top:494px;width:3px;height:14px;background:#1a1a1a;"></div><div style="left:1477px;top:494px;width:3px;height:14px;background:#1a1a1a;"></div><div style="left:1473px;top:499.6px;width:3px;height:8.399999999999977px;background:#16ee58;"></div><div style="left:1477px;top:499.6px;width:3px;height:8.399999999999977px;background:#16ee58;"></div><div style="left:1473px;top:498.2px;width:3px;height:1.5px;background:#20e060;"></div><div style="left:1477px;top:498.7px;width:3px;height:1.5px;background:#20e060;"></div><div style="left:1473px;top:498px;width:7px;height:1px;background:#363636;"></div><div style="left:1257px;top:512px;width:108px;height:18px;background:#d96ce5;"></div><div style="left:1255px;top:512px;width:2px;height:18px;background:#1c1c1c;"></div><div style="left:1365px;top:512px;width:1px;height:18px;background:#1c1c1c;"></div><div class="t b" style="left:1281px;top:514.5px;font-size:10.2px;line-height:14px;font-weight:bold;color:rgba(0,0,0,0.8);letter-spacing:0.1px;">Zap</div><svg style="position:absolute;left:1260px;top:514px;" width="14" height="14" viewBox="0 0 14 14"><circle cx="7" cy="7" r="6.1" fill="none" stroke="#2a2a3a" stroke-width="1.1"/><path d="M5.2 3.8 L9.8 7 L5.2 10.2 Z" fill="#2a2a3a"/></svg><div style="left:1370px;top:515px;width:46px;height:12px;background:#ffad56;box-shadow:0 0 0 1px #1e1e1e;"></div><div class="t" style="left:1370px;top:515px;width:46px;text-align:center;font-size:11px;line-height:12px;font-weight:bold;color:#111;">19</div><div style="left:1421px;top:515px;width:22px;height:12px;background:#232323;"></div><div class="t" style="left:1421px;top:515px;width:22px;text-align:center;font-size:11px;line-height:12px;color:#cfcfcf;">S</div><div style="left:1447px;top:515px;width:22px;height:12px;background:#232323;"></div><svg style="position:absolute;left:1447px;top:515px;" width="22" height="12" viewBox="0 0 22 12"><circle cx="11" cy="6" r="4" fill="#cfcfcf"/><path d="M11 3.2 V6.3 L9 7.8" stroke="#222" stroke-width="1.2" fill="none"/></svg><div style="left:1473px;top:514px;width:3px;height:14px;background:#1a1a1a;"></div><div style="left:1477px;top:514px;width:3px;height:14px;background:#1a1a1a;"></div><div style="left:1473px;top:519.6px;width:3px;height:8.399999999999977px;background:#16ee58;"></div><div style="left:1477px;top:519.6px;width:3px;height:8.399999999999977px;background:#16ee58;"></div><div style="left:1473px;top:518.2px;width:3px;height:1.5px;background:#20e060;"></div><div style="left:1477px;top:518.7px;width:3px;height:1.5px;background:#20e060;"></div><div style="left:1473px;top:518px;width:7px;height:1px;background:#363636;"></div><div style="left:1371px;top:137px;width:3px;height:6px;background:#0e7384;"></div><div style="left:1370px;top:129px;width:5px;height:5px;background:#ff4040;border-radius:50%;"></div><div style="left:1403px;top:129px;width:5px;height:5px;background:#ff4040;border-radius:50%;"></div><div style="left:1370px;top:185px;width:5px;height:5px;background:#ff4040;border-radius:50%;"></div><div style="left:1257px;top:556px;width:108px;height:19px;background:#ffffff;"></div><div style="left:1255px;top:556px;width:2px;height:19px;background:#1c1c1c;"></div><svg style="position:absolute;left:1260px;top:558px;" width="14" height="14" viewBox="0 0 14 14"><circle cx="7" cy="7" r="6.1" fill="none" stroke="#2a2a2a" stroke-width="1.1"/><path d="M5.2 3.8 L9.8 7 L5.2 10.2 Z" fill="#2a2a2a"/></svg><div class="t b" style="left:1284px;top:557.5px;font-size:10.5px;color:rgba(0,0,0,0.8);font-weight:bold;line-height:14px;">Main</div><div style="left:1370px;top:558px;width:46px;height:13px;background:#232323;"></div><div style="left:1370px;top:558px;width:40px;height:13px;background:#0e7384;"></div><div class="t" style="left:1370px;top:558px;font-size:11px;color:#d8d8d8;width:46px;text-align:center;line-height:13px;">0</div><div style="left:1421px;top:558px;width:46px;height:13px;background:#232323;"></div><div style="left:1421px;top:558px;width:40px;height:13px;background:#3d6fc9;"></div><div class="t" style="left:1421px;top:558px;font-size:11px;color:#d8d8d8;width:46px;text-align:center;line-height:13px;">0</div><div style="left:1473px;top:558px;width:3px;height:15px;background:#16ee58;"></div><div style="left:1477px;top:558px;width:3px;height:15px;background:#16ee58;"></div><div class="t b" style="left:1223px;top:556px;font-size:17px;color:#636363;line-height:19px;font-weight:bold;">1/2</div><div style="left:1257px;top:581px;width:16px;height:13px;background:#262626;"></div><svg style="position:absolute;left:1257px;top:580px;" width="17" height="15" viewBox="0 0 17 15"><rect x="3.0" y="6.0" width="0.9" height="3" fill="#bbb"/><rect x="4.6" y="4.5" width="0.9" height="6" fill="#bbb"/><rect x="6.2" y="3.0" width="0.9" height="9" fill="#bbb"/><rect x="7.8" y="1.5" width="0.9" height="12" fill="#bbb"/><rect x="9.4" y="3.5" width="0.9" height="8" fill="#bbb"/><rect x="11.0" y="2.0" width="0.9" height="11" fill="#bbb"/><rect x="12.6" y="5.0" width="0.9" height="5" fill="#bbb"/><rect x="14.2" y="6.0" width="0.9" height="3" fill="#bbb"/></svg><div style="left:1277px;top:581px;width:35px;height:13px;background:#262626;"></div><div class="t" style="left:1277px;top:581px;font-size:11px;color:#cfcfcf;width:35px;text-align:center;line-height:13px;">1.00x</div><div style="left:1329px;top:581px;width:15px;height:13px;background:#262626;"></div><div class="t" style="left:1329px;top:581px;font-size:11px;color:#cfcfcf;width:15px;text-align:center;line-height:13px;">H</div><div style="left:1348px;top:581px;width:15px;height:13px;background:#262626;"></div><div class="t" style="left:1348px;top:581px;font-size:11px;color:#cfcfcf;width:15px;text-align:center;line-height:13px;">W</div><div style="left:9px;top:601px;width:97px;height:283px;overflow:hidden;"><div style="left:0;top:0;width:97px;height:18px;background:#93a7ff;"></div><div class="t b" style="left:4px;top:2.5px;font-size:10.2px;font-weight:bold;color:rgba(0,0,0,0.8);line-height:14px;letter-spacing:0.1px;">Drums</div><svg style="position:absolute;left:81px;top:2px" width="14" height="14"><circle cx="7" cy="7" r="6.1" fill="none" stroke="#2a2a3a" stroke-width="1.1"/><path d="M3.8 5.2 L10.2 5.2 L7 9.6 Z" fill="#2a2a3a"/></svg><div style="left:0;top:18px;width:97px;height:258px;background:#363636;"></div><div style="left:0;top:277px;width:97px;height:6px;background:#93a7ff;border-radius:0 0 0 6px;"></div><div style="left:8px;top:25px;width:36px;height:14px;background:#242424;border-radius:7px;box-shadow:0 0 0 0.5px #1a1a1a;"></div><div class="t" style="left:8px;top:25px;width:36px;text-align:center;font-size:11px;line-height:14px;color:#d4d4d4;">-6.44</div><div style="left:8px;top:44px;width:36px;height:13px;background:#242424;"></div><div class="t" style="left:8px;top:44px;width:36px;text-align:center;font-size:11px;line-height:13px;color:#d4d4d4;">-1.0</div><div style="left:61px;top:25px;width:13px;height:243px;background:#1c1c1c;border-radius:1px;"></div><div style="left:61.5px;top:148px;width:5.5px;height:120px;background:#17ec5a;"></div><div style="left:68px;top:148px;width:5.5px;height:120px;background:#17ec5a;"></div><div style="left:61.5px;top:75px;width:5.5px;height:2px;background:#f0a020;"></div><div style="left:68px;top:75px;width:5.5px;height:2px;background:#f0a020;"></div><div style="left:67px;top:25px;width:1px;height:243px;background:#404040;"></div><div style="left:61px;top:50px;width:13px;height:1px;background:#9a9a9a;"></div><div style="left:55px;top:26.0px;width:4px;height:1px;background:#6a6a6a;"></div><div class="t" style="left:78px;top:25px;font-size:10px;line-height:12px;color:#b0b0b0;">6</div><div style="left:55px;top:50.0px;width:4px;height:1px;background:#6a6a6a;"></div><div class="t" style="left:78px;top:45.5px;font-size:10px;line-height:12px;color:#b0b0b0;">0</div><div style="left:55px;top:74.0px;width:4px;height:1px;background:#6a6a6a;"></div><div class="t" style="left:78px;top:69.5px;font-size:10px;line-height:12px;color:#b0b0b0;">6</div><div style="left:55px;top:98.0px;width:4px;height:1px;background:#6a6a6a;"></div><div class="t" style="left:78px;top:93.5px;font-size:10px;line-height:12px;color:#b0b0b0;">12</div><div style="left:55px;top:121.0px;width:4px;height:1px;background:#6a6a6a;"></div><div class="t" style="left:78px;top:116.5px;font-size:10px;line-height:12px;color:#b0b0b0;">18</div><div style="left:55px;top:145.0px;width:4px;height:1px;background:#6a6a6a;"></div><div class="t" style="left:78px;top:140.5px;font-size:10px;line-height:12px;color:#b0b0b0;">24</div><div style="left:55px;top:170.0px;width:4px;height:1px;background:#6a6a6a;"></div><div class="t" style="left:78px;top:165.5px;font-size:10px;line-height:12px;color:#b0b0b0;">30</div><div style="left:55px;top:191.0px;width:4px;height:1px;background:#6a6a6a;"></div><div class="t" style="left:78px;top:186.5px;font-size:10px;line-height:12px;color:#b0b0b0;">36</div><div style="left:55px;top:210.0px;width:4px;height:1px;background:#6a6a6a;"></div><div class="t" style="left:78px;top:205.5px;font-size:10px;line-height:12px;color:#b0b0b0;">42</div><div style="left:55px;top:225.5px;width:4px;height:1px;background:#6a6a6a;"></div><div class="t" style="left:78px;top:221px;font-size:10px;line-height:12px;color:#b0b0b0;">48</div><div style="left:55px;top:240.5px;width:4px;height:1px;background:#6a6a6a;"></div><div class="t" style="left:78px;top:236px;font-size:10px;line-height:12px;color:#b0b0b0;">54</div><div style="left:55px;top:254.0px;width:4px;height:1px;background:#6a6a6a;"></div><div class="t" style="left:78px;top:249.5px;font-size:10px;line-height:12px;color:#b0b0b0;">60</div><div style="left:55px;top:264px;width:4px;height:1px;background:#6a6a6a;"></div><svg style="position:absolute;left:48px;top:48px" width="13" height="14"><path d="M0.5 0.5 L12.5 7 L0.5 13.5 Z" fill="#bdbdbd"/></svg><svg style="position:absolute;left:10px;top:176px" width="30" height="32"><path d="M9.2 29.6 A13 13 0 1 1 20.8 29.6" fill="none" stroke="#141414" stroke-width="2.1"/><path d="M15 3.5 V18" stroke="#141414" stroke-width="1.7"/><path d="M11.8 0.5 L18.2 0.5 L15 4 Z" fill="#141414"/></svg><div style="left:14px;top:210px;width:23px;height:23px;background:#ffad56;box-shadow:0 0 0 1px #1e1e1e;"></div><div class="t" style="left:14px;top:210px;width:23px;text-align:center;font-size:13px;line-height:23px;color:#111;font-weight:bold;">1</div><div style="left:14px;top:238px;width:23px;height:13px;background:#242424;"></div><div class="t" style="left:14px;top:238px;width:23px;text-align:center;font-size:11px;line-height:13px;color:#d0d0d0;">S</div><div style="left:14px;top:255px;width:23px;height:13px;background:#242424;"></div><svg style="position:absolute;left:14.5px;top:255.5px" width="22" height="12"><circle cx="11" cy="6" r="4" fill="#cfcfcf"/><path d="M11 3.2 V6.3 L9 7.8" stroke="#222" stroke-width="1.2" fill="none"/></svg></div><div style="left:106px;top:601px;width:2px;height:283px;background:#262626;"></div><div style="left:108px;top:601px;width:97px;height:283px;overflow:hidden;"><div style="left:0;top:0;width:97px;height:18px;background:#93a7ff;"></div><div class="t b" style="left:4px;top:2.5px;font-size:10.2px;font-weight:bold;color:rgba(0,0,0,0.8);line-height:14px;letter-spacing:0.1px;">Breaks</div><div style="left:0;top:18px;width:97px;height:258px;background:#363636;"></div><div style="left:0;top:277px;width:97px;height:6px;background:#93a7ff;"></div><div style="left:8px;top:25px;width:36px;height:14px;background:#242424;border-radius:7px;box-shadow:0 0 0 0.5px #1a1a1a;"></div><div class="t" style="left:8px;top:25px;width:36px;text-align:center;font-size:11px;line-height:14px;color:#d4d4d4;">-10.2</div><div style="left:8px;top:44px;width:36px;height:13px;background:#242424;"></div><div class="t" style="left:8px;top:44px;width:36px;text-align:center;font-size:11px;line-height:13px;color:#d4d4d4;">-9.4</div><div style="left:61px;top:25px;width:13px;height:243px;background:#1c1c1c;border-radius:1px;"></div><div style="left:61.5px;top:91px;width:5.5px;height:29px;background:linear-gradient(#a8a020,#7fa028);"></div><div style="left:61.5px;top:120px;width:5.5px;height:31px;background:#18a040;"></div><div style="left:61.5px;top:151px;width:5.5px;height:117px;background:#17ec5a;"></div><div style="left:68px;top:91px;width:5.5px;height:29px;background:linear-gradient(#a8a020,#7fa028);"></div><div style="left:68px;top:120px;width:5.5px;height:31px;background:#18a040;"></div><div style="left:68px;top:151px;width:5.5px;height:117px;background:#17ec5a;"></div><div style="left:61.5px;top:90px;width:5.5px;height:2px;background:#e0a020;"></div><div style="left:68px;top:90px;width:5.5px;height:2px;background:#e0a020;"></div><div style="left:67px;top:25px;width:1px;height:243px;background:#404040;"></div><div style="left:61px;top:50px;width:13px;height:1px;background:#9a9a9a;"></div><div style="left:55px;top:26.0px;width:4px;height:1px;background:#6a6a6a;"></div><div class="t" style="left:78px;top:25px;font-size:10px;line-height:12px;color:#b0b0b0;">6</div><div style="left:55px;top:50.0px;width:4px;height:1px;background:#6a6a6a;"></div><div class="t" style="left:78px;top:45.5px;font-size:10px;line-height:12px;color:#b0b0b0;">0</div><div style="left:55px;top:74.0px;width:4px;height:1px;background:#6a6a6a;"></div><div class="t" style="left:78px;top:69.5px;font-size:10px;line-height:12px;color:#b0b0b0;">6</div><div style="left:55px;top:98.0px;width:4px;height:1px;background:#6a6a6a;"></div><div class="t" style="left:78px;top:93.5px;font-size:10px;line-height:12px;color:#b0b0b0;">12</div><div style="left:55px;top:121.0px;width:4px;height:1px;background:#6a6a6a;"></div><div class="t" style="left:78px;top:116.5px;font-size:10px;line-height:12px;color:#b0b0b0;">18</div><div style="left:55px;top:145.0px;width:4px;height:1px;background:#6a6a6a;"></div><div class="t" style="left:78px;top:140.5px;font-size:10px;line-height:12px;color:#b0b0b0;">24</div><div style="left:55px;top:170.0px;width:4px;height:1px;background:#6a6a6a;"></div><div class="t" style="left:78px;top:165.5px;font-size:10px;line-height:12px;color:#b0b0b0;">30</div><div style="left:55px;top:191.0px;width:4px;height:1px;background:#6a6a6a;"></div><div class="t" style="left:78px;top:186.5px;font-size:10px;line-height:12px;color:#b0b0b0;">36</div><div style="left:55px;top:210.0px;width:4px;height:1px;background:#6a6a6a;"></div><div class="t" style="left:78px;top:205.5px;font-size:10px;line-height:12px;color:#b0b0b0;">42</div><div style="left:55px;top:225.5px;width:4px;height:1px;background:#6a6a6a;"></div><div class="t" style="left:78px;top:221px;font-size:10px;line-height:12px;color:#b0b0b0;">48</div><div style="left:55px;top:240.5px;width:4px;height:1px;background:#6a6a6a;"></div><div class="t" style="left:78px;top:236px;font-size:10px;line-height:12px;color:#b0b0b0;">54</div><div style="left:55px;top:254.0px;width:4px;height:1px;background:#6a6a6a;"></div><div class="t" style="left:78px;top:249.5px;font-size:10px;line-height:12px;color:#b0b0b0;">60</div><div style="left:55px;top:264px;width:4px;height:1px;background:#6a6a6a;"></div><svg style="position:absolute;left:48px;top:81px" width="13" height="14"><path d="M0.5 0.5 L12.5 7 L0.5 13.5 Z" fill="#bdbdbd"/></svg><svg style="position:absolute;left:10px;top:176px" width="30" height="32"><path d="M9.2 29.6 A13 13 0 1 1 20.8 29.6" fill="none" stroke="#141414" stroke-width="2.1"/><path d="M15 3.5 V18" stroke="#141414" stroke-width="1.7"/><path d="M11.8 0.5 L18.2 0.5 L15 4 Z" fill="#141414"/></svg><div style="left:14px;top:210px;width:23px;height:23px;background:#ffad56;box-shadow:0 0 0 1px #1e1e1e;"></div><div class="t" style="left:14px;top:210px;width:23px;text-align:center;font-size:13px;line-height:23px;color:#111;font-weight:bold;">2</div><div style="left:14px;top:238px;width:23px;height:13px;background:#242424;"></div><div class="t" style="left:14px;top:238px;width:23px;text-align:center;font-size:11px;line-height:13px;color:#d0d0d0;">S</div><div style="left:14px;top:255px;width:23px;height:13px;background:#242424;"></div><svg style="position:absolute;left:14.5px;top:255.5px" width="22" height="12"><circle cx="11" cy="6" r="3.8" fill="#777"/></svg></div><div style="left:205px;top:601px;width:2px;height:283px;background:#262626;"></div><div style="left:207px;top:601px;width:97px;height:283px;overflow:hidden;"><div style="left:0;top:0;width:97px;height:18px;background:#8ac6fa;"></div><div class="t b" style="left:4px;top:2.5px;font-size:10.2px;font-weight:bold;color:rgba(0,0,0,0.8);line-height:14px;letter-spacing:0.1px;">Percussion</div><svg style="position:absolute;left:81px;top:2px" width="14" height="14"><circle cx="7" cy="7" r="6.1" fill="none" stroke="#2a2a3a" stroke-width="1.1"/><path d="M4.6 4.9 H9.4 M4.6 7 H9.4 M4.6 9.1 H9.4" stroke="#2a2a3a" stroke-width="1.1"/></svg><div style="left:0;top:18px;width:97px;height:258px;background:#363636;"></div><div style="left:0;top:277px;width:97px;height:6px;background:#8ac6fa;"></div><div style="left:8px;top:25px;width:36px;height:14px;background:#242424;border-radius:7px;box-shadow:0 0 0 0.5px #1a1a1a;"></div><div class="t" style="left:8px;top:25px;width:36px;text-align:center;font-size:11px;line-height:14px;color:#d4d4d4;">-21.2</div><div style="left:8px;top:44px;width:36px;height:13px;background:#242424;"></div><div class="t" style="left:8px;top:44px;width:36px;text-align:center;font-size:11px;line-height:13px;color:#d4d4d4;">0</div><div style="left:61px;top:25px;width:13px;height:243px;background:#1c1c1c;border-radius:1px;"></div><div style="left:61.5px;top:211px;width:5.5px;height:15px;background:#18a040;"></div><div style="left:61.5px;top:226px;width:5.5px;height:42px;background:#17ec5a;"></div><div style="left:68px;top:218px;width:5.5px;height:17px;background:#18a040;"></div><div style="left:68px;top:235px;width:5.5px;height:33px;background:#17ec5a;"></div><div style="left:61.5px;top:135px;width:5.5px;height:2px;background:#20e060;"></div><div style="left:68px;top:171px;width:5.5px;height:2px;background:#20e060;"></div><div style="left:67px;top:25px;width:1px;height:243px;background:#404040;"></div><div style="left:61px;top:50px;width:13px;height:1px;background:#9a9a9a;"></div><div style="left:55px;top:26.0px;width:4px;height:1px;background:#6a6a6a;"></div><div class="t" style="left:78px;top:25px;font-size:10px;line-height:12px;color:#b0b0b0;">6</div><div style="left:55px;top:50.0px;width:4px;height:1px;background:#6a6a6a;"></div><div class="t" style="left:78px;top:45.5px;font-size:10px;line-height:12px;color:#b0b0b0;">0</div><div style="left:55px;top:74.0px;width:4px;height:1px;background:#6a6a6a;"></div><div class="t" style="left:78px;top:69.5px;font-size:10px;line-height:12px;color:#b0b0b0;">6</div><div style="left:55px;top:98.0px;width:4px;height:1px;background:#6a6a6a;"></div><div class="t" style="left:78px;top:93.5px;font-size:10px;line-height:12px;color:#b0b0b0;">12</div><div style="left:55px;top:121.0px;width:4px;height:1px;background:#6a6a6a;"></div><div class="t" style="left:78px;top:116.5px;font-size:10px;line-height:12px;color:#b0b0b0;">18</div><div style="left:55px;top:145.0px;width:4px;height:1px;background:#6a6a6a;"></div><div class="t" style="left:78px;top:140.5px;font-size:10px;line-height:12px;color:#b0b0b0;">24</div><div style="left:55px;top:170.0px;width:4px;height:1px;background:#6a6a6a;"></div><div class="t" style="left:78px;top:165.5px;font-size:10px;line-height:12px;color:#b0b0b0;">30</div><div style="left:55px;top:191.0px;width:4px;height:1px;background:#6a6a6a;"></div><div class="t" style="left:78px;top:186.5px;font-size:10px;line-height:12px;color:#b0b0b0;">36</div><div style="left:55px;top:210.0px;width:4px;height:1px;background:#6a6a6a;"></div><div class="t" style="left:78px;top:205.5px;font-size:10px;line-height:12px;color:#b0b0b0;">42</div><div style="left:55px;top:225.5px;width:4px;height:1px;background:#6a6a6a;"></div><div class="t" style="left:78px;top:221px;font-size:10px;line-height:12px;color:#b0b0b0;">48</div><div style="left:55px;top:240.5px;width:4px;height:1px;background:#6a6a6a;"></div><div class="t" style="left:78px;top:236px;font-size:10px;line-height:12px;color:#b0b0b0;">54</div><div style="left:55px;top:254.0px;width:4px;height:1px;background:#6a6a6a;"></div><div class="t" style="left:78px;top:249.5px;font-size:10px;line-height:12px;color:#b0b0b0;">60</div><div style="left:55px;top:264px;width:4px;height:1px;background:#6a6a6a;"></div><svg style="position:absolute;left:48px;top:43px" width="13" height="14"><path d="M0.5 0.5 L12.5 7 L0.5 13.5 Z" fill="#bdbdbd"/></svg><svg style="position:absolute;left:10px;top:176px" width="30" height="32"><path d="M9.2 29.6 A13 13 0 1 1 20.8 29.6" fill="none" stroke="#141414" stroke-width="2.1"/><path d="M15 3.5 V18" stroke="#141414" stroke-width="1.7"/><path d="M11.8 0.5 L18.2 0.5 L15 4 Z" fill="#141414"/></svg><div style="left:14px;top:210px;width:23px;height:23px;background:#ffad56;box-shadow:0 0 0 1px #1e1e1e;"></div><div class="t" style="left:14px;top:210px;width:23px;text-align:center;font-size:13px;line-height:23px;color:#111;font-weight:bold;">3</div><div style="left:14px;top:238px;width:23px;height:13px;background:#242424;"></div><div class="t" style="left:14px;top:238px;width:23px;text-align:center;font-size:11px;line-height:13px;color:#d0d0d0;">S</div></div><div style="left:304px;top:601px;width:2px;height:283px;background:#262626;"></div><div style="left:306px;top:601px;width:97px;height:283px;overflow:hidden;"><div style="left:0;top:0;width:97px;height:18px;background:#5cffe6;"></div><div class="t b" style="left:4px;top:2.5px;font-size:10.2px;font-weight:bold;color:rgba(0,0,0,0.8);line-height:14px;letter-spacing:0.1px;">Bass</div><div style="left:0;top:18px;width:97px;height:258px;background:#404040;"></div><div style="left:0;top:277px;width:97px;height:6px;background:#5cffe6;"></div><div style="left:8px;top:25px;width:36px;height:14px;background:#242424;border-radius:7px;box-shadow:0 0 0 0.5px #1a1a1a;"></div><div class="t" style="left:8px;top:25px;width:36px;text-align:center;font-size:11px;line-height:14px;color:#d4d4d4;">-10.8</div><div style="left:8px;top:44px;width:36px;height:13px;background:#242424;"></div><div class="t" style="left:8px;top:44px;width:36px;text-align:center;font-size:11px;line-height:13px;color:#d4d4d4;">-7.7</div><div style="left:61px;top:25px;width:13px;height:243px;background:#1c1c1c;border-radius:1px;"></div><div style="left:61.5px;top:134px;width:5.5px;height:134px;background:#17ec5a;"></div><div style="left:68px;top:134px;width:5.5px;height:134px;background:#17ec5a;"></div><div style="left:61.5px;top:93px;width:5.5px;height:2px;background:#e0c020;"></div><div style="left:68px;top:93px;width:5.5px;height:2px;background:#e0c020;"></div><div style="left:67px;top:25px;width:1px;height:243px;background:#404040;"></div><div style="left:61px;top:50px;width:13px;height:1px;background:#9a9a9a;"></div><div style="left:55px;top:26.0px;width:4px;height:1px;background:#6a6a6a;"></div><div class="t" style="left:78px;top:25px;font-size:10px;line-height:12px;color:#b0b0b0;">6</div><div style="left:55px;top:50.0px;width:4px;height:1px;background:#6a6a6a;"></div><div class="t" style="left:78px;top:45.5px;font-size:10px;line-height:12px;color:#b0b0b0;">0</div><div style="left:55px;top:74.0px;width:4px;height:1px;background:#6a6a6a;"></div><div class="t" style="left:78px;top:69.5px;font-size:10px;line-height:12px;color:#b0b0b0;">6</div><div style="left:55px;top:98.0px;width:4px;height:1px;background:#6a6a6a;"></div><div class="t" style="left:78px;top:93.5px;font-size:10px;line-height:12px;color:#b0b0b0;">12</div><div style="left:55px;top:121.0px;width:4px;height:1px;background:#6a6a6a;"></div><div class="t" style="left:78px;top:116.5px;font-size:10px;line-height:12px;color:#b0b0b0;">18</div><div style="left:55px;top:145.0px;width:4px;height:1px;background:#6a6a6a;"></div><div class="t" style="left:78px;top:140.5px;font-size:10px;line-height:12px;color:#b0b0b0;">24</div><div style="left:55px;top:170.0px;width:4px;height:1px;background:#6a6a6a;"></div><div class="t" style="left:78px;top:165.5px;font-size:10px;line-height:12px;color:#b0b0b0;">30</div><div style="left:55px;top:191.0px;width:4px;height:1px;background:#6a6a6a;"></div><div class="t" style="left:78px;top:186.5px;font-size:10px;line-height:12px;color:#b0b0b0;">36</div><div style="left:55px;top:210.0px;width:4px;height:1px;background:#6a6a6a;"></div><div class="t" style="left:78px;top:205.5px;font-size:10px;line-height:12px;color:#b0b0b0;">42</div><div style="left:55px;top:225.5px;width:4px;height:1px;background:#6a6a6a;"></div><div class="t" style="left:78px;top:221px;font-size:10px;line-height:12px;color:#b0b0b0;">48</div><div style="left:55px;top:240.5px;width:4px;height:1px;background:#6a6a6a;"></div><div class="t" style="left:78px;top:236px;font-size:10px;line-height:12px;color:#b0b0b0;">54</div><div style="left:55px;top:254.0px;width:4px;height:1px;background:#6a6a6a;"></div><div class="t" style="left:78px;top:249.5px;font-size:10px;line-height:12px;color:#b0b0b0;">60</div><div style="left:55px;top:264px;width:4px;height:1px;background:#6a6a6a;"></div><svg style="position:absolute;left:48px;top:75px" width="13" height="14"><path d="M0.5 0.5 L12.5 7 L0.5 13.5 Z" fill="#bdbdbd"/></svg><svg style="position:absolute;left:10px;top:176px" width="30" height="32"><path d="M9.2 29.6 A13 13 0 1 1 20.8 29.6" fill="none" stroke="#141414" stroke-width="2.1"/><path d="M15 3.5 V18" stroke="#141414" stroke-width="1.7"/><path d="M11.8 0.5 L18.2 0.5 L15 4 Z" fill="#141414"/></svg><div style="left:14px;top:210px;width:23px;height:23px;background:#ffad56;box-shadow:0 0 0 1px #1e1e1e;"></div><div class="t" style="left:14px;top:210px;width:23px;text-align:center;font-size:13px;line-height:23px;color:#111;font-weight:bold;">8</div><div style="left:14px;top:238px;width:23px;height:13px;background:#242424;"></div><div class="t" style="left:14px;top:238px;width:23px;text-align:center;font-size:11px;line-height:13px;color:#d0d0d0;">S</div><div style="left:14px;top:255px;width:23px;height:13px;background:#242424;"></div><svg style="position:absolute;left:14.5px;top:255.5px" width="22" height="12"><circle cx="11" cy="6" r="4" fill="#cfcfcf"/><path d="M11 3.2 V6.3 L9 7.8" stroke="#222" stroke-width="1.2" fill="none"/></svg></div><div style="left:403px;top:601px;width:2px;height:283px;background:#262626;"></div><div style="left:405px;top:601px;width:97px;height:283px;overflow:hidden;"><div style="left:0;top:0;width:97px;height:18px;background:#5cffe6;"></div><div class="t b" style="left:4px;top:2.5px;font-size:10.2px;font-weight:bold;color:rgba(0,0,0,0.8);line-height:14px;letter-spacing:0.1px;">Bass Drop</div><svg style="position:absolute;left:81px;top:2px" width="14" height="14"><circle cx="7" cy="7" r="6.1" fill="none" stroke="#2a2a3a" stroke-width="1.1"/><path d="M3.8 5.2 L10.2 5.2 L7 9.6 Z" fill="#2a2a3a"/></svg><div style="left:0;top:18px;width:97px;height:258px;background:#363636;"></div><div style="left:0;top:277px;width:97px;height:6px;background:#5cffe6;"></div><div style="left:8px;top:25px;width:36px;height:14px;background:#242424;border-radius:7px;box-shadow:0 0 0 0.5px #1a1a1a;"></div><div class="t" style="left:8px;top:25px;width:36px;text-align:center;font-size:11px;line-height:14px;color:#d4d4d4;">-<span style="font-size:15px;line-height:10px;">&infin;</span></div><div style="left:8px;top:44px;width:36px;height:13px;background:#242424;"></div><div class="t" style="left:8px;top:44px;width:36px;text-align:center;font-size:11px;line-height:13px;color:#d4d4d4;">-0.2</div><div style="left:61px;top:25px;width:13px;height:243px;background:#1c1c1c;border-radius:1px;"></div><div style="left:67px;top:25px;width:1px;height:243px;background:#404040;"></div><div style="left:61px;top:50px;width:13px;height:1px;background:#9a9a9a;"></div><div style="left:55px;top:26.0px;width:4px;height:1px;background:#6a6a6a;"></div><div class="t" style="left:78px;top:25px;font-size:10px;line-height:12px;color:#b0b0b0;">6</div><div style="left:55px;top:50.0px;width:4px;height:1px;background:#6a6a6a;"></div><div class="t" style="left:78px;top:45.5px;font-size:10px;line-height:12px;color:#b0b0b0;">0</div><div style="left:55px;top:74.0px;width:4px;height:1px;background:#6a6a6a;"></div><div class="t" style="left:78px;top:69.5px;font-size:10px;line-height:12px;color:#b0b0b0;">6</div><div style="left:55px;top:98.0px;width:4px;height:1px;background:#6a6a6a;"></div><div class="t" style="left:78px;top:93.5px;font-size:10px;line-height:12px;color:#b0b0b0;">12</div><div style="left:55px;top:121.0px;width:4px;height:1px;background:#6a6a6a;"></div><div class="t" style="left:78px;top:116.5px;font-size:10px;line-height:12px;color:#b0b0b0;">18</div><div style="left:55px;top:145.0px;width:4px;height:1px;background:#6a6a6a;"></div><div class="t" style="left:78px;top:140.5px;font-size:10px;line-height:12px;color:#b0b0b0;">24</div><div style="left:55px;top:170.0px;width:4px;height:1px;background:#6a6a6a;"></div><div class="t" style="left:78px;top:165.5px;font-size:10px;line-height:12px;color:#b0b0b0;">30</div><div style="left:55px;top:191.0px;width:4px;height:1px;background:#6a6a6a;"></div><div class="t" style="left:78px;top:186.5px;font-size:10px;line-height:12px;color:#b0b0b0;">36</div><div style="left:55px;top:210.0px;width:4px;height:1px;background:#6a6a6a;"></div><div class="t" style="left:78px;top:205.5px;font-size:10px;line-height:12px;color:#b0b0b0;">42</div><div style="left:55px;top:225.5px;width:4px;height:1px;background:#6a6a6a;"></div><div class="t" style="left:78px;top:221px;font-size:10px;line-height:12px;color:#b0b0b0;">48</div><div style="left:55px;top:240.5px;width:4px;height:1px;background:#6a6a6a;"></div><div class="t" style="left:78px;top:236px;font-size:10px;line-height:12px;color:#b0b0b0;">54</div><div style="left:55px;top:254.0px;width:4px;height:1px;background:#6a6a6a;"></div><div class="t" style="left:78px;top:249.5px;font-size:10px;line-height:12px;color:#b0b0b0;">60</div><div style="left:55px;top:264px;width:4px;height:1px;background:#6a6a6a;"></div><svg style="position:absolute;left:48px;top:44px" width="13" height="14"><path d="M0.5 0.5 L12.5 7 L0.5 13.5 Z" fill="#bdbdbd"/></svg><svg style="position:absolute;left:10px;top:176px" width="30" height="32"><path d="M9.2 29.6 A13 13 0 1 1 20.8 29.6" fill="none" stroke="#141414" stroke-width="2.1"/><path d="M15 3.5 V18" stroke="#141414" stroke-width="1.7"/><path d="M11.8 0.5 L18.2 0.5 L15 4 Z" fill="#141414"/></svg><div style="left:14px;top:210px;width:23px;height:23px;background:#ffad56;box-shadow:0 0 0 1px #1e1e1e;"></div><div class="t" style="left:14px;top:210px;width:23px;text-align:center;font-size:13px;line-height:23px;color:#111;font-weight:bold;">9</div><div style="left:14px;top:238px;width:23px;height:13px;background:#242424;"></div><div class="t" style="left:14px;top:238px;width:23px;text-align:center;font-size:11px;line-height:13px;color:#d0d0d0;">S</div><div style="left:14px;top:255px;width:23px;height:13px;background:#242424;"></div><svg style="position:absolute;left:14.5px;top:255.5px" width="22" height="12"><circle cx="11" cy="6" r="4" fill="#cfcfcf"/><path d="M11 3.2 V6.3 L9 7.8" stroke="#222" stroke-width="1.2" fill="none"/></svg></div><div style="left:502px;top:601px;width:2px;height:283px;background:#262626;"></div><div style="left:504px;top:601px;width:97px;height:283px;overflow:hidden;"><div style="left:0;top:0;width:97px;height:18px;background:#ecf7a8;"></div><div class="t b" style="left:4px;top:2.5px;font-size:10.2px;font-weight:bold;color:rgba(0,0,0,0.8);line-height:14px;letter-spacing:0.1px;">Synth Riser</div><svg style="position:absolute;left:81px;top:2px" width="14" height="14"><circle cx="7" cy="7" r="6.1" fill="none" stroke="#2a2a3a" stroke-width="1.1"/><path d="M3.8 5.2 L10.2 5.2 L7 9.6 Z" fill="#2a2a3a"/></svg><div style="left:0;top:18px;width:97px;height:258px;background:#363636;"></div><div style="left:0;top:277px;width:97px;height:6px;background:#ecf7a8;"></div><div style="left:8px;top:25px;width:36px;height:14px;background:#242424;border-radius:7px;box-shadow:0 0 0 0.5px #1a1a1a;"></div><div class="t" style="left:8px;top:25px;width:36px;text-align:center;font-size:11px;line-height:14px;color:#d4d4d4;">-28.2</div><div style="left:8px;top:44px;width:36px;height:13px;background:#242424;"></div><div class="t" style="left:8px;top:44px;width:36px;text-align:center;font-size:11px;line-height:13px;color:#d4d4d4;">-18.0</div><div style="left:61px;top:25px;width:13px;height:243px;background:#1c1c1c;border-radius:1px;"></div><div style="left:61.5px;top:180px;width:5.5px;height:15px;background:#18a040;"></div><div style="left:61.5px;top:195px;width:5.5px;height:73px;background:#17ec5a;"></div><div style="left:68px;top:177px;width:5.5px;height:18px;background:#18a040;"></div><div style="left:68px;top:195px;width:5.5px;height:73px;background:#17ec5a;"></div><div style="left:61.5px;top:165px;width:5.5px;height:2px;background:#20e060;"></div><div style="left:68px;top:162px;width:5.5px;height:2px;background:#20e060;"></div><div style="left:67px;top:25px;width:1px;height:243px;background:#404040;"></div><div style="left:61px;top:50px;width:13px;height:1px;background:#9a9a9a;"></div><div style="left:55px;top:26.0px;width:4px;height:1px;background:#6a6a6a;"></div><div class="t" style="left:78px;top:25px;font-size:10px;line-height:12px;color:#b0b0b0;">6</div><div style="left:55px;top:50.0px;width:4px;height:1px;background:#6a6a6a;"></div><div class="t" style="left:78px;top:45.5px;font-size:10px;line-height:12px;color:#b0b0b0;">0</div><div style="left:55px;top:74.0px;width:4px;height:1px;background:#6a6a6a;"></div><div class="t" style="left:78px;top:69.5px;font-size:10px;line-height:12px;color:#b0b0b0;">6</div><div style="left:55px;top:98.0px;width:4px;height:1px;background:#6a6a6a;"></div><div class="t" style="left:78px;top:93.5px;font-size:10px;line-height:12px;color:#b0b0b0;">12</div><div style="left:55px;top:121.0px;width:4px;height:1px;background:#6a6a6a;"></div><div class="t" style="left:78px;top:116.5px;font-size:10px;line-height:12px;color:#b0b0b0;">18</div><div style="left:55px;top:145.0px;width:4px;height:1px;background:#6a6a6a;"></div><div class="t" style="left:78px;top:140.5px;font-size:10px;line-height:12px;color:#b0b0b0;">24</div><div style="left:55px;top:170.0px;width:4px;height:1px;background:#6a6a6a;"></div><div class="t" style="left:78px;top:165.5px;font-size:10px;line-height:12px;color:#b0b0b0;">30</div><div style="left:55px;top:191.0px;width:4px;height:1px;background:#6a6a6a;"></div><div class="t" style="left:78px;top:186.5px;font-size:10px;line-height:12px;color:#b0b0b0;">36</div><div style="left:55px;top:210.0px;width:4px;height:1px;background:#6a6a6a;"></div><div class="t" style="left:78px;top:205.5px;font-size:10px;line-height:12px;color:#b0b0b0;">42</div><div style="left:55px;top:225.5px;width:4px;height:1px;background:#6a6a6a;"></div><div class="t" style="left:78px;top:221px;font-size:10px;line-height:12px;color:#b0b0b0;">48</div><div style="left:55px;top:240.5px;width:4px;height:1px;background:#6a6a6a;"></div><div class="t" style="left:78px;top:236px;font-size:10px;line-height:12px;color:#b0b0b0;">54</div><div style="left:55px;top:254.0px;width:4px;height:1px;background:#6a6a6a;"></div><div class="t" style="left:78px;top:249.5px;font-size:10px;line-height:12px;color:#b0b0b0;">60</div><div style="left:55px;top:264px;width:4px;height:1px;background:#6a6a6a;"></div><svg style="position:absolute;left:48px;top:115px" width="13" height="14"><path d="M0.5 0.5 L12.5 7 L0.5 13.5 Z" fill="#bdbdbd"/></svg><svg style="position:absolute;left:10px;top:176px" width="30" height="32"><path d="M9.2 29.6 A13 13 0 1 1 20.8 29.6" fill="none" stroke="#141414" stroke-width="2.1"/><path d="M15 3.5 V18" stroke="#141414" stroke-width="1.7"/><path d="M11.8 0.5 L18.2 0.5 L15 4 Z" fill="#141414"/></svg><div style="left:14px;top:210px;width:23px;height:23px;background:#ffad56;box-shadow:0 0 0 1px #1e1e1e;"></div><div class="t" style="left:14px;top:210px;width:23px;text-align:center;font-size:13px;line-height:23px;color:#111;font-weight:bold;">10</div><div style="left:14px;top:238px;width:23px;height:13px;background:#242424;"></div><div class="t" style="left:14px;top:238px;width:23px;text-align:center;font-size:11px;line-height:13px;color:#d0d0d0;">S</div><div style="left:14px;top:255px;width:23px;height:13px;background:#242424;"></div><svg style="position:absolute;left:14.5px;top:255.5px" width="22" height="12"><circle cx="11" cy="6" r="4" fill="#cfcfcf"/><path d="M11 3.2 V6.3 L9 7.8" stroke="#222" stroke-width="1.2" fill="none"/></svg></div><div style="left:601px;top:601px;width:2px;height:283px;background:#262626;"></div><div style="left:603px;top:601px;width:97px;height:283px;overflow:hidden;"><div style="left:0;top:0;width:97px;height:18px;background:#f7f07c;"></div><div class="t b" style="left:4px;top:2.5px;font-size:10.2px;font-weight:bold;color:rgba(0,0,0,0.8);line-height:14px;letter-spacing:0.1px;">Keys</div><div style="left:0;top:18px;width:97px;height:258px;background:#363636;"></div><div style="left:0;top:277px;width:97px;height:6px;background:#f7f07c;"></div><div style="left:8px;top:25px;width:36px;height:14px;background:#242424;border-radius:7px;box-shadow:0 0 0 0.5px #1a1a1a;"></div><div class="t" style="left:8px;top:25px;width:36px;text-align:center;font-size:11px;line-height:14px;color:#d4d4d4;">-16.0</div><div style="left:8px;top:44px;width:36px;height:13px;background:#242424;"></div><div class="t" style="left:8px;top:44px;width:36px;text-align:center;font-size:11px;line-height:13px;color:#d4d4d4;">-6.6</div><div style="left:61px;top:25px;width:13px;height:243px;background:#1c1c1c;border-radius:1px;"></div><div style="left:61.5px;top:265px;width:5.5px;height:3px;background:#17ec5a;"></div><div style="left:68px;top:265px;width:5.5px;height:3px;background:#17ec5a;"></div><div style="left:61.5px;top:135px;width:5.5px;height:2px;background:#20e060;"></div><div style="left:68px;top:114px;width:5.5px;height:2px;background:#c0e020;"></div><div style="left:67px;top:25px;width:1px;height:243px;background:#404040;"></div><div style="left:61px;top:50px;width:13px;height:1px;background:#9a9a9a;"></div><div style="left:55px;top:26.0px;width:4px;height:1px;background:#6a6a6a;"></div><div class="t" style="left:78px;top:25px;font-size:10px;line-height:12px;color:#b0b0b0;">6</div><div style="left:55px;top:50.0px;width:4px;height:1px;background:#6a6a6a;"></div><div class="t" style="left:78px;top:45.5px;font-size:10px;line-height:12px;color:#b0b0b0;">0</div><div style="left:55px;top:74.0px;width:4px;height:1px;background:#6a6a6a;"></div><div class="t" style="left:78px;top:69.5px;font-size:10px;line-height:12px;color:#b0b0b0;">6</div><div style="left:55px;top:98.0px;width:4px;height:1px;background:#6a6a6a;"></div><div class="t" style="left:78px;top:93.5px;font-size:10px;line-height:12px;color:#b0b0b0;">12</div><div style="left:55px;top:121.0px;width:4px;height:1px;background:#6a6a6a;"></div><div class="t" style="left:78px;top:116.5px;font-size:10px;line-height:12px;color:#b0b0b0;">18</div><div style="left:55px;top:145.0px;width:4px;height:1px;background:#6a6a6a;"></div><div class="t" style="left:78px;top:140.5px;font-size:10px;line-height:12px;color:#b0b0b0;">24</div><div style="left:55px;top:170.0px;width:4px;height:1px;background:#6a6a6a;"></div><div class="t" style="left:78px;top:165.5px;font-size:10px;line-height:12px;color:#b0b0b0;">30</div><div style="left:55px;top:191.0px;width:4px;height:1px;background:#6a6a6a;"></div><div class="t" style="left:78px;top:186.5px;font-size:10px;line-height:12px;color:#b0b0b0;">36</div><div style="left:55px;top:210.0px;width:4px;height:1px;background:#6a6a6a;"></div><div class="t" style="left:78px;top:205.5px;font-size:10px;line-height:12px;color:#b0b0b0;">42</div><div style="left:55px;top:225.5px;width:4px;height:1px;background:#6a6a6a;"></div><div class="t" style="left:78px;top:221px;font-size:10px;line-height:12px;color:#b0b0b0;">48</div><div style="left:55px;top:240.5px;width:4px;height:1px;background:#6a6a6a;"></div><div class="t" style="left:78px;top:236px;font-size:10px;line-height:12px;color:#b0b0b0;">54</div><div style="left:55px;top:254.0px;width:4px;height:1px;background:#6a6a6a;"></div><div class="t" style="left:78px;top:249.5px;font-size:10px;line-height:12px;color:#b0b0b0;">60</div><div style="left:55px;top:264px;width:4px;height:1px;background:#6a6a6a;"></div><svg style="position:absolute;left:48px;top:71px" width="13" height="14"><path d="M0.5 0.5 L12.5 7 L0.5 13.5 Z" fill="#bdbdbd"/></svg><svg style="position:absolute;left:10px;top:176px" width="30" height="32"><path d="M9.2 29.6 A13 13 0 1 1 20.8 29.6" fill="none" stroke="#141414" stroke-width="2.1"/><path d="M15 3.5 V18" stroke="#141414" stroke-width="1.7"/><path d="M11.8 0.5 L18.2 0.5 L15 4 Z" fill="#141414"/></svg><div style="left:14px;top:210px;width:23px;height:23px;background:#ffad56;box-shadow:0 0 0 1px #1e1e1e;"></div><div class="t" style="left:14px;top:210px;width:23px;text-align:center;font-size:13px;line-height:23px;color:#111;font-weight:bold;">11</div><div style="left:14px;top:238px;width:23px;height:13px;background:#242424;"></div><div class="t" style="left:14px;top:238px;width:23px;text-align:center;font-size:11px;line-height:13px;color:#d0d0d0;">S</div><div style="left:14px;top:255px;width:23px;height:13px;background:#242424;"></div><svg style="position:absolute;left:14.5px;top:255.5px" width="22" height="12"><circle cx="11" cy="6" r="4" fill="#cfcfcf"/><path d="M11 3.2 V6.3 L9 7.8" stroke="#222" stroke-width="1.2" fill="none"/></svg></div><div style="left:700px;top:601px;width:2px;height:283px;background:#262626;"></div><div style="left:702px;top:601px;width:97px;height:283px;overflow:hidden;"><div style="left:0;top:0;width:97px;height:18px;background:#ffa26a;"></div><div class="t b" style="left:4px;top:2.5px;font-size:10.2px;font-weight:bold;color:rgba(0,0,0,0.8);line-height:14px;letter-spacing:0.1px;">Pads</div><svg style="position:absolute;left:81px;top:2px" width="14" height="14"><circle cx="7" cy="7" r="6.1" fill="none" stroke="#2a2a3a" stroke-width="1.1"/><path d="M4.6 4.9 H9.4 M4.6 7 H9.4 M4.6 9.1 H9.4" stroke="#2a2a3a" stroke-width="1.1"/></svg><div style="left:0;top:18px;width:97px;height:258px;background:#363636;"></div><div style="left:0;top:277px;width:97px;height:6px;background:#ffa26a;"></div><div style="left:8px;top:25px;width:36px;height:14px;background:#242424;border-radius:7px;box-shadow:0 0 0 0.5px #1a1a1a;"></div><div class="t" style="left:8px;top:25px;width:36px;text-align:center;font-size:11px;line-height:14px;color:#d4d4d4;">-14.4</div><div style="left:8px;top:44px;width:36px;height:13px;background:#242424;"></div><div class="t" style="left:8px;top:44px;width:36px;text-align:center;font-size:11px;line-height:13px;color:#d4d4d4;">0</div><div style="left:61px;top:25px;width:13px;height:243px;background:#1c1c1c;border-radius:1px;"></div><div style="left:61.5px;top:192px;width:5.5px;height:76px;background:#17ec5a;"></div><div style="left:68px;top:187px;width:5.5px;height:81px;background:#17ec5a;"></div><div style="left:61.5px;top:107px;width:5.5px;height:2px;background:#c0e020;"></div><div style="left:68px;top:115px;width:5.5px;height:2px;background:#c0e020;"></div><div style="left:67px;top:25px;width:1px;height:243px;background:#404040;"></div><div style="left:61px;top:50px;width:13px;height:1px;background:#9a9a9a;"></div><div style="left:55px;top:26.0px;width:4px;height:1px;background:#6a6a6a;"></div><div class="t" style="left:78px;top:25px;font-size:10px;line-height:12px;color:#b0b0b0;">6</div><div style="left:55px;top:50.0px;width:4px;height:1px;background:#6a6a6a;"></div><div class="t" style="left:78px;top:45.5px;font-size:10px;line-height:12px;color:#b0b0b0;">0</div><div style="left:55px;top:74.0px;width:4px;height:1px;background:#6a6a6a;"></div><div class="t" style="left:78px;top:69.5px;font-size:10px;line-height:12px;color:#b0b0b0;">6</div><div style="left:55px;top:98.0px;width:4px;height:1px;background:#6a6a6a;"></div><div class="t" style="left:78px;top:93.5px;font-size:10px;line-height:12px;color:#b0b0b0;">12</div><div style="left:55px;top:121.0px;width:4px;height:1px;background:#6a6a6a;"></div><div class="t" style="left:78px;top:116.5px;font-size:10px;line-height:12px;color:#b0b0b0;">18</div><div style="left:55px;top:145.0px;width:4px;height:1px;background:#6a6a6a;"></div><div class="t" style="left:78px;top:140.5px;font-size:10px;line-height:12px;color:#b0b0b0;">24</div><div style="left:55px;top:170.0px;width:4px;height:1px;background:#6a6a6a;"></div><div class="t" style="left:78px;top:165.5px;font-size:10px;line-height:12px;color:#b0b0b0;">30</div><div style="left:55px;top:191.0px;width:4px;height:1px;background:#6a6a6a;"></div><div class="t" style="left:78px;top:186.5px;font-size:10px;line-height:12px;color:#b0b0b0;">36</div><div style="left:55px;top:210.0px;width:4px;height:1px;background:#6a6a6a;"></div><div class="t" style="left:78px;top:205.5px;font-size:10px;line-height:12px;color:#b0b0b0;">42</div><div style="left:55px;top:225.5px;width:4px;height:1px;background:#6a6a6a;"></div><div class="t" style="left:78px;top:221px;font-size:10px;line-height:12px;color:#b0b0b0;">48</div><div style="left:55px;top:240.5px;width:4px;height:1px;background:#6a6a6a;"></div><div class="t" style="left:78px;top:236px;font-size:10px;line-height:12px;color:#b0b0b0;">54</div><div style="left:55px;top:254.0px;width:4px;height:1px;background:#6a6a6a;"></div><div class="t" style="left:78px;top:249.5px;font-size:10px;line-height:12px;color:#b0b0b0;">60</div><div style="left:55px;top:264px;width:4px;height:1px;background:#6a6a6a;"></div><svg style="position:absolute;left:48px;top:43px" width="13" height="14"><path d="M0.5 0.5 L12.5 7 L0.5 13.5 Z" fill="#bdbdbd"/></svg><svg style="position:absolute;left:10px;top:176px" width="30" height="32"><path d="M9.2 29.6 A13 13 0 1 1 20.8 29.6" fill="none" stroke="#141414" stroke-width="2.1"/><path d="M15 3.5 V18" stroke="#141414" stroke-width="1.7"/><path d="M11.8 0.5 L18.2 0.5 L15 4 Z" fill="#141414"/></svg><div style="left:14px;top:210px;width:23px;height:23px;background:#ffad56;box-shadow:0 0 0 1px #1e1e1e;"></div><div class="t" style="left:14px;top:210px;width:23px;text-align:center;font-size:13px;line-height:23px;color:#111;font-weight:bold;">12</div><div style="left:14px;top:238px;width:23px;height:13px;background:#242424;"></div><div class="t" style="left:14px;top:238px;width:23px;text-align:center;font-size:11px;line-height:13px;color:#d0d0d0;">S</div></div><div style="left:799px;top:601px;width:2px;height:283px;background:#262626;"></div><div style="left:801px;top:601px;width:97px;height:283px;overflow:hidden;"><div style="left:0;top:0;width:97px;height:18px;background:#ff939c;"></div><div class="t b" style="left:4px;top:2.5px;font-size:10.2px;font-weight:bold;color:rgba(0,0,0,0.8);line-height:14px;letter-spacing:0.1px;">Ambience</div><div style="left:0;top:18px;width:97px;height:258px;background:#363636;"></div><div style="left:0;top:277px;width:97px;height:6px;background:#ff939c;"></div><div style="left:8px;top:25px;width:36px;height:14px;background:#242424;border-radius:7px;box-shadow:0 0 0 0.5px #1a1a1a;"></div><div class="t" style="left:8px;top:25px;width:36px;text-align:center;font-size:11px;line-height:14px;color:#d4d4d4;">-29.7</div><div style="left:8px;top:44px;width:36px;height:13px;background:#242424;"></div><div class="t" style="left:8px;top:44px;width:36px;text-align:center;font-size:11px;line-height:13px;color:#d4d4d4;">-8.3</div><div style="left:61px;top:25px;width:13px;height:243px;background:#1c1c1c;border-radius:1px;"></div><div style="left:61.5px;top:184px;width:5.5px;height:28px;background:#18a040;"></div><div style="left:61.5px;top:212px;width:5.5px;height:56px;background:#17ec5a;"></div><div style="left:68px;top:191px;width:5.5px;height:21px;background:#18a040;"></div><div style="left:68px;top:212px;width:5.5px;height:56px;background:#17ec5a;"></div><div style="left:61.5px;top:173px;width:5.5px;height:2px;background:#20e060;"></div><div style="left:68px;top:169px;width:5.5px;height:2px;background:#20e060;"></div><div style="left:67px;top:25px;width:1px;height:243px;background:#404040;"></div><div style="left:61px;top:50px;width:13px;height:1px;background:#9a9a9a;"></div><div style="left:55px;top:26.0px;width:4px;height:1px;background:#6a6a6a;"></div><div class="t" style="left:78px;top:25px;font-size:10px;line-height:12px;color:#b0b0b0;">6</div><div style="left:55px;top:50.0px;width:4px;height:1px;background:#6a6a6a;"></div><div class="t" style="left:78px;top:45.5px;font-size:10px;line-height:12px;color:#b0b0b0;">0</div><div style="left:55px;top:74.0px;width:4px;height:1px;background:#6a6a6a;"></div><div class="t" style="left:78px;top:69.5px;font-size:10px;line-height:12px;color:#b0b0b0;">6</div><div style="left:55px;top:98.0px;width:4px;height:1px;background:#6a6a6a;"></div><div class="t" style="left:78px;top:93.5px;font-size:10px;line-height:12px;color:#b0b0b0;">12</div><div style="left:55px;top:121.0px;width:4px;height:1px;background:#6a6a6a;"></div><div class="t" style="left:78px;top:116.5px;font-size:10px;line-height:12px;color:#b0b0b0;">18</div><div style="left:55px;top:145.0px;width:4px;height:1px;background:#6a6a6a;"></div><div class="t" style="left:78px;top:140.5px;font-size:10px;line-height:12px;color:#b0b0b0;">24</div><div style="left:55px;top:170.0px;width:4px;height:1px;background:#6a6a6a;"></div><div class="t" style="left:78px;top:165.5px;font-size:10px;line-height:12px;color:#b0b0b0;">30</div><div style="left:55px;top:191.0px;width:4px;height:1px;background:#6a6a6a;"></div><div class="t" style="left:78px;top:186.5px;font-size:10px;line-height:12px;color:#b0b0b0;">36</div><div style="left:55px;top:210.0px;width:4px;height:1px;background:#6a6a6a;"></div><div class="t" style="left:78px;top:205.5px;font-size:10px;line-height:12px;color:#b0b0b0;">42</div><div style="left:55px;top:225.5px;width:4px;height:1px;background:#6a6a6a;"></div><div class="t" style="left:78px;top:221px;font-size:10px;line-height:12px;color:#b0b0b0;">48</div><div style="left:55px;top:240.5px;width:4px;height:1px;background:#6a6a6a;"></div><div class="t" style="left:78px;top:236px;font-size:10px;line-height:12px;color:#b0b0b0;">54</div><div style="left:55px;top:254.0px;width:4px;height:1px;background:#6a6a6a;"></div><div class="t" style="left:78px;top:249.5px;font-size:10px;line-height:12px;color:#b0b0b0;">60</div><div style="left:55px;top:264px;width:4px;height:1px;background:#6a6a6a;"></div><svg style="position:absolute;left:48px;top:77px" width="13" height="14"><path d="M0.5 0.5 L12.5 7 L0.5 13.5 Z" fill="#bdbdbd"/></svg><svg style="position:absolute;left:10px;top:176px" width="30" height="32"><path d="M9.2 29.6 A13 13 0 1 1 20.8 29.6" fill="none" stroke="#141414" stroke-width="2.1"/><path d="M15 3.5 V18" stroke="#141414" stroke-width="1.7"/><path d="M11.8 0.5 L18.2 0.5 L15 4 Z" fill="#141414"/></svg><div style="left:14px;top:210px;width:23px;height:23px;background:#ffad56;box-shadow:0 0 0 1px #1e1e1e;"></div><div class="t" style="left:14px;top:210px;width:23px;text-align:center;font-size:13px;line-height:23px;color:#111;font-weight:bold;">16</div><div style="left:14px;top:238px;width:23px;height:13px;background:#242424;"></div><div class="t" style="left:14px;top:238px;width:23px;text-align:center;font-size:11px;line-height:13px;color:#d0d0d0;">S</div><div style="left:14px;top:255px;width:23px;height:13px;background:#242424;"></div><svg style="position:absolute;left:14.5px;top:255.5px" width="22" height="12"><circle cx="11" cy="6" r="3.8" fill="#777"/></svg></div><div style="left:898px;top:601px;width:2px;height:283px;background:#262626;"></div><div style="left:900px;top:601px;width:97px;height:283px;overflow:hidden;"><div style="left:0;top:0;width:97px;height:18px;background:#ff939c;"></div><div class="t b" style="left:4px;top:2.5px;font-size:10.2px;font-weight:bold;color:rgba(0,0,0,0.8);line-height:14px;letter-spacing:0.1px;">Drone</div><div style="left:0;top:18px;width:97px;height:258px;background:#363636;"></div><div style="left:0;top:277px;width:97px;height:6px;background:#ff939c;"></div><div style="left:8px;top:25px;width:36px;height:14px;background:#242424;border-radius:7px;box-shadow:0 0 0 0.5px #1a1a1a;"></div><div class="t" style="left:8px;top:25px;width:36px;text-align:center;font-size:11px;line-height:14px;color:#d4d4d4;">-25.0</div><div style="left:8px;top:44px;width:36px;height:13px;background:#242424;"></div><div class="t" style="left:8px;top:44px;width:36px;text-align:center;font-size:11px;line-height:13px;color:#d4d4d4;">-15.6</div><div style="left:61px;top:25px;width:13px;height:243px;background:#1c1c1c;border-radius:1px;"></div><div style="left:61.5px;top:161px;width:5.5px;height:34px;background:#18a040;"></div><div style="left:61.5px;top:195px;width:5.5px;height:73px;background:#17ec5a;"></div><div style="left:68px;top:168px;width:5.5px;height:19px;background:#18a040;"></div><div style="left:68px;top:187px;width:5.5px;height:81px;background:#17ec5a;"></div><div style="left:61.5px;top:160px;width:5.5px;height:2px;background:#20e060;"></div><div style="left:68px;top:150px;width:5.5px;height:2px;background:#20e060;"></div><div style="left:67px;top:25px;width:1px;height:243px;background:#404040;"></div><div style="left:61px;top:50px;width:13px;height:1px;background:#9a9a9a;"></div><div style="left:55px;top:26.0px;width:4px;height:1px;background:#6a6a6a;"></div><div class="t" style="left:78px;top:25px;font-size:10px;line-height:12px;color:#b0b0b0;">6</div><div style="left:55px;top:50.0px;width:4px;height:1px;background:#6a6a6a;"></div><div class="t" style="left:78px;top:45.5px;font-size:10px;line-height:12px;color:#b0b0b0;">0</div><div style="left:55px;top:74.0px;width:4px;height:1px;background:#6a6a6a;"></div><div class="t" style="left:78px;top:69.5px;font-size:10px;line-height:12px;color:#b0b0b0;">6</div><div style="left:55px;top:98.0px;width:4px;height:1px;background:#6a6a6a;"></div><div class="t" style="left:78px;top:93.5px;font-size:10px;line-height:12px;color:#b0b0b0;">12</div><div style="left:55px;top:121.0px;width:4px;height:1px;background:#6a6a6a;"></div><div class="t" style="left:78px;top:116.5px;font-size:10px;line-height:12px;color:#b0b0b0;">18</div><div style="left:55px;top:145.0px;width:4px;height:1px;background:#6a6a6a;"></div><div class="t" style="left:78px;top:140.5px;font-size:10px;line-height:12px;color:#b0b0b0;">24</div><div style="left:55px;top:170.0px;width:4px;height:1px;background:#6a6a6a;"></div><div class="t" style="left:78px;top:165.5px;font-size:10px;line-height:12px;color:#b0b0b0;">30</div><div style="left:55px;top:191.0px;width:4px;height:1px;background:#6a6a6a;"></div><div class="t" style="left:78px;top:186.5px;font-size:10px;line-height:12px;color:#b0b0b0;">36</div><div style="left:55px;top:210.0px;width:4px;height:1px;background:#6a6a6a;"></div><div class="t" style="left:78px;top:205.5px;font-size:10px;line-height:12px;color:#b0b0b0;">42</div><div style="left:55px;top:225.5px;width:4px;height:1px;background:#6a6a6a;"></div><div class="t" style="left:78px;top:221px;font-size:10px;line-height:12px;color:#b0b0b0;">48</div><div style="left:55px;top:240.5px;width:4px;height:1px;background:#6a6a6a;"></div><div class="t" style="left:78px;top:236px;font-size:10px;line-height:12px;color:#b0b0b0;">54</div><div style="left:55px;top:254.0px;width:4px;height:1px;background:#6a6a6a;"></div><div class="t" style="left:78px;top:249.5px;font-size:10px;line-height:12px;color:#b0b0b0;">60</div><div style="left:55px;top:264px;width:4px;height:1px;background:#6a6a6a;"></div><svg style="position:absolute;left:48px;top:106px" width="13" height="14"><path d="M0.5 0.5 L12.5 7 L0.5 13.5 Z" fill="#bdbdbd"/></svg><svg style="position:absolute;left:10px;top:176px" width="30" height="32"><path d="M9.2 29.6 A13 13 0 1 1 20.8 29.6" fill="none" stroke="#141414" stroke-width="2.1"/><path d="M15 3.5 V18" stroke="#141414" stroke-width="1.7"/><path d="M11.8 0.5 L18.2 0.5 L15 4 Z" fill="#141414"/></svg><div style="left:14px;top:210px;width:23px;height:23px;background:#ffad56;box-shadow:0 0 0 1px #1e1e1e;"></div><div class="t" style="left:14px;top:210px;width:23px;text-align:center;font-size:13px;line-height:23px;color:#111;font-weight:bold;">17</div><div style="left:14px;top:238px;width:23px;height:13px;background:#242424;"></div><div class="t" style="left:14px;top:238px;width:23px;text-align:center;font-size:11px;line-height:13px;color:#d0d0d0;">S</div><div style="left:14px;top:255px;width:23px;height:13px;background:#242424;"></div><svg style="position:absolute;left:14.5px;top:255.5px" width="22" height="12"><circle cx="11" cy="6" r="3.8" fill="#777"/></svg></div><div style="left:997px;top:601px;width:2px;height:283px;background:#262626;"></div><div style="left:999px;top:601px;width:97px;height:283px;overflow:hidden;"><div style="left:0;top:0;width:97px;height:18px;background:#d96ce5;"></div><div class="t b" style="left:4px;top:2.5px;font-size:10.2px;font-weight:bold;color:rgba(0,0,0,0.8);line-height:14px;letter-spacing:0.1px;">FX</div><div style="left:0;top:18px;width:97px;height:258px;background:#363636;"></div><div style="left:0;top:277px;width:97px;height:6px;background:#d96ce5;"></div><div style="left:8px;top:25px;width:36px;height:14px;background:#242424;border-radius:7px;box-shadow:0 0 0 0.5px #1a1a1a;"></div><div class="t" style="left:8px;top:25px;width:36px;text-align:center;font-size:11px;line-height:14px;color:#d4d4d4;">-19.6</div><div style="left:8px;top:44px;width:36px;height:13px;background:#242424;"></div><div class="t" style="left:8px;top:44px;width:36px;text-align:center;font-size:11px;line-height:13px;color:#d4d4d4;">-4.1</div><div style="left:61px;top:25px;width:13px;height:243px;background:#1c1c1c;border-radius:1px;"></div><div style="left:61.5px;top:140px;width:5.5px;height:29px;background:#18a040;"></div><div style="left:61.5px;top:169px;width:5.5px;height:99px;background:#17ec5a;"></div><div style="left:68px;top:135px;width:5.5px;height:26px;background:#18a040;"></div><div style="left:68px;top:161px;width:5.5px;height:107px;background:#17ec5a;"></div><div style="left:61.5px;top:133px;width:5.5px;height:2px;background:#20e060;"></div><div style="left:68px;top:128px;width:5.5px;height:2px;background:#20e060;"></div><div style="left:67px;top:25px;width:1px;height:243px;background:#404040;"></div><div style="left:61px;top:50px;width:13px;height:1px;background:#9a9a9a;"></div><div style="left:55px;top:26.0px;width:4px;height:1px;background:#6a6a6a;"></div><div class="t" style="left:78px;top:25px;font-size:10px;line-height:12px;color:#b0b0b0;">6</div><div style="left:55px;top:50.0px;width:4px;height:1px;background:#6a6a6a;"></div><div class="t" style="left:78px;top:45.5px;font-size:10px;line-height:12px;color:#b0b0b0;">0</div><div style="left:55px;top:74.0px;width:4px;height:1px;background:#6a6a6a;"></div><div class="t" style="left:78px;top:69.5px;font-size:10px;line-height:12px;color:#b0b0b0;">6</div><div style="left:55px;top:98.0px;width:4px;height:1px;background:#6a6a6a;"></div><div class="t" style="left:78px;top:93.5px;font-size:10px;line-height:12px;color:#b0b0b0;">12</div><div style="left:55px;top:121.0px;width:4px;height:1px;background:#6a6a6a;"></div><div class="t" style="left:78px;top:116.5px;font-size:10px;line-height:12px;color:#b0b0b0;">18</div><div style="left:55px;top:145.0px;width:4px;height:1px;background:#6a6a6a;"></div><div class="t" style="left:78px;top:140.5px;font-size:10px;line-height:12px;color:#b0b0b0;">24</div><div style="left:55px;top:170.0px;width:4px;height:1px;background:#6a6a6a;"></div><div class="t" style="left:78px;top:165.5px;font-size:10px;line-height:12px;color:#b0b0b0;">30</div><div style="left:55px;top:191.0px;width:4px;height:1px;background:#6a6a6a;"></div><div class="t" style="left:78px;top:186.5px;font-size:10px;line-height:12px;color:#b0b0b0;">36</div><div style="left:55px;top:210.0px;width:4px;height:1px;background:#6a6a6a;"></div><div class="t" style="left:78px;top:205.5px;font-size:10px;line-height:12px;color:#b0b0b0;">42</div><div style="left:55px;top:225.5px;width:4px;height:1px;background:#6a6a6a;"></div><div class="t" style="left:78px;top:221px;font-size:10px;line-height:12px;color:#b0b0b0;">48</div><div style="left:55px;top:240.5px;width:4px;height:1px;background:#6a6a6a;"></div><div class="t" style="left:78px;top:236px;font-size:10px;line-height:12px;color:#b0b0b0;">54</div><div style="left:55px;top:254.0px;width:4px;height:1px;background:#6a6a6a;"></div><div class="t" style="left:78px;top:249.5px;font-size:10px;line-height:12px;color:#b0b0b0;">60</div><div style="left:55px;top:264px;width:4px;height:1px;background:#6a6a6a;"></div><svg style="position:absolute;left:48px;top:60px" width="13" height="14"><path d="M0.5 0.5 L12.5 7 L0.5 13.5 Z" fill="#bdbdbd"/></svg><svg style="position:absolute;left:10px;top:176px" width="30" height="32"><path d="M9.2 29.6 A13 13 0 1 1 20.8 29.6" fill="none" stroke="#141414" stroke-width="2.1"/><path d="M15 3.5 V18" stroke="#141414" stroke-width="1.7"/><path d="M11.8 0.5 L18.2 0.5 L15 4 Z" fill="#141414"/></svg><div style="left:14px;top:210px;width:23px;height:23px;background:#ffad56;box-shadow:0 0 0 1px #1e1e1e;"></div><div class="t" style="left:14px;top:210px;width:23px;text-align:center;font-size:13px;line-height:23px;color:#111;font-weight:bold;">18</div><div style="left:14px;top:238px;width:23px;height:13px;background:#242424;"></div><div class="t" style="left:14px;top:238px;width:23px;text-align:center;font-size:11px;line-height:13px;color:#d0d0d0;">S</div><div style="left:14px;top:255px;width:23px;height:13px;background:#242424;"></div><svg style="position:absolute;left:14.5px;top:255.5px" width="22" height="12"><circle cx="11" cy="6" r="3.8" fill="#777"/></svg></div><div style="left:1096px;top:601px;width:2px;height:283px;background:#262626;"></div><div style="left:1098px;top:601px;width:89px;height:283px;overflow:hidden;"><div style="left:0;top:0;width:89px;height:18px;background:#d96ce5;"></div><div class="t b" style="left:4px;top:2.5px;font-size:10.2px;font-weight:bold;color:rgba(0,0,0,0.8);line-height:14px;letter-spacing:0.1px;">Zap</div><div style="left:0;top:18px;width:89px;height:258px;background:#363636;"></div><div style="left:0;top:277px;width:89px;height:6px;background:#d96ce5;"></div><div style="left:19px;top:25px;width:36px;height:14px;background:#242424;border-radius:7px;box-shadow:0 0 0 0.5px #1a1a1a;"></div><div class="t" style="left:19px;top:25px;width:36px;text-align:center;font-size:11px;line-height:14px;color:#d4d4d4;">-24.6</div><div style="left:19px;top:44px;width:36px;height:13px;background:#242424;"></div><div class="t" style="left:19px;top:44px;width:36px;text-align:center;font-size:11px;line-height:13px;color:#d4d4d4;">-19.4</div><div style="left:72px;top:25px;width:13px;height:243px;background:#1c1c1c;border-radius:1px;"></div><div style="left:72.5px;top:165px;width:5.5px;height:30px;background:#18a040;"></div><div style="left:72.5px;top:195px;width:5.5px;height:73px;background:#17ec5a;"></div><div style="left:79px;top:160px;width:5.5px;height:34px;background:#18a040;"></div><div style="left:79px;top:194px;width:5.5px;height:74px;background:#17ec5a;"></div><div style="left:72.5px;top:149px;width:5.5px;height:2px;background:#20e060;"></div><div style="left:79px;top:151px;width:5.5px;height:2px;background:#20e060;"></div><div style="left:78px;top:25px;width:1px;height:243px;background:#404040;"></div><div style="left:72px;top:50px;width:13px;height:1px;background:#9a9a9a;"></div><div style="left:66px;top:26.0px;width:4px;height:1px;background:#6a6a6a;"></div><div style="left:66px;top:50.0px;width:4px;height:1px;background:#6a6a6a;"></div><div style="left:66px;top:74.0px;width:4px;height:1px;background:#6a6a6a;"></div><div style="left:66px;top:98.0px;width:4px;height:1px;background:#6a6a6a;"></div><div style="left:66px;top:121.0px;width:4px;height:1px;background:#6a6a6a;"></div><div style="left:66px;top:145.0px;width:4px;height:1px;background:#6a6a6a;"></div><div style="left:66px;top:170.0px;width:4px;height:1px;background:#6a6a6a;"></div><div style="left:66px;top:191.0px;width:4px;height:1px;background:#6a6a6a;"></div><div style="left:66px;top:210.0px;width:4px;height:1px;background:#6a6a6a;"></div><div style="left:66px;top:225.5px;width:4px;height:1px;background:#6a6a6a;"></div><div style="left:66px;top:240.5px;width:4px;height:1px;background:#6a6a6a;"></div><div style="left:66px;top:254.0px;width:4px;height:1px;background:#6a6a6a;"></div><div style="left:66px;top:264px;width:4px;height:1px;background:#6a6a6a;"></div><svg style="position:absolute;left:59px;top:121.5px" width="13" height="14"><path d="M0.5 0.5 L12.5 7 L0.5 13.5 Z" fill="#bdbdbd"/></svg><svg style="position:absolute;left:21px;top:176px" width="30" height="32"><path d="M9.2 29.6 A13 13 0 1 1 20.8 29.6" fill="none" stroke="#141414" stroke-width="2.1"/><path d="M15 3.5 V18" stroke="#141414" stroke-width="1.7"/><path d="M11.8 0.5 L18.2 0.5 L15 4 Z" fill="#141414"/></svg><div style="left:25px;top:210px;width:23px;height:23px;background:#ffad56;box-shadow:0 0 0 1px #1e1e1e;"></div><div class="t" style="left:25px;top:210px;width:23px;text-align:center;font-size:13px;line-height:23px;color:#111;font-weight:bold;">19</div><div style="left:25px;top:238px;width:23px;height:13px;background:#242424;"></div><div class="t" style="left:25px;top:238px;width:23px;text-align:center;font-size:11px;line-height:13px;color:#d0d0d0;">S</div><div style="left:25px;top:255px;width:23px;height:13px;background:#242424;"></div><svg style="position:absolute;left:25.5px;top:255.5px" width="22" height="12"><circle cx="11" cy="6" r="4" fill="#cfcfcf"/><path d="M11 3.2 V6.3 L9 7.8" stroke="#222" stroke-width="1.2" fill="none"/></svg></div><div style="left:1187px;top:601px;width:2px;height:283px;background:#262626;"></div><div style="left:1189px;top:601px;width:97px;height:283px;overflow:hidden;"><div style="left:0;top:0;width:97px;height:18px;background:#d0d0d0;"></div><div class="t b" style="left:4px;top:2.5px;font-size:10.2px;font-weight:bold;color:rgba(0,0,0,0.8);line-height:14px;letter-spacing:0.1px;">A Reverb</div><div style="left:0;top:18px;width:97px;height:258px;background:#363636;"></div><div style="left:0;top:277px;width:97px;height:6px;background:#d0d0d0;"></div><div style="left:8px;top:25px;width:36px;height:14px;background:#242424;border-radius:7px;box-shadow:0 0 0 0.5px #1a1a1a;"></div><div class="t" style="left:8px;top:25px;width:36px;text-align:center;font-size:11px;line-height:14px;color:#d4d4d4;">-50.9</div><div style="left:8px;top:44px;width:36px;height:13px;background:#242424;"></div><div class="t" style="left:8px;top:44px;width:36px;text-align:center;font-size:11px;line-height:13px;color:#d4d4d4;">0</div><div style="left:61px;top:25px;width:13px;height:243px;background:#1c1c1c;border-radius:1px;"></div><div style="left:61.5px;top:241px;width:5.5px;height:15px;background:#18a040;"></div><div style="left:61.5px;top:256px;width:5.5px;height:12px;background:#17ec5a;"></div><div style="left:68px;top:238px;width:5.5px;height:20px;background:#18a040;"></div><div style="left:68px;top:258px;width:5.5px;height:10px;background:#17ec5a;"></div><div style="left:61.5px;top:232px;width:5.5px;height:2px;background:#20e060;"></div><div style="left:68px;top:237px;width:5.5px;height:2px;background:#20e060;"></div><div style="left:67px;top:25px;width:1px;height:243px;background:#404040;"></div><div style="left:61px;top:50px;width:13px;height:1px;background:#9a9a9a;"></div><div style="left:55px;top:26.0px;width:4px;height:1px;background:#6a6a6a;"></div><div class="t" style="left:78px;top:25px;font-size:10px;line-height:12px;color:#b0b0b0;">6</div><div style="left:55px;top:50.0px;width:4px;height:1px;background:#6a6a6a;"></div><div class="t" style="left:78px;top:45.5px;font-size:10px;line-height:12px;color:#b0b0b0;">0</div><div style="left:55px;top:74.0px;width:4px;height:1px;background:#6a6a6a;"></div><div class="t" style="left:78px;top:69.5px;font-size:10px;line-height:12px;color:#b0b0b0;">6</div><div style="left:55px;top:98.0px;width:4px;height:1px;background:#6a6a6a;"></div><div class="t" style="left:78px;top:93.5px;font-size:10px;line-height:12px;color:#b0b0b0;">12</div><div style="left:55px;top:121.0px;width:4px;height:1px;background:#6a6a6a;"></div><div class="t" style="left:78px;top:116.5px;font-size:10px;line-height:12px;color:#b0b0b0;">18</div><div style="left:55px;top:145.0px;width:4px;height:1px;background:#6a6a6a;"></div><div class="t" style="left:78px;top:140.5px;font-size:10px;line-height:12px;color:#b0b0b0;">24</div><div style="left:55px;top:170.0px;width:4px;height:1px;background:#6a6a6a;"></div><div class="t" style="left:78px;top:165.5px;font-size:10px;line-height:12px;color:#b0b0b0;">30</div><div style="left:55px;top:191.0px;width:4px;height:1px;background:#6a6a6a;"></div><div class="t" style="left:78px;top:186.5px;font-size:10px;line-height:12px;color:#b0b0b0;">36</div><div style="left:55px;top:210.0px;width:4px;height:1px;background:#6a6a6a;"></div><div class="t" style="left:78px;top:205.5px;font-size:10px;line-height:12px;color:#b0b0b0;">42</div><div style="left:55px;top:225.5px;width:4px;height:1px;background:#6a6a6a;"></div><div class="t" style="left:78px;top:221px;font-size:10px;line-height:12px;color:#b0b0b0;">48</div><div style="left:55px;top:240.5px;width:4px;height:1px;background:#6a6a6a;"></div><div class="t" style="left:78px;top:236px;font-size:10px;line-height:12px;color:#b0b0b0;">54</div><div style="left:55px;top:254.0px;width:4px;height:1px;background:#6a6a6a;"></div><div class="t" style="left:78px;top:249.5px;font-size:10px;line-height:12px;color:#b0b0b0;">60</div><div style="left:55px;top:264px;width:4px;height:1px;background:#6a6a6a;"></div><svg style="position:absolute;left:48px;top:43px" width="13" height="14"><path d="M0.5 0.5 L12.5 7 L0.5 13.5 Z" fill="#bdbdbd"/></svg><svg style="position:absolute;left:10px;top:176px" width="30" height="32"><path d="M9.2 29.6 A13 13 0 1 1 20.8 29.6" fill="none" stroke="#141414" stroke-width="2.1"/><path d="M15 3.5 V18" stroke="#141414" stroke-width="1.7"/><path d="M11.8 0.5 L18.2 0.5 L15 4 Z" fill="#141414"/></svg><div style="left:14px;top:210px;width:23px;height:23px;background:#ffad56;box-shadow:0 0 0 1px #1e1e1e;"></div><div class="t" style="left:14px;top:210px;width:23px;text-align:center;font-size:13px;line-height:23px;color:#111;font-weight:bold;">A</div><div style="left:14px;top:238px;width:23px;height:13px;background:#242424;"></div><div class="t" style="left:14px;top:238px;width:23px;text-align:center;font-size:11px;line-height:13px;color:#d0d0d0;">S</div></div><div style="left:1286px;top:601px;width:2px;height:283px;background:#262626;"></div><div style="left:1288px;top:601px;width:97px;height:283px;overflow:hidden;"><div style="left:0;top:0;width:97px;height:18px;background:#d0d0d0;"></div><div class="t b" style="left:4px;top:2.5px;font-size:10.2px;font-weight:bold;color:rgba(0,0,0,0.8);line-height:14px;letter-spacing:0.1px;">B Delay</div><div style="left:0;top:18px;width:97px;height:258px;background:#363636;"></div><div style="left:0;top:277px;width:97px;height:6px;background:#d0d0d0;"></div><div style="left:8px;top:25px;width:36px;height:14px;background:#242424;border-radius:7px;box-shadow:0 0 0 0.5px #1a1a1a;"></div><div class="t" style="left:8px;top:25px;width:36px;text-align:center;font-size:11px;line-height:14px;color:#d4d4d4;">-55.2</div><div style="left:8px;top:44px;width:36px;height:13px;background:#242424;"></div><div class="t" style="left:8px;top:44px;width:36px;text-align:center;font-size:11px;line-height:13px;color:#d4d4d4;">0</div><div style="left:61px;top:25px;width:13px;height:243px;background:#1c1c1c;border-radius:1px;"></div><div style="left:61.5px;top:262px;width:5.5px;height:6px;background:#17ec5a;"></div><div style="left:68px;top:253px;width:5.5px;height:15px;background:#17ec5a;"></div><div style="left:61.5px;top:245px;width:5.5px;height:2px;background:#20e060;"></div><div style="left:68px;top:242px;width:5.5px;height:2px;background:#20e060;"></div><div style="left:67px;top:25px;width:1px;height:243px;background:#404040;"></div><div style="left:61px;top:50px;width:13px;height:1px;background:#9a9a9a;"></div><div style="left:55px;top:26.0px;width:4px;height:1px;background:#6a6a6a;"></div><div class="t" style="left:78px;top:25px;font-size:10px;line-height:12px;color:#b0b0b0;">6</div><div style="left:55px;top:50.0px;width:4px;height:1px;background:#6a6a6a;"></div><div class="t" style="left:78px;top:45.5px;font-size:10px;line-height:12px;color:#b0b0b0;">0</div><div style="left:55px;top:74.0px;width:4px;height:1px;background:#6a6a6a;"></div><div class="t" style="left:78px;top:69.5px;font-size:10px;line-height:12px;color:#b0b0b0;">6</div><div style="left:55px;top:98.0px;width:4px;height:1px;background:#6a6a6a;"></div><div class="t" style="left:78px;top:93.5px;font-size:10px;line-height:12px;color:#b0b0b0;">12</div><div style="left:55px;top:121.0px;width:4px;height:1px;background:#6a6a6a;"></div><div class="t" style="left:78px;top:116.5px;font-size:10px;line-height:12px;color:#b0b0b0;">18</div><div style="left:55px;top:145.0px;width:4px;height:1px;background:#6a6a6a;"></div><div class="t" style="left:78px;top:140.5px;font-size:10px;line-height:12px;color:#b0b0b0;">24</div><div style="left:55px;top:170.0px;width:4px;height:1px;background:#6a6a6a;"></div><div class="t" style="left:78px;top:165.5px;font-size:10px;line-height:12px;color:#b0b0b0;">30</div><div style="left:55px;top:191.0px;width:4px;height:1px;background:#6a6a6a;"></div><div class="t" style="left:78px;top:186.5px;font-size:10px;line-height:12px;color:#b0b0b0;">36</div><div style="left:55px;top:210.0px;width:4px;height:1px;background:#6a6a6a;"></div><div class="t" style="left:78px;top:205.5px;font-size:10px;line-height:12px;color:#b0b0b0;">42</div><div style="left:55px;top:225.5px;width:4px;height:1px;background:#6a6a6a;"></div><div class="t" style="left:78px;top:221px;font-size:10px;line-height:12px;color:#b0b0b0;">48</div><div style="left:55px;top:240.5px;width:4px;height:1px;background:#6a6a6a;"></div><div class="t" style="left:78px;top:236px;font-size:10px;line-height:12px;color:#b0b0b0;">54</div><div style="left:55px;top:254.0px;width:4px;height:1px;background:#6a6a6a;"></div><div class="t" style="left:78px;top:249.5px;font-size:10px;line-height:12px;color:#b0b0b0;">60</div><div style="left:55px;top:264px;width:4px;height:1px;background:#6a6a6a;"></div><svg style="position:absolute;left:48px;top:43px" width="13" height="14"><path d="M0.5 0.5 L12.5 7 L0.5 13.5 Z" fill="#bdbdbd"/></svg><svg style="position:absolute;left:10px;top:176px" width="30" height="32"><path d="M9.2 29.6 A13 13 0 1 1 20.8 29.6" fill="none" stroke="#141414" stroke-width="2.1"/><path d="M15 3.5 V18" stroke="#141414" stroke-width="1.7"/><path d="M11.8 0.5 L18.2 0.5 L15 4 Z" fill="#141414"/></svg><div style="left:14px;top:210px;width:23px;height:23px;background:#ffad56;box-shadow:0 0 0 1px #1e1e1e;"></div><div class="t" style="left:14px;top:210px;width:23px;text-align:center;font-size:13px;line-height:23px;color:#111;font-weight:bold;">B</div><div style="left:14px;top:238px;width:23px;height:13px;background:#242424;"></div><div class="t" style="left:14px;top:238px;width:23px;text-align:center;font-size:11px;line-height:13px;color:#d0d0d0;">S</div></div><div style="left:1385px;top:601px;width:2px;height:283px;background:#262626;"></div><div style="left:1387px;top:601px;width:103px;height:283px;overflow:hidden;"><div style="left:0;top:0;width:103px;height:18px;background:#ffffff;"></div><div class="t b" style="left:4px;top:2.5px;font-size:10.2px;font-weight:bold;color:rgba(0,0,0,0.8);line-height:14px;letter-spacing:0.1px;">Main</div><div style="left:0;top:18px;width:103px;height:258px;background:#363636;"></div><div style="left:0;top:277px;width:103px;height:6px;background:#ffffff;border-radius:0 0 6px 0;"></div><div style="left:11px;top:25px;width:36px;height:14px;background:#242424;border-radius:7px;box-shadow:0 0 0 0.5px #1a1a1a;"></div><div class="t" style="left:11px;top:25px;width:36px;text-align:center;font-size:11px;line-height:14px;color:#d4d4d4;">-0.30</div><div style="left:11px;top:44px;width:36px;height:13px;background:#242424;"></div><div class="t" style="left:11px;top:44px;width:36px;text-align:center;font-size:11px;line-height:13px;color:#d4d4d4;">0</div><div style="left:64px;top:25px;width:13px;height:243px;background:#1c1c1c;border-radius:1px;"></div><div style="left:64.5px;top:110px;width:5.5px;height:10px;background:#90e040;"></div><div style="left:64.5px;top:120px;width:5.5px;height:148px;background:#17ec5a;"></div><div style="left:71px;top:110px;width:5.5px;height:10px;background:#90e040;"></div><div style="left:71px;top:120px;width:5.5px;height:148px;background:#17ec5a;"></div><div style="left:64.5px;top:50px;width:5.5px;height:2px;background:#d03030;"></div><div style="left:71px;top:50px;width:5.5px;height:2px;background:#d03030;"></div><div style="left:70px;top:25px;width:1px;height:243px;background:#404040;"></div><div style="left:64px;top:50px;width:13px;height:1px;background:#9a9a9a;"></div><div style="left:65px;top:51px;width:11px;height:2px;background:#c03030;"></div><div style="left:58px;top:26.0px;width:4px;height:1px;background:#6a6a6a;"></div><div class="t" style="left:81px;top:25px;font-size:10px;line-height:12px;color:#b0b0b0;">6</div><div style="left:58px;top:50.0px;width:4px;height:1px;background:#6a6a6a;"></div><div class="t" style="left:81px;top:45.5px;font-size:10px;line-height:12px;color:#b0b0b0;">0</div><div style="left:58px;top:74.0px;width:4px;height:1px;background:#6a6a6a;"></div><div class="t" style="left:81px;top:69.5px;font-size:10px;line-height:12px;color:#b0b0b0;">6</div><div style="left:58px;top:98.0px;width:4px;height:1px;background:#6a6a6a;"></div><div class="t" style="left:81px;top:93.5px;font-size:10px;line-height:12px;color:#b0b0b0;">12</div><div style="left:58px;top:121.0px;width:4px;height:1px;background:#6a6a6a;"></div><div class="t" style="left:81px;top:116.5px;font-size:10px;line-height:12px;color:#b0b0b0;">18</div><div style="left:58px;top:145.0px;width:4px;height:1px;background:#6a6a6a;"></div><div class="t" style="left:81px;top:140.5px;font-size:10px;line-height:12px;color:#b0b0b0;">24</div><div style="left:58px;top:170.0px;width:4px;height:1px;background:#6a6a6a;"></div><div class="t" style="left:81px;top:165.5px;font-size:10px;line-height:12px;color:#b0b0b0;">30</div><div style="left:58px;top:191.0px;width:4px;height:1px;background:#6a6a6a;"></div><div class="t" style="left:81px;top:186.5px;font-size:10px;line-height:12px;color:#b0b0b0;">36</div><div style="left:58px;top:210.0px;width:4px;height:1px;background:#6a6a6a;"></div><div class="t" style="left:81px;top:205.5px;font-size:10px;line-height:12px;color:#b0b0b0;">42</div><div style="left:58px;top:225.5px;width:4px;height:1px;background:#6a6a6a;"></div><div class="t" style="left:81px;top:221px;font-size:10px;line-height:12px;color:#b0b0b0;">48</div><div style="left:58px;top:240.5px;width:4px;height:1px;background:#6a6a6a;"></div><div class="t" style="left:81px;top:236px;font-size:10px;line-height:12px;color:#b0b0b0;">54</div><div style="left:58px;top:254.0px;width:4px;height:1px;background:#6a6a6a;"></div><div class="t" style="left:81px;top:249.5px;font-size:10px;line-height:12px;color:#b0b0b0;">60</div><div style="left:58px;top:264px;width:4px;height:1px;background:#6a6a6a;"></div><svg style="position:absolute;left:51px;top:43px" width="13" height="14"><path d="M0.5 0.5 L12.5 7 L0.5 13.5 Z" fill="#bdbdbd"/></svg><svg style="position:absolute;left:14px;top:176px" width="30" height="32"><path d="M9.2 29.6 A13 13 0 1 1 20.8 29.6" fill="none" stroke="#141414" stroke-width="2.1"/><path d="M15 3.5 V18" stroke="#141414" stroke-width="1.7"/><path d="M11.8 0.5 L18.2 0.5 L15 4 Z" fill="#141414"/></svg><div style="left:17px;top:221px;width:25px;height:13px;background:#5c5c5c;box-shadow:0 0 0 1px #888;"></div><div class="t" style="left:17px;top:221px;width:25px;text-align:center;font-size:11px;line-height:13px;color:#222;">Solo</div><svg style="position:absolute;left:14px;top:237px" width="30" height="30"><path d="M6 23 A11.5 11.5 0 1 1 24 23" fill="none" stroke="#3d6fc9" stroke-width="2.2"/><path d="M15 15 L24 19" stroke="#141414" stroke-width="2"/><circle cx="15" cy="23" r="3.5" fill="none" stroke="#bbb" stroke-width="1.3"/></svg></div><div style="left:1490px;top:601px;width:2px;height:283px;background:#262626;"></div><svg style="position:absolute;left:11px;top:895px;" width="17" height="17" viewBox="0 0 17 17"><circle cx="8.5" cy="8.5" r="8" fill="#474747"/><rect x="7.5" y="7" width="2" height="6" fill="#262626"/><circle cx="8.5" cy="4.8" r="1.2" fill="#262626"/></svg><div style="left:44px;top:894px;width:944px;height:19px;background:#363636;border-radius:4px;"></div><div style="left:992px;top:894px;width:229px;height:19px;background:#363636;border-radius:4px;"></div><div style="left:1012px;top:894px;width:1px;height:19px;background:#262626;"></div><svg style="position:absolute;left:992px;top:894px;" width="20" height="19" viewBox="0 0 20 19"><path d="M7 5 L14 9.5 L7 14 Z" fill="#bdbdbd"/></svg><div style="left:1016.0px;top:903px;width:3px;height:1px;background:#808080;"></div><div style="left:1026.2px;top:899px;width:5px;height:1px;background:#808080;"></div><div style="left:1031.3px;top:910px;width:3px;height:1px;background:#808080;"></div><div style="left:1036.4px;top:903px;width:5px;height:1px;background:#808080;"></div><div style="left:1041.5px;top:910px;width:3px;height:1px;background:#808080;"></div><div style="left:1051.7px;top:903px;width:5px;height:1px;background:#808080;"></div><div style="left:1056.8px;top:899px;width:5px;height:1px;background:#808080;"></div><div style="left:1067.0px;top:899px;width:3px;height:1px;background:#808080;"></div><div style="left:1082.3px;top:910px;width:5px;height:1px;background:#808080;"></div><div style="left:1092.5px;top:910px;width:2px;height:1px;background:#808080;"></div><div style="left:1102.7px;top:903px;width:3px;height:1px;background:#808080;"></div><div style="left:1107.8px;top:910px;width:5px;height:1px;background:#808080;"></div><div style="left:1118.0px;top:910px;width:5px;height:1px;background:#808080;"></div><div style="left:1123.1px;top:910px;width:5px;height:1px;background:#808080;"></div><div style="left:1128.2px;top:907px;width:5px;height:1px;background:#808080;"></div><div style="left:1138.4px;top:907px;width:5px;height:1px;background:#808080;"></div><div style="left:1148.6px;top:907px;width:5px;height:1px;background:#808080;"></div><div style="left:1158.8px;top:903px;width:5px;height:1px;background:#808080;"></div><div style="left:1169.0px;top:907px;width:2px;height:1px;background:#808080;"></div><div style="left:1174.1px;top:910px;width:2px;height:1px;background:#808080;"></div><div style="left:1179.2px;top:899px;width:3px;height:1px;background:#808080;"></div><div style="left:1189.4px;top:910px;width:3px;height:1px;background:#808080;"></div><div style="left:1199.6px;top:899px;width:3px;height:1px;background:#808080;"></div><div style="left:1209.8px;top:907px;width:5px;height:1px;background:#808080;"></div><div style="left:1214.9px;top:899px;width:3px;height:1px;background:#808080;"></div><div style="left:1175px;top:894px;width:1.5px;height:19px;background:#e0e0e0;"></div><div style="left:1230px;top:894px;width:211px;height:19px;background:#363636;border-radius:4px;"></div><div style="left:1250px;top:894px;width:1px;height:19px;background:#262626;"></div><svg style="position:absolute;left:1230px;top:894px;" width="20" height="19" viewBox="0 0 20 19"><path d="M7 5 L14 9.5 L7 14 Z" fill="#bdbdbd"/></svg><div class="t b" style="left:1257px;top:894.5px;font-size:11px;color:#c8c8c8;line-height:19px;font-weight:bold;">Bass</div><div style="left:1288px;top:895px;width:12px;height:18px;background:#1b1b1b;"></div><div style="left:1289px;top:897px;width:10px;height:1px;background:#2ab4d8;"></div><div style="left:1289px;top:904px;width:10px;height:1px;background:#e8a040;"></div><div style="left:1290px;top:900px;width:6px;height:1px;background:#2a7a90;"></div><div style="left:1290px;top:908px;width:8px;height:2px;background:#6a5030;"></div><div style="left:1301px;top:895px;width:12px;height:18px;background:#2c2c2c;"></div><div style="left:1314px;top:895px;width:43px;height:18px;background:#161616;"></div><div style="left:1325px;top:896px;width:11px;height:1.5px;background:#2ab4d8;"></div><div style="left:1316px;top:899px;width:39px;height:1px;background:#333;"></div><div style="left:1317px;top:900px;width:8px;height:1px;background:#2a8aa8;"></div><div style="left:1336px;top:900px;width:10px;height:1px;background:#2a8aa8;"></div><div style="left:1316px;top:908px;width:39px;height:1px;background:#2a6a80;"></div><div style="left:1358px;top:895px;width:28px;height:18px;background:#262626;"></div><div style="left:1359px;top:897px;width:9px;height:1px;background:#555;"></div><div style="left:1372px;top:899px;width:12px;height:2px;background:#e0a040;"></div><div style="left:1360px;top:909px;width:24px;height:1px;background:#444;"></div><div style="left:1387px;top:895px;width:28px;height:18px;background:#1f1f1f;"></div><div style="left:1388px;top:897px;width:4px;height:1px;background:#e0a040;"></div><div style="left:1400px;top:898px;width:3px;height:3px;background:#2ab4d8;"></div><div style="left:1389px;top:904px;width:8px;height:4px;background:#111;"></div><div style="left:1404px;top:905px;width:10px;height:2px;background:#2ab4d8;"></div><div style="left:1395px;top:910px;width:18px;height:1px;background:#2a8aa8;"></div><div style="left:1416px;top:895px;width:25px;height:18px;background:#141414;"></div><div style="left:1417px;top:897px;width:4px;height:1px;background:#666;"></div><div style="left:1434px;top:897px;width:6px;height:2px;background:#e0a040;"></div><div style="left:1434px;top:902px;width:6px;height:2px;background:#e0a040;"></div><div style="left:1424px;top:899px;width:1px;height:12px;background:#333;"></div><div style="left:1429px;top:899px;width:1px;height:12px;background:#333;"></div><svg style="position:absolute;left:1301px;top:895px;" width="12" height="18" viewBox="0 0 12 18"><circle cx="3.5" cy="5" r="2.2" fill="none" stroke="#777" stroke-width="0.8"/><circle cx="8.5" cy="5" r="2.2" fill="none" stroke="#2ab4d8" stroke-width="0.8"/><circle cx="3.5" cy="13" r="2.2" fill="none" stroke="#e0a040" stroke-width="0.8"/><circle cx="8.5" cy="13" r="2.2" fill="none" stroke="#e0a040" stroke-width="0.8"/></svg><svg style="position:absolute;left:1358px;top:895px;" width="28" height="18" viewBox="0 0 28 18"><circle cx="5" cy="13" r="2.5" fill="none" stroke="#2ab4d8" stroke-width="0.8"/><circle cx="12" cy="13" r="2.5" fill="none" stroke="#777" stroke-width="0.8"/><circle cx="5" cy="6" r="2.5" fill="none" stroke="#777" stroke-width="0.8"/></svg><svg style="position:absolute;left:1314px;top:895px;" width="43" height="18" viewBox="0 0 43 18"><path d="M2 12 L6 4 L14 4 L18 12 M22 5 L26 10 L40 11" stroke="#2ab4d8" stroke-width="0.8" fill="none"/></svg><svg style="position:absolute;left:1458px;top:894px;" width="30" height="19" viewBox="0 0 30 19"><rect x="2.0" y="9" width="1.8" height="8" fill="#f0a850"/><rect x="5.2" y="4" width="1.8" height="13" fill="#f0a850"/><rect x="8.4" y="7" width="1.8" height="10" fill="#f0a850"/><rect x="11.6" y="2" width="1.8" height="15" fill="#f0a850"/><path d="M22 7 L28 7 L25 11 Z" fill="#555"/></svg>
</div></body></html>
